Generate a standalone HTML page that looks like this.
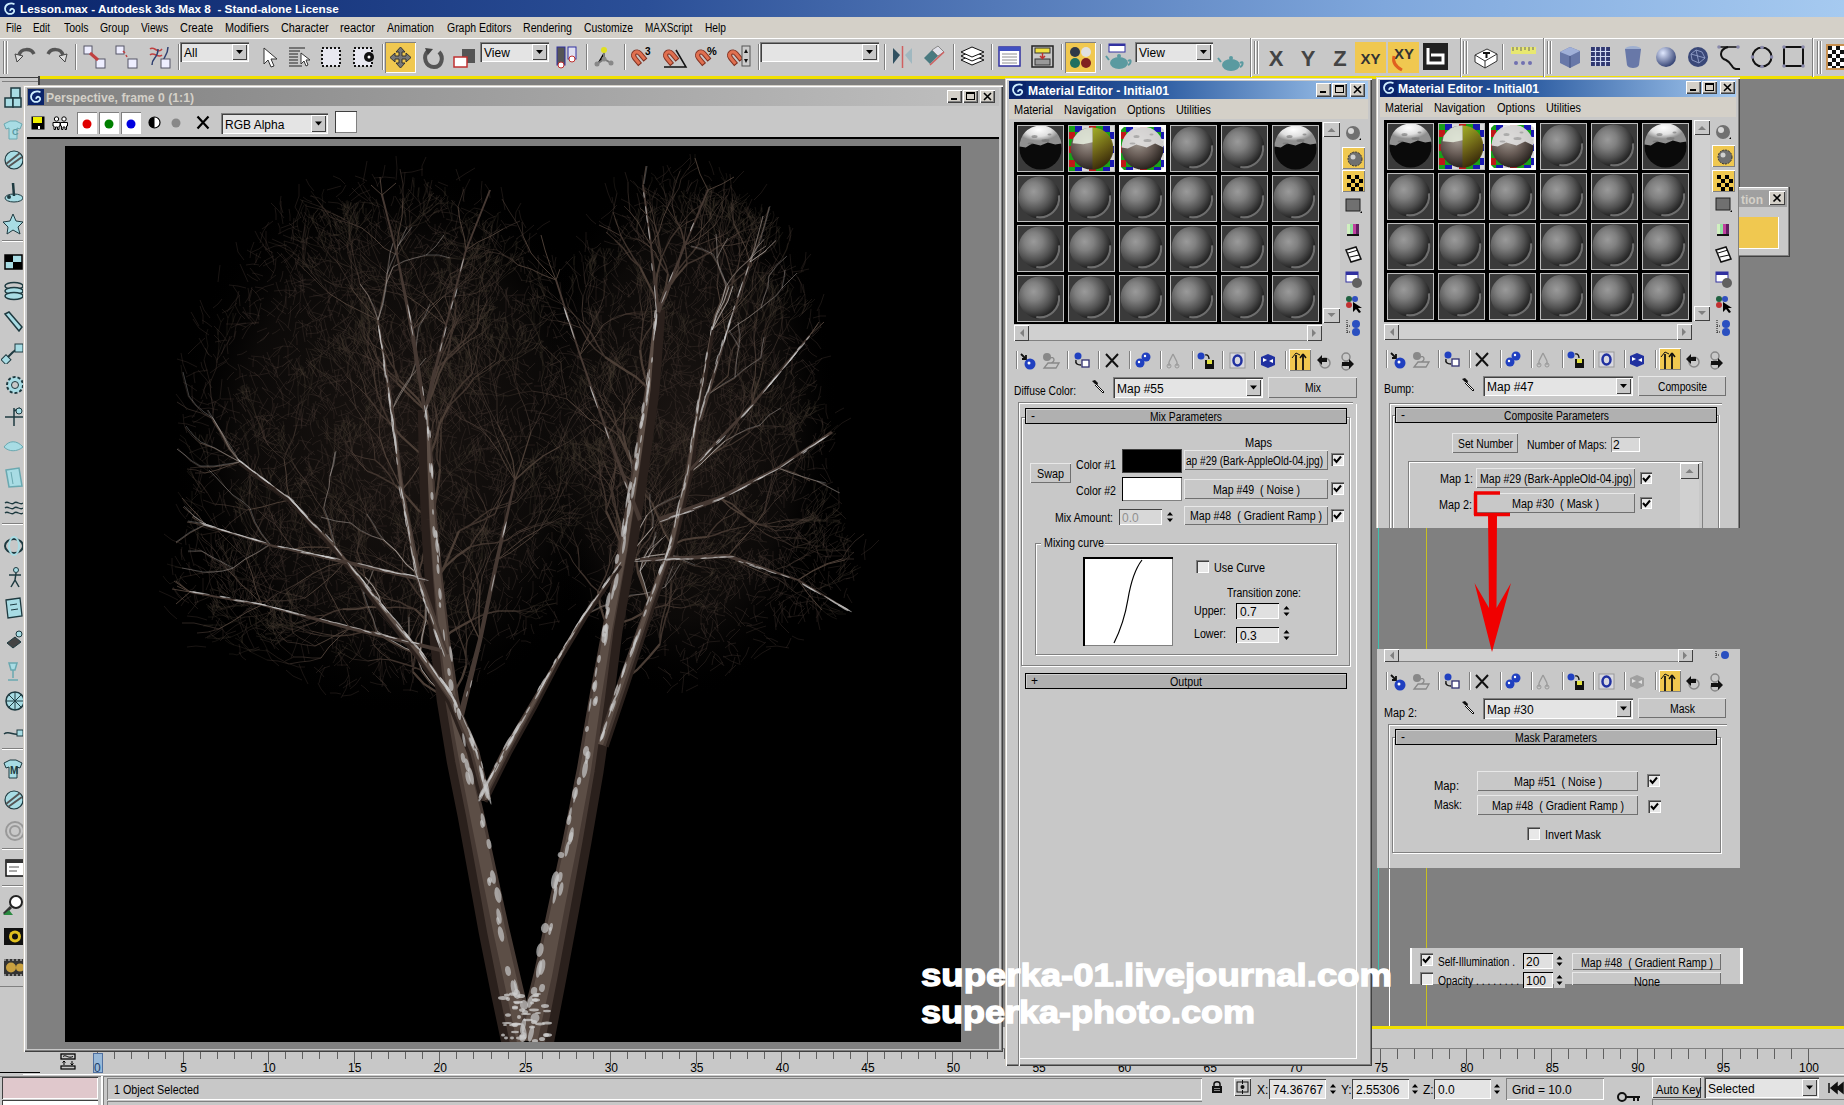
<!DOCTYPE html><html><head><meta charset="utf-8"><style>
html,body{margin:0;padding:0;width:1844px;height:1105px;overflow:hidden;background:#C8C8C8;}
body{position:relative;font-family:"Liberation Sans",sans-serif;}
div{position:absolute;box-sizing:border-box;}
svg{position:absolute;overflow:visible;}
</style></head><body>
<div style="left:0px;top:0px;width:1844px;height:1105px;background:#C8C8C8;"></div>
<div style="left:0px;top:0px;width:1844px;height:17px;background:linear-gradient(90deg,#0A246A 0%,#2B4F97 35%,#7FA7DC 75%,#A6CAF0 100%);"></div>
<svg style="position:absolute;left:2px;top:1px;" width="16" height="16" viewBox="0 0 16 16"><rect width="16" height="16" fill="#0A246A"/><path d="M12.5 3.2 C9 1.5 3.5 2.5 3 7.5 C2.8 11.5 6.5 13.5 9.5 12.8 C12.5 12 13 9 11 8 C9.5 7.3 7.5 8.5 8.5 10" stroke="#CFEFFF" stroke-width="1.8" fill="none"/></svg>
<div style="left:20px;top:2.86px;font-size:11px;line-height:12.65px;color:#fff;font-weight:bold;transform:scaleX(1.0680);transform-origin:0 0;white-space:pre;">Lesson.max - Autodesk 3ds Max 8  - Stand-alone License</div>
<div style="left:0px;top:17px;width:1844px;height:21px;background:#D4D0C8;"></div>
<div style="left:5.5px;top:21.94px;font-size:12px;line-height:13.8px;color:#000;transform:scaleX(0.8013);transform-origin:0 0;white-space:pre;">File</div>
<div style="left:33px;top:21.94px;font-size:12px;line-height:13.8px;color:#000;transform:scaleX(0.8224);transform-origin:0 0;white-space:pre;">Edit</div>
<div style="left:63.5px;top:21.94px;font-size:12px;line-height:13.8px;color:#000;transform:scaleX(0.8745);transform-origin:0 0;white-space:pre;">Tools</div>
<div style="left:100px;top:21.94px;font-size:12px;line-height:13.8px;color:#000;transform:scaleX(0.8697);transform-origin:0 0;white-space:pre;">Group</div>
<div style="left:141px;top:21.94px;font-size:12px;line-height:13.8px;color:#000;transform:scaleX(0.8491);transform-origin:0 0;white-space:pre;">Views</div>
<div style="left:180px;top:21.94px;font-size:12px;line-height:13.8px;color:#000;transform:scaleX(0.9163);transform-origin:0 0;white-space:pre;">Create</div>
<div style="left:225px;top:21.94px;font-size:12px;line-height:13.8px;color:#000;transform:scaleX(0.9037);transform-origin:0 0;white-space:pre;">Modifiers</div>
<div style="left:280.5px;top:21.94px;font-size:12px;line-height:13.8px;color:#000;transform:scaleX(0.9015);transform-origin:0 0;white-space:pre;">Character</div>
<div style="left:340px;top:21.94px;font-size:12px;line-height:13.8px;color:#000;transform:scaleX(0.9372);transform-origin:0 0;white-space:pre;">reactor</div>
<div style="left:387px;top:21.94px;font-size:12px;line-height:13.8px;color:#000;transform:scaleX(0.8808);transform-origin:0 0;white-space:pre;">Animation</div>
<div style="left:446.5px;top:21.94px;font-size:12px;line-height:13.8px;color:#000;transform:scaleX(0.8714);transform-origin:0 0;white-space:pre;">Graph Editors</div>
<div style="left:523px;top:21.94px;font-size:12px;line-height:13.8px;color:#000;transform:scaleX(0.8849);transform-origin:0 0;white-space:pre;">Rendering</div>
<div style="left:584px;top:21.94px;font-size:12px;line-height:13.8px;color:#000;transform:scaleX(0.8644);transform-origin:0 0;white-space:pre;">Customize</div>
<div style="left:645.4px;top:21.94px;font-size:12px;line-height:13.8px;color:#000;transform:scaleX(0.8329);transform-origin:0 0;white-space:pre;">MAXScript</div>
<div style="left:705px;top:21.94px;font-size:12px;line-height:13.8px;color:#000;transform:scaleX(0.8506);transform-origin:0 0;white-space:pre;">Help</div>
<div style="left:0px;top:38px;width:1844px;height:39px;background:#C8C8C8;box-shadow:inset 0 1px 0 #fff;"></div>
<div style="left:40px;top:76px;width:1805px;height:3px;background:#F0E000;"></div>
<div style="left:40px;top:76px;width:2px;height:8px;background:#F0E000;"></div>
<div style="left:38px;top:76px;width:2px;height:10px;background:#404040;"></div>
<div style="left:0px;top:77px;width:38px;height:1px;background:#404040;"></div>
<div style="left:2px;top:81px;width:36px;height:1px;background:#808080;"></div>
<div style="left:40px;top:79px;width:1804px;height:948px;background:#808080;"></div>
<div style="left:1372px;top:1026px;width:472px;height:3px;background:#F0E000;"></div>
<div style="left:1372px;top:1029px;width:472px;height:19px;background:#C8C8C8;"></div>
<div style="left:1378px;top:528px;width:1px;height:457px;background:#3CC0B0;"></div>
<div style="left:1389px;top:869px;width:1px;height:157px;background:#fff;"></div>
<div style="left:1426px;top:528px;width:1px;height:498px;background:#C8C020;"></div>
<div style="left:3px;top:41px;width:1px;height:33px;background:#808080;box-shadow:1px 0 0 #fff;"></div>
<div style="left:6px;top:41px;width:1px;height:33px;background:#808080;box-shadow:1px 0 0 #fff;"></div>
<svg style="position:absolute;left:13px;top:46px;" width="24" height="20" viewBox="0 0 24 20"><path d="M4 16 L2 8 L10 10Z" fill="#ddd" stroke="#444"/><path d="M6 9 C8 2 18 2 21 8" stroke="#555" stroke-width="3.5" fill="none"/></svg>
<svg style="position:absolute;left:45px;top:46px;" width="24" height="20" viewBox="0 0 24 20"><path d="M20 16 L22 8 L14 10Z" fill="#ddd" stroke="#444"/><path d="M18 9 C16 2 6 2 3 8" stroke="#555" stroke-width="3.5" fill="none"/></svg>
<div style="left:75px;top:44px;width:1px;height:26px;background:#808080;box-shadow:1px 0 0 #fff;"></div>
<svg style="position:absolute;left:83px;top:45px;" width="24" height="24" viewBox="0 0 24 24"><rect x="1" y="1" width="8" height="8" fill="#EEF" stroke="#556"/><rect x="13" y="14" width="9" height="9" fill="#EEF" stroke="#556"/><path d="M7 8 L15 15" stroke="#C04040" stroke-width="3"/></svg>
<svg style="position:absolute;left:115px;top:45px;" width="24" height="24" viewBox="0 0 24 24"><rect x="1" y="1" width="8" height="8" fill="#EEF" stroke="#556"/><rect x="13" y="14" width="9" height="9" fill="#EEF" stroke="#556"/><path d="M8 6 L10 8 M11 10 L12 12" stroke="#C04040" stroke-width="1.5"/></svg>
<svg style="position:absolute;left:148px;top:45px;" width="24" height="24" viewBox="0 0 24 24"><path d="M2 4 C6 0 10 10 14 4 M2 10 C6 6 10 14 14 10" stroke="#C04040" stroke-width="1.5" fill="none"/><path d="M4 20 C4 12 10 14 10 4 M14 20 C14 12 20 12 20 2" stroke="#304070" stroke-width="1.5" fill="none"/><rect x="13" y="14" width="9" height="9" fill="#EEF" stroke="#556"/></svg>
<div style="left:178px;top:44px;width:1px;height:26px;background:#808080;box-shadow:1px 0 0 #fff;"></div>
<div style="left:180px;top:42px;width:69px;height:20px;background:#E4E4E4;box-shadow:inset 1px 1px 0 #808080, inset 2px 2px 0 #404040, inset -1px -1px 0 #fff;"></div>
<div style="left:232px;top:44px;width:15px;height:16px;background:#C8C8C8;box-shadow:inset 1px 1px 0 #fff, inset -1px -1px 0 #404040, inset -2px -2px 0 #808080;box-shadow:inset 1px 1px 0 #fff, inset -1px -1px 0 #404040;"></div>
<svg style="position:absolute;left:232px;top:44px;" width="15" height="16" viewBox="0 0 15 16"><path d="M4 6.0 L11 6.0 L7.5 10.0Z" fill="#000"/></svg>
<div style="left:184px;top:47.44px;font-size:12px;line-height:13.8px;color:#000;white-space:pre;">All</div>
<svg style="position:absolute;left:262px;top:47px;" width="18" height="22" viewBox="0 0 18 22"><path d="M2 1 L2 17 L6 13 L9 20 L12 19 L9 12 L15 12Z" fill="#fff" stroke="#333"/></svg>
<svg style="position:absolute;left:288px;top:46px;" width="24" height="22" viewBox="0 0 24 22"><g stroke="#222" stroke-width="1.2"><path d="M1 2 H17 M1 5 H12 M1 8 H10 M1 11 H10 M1 14 H10 M1 17 H10 M1 20 H14"/></g><path d="M13 7 L13 18 L16 15 L18 20 L20 19 L18 14 L22 14Z" fill="#fff" stroke="#333"/></svg>
<svg style="position:absolute;left:320px;top:46px;" width="23" height="23" viewBox="0 0 23 23"><rect x="2" y="2" width="18" height="18" fill="#E8E8F0" stroke="#111" stroke-dasharray="2 2" stroke-width="2"/></svg>
<svg style="position:absolute;left:352px;top:46px;" width="23" height="23" viewBox="0 0 23 23"><rect x="2" y="2" width="18" height="18" fill="#E8E8F0" stroke="#111" stroke-dasharray="2 2" stroke-width="2"/><circle cx="17" cy="11" r="5" fill="#111"/><circle cx="17" cy="11" r="1.5" fill="#fff"/></svg>
<div style="left:382px;top:44px;width:1px;height:26px;background:#808080;box-shadow:1px 0 0 #fff;"></div>
<div style="left:385px;top:42px;width:31px;height:31px;background:#F0C850;box-shadow:inset 1px 1px 0 #808080, inset -1px -1px 0 #fff;"></div>
<svg style="position:absolute;left:388px;top:45px;" width="25" height="25" viewBox="0 0 25 25"><path d="M12.5 2 L17 7 H14 V11 H18 V8 L23 12.5 L18 17 V14 H14 V18 H17 L12.5 23 L8 18 H11 V14 H7 V17 L2 12.5 L7 8 V11 H11 V7 H8Z" fill="#777" stroke="#333"/></svg>
<svg style="position:absolute;left:422px;top:45px;" width="23" height="25" viewBox="0 0 23 25"><path d="M6 6 C0 12 4 22 12 22 C20 22 22 12 17 7" stroke="#555" stroke-width="4" fill="none"/><path d="M3 3 L11 4 L6 10Z" fill="#444"/></svg>
<svg style="position:absolute;left:453px;top:48px;" width="23" height="22" viewBox="0 0 23 22"><rect x="9" y="1" width="13" height="14" fill="#555"/><rect x="1" y="9" width="13" height="10" fill="#fff" stroke="#C03030" stroke-width="1.5"/></svg>
<div style="left:480px;top:42px;width:69px;height:20px;background:#E4E4E4;box-shadow:inset 1px 1px 0 #808080, inset 2px 2px 0 #404040, inset -1px -1px 0 #fff;"></div>
<div style="left:532px;top:44px;width:15px;height:16px;background:#C8C8C8;box-shadow:inset 1px 1px 0 #fff, inset -1px -1px 0 #404040, inset -2px -2px 0 #808080;box-shadow:inset 1px 1px 0 #fff, inset -1px -1px 0 #404040;"></div>
<svg style="position:absolute;left:532px;top:44px;" width="15" height="16" viewBox="0 0 15 16"><path d="M4 6.0 L11 6.0 L7.5 10.0Z" fill="#000"/></svg>
<div style="left:484px;top:47.44px;font-size:12px;line-height:13.8px;color:#000;white-space:pre;">View</div>
<svg style="position:absolute;left:556px;top:45px;" width="23" height="25" viewBox="0 0 23 25"><rect x="1" y="2" width="8" height="18" fill="#555" stroke="#3030A0"/><rect x="12" y="2" width="8" height="12" fill="#E0E0F0" stroke="#3030A0"/><circle cx="5" cy="20" r="3" fill="#fff" stroke="#C03030"/><circle cx="16" cy="14" r="3" fill="#fff" stroke="#C03030"/></svg>
<div style="left:586px;top:44px;width:1px;height:26px;background:#808080;box-shadow:1px 0 0 #fff;"></div>
<svg style="position:absolute;left:594px;top:46px;" width="20" height="22" viewBox="0 0 20 22"><path d="M10 6 L10 13 L3 18 M10 13 L17 17" stroke="#777" stroke-width="2"/><circle cx="10" cy="4" r="3" fill="#E0E020"/><circle cx="3" cy="18" r="2.5" fill="#888"/><circle cx="17" cy="17" r="2.5" fill="#888"/><circle cx="10" cy="13" r="2.5" fill="#888"/></svg>
<div style="left:624px;top:44px;width:1px;height:26px;background:#808080;box-shadow:1px 0 0 #fff;"></div>
<svg style="position:absolute;left:630px;top:45px;" width="24" height="24" viewBox="0 0 24 24"><path d="M3 10 C3 2 14 2 14 10 L14 18 L10 18 L10 11 C10 7 7 7 7 11 L7 18 L3 18Z" fill="#E07050" stroke="#803020" transform="rotate(-40 9 12)"/><text x="15" y="10" font-size="10" font-weight="bold" font-family="Liberation Sans">3</text></svg>
<svg style="position:absolute;left:662px;top:45px;" width="25" height="24" viewBox="0 0 25 24"><path d="M3 10 C3 2 14 2 14 10 L14 18 L10 18 L10 11 C10 7 7 7 7 11 L7 18 L3 18Z" fill="#E07050" stroke="#803020" transform="rotate(-40 9 12)"/><path d="M2 22 H24 L14 5" stroke="#111" fill="none" stroke-width="1.5"/></svg>
<svg style="position:absolute;left:694px;top:45px;" width="25" height="24" viewBox="0 0 25 24"><path d="M3 10 C3 2 14 2 14 10 L14 18 L10 18 L10 11 C10 7 7 7 7 11 L7 18 L3 18Z" fill="#E07050" stroke="#803020" transform="rotate(-40 9 12)"/><text x="13" y="10" font-size="11" font-weight="bold" font-family="Liberation Sans">%</text></svg>
<svg style="position:absolute;left:726px;top:45px;" width="25" height="24" viewBox="0 0 25 24"><path d="M3 10 C3 2 14 2 14 10 L14 18 L10 18 L10 11 C10 7 7 7 7 11 L7 18 L3 18Z" fill="#E07050" stroke="#803020" transform="rotate(-40 9 12)"/><rect x="16" y="1" width="8" height="20" fill="#ccc" stroke="#555"/><path d="M18 8 L20 4 L22 8Z M18 14 L20 18 L22 14Z" fill="#111"/></svg>
<div style="left:758px;top:44px;width:1px;height:26px;background:#808080;box-shadow:1px 0 0 #fff;"></div>
<div style="left:760px;top:42px;width:119px;height:20px;background:#E4E4E4;box-shadow:inset 1px 1px 0 #808080, inset 2px 2px 0 #404040, inset -1px -1px 0 #fff;"></div>
<div style="left:862px;top:44px;width:15px;height:16px;background:#C8C8C8;box-shadow:inset 1px 1px 0 #fff, inset -1px -1px 0 #404040, inset -2px -2px 0 #808080;box-shadow:inset 1px 1px 0 #fff, inset -1px -1px 0 #404040;"></div>
<svg style="position:absolute;left:862px;top:44px;" width="15" height="16" viewBox="0 0 15 16"><path d="M4 6.0 L11 6.0 L7.5 10.0Z" fill="#000"/></svg>
<div style="left:764px;top:47.44px;font-size:12px;line-height:13.8px;color:#000;white-space:pre;"></div>
<div style="left:884px;top:44px;width:1px;height:26px;background:#808080;box-shadow:1px 0 0 #fff;"></div>
<svg style="position:absolute;left:891px;top:46px;" width="23" height="22" viewBox="0 0 23 22"><path d="M2 2 L9 9 L2 18Z" fill="#305060"/><path d="M21 2 L14 9 L21 18Z" fill="#A0B8C0"/><path d="M11.5 0 V22" stroke="#D06060" stroke-width="1.5"/></svg>
<svg style="position:absolute;left:922px;top:46px;" width="25" height="24" viewBox="0 0 25 24"><path d="M2 12 L10 4 L16 10 L8 18Z" fill="#4A7A80"/><path d="M10 4 L16 0 L22 6 L16 10Z" fill="#E0E0E8" stroke="#888"/><path d="M8 19 L22 6" stroke="#D06060" stroke-width="1.5"/></svg>
<div style="left:953px;top:44px;width:1px;height:26px;background:#808080;box-shadow:1px 0 0 #fff;"></div>
<svg style="position:absolute;left:960px;top:46px;" width="25" height="24" viewBox="0 0 25 24"><g fill="#fff" stroke="#111"><path d="M1 14 L12 9 L24 14 L12 19Z"/><path d="M1 10 L12 5 L24 10 L12 15Z"/><path d="M1 6 L12 1 L24 6 L12 11Z"/></g></svg>
<div style="left:991px;top:44px;width:1px;height:26px;background:#808080;box-shadow:1px 0 0 #fff;"></div>
<svg style="position:absolute;left:998px;top:45px;" width="23" height="23" viewBox="0 0 23 23"><rect x="1" y="2" width="21" height="19" fill="#fff" stroke="#3030A0" stroke-width="1.5"/><rect x="1" y="2" width="21" height="4" fill="#4050C0"/><path d="M4 9 H19 M4 12 H19 M4 15 H19 M4 18 H19" stroke="#909090"/></svg>
<svg style="position:absolute;left:1031px;top:45px;" width="23" height="23" viewBox="0 0 23 23"><rect x="1" y="1" width="21" height="21" fill="#C8C8C8" stroke="#222" stroke-width="1.5"/><rect x="4" y="3" width="15" height="5" fill="#F0E040" stroke="#333"/><rect x="4" y="14" width="15" height="6" fill="#999" stroke="#333"/><path d="M11.5 8 V13 M9 11 L11.5 13.5 L14 11" stroke="#C03030" stroke-width="1.5" fill="none"/></svg>
<div style="left:1061px;top:44px;width:1px;height:26px;background:#808080;box-shadow:1px 0 0 #fff;"></div>
<div style="left:1065px;top:42px;width:31px;height:31px;background:#F0C850;box-shadow:inset 1px 1px 0 #808080, inset -1px -1px 0 #fff;"></div>
<svg style="position:absolute;left:1068px;top:45px;" width="25" height="25" viewBox="0 0 25 25"><circle cx="7" cy="7" r="5" fill="#303848"/><circle cx="18" cy="7" r="5" fill="#E0E0E0"/><circle cx="7" cy="18" r="5" fill="#207060"/><circle cx="18" cy="18" r="5" fill="#802020"/></svg>
<div style="left:1100px;top:44px;width:1px;height:26px;background:#808080;box-shadow:1px 0 0 #fff;"></div>
<svg style="position:absolute;left:1106px;top:44px;" width="26" height="26" viewBox="0 0 26 26"><rect x="3" y="0" width="16" height="8" fill="#fff" stroke="#3030A0"/><rect x="3" y="0" width="16" height="2" fill="#3030A0"/><ellipse cx="13" cy="19" rx="9" ry="6" fill="#5A9AA0"/><path d="M3 16 L0 12 M22 17 C26 14 25 20 22 21" stroke="#5A9AA0" stroke-width="2" fill="none"/><circle cx="13" cy="12" r="2" fill="#5A9AA0"/></svg>
<div style="left:1135px;top:42px;width:78px;height:20px;background:#E4E4E4;box-shadow:inset 1px 1px 0 #808080, inset 2px 2px 0 #404040, inset -1px -1px 0 #fff;"></div>
<div style="left:1196px;top:44px;width:15px;height:16px;background:#C8C8C8;box-shadow:inset 1px 1px 0 #fff, inset -1px -1px 0 #404040, inset -2px -2px 0 #808080;box-shadow:inset 1px 1px 0 #fff, inset -1px -1px 0 #404040;"></div>
<svg style="position:absolute;left:1196px;top:44px;" width="15" height="16" viewBox="0 0 15 16"><path d="M4 6.0 L11 6.0 L7.5 10.0Z" fill="#000"/></svg>
<div style="left:1139px;top:47.44px;font-size:12px;line-height:13.8px;color:#000;white-space:pre;">View</div>
<svg style="position:absolute;left:1218px;top:46px;" width="26" height="26" viewBox="0 0 26 26"><ellipse cx="13" cy="19" rx="9" ry="6" fill="#5A9AA0"/><path d="M3 16 L0 12 M22 17 C26 14 25 20 22 21" stroke="#5A9AA0" stroke-width="2" fill="none"/><circle cx="13" cy="12" r="2" fill="#5A9AA0"/></svg>
<div style="left:1250px;top:38px;width:1px;height:39px;background:#808080;box-shadow:1px 0 0 #fff;"></div>
<div style="left:1254px;top:41px;width:1px;height:33px;background:#808080;box-shadow:1px 0 0 #fff;"></div>
<div style="left:1257px;top:41px;width:1px;height:33px;background:#808080;box-shadow:1px 0 0 #fff;"></div>
<svg style="position:absolute;left:1265px;top:47px;" width="22" height="22" viewBox="0 0 22 22"><text x="11" y="19" text-anchor="middle" font-size="22" font-weight="bold" font-family="Liberation Sans" fill="#444">X</text></svg>
<svg style="position:absolute;left:1297px;top:47px;" width="22" height="22" viewBox="0 0 22 22"><text x="11" y="19" text-anchor="middle" font-size="22" font-weight="bold" font-family="Liberation Sans" fill="#444">Y</text></svg>
<svg style="position:absolute;left:1329px;top:47px;" width="22" height="22" viewBox="0 0 22 22"><text x="11" y="19" text-anchor="middle" font-size="22" font-weight="bold" font-family="Liberation Sans" fill="#444">Z</text></svg>
<div style="left:1355px;top:42px;width:31px;height:31px;background:#F0C850;"></div>
<svg style="position:absolute;left:1355px;top:42px;" width="31" height="31" viewBox="0 0 31 31"><text x="15.5" y="22" text-anchor="middle" font-size="15" font-weight="bold" font-family="Liberation Sans" fill="#333">XY</text></svg>
<div style="left:1388px;top:42px;width:31px;height:31px;background:#F0C850;"></div>
<svg style="position:absolute;left:1388px;top:42px;" width="31" height="31" viewBox="0 0 31 31"><text x="16" y="17" text-anchor="middle" font-size="15" font-weight="bold" font-family="Liberation Sans" fill="#333">XY</text><path d="M6 14 C4 22 10 26 14 28" stroke="#E06020" stroke-width="3" fill="none"/></svg>
<div style="left:1423px;top:43px;width:25px;height:27px;background:#222;"></div>
<svg style="position:absolute;left:1423px;top:43px;" width="25" height="27" viewBox="0 0 25 27"><path d="M5 5 V20 H20 V12 H8" stroke="#fff" stroke-width="3" fill="none"/></svg>
<div style="left:1460px;top:38px;width:1px;height:39px;background:#808080;box-shadow:1px 0 0 #fff;"></div>
<div style="left:1463px;top:41px;width:1px;height:33px;background:#808080;box-shadow:1px 0 0 #fff;"></div>
<div style="left:1466px;top:41px;width:1px;height:33px;background:#808080;box-shadow:1px 0 0 #fff;"></div>
<svg style="position:absolute;left:1473px;top:46px;" width="26" height="24" viewBox="0 0 26 24"><path d="M2 9 L14 3 L24 8 L24 15 L12 22 L2 16Z" fill="#fff" stroke="#333"/><path d="M2 9 L12 15 L24 8 M12 15 V22" stroke="#333" fill="none"/><path d="M10 7 H17 M13.5 7 V12" stroke="#111" stroke-width="2"/></svg>
<div style="left:1502px;top:44px;width:1px;height:26px;background:#808080;box-shadow:1px 0 0 #fff;"></div>
<svg style="position:absolute;left:1510px;top:45px;" width="27" height="26" viewBox="0 0 27 26"><rect x="1" y="2" width="25" height="7" fill="#E8E870"/><path d="M3 2 V6 M7 2 V5 M11 2 V6 M15 2 V5 M19 2 V6 M23 2 V5" stroke="#666"/><circle cx="6" cy="18" r="2" fill="#7070B0"/><circle cx="13" cy="18" r="2" fill="#7070B0"/><circle cx="20" cy="18" r="2" fill="#7070B0"/></svg>
<div style="left:1543px;top:38px;width:1px;height:39px;background:#808080;box-shadow:1px 0 0 #fff;"></div>
<div style="left:1547px;top:41px;width:1px;height:33px;background:#808080;box-shadow:1px 0 0 #fff;"></div>
<div style="left:1550px;top:41px;width:1px;height:33px;background:#808080;box-shadow:1px 0 0 #fff;"></div>
<svg style="position:absolute;left:1558px;top:45px;" width="23" height="24" viewBox="0 0 23 24"><path d="M2 7 L12 2 L22 6 L22 18 L12 23 L2 18Z" fill="#6878A8"/><path d="M2 7 L12 11 L22 6 L12 2Z" fill="#A0B0D8"/><path d="M12 11 V23" stroke="#405080"/></svg>
<svg style="position:absolute;left:1590px;top:46px;" width="21" height="21" viewBox="0 0 21 21"><rect x="1" y="1" width="19" height="19" fill="#303870"/><path d="M5.5 1 V20 M10.5 1 V20 M15.5 1 V20 M1 5.5 H20 M1 10.5 H20 M1 15.5 H20" stroke="#D0D8F0" stroke-width="1.2"/></svg>
<svg style="position:absolute;left:1623px;top:45px;" width="20" height="25" viewBox="0 0 20 25"><ellipse cx="10" cy="4" rx="8" ry="3" fill="#A0B0D0"/><path d="M2 4 L4 20 C5 24 15 24 16 20 L18 4" fill="#6878A8"/></svg>
<svg style="position:absolute;left:1655px;top:46px;" width="22" height="22" viewBox="0 0 22 22"><defs><radialGradient id="sg1" cx="0.35" cy="0.3" r="0.7"><stop offset="0" stop-color="#E0E8FF"/><stop offset="1" stop-color="#3A4878"/></radialGradient></defs><circle cx="11" cy="11" r="10" fill="url(#sg1)"/></svg>
<svg style="position:absolute;left:1687px;top:46px;" width="22" height="22" viewBox="0 0 22 22"><circle cx="11" cy="11" r="10" fill="#3A4878"/><path d="M4 8 L9 4 L15 6 L18 12 L12 17 L5 14Z M9 4 L12 17 M4 8 L18 12" stroke="#9AA8D0" stroke-width="0.8" fill="none"/></svg>
<svg style="position:absolute;left:1716px;top:44px;" width="27" height="28" viewBox="0 0 27 28"><path d="M3 3 H22" stroke="#111" stroke-width="1.5"/><path d="M12 3 C2 6 4 14 10 16 C18 20 14 26 24 25" stroke="#111" stroke-width="2" fill="none"/><circle cx="3" cy="3" r="1.8" fill="#88A"/><circle cx="22" cy="3" r="1.8" fill="#88A"/></svg>
<svg style="position:absolute;left:1750px;top:45px;" width="24" height="24" viewBox="0 0 24 24"><circle cx="12" cy="12" r="9.5" stroke="#111" stroke-width="2" fill="none"/><circle cx="12" cy="2.5" r="1.8" fill="#88A"/><circle cx="2.5" cy="12" r="1.8" fill="#88A"/><circle cx="21.5" cy="12" r="1.8" fill="#88A"/><circle cx="12" cy="21.5" r="1.8" fill="#88A"/></svg>
<svg style="position:absolute;left:1782px;top:45px;" width="23" height="24" viewBox="0 0 23 24"><rect x="2" y="2" width="19" height="19" stroke="#111" stroke-width="2" fill="none"/><circle cx="2" cy="2" r="1.8" fill="#88A"/><circle cx="21" cy="2" r="1.8" fill="#88A"/><circle cx="2" cy="21" r="1.8" fill="#88A"/><circle cx="21" cy="21" r="1.8" fill="#88A"/></svg>
<div style="left:1812px;top:38px;width:1px;height:39px;background:#808080;box-shadow:1px 0 0 #fff;"></div>
<div style="left:1817px;top:41px;width:1px;height:33px;background:#808080;box-shadow:1px 0 0 #fff;"></div>
<div style="left:1820px;top:41px;width:1px;height:33px;background:#808080;box-shadow:1px 0 0 #fff;"></div>
<div style="left:1826px;top:44px;width:18px;height:26px;background:#C89050;"></div>
<svg style="position:absolute;left:1828px;top:46px;" width="16" height="22" viewBox="0 0 16 22"><rect width="16" height="22" fill="#fff"/><path d="M0 0h4v4h-4z M8 0h4v4h-4z M4 4h4v4h-4z M12 4h4v4h-4z M0 8h4v4h-4z M8 8h4v4h-4z M4 12h4v4h-4z M12 12h4v4h-4z M0 16h4v4h-4z M8 16h4v4h-4z M4 20h4v2h-4z M12 20h4v2h-4z" fill="#111"/></svg>
<svg style="position:absolute;left:1px;top:87px;overflow:hidden;" width="22" height="22" viewBox="0 0 22 22"><rect x="10" y="1" width="9" height="10" fill="#A8DCE4" stroke="#1E3A40" stroke-width="1.5"/><rect x="4" y="11" width="8" height="9" fill="#A8DCE4" stroke="#1E3A40" stroke-width="1.5"/><rect x="12" y="11" width="8" height="9" fill="#A8DCE4" stroke="#1E3A40" stroke-width="1.5"/></svg>
<svg style="position:absolute;left:1px;top:119px;overflow:hidden;" width="22" height="22" viewBox="0 0 22 22"><path d="M3 5 L9 2 L15 2 L21 5 L19 10 L16 9 L16 20 L8 20 L8 9 L5 10Z" fill="#A8DCE4" stroke="#6AA8B0"/><text x="11" y="16" font-size="9" font-weight="bold" fill="#5A98A0" font-family="Liberation Sans">C</text></svg>
<svg style="position:absolute;left:1px;top:149px;overflow:hidden;" width="22" height="22" viewBox="0 0 22 22"><circle cx="13" cy="11" r="9" fill="#A8DCE4" stroke="#1E3A40" stroke-width="1.2"/><path d="M5 15 L19 4 M7 18 L21 8" stroke="#555" stroke-width="2"/></svg>
<svg style="position:absolute;left:1px;top:181px;overflow:hidden;" width="22" height="22" viewBox="0 0 22 22"><ellipse cx="13" cy="17" rx="9" ry="4" fill="#A8DCE4" stroke="#1E3A40"/><path d="M12 2 L13 15" stroke="#1E3A40" stroke-width="2.5"/><circle cx="8" cy="16" r="2" fill="#1E3A40"/></svg>
<svg style="position:absolute;left:1px;top:213px;overflow:hidden;" width="22" height="22" viewBox="0 0 22 22"><path d="M12 1 L15 8 L22 9 L17 14 L19 21 L12 17 L6 21 L7 14 L2 9 L9 8Z" fill="#A8DCE4" stroke="#1E3A40"/></svg>
<svg style="position:absolute;left:1px;top:251px;overflow:hidden;" width="22" height="22" viewBox="0 0 22 22"><rect x="4" y="4" width="17" height="14" fill="#A8DCE4" stroke="#000" stroke-width="1.5"/><rect x="4" y="4" width="8" height="7" fill="#000"/><rect x="12" y="11" width="9" height="7" fill="#000"/></svg>
<svg style="position:absolute;left:1px;top:280px;overflow:hidden;" width="22" height="22" viewBox="0 0 22 22"><ellipse cx="13" cy="6" rx="9" ry="3.5" fill="none" stroke="#1E3A40" stroke-width="1.5"/><ellipse cx="13" cy="11" rx="9" ry="3.5" fill="#A8DCE4" stroke="#1E3A40" stroke-width="1.5"/><ellipse cx="13" cy="16" rx="9" ry="3.5" fill="#A8DCE4" stroke="#1E3A40" stroke-width="1.5"/></svg>
<svg style="position:absolute;left:1px;top:310px;overflow:hidden;" width="22" height="22" viewBox="0 0 22 22"><path d="M4 4 L8 2 L21 17 L18 21Z" fill="#A8DCE4" stroke="#1E3A40" stroke-width="1.5"/></svg>
<svg style="position:absolute;left:1px;top:342px;overflow:hidden;" width="22" height="22" viewBox="0 0 22 22"><path d="M4 18 L12 10 M12 10 L20 4" stroke="#1E3A40" stroke-width="2"/><rect x="2" y="14" width="7" height="7" fill="#A8DCE4" stroke="#1E3A40" transform="rotate(45 5 17)"/><rect x="14" y="2" width="8" height="8" fill="#A8DCE4" stroke="#1E3A40"/></svg>
<svg style="position:absolute;left:1px;top:374px;overflow:hidden;" width="22" height="22" viewBox="0 0 22 22"><circle cx="14" cy="11" r="8" fill="#A8DCE4" stroke="#1E3A40" stroke-width="2" stroke-dasharray="3 2"/><circle cx="14" cy="11" r="3.5" fill="#C8C8C8" stroke="#1E3A40"/></svg>
<svg style="position:absolute;left:1px;top:405px;overflow:hidden;" width="22" height="22" viewBox="0 0 22 22"><path d="M4 12 H22 M13 3 V21 M13 6 L19 3" stroke="#1E3A40" stroke-width="1.5"/><circle cx="18" cy="6" r="3" fill="#A8DCE4" stroke="#1E3A40"/></svg>
<svg style="position:absolute;left:1px;top:436px;overflow:hidden;" width="22" height="22" viewBox="0 0 22 22"><path d="M3 11 C8 4 16 4 22 11 C16 16 8 16 3 11Z" fill="#A8DCE4" stroke="#6AA8B0"/></svg>
<svg style="position:absolute;left:1px;top:466px;overflow:hidden;" width="22" height="22" viewBox="0 0 22 22"><path d="M5 4 L18 2 L21 20 L8 21Z" fill="#A8DCE4" stroke="#6AA8B0" stroke-width="1.5"/><path d="M10 6 L12 18" stroke="#6AA8B0"/></svg>
<svg style="position:absolute;left:1px;top:496px;overflow:hidden;" width="22" height="22" viewBox="0 0 22 22"><path d="M4 7 C7 4 10 10 13 7 C16 4 19 10 22 7 M4 12 C7 9 10 15 13 12 C16 9 19 15 22 12 M4 17 C7 14 10 20 13 17 C16 14 19 20 22 17" stroke="#1E3A40" stroke-width="1.3" fill="none"/></svg>
<svg style="position:absolute;left:1px;top:535px;overflow:hidden;" width="22" height="22" viewBox="0 0 22 22"><ellipse cx="13" cy="11" rx="9" ry="7" fill="none" stroke="#1E3A40" stroke-width="2"/><ellipse cx="13" cy="11" rx="5" ry="9" fill="none" stroke="#A8DCE4" stroke-width="2"/></svg>
<svg style="position:absolute;left:1px;top:566px;overflow:hidden;" width="22" height="22" viewBox="0 0 22 22"><circle cx="15" cy="4" r="2.5" fill="#A8DCE4" stroke="#1E3A40"/><path d="M15 7 L14 14 L10 21 M14 14 L18 21 M8 9 L20 9" stroke="#1E3A40" stroke-width="1.5" fill="none"/></svg>
<svg style="position:absolute;left:1px;top:597px;overflow:hidden;" width="22" height="22" viewBox="0 0 22 22"><path d="M5 3 L19 1 L21 19 L7 21Z" fill="#A8DCE4" stroke="#1E3A40" stroke-width="1.3"/><path d="M9 8 L16 7 M10 13 L17 12" stroke="#1E3A40"/></svg>
<svg style="position:absolute;left:1px;top:629px;overflow:hidden;" width="22" height="22" viewBox="0 0 22 22"><path d="M6 14 L14 8 L20 13 L12 19Z" fill="#444" stroke="#1E3A40"/><circle cx="18" cy="5" r="3" fill="#A8DCE4" stroke="#1E3A40"/></svg>
<svg style="position:absolute;left:1px;top:660px;overflow:hidden;" width="22" height="22" viewBox="0 0 22 22"><path d="M8 3 L16 3 L14 10 L10 10Z M12 10 V18 M7 20 H17" stroke="#6AA8B0" stroke-width="1.5" fill="#A8DCE4"/></svg>
<svg style="position:absolute;left:1px;top:690px;overflow:hidden;" width="22" height="22" viewBox="0 0 22 22"><circle cx="14" cy="11" r="9" fill="#A8DCE4" stroke="#1E3A40" stroke-width="1.5"/><path d="M14 2 V20 M5 11 H23 M8 5 L20 17 M20 5 L8 17" stroke="#1E3A40"/></svg>
<svg style="position:absolute;left:1px;top:721px;overflow:hidden;" width="22" height="22" viewBox="0 0 22 22"><path d="M3 13 C8 9 14 16 20 12" stroke="#1E3A40" stroke-width="1.5" fill="none"/><rect x="16" y="9" width="6" height="6" fill="#A8DCE4" stroke="#1E3A40"/></svg>
<svg style="position:absolute;left:1px;top:758px;overflow:hidden;" width="22" height="22" viewBox="0 0 22 22"><path d="M3 5 L9 2 L15 2 L21 5 L19 10 L16 9 L16 20 L8 20 L8 9 L5 10Z" fill="#A8DCE4" stroke="#1E3A40"/><text x="9" y="16" font-size="10" font-weight="bold" fill="#1E3A40" font-family="Liberation Sans">M</text></svg>
<svg style="position:absolute;left:1px;top:789px;overflow:hidden;" width="22" height="22" viewBox="0 0 22 22"><circle cx="13" cy="11" r="9" fill="#A8DCE4" stroke="#1E3A40" stroke-width="1.2"/><path d="M5 15 L19 4 M7 18 L21 8" stroke="#555" stroke-width="2"/></svg>
<svg style="position:absolute;left:1px;top:820px;overflow:hidden;" width="22" height="22" viewBox="0 0 22 22"><circle cx="14" cy="11" r="9" fill="none" stroke="#999" stroke-width="2"/><circle cx="14" cy="11" r="5" fill="none" stroke="#999" stroke-width="2"/></svg>
<svg style="position:absolute;left:1px;top:857px;overflow:hidden;" width="22" height="22" viewBox="0 0 22 22"><rect x="5" y="3" width="18" height="16" fill="#fff" stroke="#111" stroke-width="1.5"/><rect x="5" y="3" width="18" height="3" fill="#333"/><path d="M8 10 H18 M8 14 H16" stroke="#555"/></svg>
<svg style="position:absolute;left:1px;top:894px;overflow:hidden;" width="22" height="22" viewBox="0 0 22 22"><path d="M3 20 L10 13" stroke="#333" stroke-width="3"/><circle cx="15" cy="8" r="6" fill="#fff" stroke="#222" stroke-width="2"/><path d="M2 21 L8 16 L12 21Z" fill="#2A8A40"/></svg>
<svg style="position:absolute;left:1px;top:925px;overflow:hidden;" width="22" height="22" viewBox="0 0 22 22"><rect x="3" y="3" width="20" height="17" fill="#111"/><circle cx="14" cy="11.5" r="6" fill="#E0C020"/><circle cx="14" cy="11.5" r="3" fill="#111"/></svg>
<svg style="position:absolute;left:1px;top:956px;overflow:hidden;" width="22" height="22" viewBox="0 0 22 22"><rect x="3" y="3" width="20" height="17" fill="#333"/><circle cx="10" cy="11.5" r="5" fill="#C8A040"/><circle cx="19" cy="11.5" r="4" fill="#C8A040"/><path d="M3 4 H23 M3 19 H23" stroke="#ddd" stroke-dasharray="2 2"/></svg>
<div style="left:2px;top:240px;width:22px;height:1px;background:#808080;box-shadow:0 1px 0 #fff;"></div>
<div style="left:2px;top:523px;width:22px;height:1px;background:#808080;box-shadow:0 1px 0 #fff;"></div>
<div style="left:2px;top:748px;width:22px;height:1px;background:#808080;box-shadow:0 1px 0 #fff;"></div>
<div style="left:2px;top:848px;width:22px;height:1px;background:#808080;box-shadow:0 1px 0 #fff;"></div>
<div style="left:2px;top:885px;width:22px;height:1px;background:#808080;box-shadow:0 1px 0 #fff;"></div>
<div style="left:0px;top:986px;width:23px;height:1px;background:#808080;"></div>
<div style="left:23px;top:1048px;width:1821px;height:1px;background:#808080;"></div>
<div style="left:97px;top:1049px;width:1px;height:15px;background:#606060;"></div>
<div style="left:94.6640625px;top:1061.94px;font-size:12px;line-height:13.8px;color:#000;white-space:pre;">0</div>
<div style="left:114px;top:1049px;width:1px;height:10px;background:#606060;"></div>
<div style="left:131px;top:1049px;width:1px;height:10px;background:#606060;"></div>
<div style="left:148px;top:1049px;width:1px;height:10px;background:#606060;"></div>
<div style="left:165px;top:1049px;width:1px;height:10px;background:#606060;"></div>
<div style="left:183px;top:1049px;width:1px;height:15px;background:#606060;"></div>
<div style="left:180.2140625px;top:1061.94px;font-size:12px;line-height:13.8px;color:#000;white-space:pre;">5</div>
<div style="left:200px;top:1049px;width:1px;height:10px;background:#606060;"></div>
<div style="left:217px;top:1049px;width:1px;height:10px;background:#606060;"></div>
<div style="left:234px;top:1049px;width:1px;height:10px;background:#606060;"></div>
<div style="left:251px;top:1049px;width:1px;height:10px;background:#606060;"></div>
<div style="left:268px;top:1049px;width:1px;height:15px;background:#606060;"></div>
<div style="left:262.428125px;top:1061.94px;font-size:12px;line-height:13.8px;color:#000;white-space:pre;">10</div>
<div style="left:285px;top:1049px;width:1px;height:10px;background:#606060;"></div>
<div style="left:302px;top:1049px;width:1px;height:10px;background:#606060;"></div>
<div style="left:319px;top:1049px;width:1px;height:10px;background:#606060;"></div>
<div style="left:337px;top:1049px;width:1px;height:10px;background:#606060;"></div>
<div style="left:354px;top:1049px;width:1px;height:15px;background:#606060;"></div>
<div style="left:347.978125px;top:1061.94px;font-size:12px;line-height:13.8px;color:#000;white-space:pre;">15</div>
<div style="left:371px;top:1049px;width:1px;height:10px;background:#606060;"></div>
<div style="left:388px;top:1049px;width:1px;height:10px;background:#606060;"></div>
<div style="left:405px;top:1049px;width:1px;height:10px;background:#606060;"></div>
<div style="left:422px;top:1049px;width:1px;height:10px;background:#606060;"></div>
<div style="left:439px;top:1049px;width:1px;height:15px;background:#606060;"></div>
<div style="left:433.528125px;top:1061.94px;font-size:12px;line-height:13.8px;color:#000;white-space:pre;">20</div>
<div style="left:456px;top:1049px;width:1px;height:10px;background:#606060;"></div>
<div style="left:473px;top:1049px;width:1px;height:10px;background:#606060;"></div>
<div style="left:491px;top:1049px;width:1px;height:10px;background:#606060;"></div>
<div style="left:508px;top:1049px;width:1px;height:10px;background:#606060;"></div>
<div style="left:525px;top:1049px;width:1px;height:15px;background:#606060;"></div>
<div style="left:519.078125px;top:1061.94px;font-size:12px;line-height:13.8px;color:#000;white-space:pre;">25</div>
<div style="left:542px;top:1049px;width:1px;height:10px;background:#606060;"></div>
<div style="left:559px;top:1049px;width:1px;height:10px;background:#606060;"></div>
<div style="left:576px;top:1049px;width:1px;height:10px;background:#606060;"></div>
<div style="left:593px;top:1049px;width:1px;height:10px;background:#606060;"></div>
<div style="left:610px;top:1049px;width:1px;height:15px;background:#606060;"></div>
<div style="left:604.628125px;top:1061.94px;font-size:12px;line-height:13.8px;color:#000;white-space:pre;">30</div>
<div style="left:627px;top:1049px;width:1px;height:10px;background:#606060;"></div>
<div style="left:645px;top:1049px;width:1px;height:10px;background:#606060;"></div>
<div style="left:662px;top:1049px;width:1px;height:10px;background:#606060;"></div>
<div style="left:679px;top:1049px;width:1px;height:10px;background:#606060;"></div>
<div style="left:696px;top:1049px;width:1px;height:15px;background:#606060;"></div>
<div style="left:690.178125px;top:1061.94px;font-size:12px;line-height:13.8px;color:#000;white-space:pre;">35</div>
<div style="left:713px;top:1049px;width:1px;height:10px;background:#606060;"></div>
<div style="left:730px;top:1049px;width:1px;height:10px;background:#606060;"></div>
<div style="left:747px;top:1049px;width:1px;height:10px;background:#606060;"></div>
<div style="left:764px;top:1049px;width:1px;height:10px;background:#606060;"></div>
<div style="left:781px;top:1049px;width:1px;height:15px;background:#606060;"></div>
<div style="left:775.728125px;top:1061.94px;font-size:12px;line-height:13.8px;color:#000;white-space:pre;">40</div>
<div style="left:799px;top:1049px;width:1px;height:10px;background:#606060;"></div>
<div style="left:816px;top:1049px;width:1px;height:10px;background:#606060;"></div>
<div style="left:833px;top:1049px;width:1px;height:10px;background:#606060;"></div>
<div style="left:850px;top:1049px;width:1px;height:10px;background:#606060;"></div>
<div style="left:867px;top:1049px;width:1px;height:15px;background:#606060;"></div>
<div style="left:861.2781249999999px;top:1061.94px;font-size:12px;line-height:13.8px;color:#000;white-space:pre;">45</div>
<div style="left:884px;top:1049px;width:1px;height:10px;background:#606060;"></div>
<div style="left:901px;top:1049px;width:1px;height:10px;background:#606060;"></div>
<div style="left:918px;top:1049px;width:1px;height:10px;background:#606060;"></div>
<div style="left:935px;top:1049px;width:1px;height:10px;background:#606060;"></div>
<div style="left:952px;top:1049px;width:1px;height:15px;background:#606060;"></div>
<div style="left:946.828125px;top:1061.94px;font-size:12px;line-height:13.8px;color:#000;white-space:pre;">50</div>
<div style="left:970px;top:1049px;width:1px;height:10px;background:#606060;"></div>
<div style="left:987px;top:1049px;width:1px;height:10px;background:#606060;"></div>
<div style="left:1004px;top:1049px;width:1px;height:10px;background:#606060;"></div>
<div style="left:1021px;top:1049px;width:1px;height:10px;background:#606060;"></div>
<div style="left:1038px;top:1049px;width:1px;height:15px;background:#606060;"></div>
<div style="left:1032.378125px;top:1061.94px;font-size:12px;line-height:13.8px;color:#000;white-space:pre;">55</div>
<div style="left:1055px;top:1049px;width:1px;height:10px;background:#606060;"></div>
<div style="left:1072px;top:1049px;width:1px;height:10px;background:#606060;"></div>
<div style="left:1089px;top:1049px;width:1px;height:10px;background:#606060;"></div>
<div style="left:1106px;top:1049px;width:1px;height:10px;background:#606060;"></div>
<div style="left:1124px;top:1049px;width:1px;height:15px;background:#606060;"></div>
<div style="left:1117.928125px;top:1061.94px;font-size:12px;line-height:13.8px;color:#000;white-space:pre;">60</div>
<div style="left:1141px;top:1049px;width:1px;height:10px;background:#606060;"></div>
<div style="left:1158px;top:1049px;width:1px;height:10px;background:#606060;"></div>
<div style="left:1175px;top:1049px;width:1px;height:10px;background:#606060;"></div>
<div style="left:1192px;top:1049px;width:1px;height:10px;background:#606060;"></div>
<div style="left:1209px;top:1049px;width:1px;height:15px;background:#606060;"></div>
<div style="left:1203.4781249999999px;top:1061.94px;font-size:12px;line-height:13.8px;color:#000;white-space:pre;">65</div>
<div style="left:1226px;top:1049px;width:1px;height:10px;background:#606060;"></div>
<div style="left:1243px;top:1049px;width:1px;height:10px;background:#606060;"></div>
<div style="left:1260px;top:1049px;width:1px;height:10px;background:#606060;"></div>
<div style="left:1278px;top:1049px;width:1px;height:10px;background:#606060;"></div>
<div style="left:1295px;top:1049px;width:1px;height:15px;background:#606060;"></div>
<div style="left:1289.028125px;top:1061.94px;font-size:12px;line-height:13.8px;color:#000;white-space:pre;">70</div>
<div style="left:1312px;top:1049px;width:1px;height:10px;background:#606060;"></div>
<div style="left:1329px;top:1049px;width:1px;height:10px;background:#606060;"></div>
<div style="left:1346px;top:1049px;width:1px;height:10px;background:#606060;"></div>
<div style="left:1363px;top:1049px;width:1px;height:10px;background:#606060;"></div>
<div style="left:1380px;top:1049px;width:1px;height:15px;background:#606060;"></div>
<div style="left:1374.578125px;top:1061.94px;font-size:12px;line-height:13.8px;color:#000;white-space:pre;">75</div>
<div style="left:1397px;top:1049px;width:1px;height:10px;background:#606060;"></div>
<div style="left:1414px;top:1049px;width:1px;height:10px;background:#606060;"></div>
<div style="left:1432px;top:1049px;width:1px;height:10px;background:#606060;"></div>
<div style="left:1449px;top:1049px;width:1px;height:10px;background:#606060;"></div>
<div style="left:1466px;top:1049px;width:1px;height:15px;background:#606060;"></div>
<div style="left:1460.128125px;top:1061.94px;font-size:12px;line-height:13.8px;color:#000;white-space:pre;">80</div>
<div style="left:1483px;top:1049px;width:1px;height:10px;background:#606060;"></div>
<div style="left:1500px;top:1049px;width:1px;height:10px;background:#606060;"></div>
<div style="left:1517px;top:1049px;width:1px;height:10px;background:#606060;"></div>
<div style="left:1534px;top:1049px;width:1px;height:10px;background:#606060;"></div>
<div style="left:1551px;top:1049px;width:1px;height:15px;background:#606060;"></div>
<div style="left:1545.678125px;top:1061.94px;font-size:12px;line-height:13.8px;color:#000;white-space:pre;">85</div>
<div style="left:1568px;top:1049px;width:1px;height:10px;background:#606060;"></div>
<div style="left:1586px;top:1049px;width:1px;height:10px;background:#606060;"></div>
<div style="left:1603px;top:1049px;width:1px;height:10px;background:#606060;"></div>
<div style="left:1620px;top:1049px;width:1px;height:10px;background:#606060;"></div>
<div style="left:1637px;top:1049px;width:1px;height:15px;background:#606060;"></div>
<div style="left:1631.2281249999999px;top:1061.94px;font-size:12px;line-height:13.8px;color:#000;white-space:pre;">90</div>
<div style="left:1654px;top:1049px;width:1px;height:10px;background:#606060;"></div>
<div style="left:1671px;top:1049px;width:1px;height:10px;background:#606060;"></div>
<div style="left:1688px;top:1049px;width:1px;height:10px;background:#606060;"></div>
<div style="left:1705px;top:1049px;width:1px;height:10px;background:#606060;"></div>
<div style="left:1722px;top:1049px;width:1px;height:15px;background:#606060;"></div>
<div style="left:1716.778125px;top:1061.94px;font-size:12px;line-height:13.8px;color:#000;white-space:pre;">95</div>
<div style="left:1740px;top:1049px;width:1px;height:10px;background:#606060;"></div>
<div style="left:1757px;top:1049px;width:1px;height:10px;background:#606060;"></div>
<div style="left:1774px;top:1049px;width:1px;height:10px;background:#606060;"></div>
<div style="left:1791px;top:1049px;width:1px;height:10px;background:#606060;"></div>
<div style="left:1808px;top:1049px;width:1px;height:15px;background:#606060;"></div>
<div style="left:1798.9921875px;top:1061.94px;font-size:12px;line-height:13.8px;color:#000;white-space:pre;">100</div>
<div style="left:93px;top:1053px;width:10px;height:20px;background:#98B8D8;box-shadow:inset 1px 1px 0 #5070A0, inset -1px -1px 0 #5070A0;"></div>
<div style="left:94px;top:1061.94px;font-size:12px;line-height:13.8px;color:#20406A;white-space:pre;">0</div>
<div style="left:23px;top:1074px;width:1821px;height:1px;background:#fff;"></div>
<div style="left:0px;top:1076px;width:1844px;height:1px;background:#808080;"></div>
<svg style="position:absolute;left:60px;top:1053px;" width="16" height="16" viewBox="0 0 16 16"><rect x="1" y="1" width="14" height="5" fill="none" stroke="#000" stroke-width="1.3"/><path d="M3 3.5 C6 1 8 6 13 3.5" stroke="#000" fill="none"/><path d="M4 8 V12 M2.5 9.5 L4 8 L5.5 9.5 M12 8 V12 M10.5 10.5 L12 12 L13.5 10.5" stroke="#000" fill="none"/><rect x="1" y="13" width="14" height="3" fill="none" stroke="#000" stroke-width="1.2"/></svg>
<div style="left:0px;top:1072px;width:40px;height:1px;background:#000;"></div>
<div style="left:2px;top:1077px;width:96px;height:22px;background:#E0C8CC;box-shadow:inset 1px 1px 0 #404040, inset -1px -1px 0 #fff;"></div>
<div style="left:2px;top:1100px;width:96px;height:6px;background:#fff;box-shadow:inset 1px 1px 0 #404040;"></div>
<div style="left:101px;top:1076px;width:2px;height:29px;background:#fff;box-shadow:1px 0 0 #808080;"></div>
<div style="left:107px;top:1078px;width:1095px;height:22px;background:#C8C8C8;box-shadow:inset 1px 1px 0 #808080, inset -1px -1px 0 #fff;"></div>
<div style="left:114px;top:1083.94px;font-size:12px;line-height:13.8px;color:#000;transform:scaleX(0.8977);transform-origin:0 0;white-space:pre;">1 Object Selected</div>
<div style="left:107px;top:1101px;width:1095px;height:4px;background:#C8C8C8;box-shadow:inset 1px 1px 0 #808080;"></div>
<svg style="position:absolute;left:1211px;top:1080px;" width="12" height="14" viewBox="0 0 12 14"><rect x="1" y="6" width="10" height="7" fill="#111"/><path d="M3 6 V4 C3 1 9 1 9 4 V6" stroke="#111" stroke-width="1.5" fill="none"/><rect x="3" y="8" width="6" height="1" fill="#888"/><rect x="3" y="10" width="6" height="1" fill="#888"/></svg>
<div style="left:1234px;top:1078px;width:17px;height:18px;background:#C8C8C8;box-shadow:inset 1px 1px 0 #fff, inset -1px -1px 0 #404040;"></div>
<svg style="position:absolute;left:1234px;top:1078px;" width="17" height="18" viewBox="0 0 17 18"><rect x="3" y="4" width="11" height="10" fill="none" stroke="#111"/><circle cx="8.5" cy="9" r="2" fill="#111"/><path d="M8.5 2 V6 M8.5 12 V16" stroke="#111"/></svg>
<div style="left:1257px;top:1083.94px;font-size:12px;line-height:13.8px;color:#000;white-space:pre;">X:</div>
<div style="left:1269px;top:1079px;width:57px;height:20px;background:#E4E4E4;box-shadow:inset 1px 1px 0 #404040, inset -1px -1px 0 #fff;"></div>
<div style="left:1273px;top:1083.94px;font-size:12px;line-height:13.8px;color:#000;white-space:pre;">74.36767</div>
<div style="left:1328px;top:1080px;width:10px;height:18px;background:#C8C8C8;"></div>
<svg style="position:absolute;left:1328px;top:1080px;" width="10" height="18" viewBox="0 0 10 18"><path d="M2.0 7.5 L5.0 4.0 L8.0 7.5Z M2.0 10.5 L5.0 14.0 L8.0 10.5Z" fill="#000"/></svg>
<div style="left:1341px;top:1083.94px;font-size:12px;line-height:13.8px;color:#000;white-space:pre;">Y:</div>
<div style="left:1352px;top:1079px;width:57px;height:20px;background:#E4E4E4;box-shadow:inset 1px 1px 0 #404040, inset -1px -1px 0 #fff;"></div>
<div style="left:1356px;top:1083.94px;font-size:12px;line-height:13.8px;color:#000;white-space:pre;">2.55306</div>
<div style="left:1410px;top:1080px;width:10px;height:18px;background:#C8C8C8;"></div>
<svg style="position:absolute;left:1410px;top:1080px;" width="10" height="18" viewBox="0 0 10 18"><path d="M2.0 7.5 L5.0 4.0 L8.0 7.5Z M2.0 10.5 L5.0 14.0 L8.0 10.5Z" fill="#000"/></svg>
<div style="left:1423px;top:1083.94px;font-size:12px;line-height:13.8px;color:#000;white-space:pre;">Z:</div>
<div style="left:1434px;top:1079px;width:57px;height:20px;background:#E4E4E4;box-shadow:inset 1px 1px 0 #404040, inset -1px -1px 0 #fff;"></div>
<div style="left:1438px;top:1083.94px;font-size:12px;line-height:13.8px;color:#000;white-space:pre;">0.0</div>
<div style="left:1492px;top:1080px;width:10px;height:18px;background:#C8C8C8;"></div>
<svg style="position:absolute;left:1492px;top:1080px;" width="10" height="18" viewBox="0 0 10 18"><path d="M2.0 7.5 L5.0 4.0 L8.0 7.5Z M2.0 10.5 L5.0 14.0 L8.0 10.5Z" fill="#000"/></svg>
<div style="left:1506px;top:1078px;width:98px;height:22px;background:#C8C8C8;box-shadow:inset 1px 1px 0 #808080, inset -1px -1px 0 #fff;"></div>
<div style="left:1512px;top:1083.94px;font-size:12px;line-height:13.8px;color:#000;white-space:pre;">Grid = 10.0</div>
<svg style="position:absolute;left:1617px;top:1091px;" width="24" height="12" viewBox="0 0 24 12"><circle cx="5" cy="6" r="4" fill="none" stroke="#111" stroke-width="2"/><path d="M9 6 H23 M17 6 V10 M21 6 V10" stroke="#111" stroke-width="2"/></svg>
<div style="left:1652px;top:1077px;width:49px;height:21px;background:#C8C8C8;box-shadow:inset 1px 1px 0 #fff, inset -1px -1px 0 #404040;"></div>
<div style="left:1656px;top:1083.94px;font-size:12px;line-height:13.8px;color:#000;transform:scaleX(0.9246);transform-origin:0 0;white-space:pre;">Auto Key</div>
<div style="left:1704px;top:1077px;width:115px;height:21px;background:#E4E4E4;box-shadow:inset 1px 1px 0 #808080, inset 2px 2px 0 #404040, inset -1px -1px 0 #fff;"></div>
<div style="left:1802px;top:1079px;width:15px;height:17px;background:#C8C8C8;box-shadow:inset 1px 1px 0 #fff, inset -1px -1px 0 #404040, inset -2px -2px 0 #808080;box-shadow:inset 1px 1px 0 #fff, inset -1px -1px 0 #404040;"></div>
<svg style="position:absolute;left:1802px;top:1079px;" width="15" height="17" viewBox="0 0 15 17"><path d="M4 6.5 L11 6.5 L7.5 10.5Z" fill="#000"/></svg>
<div style="left:1708px;top:1082.94px;font-size:12px;line-height:13.8px;color:#000;white-space:pre;">Selected</div>
<svg style="position:absolute;left:1828px;top:1082px;" width="16" height="12" viewBox="0 0 16 12"><path d="M1 1 V11 M3 6 L9 1 V11Z M9 6 L15 1 V11Z" stroke="#111" fill="#111" stroke-width="1.5"/></svg>
<div style="left:1652px;top:1099px;width:192px;height:6px;background:#C8C8C8;box-shadow:inset 1px 1px 0 #808080;"></div>
<div style="left:23px;top:85px;width:980px;height:967px;background:#C8C8C8;box-shadow:inset 1px 1px 0 #D4D0C8, inset 2px 2px 0 #fff, inset -1px -1px 0 #404040, inset -2px -2px 0 #808080;"></div>
<div style="left:27px;top:88px;width:972px;height:18px;background:linear-gradient(90deg,#808080,#C0C0C0);"></div>
<svg style="position:absolute;left:28px;top:89px;" width="16" height="16" viewBox="0 0 16 16"><rect width="16" height="16" fill="#0A246A"/><path d="M12.5 3.2 C9 1.5 3.5 2.5 3 7.5 C2.8 11.5 6.5 13.5 9.5 12.8 C12.5 12 13 9 11 8 C9.5 7.3 7.5 8.5 8.5 10" stroke="#CFEFFF" stroke-width="1.8" fill="none"/></svg>
<div style="left:46px;top:91.94px;font-size:12px;line-height:13.8px;color:#D4D0C8;font-weight:bold;transform:scaleX(1.0181);transform-origin:0 0;white-space:pre;">Perspective, frame 0 (1:1)</div>
<div style="left:947px;top:90px;width:15px;height:13px;background:#D4D0C8;box-shadow:inset 1px 1px 0 #fff, inset -1px -1px 0 #404040, inset -2px -2px 0 #808080;box-shadow:inset 1px 1px 0 #fff, inset -1px -1px 0 #404040, inset -2px -2px 0 #808080;"></div>
<div style="left:963px;top:90px;width:15px;height:13px;background:#D4D0C8;box-shadow:inset 1px 1px 0 #fff, inset -1px -1px 0 #404040, inset -2px -2px 0 #808080;box-shadow:inset 1px 1px 0 #fff, inset -1px -1px 0 #404040, inset -2px -2px 0 #808080;"></div>
<div style="left:980px;top:90px;width:15px;height:13px;background:#D4D0C8;box-shadow:inset 1px 1px 0 #fff, inset -1px -1px 0 #404040, inset -2px -2px 0 #808080;box-shadow:inset 1px 1px 0 #fff, inset -1px -1px 0 #404040, inset -2px -2px 0 #808080;"></div>
<svg style="position:absolute;left:947px;top:90px;" width="15" height="13" viewBox="0 0 15 13"><rect x="4" y="8" width="6" height="2" fill="#000"/></svg>
<svg style="position:absolute;left:963px;top:90px;" width="15" height="13" viewBox="0 0 15 13"><rect x="3.5" y="2.5" width="8" height="7" fill="none" stroke="#000"/><rect x="3" y="2" width="9" height="2" fill="#000"/></svg>
<svg style="position:absolute;left:980px;top:90px;" width="15" height="13" viewBox="0 0 15 13"><path d="M4 3 L11 10 M11 3 L4 10" stroke="#000" stroke-width="1.6"/></svg>
<svg style="position:absolute;left:31px;top:116px;" width="14" height="14" viewBox="0 0 14 14"><rect x="0.5" y="0.5" width="13" height="13" fill="#000"/><rect x="2" y="1" width="9" height="6" fill="#F0F000"/><rect x="3" y="9" width="7" height="4" fill="#000"/><rect x="7" y="10" width="2" height="3" fill="#fff"/><rect x="2" y="8" width="10" height="1" fill="#000"/></svg>
<svg style="position:absolute;left:52px;top:116px;" width="17" height="14" viewBox="0 0 17 14"><g fill="#fff" stroke="#000" stroke-width="1"><circle cx="4.5" cy="3" r="2.2"/><circle cx="12" cy="3" r="2.2"/><path d="M1 6.5 H8 V10 H7 V13.5 H5.5 V11 H3.5 V13.5 H2 V10 H1Z"/><path d="M8.5 6.5 H15.5 V10 H14.5 V13.5 H13 V11 H11 V13.5 H9.5 V10 H8.5Z"/></g></svg>
<div style="left:77px;top:112px;width:20px;height:22px;background:#fff;box-shadow:inset 1px 1px 0 #808080, inset -1px -1px 0 #fff;"></div>
<svg style="position:absolute;left:77px;top:112px;" width="20" height="22" viewBox="0 0 20 22"><circle cx="10" cy="12" r="4.5" fill="#E00000"/></svg>
<div style="left:99px;top:112px;width:20px;height:22px;background:#fff;box-shadow:inset 1px 1px 0 #808080, inset -1px -1px 0 #fff;"></div>
<svg style="position:absolute;left:99px;top:112px;" width="20" height="22" viewBox="0 0 20 22"><circle cx="10" cy="12" r="4.5" fill="#008000"/></svg>
<div style="left:121px;top:112px;width:20px;height:22px;background:#fff;box-shadow:inset 1px 1px 0 #808080, inset -1px -1px 0 #fff;"></div>
<svg style="position:absolute;left:121px;top:112px;" width="20" height="22" viewBox="0 0 20 22"><circle cx="10" cy="12" r="4.5" fill="#0000E0"/></svg>
<svg style="position:absolute;left:148px;top:116px;" width="13" height="13" viewBox="0 0 13 13"><circle cx="6.5" cy="6.5" r="5.5" fill="#fff" stroke="#000" stroke-width="1.2"/><path d="M6.5 1 A5.5 5.5 0 0 0 6.5 12Z" fill="#000"/></svg>
<svg style="position:absolute;left:170px;top:117px;" width="12" height="12" viewBox="0 0 12 12"><circle cx="6" cy="6" r="4.5" fill="#888"/></svg>
<svg style="position:absolute;left:196px;top:115px;" width="14" height="15" viewBox="0 0 14 15"><path d="M1.5 1.5 L12.5 13.5 M12.5 1.5 L1.5 13.5" stroke="#000" stroke-width="2.2"/></svg>
<div style="left:221px;top:113px;width:107px;height:21px;background:#E4E4E4;box-shadow:inset 1px 1px 0 #808080, inset 2px 2px 0 #404040, inset -1px -1px 0 #fff;"></div>
<div style="left:311px;top:115px;width:15px;height:17px;background:#C8C8C8;box-shadow:inset 1px 1px 0 #fff, inset -1px -1px 0 #404040, inset -2px -2px 0 #808080;box-shadow:inset 1px 1px 0 #fff, inset -1px -1px 0 #404040;"></div>
<svg style="position:absolute;left:311px;top:115px;" width="15" height="17" viewBox="0 0 15 17"><path d="M4 6.5 L11 6.5 L7.5 10.5Z" fill="#000"/></svg>
<div style="left:225px;top:118.94px;font-size:12px;line-height:13.8px;color:#000;white-space:pre;">RGB Alpha</div>
<div style="left:335px;top:111px;width:22px;height:22px;background:#fff;box-shadow:inset 1px 1px 0 #404040, inset -1px -1px 0 #808080;"></div>
<div style="left:27px;top:137px;width:972px;height:2px;background:#000;"></div>
<div style="left:27px;top:139px;width:972px;height:910px;background:#808080;"></div>
<div style="left:65px;top:146px;width:896px;height:896px;background:#000;"></div>
<svg style="position:absolute;left:65px;top:146px;overflow:hidden;" width="896" height="896" viewBox="65 146 896 896"><defs><radialGradient id="hz"><stop offset="0" stop-color="#3A2E28" stop-opacity="0.45"/><stop offset="0.7" stop-color="#2A221E" stop-opacity="0.28"/><stop offset="1" stop-color="#000" stop-opacity="0"/></radialGradient></defs><ellipse cx="398" cy="440" rx="226" ry="275" fill="url(#hz)"/><ellipse cx="684" cy="430" rx="155" ry="270" fill="url(#hz)"/><path d="M443 327l-3-11-2-10 M336 529l-2-8-4-7 M419 367l-3-6-2-5 M478 595l1-6 2-6 M506 656l7-9 7-8 M330 273l-5-10-6-9 M670 441l-5-10-7-7 M559 478l5-3 6-4 M322 382l9-5 11-2 M326 356l3-9 0-10 M490 641l9-8 11-5 M237 518l-1-6-3-6 M431 206l5-6 4-5 M289 609l8-1 7-3 M248 282l-4-9-4-9 M776 568l-8-8-10-4 M262 229l6-4 5-4 M755 281l3-9 0-10 M752 403l1-6 0-5 M700 423l-8-8-5-10 M274 260l-6-8-6-8 M337 390l-1-11-2-10 M629 298l-1-7-3-6 M613 297l-5-9-5-10 M243 632l-3-8-3-8 M760 367l-2-8 1-9 M421 351l1-6 2-6 M400 469l7-5 6-6 M413 343l-6-4-4-5 M467 279l-8-9-8-7 M488 562l11-4 12 0 M644 525l8-1 9 2 M265 581l7-5 7-4 M620 351l7-8 9-6 M786 276l-5-11-8-9 M413 294l3-5 2-5 M297 345l0-5-1-6 M337 591l0-6-1-5 M622 245l-9-1-9-3 M623 596l6-8 5-9 M279 376l7-8 6-8 M522 522l-4-2-5-1 M817 529l-2-5-1-4 M778 273l9-3 9-4 M377 490l-7-1-7 0 M374 178l11-1 10 1 M384 590l-9-5-9-5 M531 412l3-10 0-11 M741 656l-9-1-9 2 M406 660l-4-7-2-7 M389 512l4-9 7-8 M817 424l-6-8-8-6 M606 307l0-6 0-5 M759 562l3-7 4-6 M257 586l5-2 5-4 M812 502l-4-3-5-1 M383 417l-6-5-6-4 M745 410l6-4 7-1 M342 287l-3-6-6-4 M504 461l-6-2-6-1 M697 661l3-9 4-8 M305 249l-2-11 2-11 M198 609l-7-7-6-8 M532 492l5-10 5-10 M382 677l0-11-1-10 M325 340l-5-8-6-7 M238 443l-10-5-9-5 M439 537l1-6 1-6 M685 490l-1-5-3-6 M732 614l-6-6-6-6 M280 430l-10-6-9-9 M331 552l1-7 1-7 M360 305l0-11 1-11 M443 566l3-6 2-6 M416 459l4-7 6-5 M243 635l3-6 1-6 M477 582l-5-2-5-4 M273 445l-8-6-9-4 M706 565l-3-9-3-9 M521 545l-3-8-3-9 M693 387l-9-6-9-8 M712 288l-7 0-6 2 M466 279l5-6 6-5 M438 418l-2-9-6-7 M630 387l3-7 2-7 M594 530l5-3 3-4 M544 448l-4-3-4-3 M350 549l7-9 10-6 M295 318l3-6 4-4 M785 559l-3-4-2-6 M487 674l9-5 9-6 M513 322l8-5 8-6 M246 601l6-4 5-5 M741 246l1-6 0-7 M809 614l-2-8 0-8 M694 549l-5-9-6-8 M523 339l-2-9-2-9 M317 377l-5-8-7-7 M503 493l-10-4-11-3 M287 549l3-7 1-7 M340 396l10-5 10-6 M517 409l10-5 11-1 M254 438l5-10 4-10 M534 386l7 0 6-3 M409 212l9-6 9-6 M750 533l8-9 7-8 M619 510l7-1 7 0 M310 468l-4-5-1-7 M762 494l-3-6-2-7 M660 421l-3-12-7-9 M731 421l0-9 0-9 M392 581l2-5 3-4 M775 432l1-8-2-8 M281 614l6-8 6-9 M682 522l-5-11-9-7 M734 400l8-2 7-2 M750 619l7-3 7-5 M355 371l-3-9-5-7 M758 333l10-5 10-6 M705 301l1-9 0-8 M384 685l-7-1-7-2 M472 635l-3-7-2-7 M593 249l4-2 4-4 M540 619l-3-5-2-6 M466 405l-4-4-3-6 M621 418l-1-5 0-6 M293 368l3-7 5-6 M401 277l7-5 6-6 M523 436l-3-11-6-9 M696 250l0-7-2-7 M632 558l6-4 5-4 M667 693l5-6 6-4 M275 649l-3-6-2-6 M642 350l-6-9-4-10 M727 220l-11-4-10-5 M457 395l-5-4-4-4 M447 526l-5-4-5-4 M610 306l7-4 5-6 M370 201l-7-9-5-10 M636 495l0-5-1-5 M820 521l-7-5-6-6 M821 444l3-7 1-8 M512 590l3-7 2-8 M684 535l7-4 6-6 M386 469l-5-1-5-2 M301 429l1-11 2-10 M382 240l-4-5-4-5 M786 454l6-9 9-7 M392 438l7-1 7-1 M747 420l3-8 2-8 M422 321l1-7 0-7 M689 249l-10-4-11-2 M274 400l-6-6-6-7 M288 533l-4-7-5-6 M212 611l1-5 1-5 M666 362l0-9-1-9 M444 246l7-3 6-6 M422 176l0-10 4-9 M408 446l-9-2-8 1 M369 612l7-6 10-3 M323 560l5-8 5-7 M340 251l-1-6-4-5 M555 267l0-5 1-5 M812 514l2-8 4-7 M807 548l-10-1-9 3 M686 472l7-3 6-4 M739 664l-8-3-8-5 M347 301l1-9 4-8 M500 546l3-10-1-11 M371 390l-6-8-9-7 M391 410l-5-1-5-3 M306 334l11-1 10-4 M358 237l6-7 6-6 M208 404l7-2 6-4 M580 414l-1-9-2-9 M586 345l2-6 0-6 M708 625l-1-6-4-5 M451 318l-4-5-2-6 M279 498l4-6 4-7 M316 605l-9-5-8-5 M302 524l-10-3-10 1 M325 304l5-6 5-6 M236 471l-9-6-8-6 M681 213l1-6 2-6 M229 579l-1-8-2-7 M764 355l5-2 5-1 M743 510l4-9 5-7 M452 509l4-5 5-4 M738 363l7-3 8-3 M656 418l-9-9-8-8 M726 462l6-9 8-7 M440 668l6-3 4-4 M406 349l-4-7-4-7 M635 410l-7-8-8-7 M200 494l-3-5-4-5 M555 459l-9-2-9-4 M434 440l-5-10-4-11 M655 487l5-6 6-5 M726 405l5-4 5-5 M219 607l-2-7-1-6 M733 333l10-5 8-7 M503 481l3-4 3-4 M691 609l-2-7-5-6 M563 538l-1-8-1-9 M774 573l-1-11 0-11 M740 219l-5-6-5-6 M375 560l9-2 10 0 M776 630l-1-11-1-12 M731 424l-1-8-1-7 M307 613l-8-5-7-4 M359 344l-8-6-8-5 M773 395l7-9 7-9 M720 496l-1-6-1-6 M201 399l3-8 2-9 M657 258l4-4 2-6 M473 549l1-10-1-9 M605 512l-5-7-3-9 M291 658l4-10 3-10 M317 387l10-4 11-2 M634 384l6-1 5 0 M430 458l3-11 8-9 M715 465l-4-7-4-7 M639 521l1-12 5-10 M434 553l4-6 4-7 M479 368l0-9 3-8 M692 646l-4-9-4-8 M387 594l-6-8-7-8 M339 244l-5-9-4-10 M312 322l11-4 10-4 M688 347l12-1 12-3 M411 562l-6-6-8-4 M652 581l7-3 7-6 M291 400l-8-6-6-7 M722 238l0-8 1-8 M530 368l-5-4-2-5 M408 579l-3-5-4-3 M485 442l1-10 2-9 M351 201l9-7 10-4 M332 523l-3-10-5-9 M229 460l10-6 10-6 M295 490l7-6 5-7 M701 359l-2-10 0-11 M468 278l2-8 2-7 M762 583l2-6 1-5 M544 470l-7-6-7-6 M411 346l-3-8-5-8 M341 393l-5-11-8-8 M692 243l-5-6-2-8 M585 489l4-5 2-5 M829 425l-10-5-12-3 M325 417l5-7 4-8 M255 293l9-6 10-3 M328 410l-6-10-2-11 M314 437l-3-8-1-9 M430 474l4-11 2-11 M274 519l-7-5-7-2 M322 514l-5-4-3-7 M792 596l-8-2-8-3 M675 511l-5-6-1-8 M675 246l6-3 6-2 M384 317l1-8 1-8 M246 497l5-10 3-9 M695 561l-3-6-4-5 M254 607l-2-9-1-10 M323 632l0-6 0-6 M777 370l-3-11 0-11 M465 384l2-7-1-7 M653 293l5-7 2-8 M246 572l-5-6-6-7 M245 386l-2-7-1-6 M273 253l-5-3-4-4 M655 451l2-6 4-5 M675 465l8-7 9-6 M720 295l11-2 9-7 M433 696l-3-6-1-7 M787 429l-4-3-5-2 M655 512l2-10-1-9 M386 345l-3-4-4-4 M631 218l-9-2-9-4 M487 532l5-4 3-5 M488 236l6-4 6-3 M344 249l-7-9-8-7 M765 643l-5-2-7-2 M752 601l5-8 7-6 M452 231l6-3 7-1 M666 507l-2-8-3-8 M485 346l5-7 4-7 M286 486l5-6 5-7 M584 515l-7-1-7-2 M776 529l3-5 1-6 M343 688l7-5 7-4 M432 566l8-8 6-10 M499 541l2-8 2-7 M576 324l-3-4-4-5 M493 561l6-7 6-7 M639 483l6-10 10-6 M710 457l-5-4-6-5 M516 261l4-5 3-6 M336 197l6-5 4-7 M296 514l-6-7-6-7 M661 235l6-3 7-3 M438 213l5-7 6-5 M701 392l6-7 8-4 M381 314l-5-5-5-4 M279 639l2-5 2-6 M352 276l11-4 11-1 M212 620l2-7 4-6 M659 372l-2-6-1-7 M441 504l9-8 10-5 M391 206l2-5 1-5 M488 542l6-7 8-4 M786 568l8-7 11-3 M618 252l2-11 3-11 M788 492l-2-7 1-7 M828 557l-10-4-11-4 M273 537l1-8 2-9 M489 404l-2-8-4-9 M195 552l2-9 1-10 M217 547l-2-8 1-7 M431 666l-7-3-6-3 M384 408l1-5 2-6 M429 509l-2-11-2-11 M572 484l5-9 9-7 M444 293l5-7 3-8 M559 550l-3-5-3-5 M370 646l8-2 8 1 M688 343l-1-7-2-6 M688 429l9-6 10-3 M649 338l-3-7-6-4 M707 643l4-10 7-8 M353 458l-4-4-3-5 M322 284l-4-8-4-7 M702 488l-1-9 0-10 M379 635l-2-6-5-4 M402 292l4-10 2-11 M338 263l-8-7-5-10 M726 495l-3-11-6-11 M809 569l-7-8-9-4 M349 426l0-6-1-6 M451 444l2-9 6-7 M260 592l-5-4-4-4 M375 323l9-4 9-5 M791 375l1-7 0-7 M666 450l-7-4-7-4 M491 382l9-7 11-4 M369 381l-2-9 0-9 M318 397l3-5 4-5 M660 235l-4-3-5-3 M604 442l2-10 4-9 M415 410l-7-4-8-3 M365 252l7-6 9-4 M616 487l9-3 9-5 M692 386l12-2 11-2 M351 556l-9-3-8-6 M307 337l-1-6 2-7 M207 637l8-5 7-5 M335 278l-4-8-1-9 M322 302l8-7 10-5 M724 283l0-5-3-5 M624 354l4-4 5-3 M240 654l0-5-1-5 M799 317l6-6 4-7 M745 359l-6-8-2-11 M443 524l5-6 4-7 M236 536l-8-5-6-6 M562 432l5-8 2-8 M370 446l-1-8-3-7 M450 692l1-7 0-7 M834 430l8-7 9-5 M375 485l-9-4-9-1 M302 241l2-11 2-12 M376 587l3-8 5-5 M264 465l6-6 3-7 M263 406l-3-6-3-6 M370 502l6-9 4-10 M814 384l0-7-3-7 M302 545l0-11 1-11 M666 564l-7-6-6-8 M475 465l1-8 1-8 M668 496l5-7 4-6 M659 435l-3-11 1-12 M484 287l-3-10-6-10 M701 576l-10-3-9-5 M391 448l8-6 6-9 M283 520l5-5 3-6 M712 575l-8-6-9-4 M712 665l1-6 2-5 M623 590l0-9-1-9 M424 601l-7-9-7-7 M460 432l-1-8 1-8 M694 357l-6-7-6-6 M335 505l5-7 6-6 M708 254l0-8-2-8 M244 604l-1-7 0-7 M276 556l3-8 5-7 M260 374l3-4 3-5 M369 454l3-5 2-6 M666 387l-7-2-7 0 M706 414l3-6 2-6 M775 581l-8-8-10-5 M615 460l-3-7 0-7 M389 463l-2-5-4-3 M283 400l-2-10-5-8 M299 286l10-2 8-6 M680 453l-2-8-2-7 M715 607l-7-6-5-6 M351 427l-2-7-3-5 M660 438l1-11-2-10 M290 221l0-6-1-6 M581 436l3-4 4-5 M518 496l3-5 2-5 M776 260l-4-9-3-9 M593 494l-8-6-7-8 M628 512l5-3 4-5 M544 299l-6-2-6-3 M582 262l0-6-3-5 M693 451l-5-10-3-10 M865 560l-1-11 2-10 M555 494l-3-7-4-6 M679 681l7-7 8-5 M318 219l7-4 6-4 M184 418l6-2 5 0 M431 430l-12-3-12-2 M701 625l0-10 3-10 M688 396l2-11 4-11 M715 455l-8-4-7-5 M363 577l2-5 1-6 M716 367l9-5 11-3 M738 581l-8-8-7-9 M329 466l-2-11-5-11 M293 630l-11-4-11-3 M296 287l-4-11-6-10 M653 371l1-12-2-12 M560 391l4-3 5-2 M493 496l3-5 2-6 M245 601l3-10 0-11 M326 695l-5-6-3-6 M325 351l7-5 5-8 M365 414l-7-7-8-6 M344 275l5-4 3-6 M464 464l9-4 9 0 M348 208l-10-5-10-1 M302 406l0-6-2-5 M668 448l4-2 5-2 M465 519l1-7 2-7 M234 605l-7-9-9-8 M270 252l-4-11-6-9 M733 267l-2-11-5-9 M499 636l-3-11-3-11 M315 263l-5-5-3-6 M535 561l-4-8-5-9 M283 466l6-4 6-4 M468 418l9-4 11-1 M744 239l-6-2-6-3 M280 535l1-10 4-9 M672 450l-9-2-9-2 M479 315l-1-7-2-8 M392 565l12 0 11-1 M337 287l-7-4-7-4 M279 493l3-9 5-8 M437 310l0-8-3-8 M589 548l4-5 6-3 M431 622l5-3 4-2 M337 346l-10-5-10-3 M235 523l0-6 1-7 M770 572l-2-6 1-6 M597 534l-3-5-2-5 M383 369l-8-3-7-4 M668 234l-3-4-4-3 M332 623l-6-4-5-6 M411 191l1-7 1-7 M703 291l6-10 9-7 M345 540l4-3 5-3 M331 439l-5-7-5-6 M596 418l3-6 5-4 M781 539l-5-5-5-5 M368 666l10-5 8-9 M326 249l4-3 5-1 M403 475l-2-6-3-5 M560 422l0-6 1-6 M700 422l-1-12 2-11 M680 515l-1-6 1-6 M249 376l10-1 10-2 M755 590l1-6 3-6 M338 416l11-3 10-7 M393 551l4-5 2-6 M458 502l2-7 4-6 M716 518l-4-11-4-11 M397 504l-2-5-2-5 M838 575l5-9 7-9 M268 454l7-7 7-8 M766 528l0-8 0-8 M271 478l3-8 3-9 M288 383l5-8 7-6 M559 331l-7-10-8-9 M243 461l2-5 1-6 M698 679l-8-5-10-2 M690 421l5-10 6-10 M604 325l-8-6-7-6 M766 580l-9-5-7-6 M446 560l-4-7-3-8 M440 637l-5-4-5-3 M328 526l9-4 9 0 M275 645l9-6 10-6 M625 629l1-10-1-9 M683 331l-4-2-4-3 M296 611l-5-8-3-9 M377 662l1-11 5-9 M758 344l6-2 7-1 M643 594l-10-5-11-3 M479 259l-2-7-4-5 M271 527l-3-7-3-7 M380 227l-9-4-7-6 M758 557l8-2 7 1 M468 329l6-6 4-8 M713 573l-6-6-3-7 M695 584l-4-3-6-2 M785 581l-2-7 1-6 M650 400l3-9 4-9 M494 284l-3-7-5-6 M322 551l9-4 9-1 M454 416l5-3 6-1 M559 407l-3-7-5-7 M726 476l-9-6-10-5 M554 268l-9-5-8-6 M613 490l7-7 10-4 M646 653l-3-4-4-4 M681 600l1-12 2-11 M689 492l-4-10 1-10 M220 420l4-10 4-9 M342 353l5-5 5-5 M698 485l4-5 2-5 M391 316l-9-3-9-1 M291 457l4-8 4-8 M676 213l-4-6-5-5 M496 611l-3-6-3-5 M308 314l6-7 7-6 M484 426l8-5 5-7 M635 472l-3-4-5-3 M399 678l-5-5-5-7 M460 181l-2-6-2-6 M743 331l-5-3-4-5 M609 584l-2-9-4-10 M441 592l2-5 2-5 M819 371l-6-4-4-6 M487 506l-1-6-2-7 M795 373l10-6 11-4 M730 335l7-4 6-5 M377 447l6-9 10-7 M770 462l6-5 7-2 M329 278l1-6 3-6 M437 252l-6-3-4-5 M266 531l3-12 1-12 M526 603l6-5 6-5 M328 236l10-1 9-4 M211 451l1-7 2-7 M372 276l-5-10-5-10 M474 246l-2-5-1-5 M641 569l-7-3-7-3 M410 341l7-5 8-4 M356 580l6-6 7-4 M351 354l-8-5-10-1 M218 282l1-9 1-8 M717 563l-5-2-5-1 M627 546l-1-6-3-6 M560 400l-3-9-5-7 M721 448l-7-5-9-3 M553 422l4-4 3-6 M588 613l0-6 2-6 M410 544l-8-3-8-4 M435 429l2-9 5-9 M722 587l-5-3-5-3 M663 643l9-9 9-7 M735 450l7-10 7-9 M317 602l0-6 2-6 M351 254l-5-8-7-7 M507 322l-7-1-7-2 M691 347l-8-4-6-6 M281 505l3-6 4-5 M436 396l-7-6-6-7 M468 512l-3-4-3-4 M789 332l-2-6-1-7 M460 533l-2-7-1-7 M227 380l3-4 4-4 M436 649l4-10 5-9 M274 555l6-5 6-6 M200 409l9-1 9 2 M297 560l3-10 0-11 M212 388l-6-9-8-9 M580 449l-5-9-4-10 M755 463l-4-8-2-9 M700 347l5-4 6-3 M393 481l-7-6-4-9 M425 452l1-5 1-6 M400 349l1-11 3-10 M479 452l-1-6 0-6 M644 458l7-7 6-8 M660 466l-10-2-9-4 M278 377l-2-7-4-7 M693 283l4-9 2-9 M825 566l-3-8-5-6 M681 428l6-9 9-6 M253 604l-6-9-3-10 M440 424l7-9 6-10 M325 605l-2-6-1-7 M349 663l7-7 7-8 M754 219l-3-7-4-5 M630 356l1-6 3-6 M674 447l11-6 8-8 M472 457l2-10 5-9 M341 617l-4-6-3-7 M669 267l5-3 6-2 M254 265l4-7 3-7 M257 436l4-3 4-3 M710 299l0-12 2-11 M460 360l-3-8-4-8 M717 435l-5-7-4-8 M693 253l5-9 3-10 M645 637l7-3 5-5 M558 492l-4-9-6-8 M246 288l-8-2-9-1 M532 290l-2-9 0-10 M686 552l-3-4-3-4 M563 467l6-7 8-5 M398 220l7-9 8-8 M223 512l-1-10-3-10 M621 377l-2-10-3-10 M332 411l-4-6-1-7 M418 259l5-7 6-6 M224 449l1-8 4-7 M453 510l4-10 7-9 M309 297l12-2 11-3 M673 289l-4-3-4-3 M701 199l7-2 8-2 M332 409l7-2 7-3 M440 279l-8-7-7-9 M238 582l-5-9-8-7 M319 561l-7-6-8-4 M397 435l6-8 7-8 M407 241l-6-7-8-4 M482 317l-10-4-9-4 M293 305l2-9 0-9 M230 516l-4-8-2-9 M294 407l7-4 6-4 M625 425l4-5 5-3 M485 297l-3-7-2-8 M684 451l11-3 11-3 M708 620l7-9 3-11 M542 583l3-10-1-9 M187 584l-4-4-3-4 M626 537l1-6-2-6 M383 320l0-8 0-8 M292 625l5-5 2-7 M519 314l3-8 1-8 M656 617l1-6 0-6 M396 457l-5-5-3-6 M653 498l-7-8-5-9 M319 683l2-8 4-8 M624 522l0-5-3-5 M214 594l-4-11-1-11 M212 327l-5-4-5-3 M254 591l4-9 3-10 M509 302l-5-8-4-8 M311 274l2-12 7-9 M684 332l1-7 3-5 M765 566l9-6 10-3 M244 260l-6-8-2-10 M509 298l5-4 4-4 M380 312l-7-8-10-8 M631 297l-9-6-9-6 M332 459l10-3 10-1 M723 447l5-6 2-6 M391 693l-7-8-5-9 M730 305l2-6-2-7 M800 528l3-10 0-9 M221 354l5-9 6-9 M535 355l3-8 4-7 M430 198l0-9 2-9 M632 666l5-6 6-5 M739 300l-2-7-5-7 M526 228l-5-9-2-9 M266 429l6-1 6 1 M455 529l-5-8-4-9 M420 455l2-5 1-6 M691 558l-4-9-2-11 M327 403l-8-6-8-5 M375 339l-1-5-1-5 M264 515l5 0 6 1 M300 506l-5-5-5-4 M279 650l-9-8-10-3 M485 428l0-5-1-5 M606 429l0-7-2-6 M482 511l-6-4-6-3 M490 380l0-9 2-8 M433 412l8-2 8 1 M307 426l-7-1-7 1 M274 413l2-5 2-5 M401 405l-9-5-7-5 M432 470l2-6 3-5 M343 250l9-7 6-9 M712 525l-8-2-8 0 M612 386l-3-7-2-7 M360 307l2-8 4-6 M322 537l9-6 8-8 M218 365l6-3 5-4 M529 366l-7-2-5-4 M618 468l-7-6-8-5 M448 407l-4-10 0-10 M618 277l-3-7-1-8 M404 609l-2-11 3-11 M268 580l5-3 4-4 M216 554l3-5 5-4 M623 493l-3-10 0-11 M785 470l3-4 4-3 M628 396l-1-10-2-10 M444 218l-3-11 0-10 M343 220l5-8 3-9 M628 356l1-7-1-7 M477 682l1-6 2-6 M741 627l-7-9-10-7 M461 595l9-5 6-7 M421 437l-2-8-3-7 M309 268l-5-9-5-9 M520 444l1-10 4-9 M382 687l1-9 3-9 M316 510l4-7 5-6 M378 340l7-9 3-12 M449 250l-2-7-3-7 M305 611l3-6 0-7 M361 445l-8-3-8-1 M224 456l-11-2-10-3 M687 586l5-6 4-6 M460 313l-7-4-6-5 M686 408l6-5 8-3 M324 651l-3-5-5-5 M612 330l-2-6 1-6 M274 377l4-11 1-11 M331 406l-5-11-8-8 M368 529l9-3 10 0 M280 528l1-7-1-8 M415 304l-5-8-4-8 M692 415l-5-2-6-1 M651 491l6-5 5-5 M667 457l-9-3-10 0 M397 382l-3-4-3-4 M804 607l-7-5-5-8 M270 593l-10-4-11-4 M741 662l5-7 3-8 M735 568l4-2 5-2 M686 308l7-5 5-7 M592 361l-5-2-6 0 M557 473l6-4 5-4 M708 612l-3-5-5-5 M409 230l-7-5-8-5 M709 326l3-4 3-5 M644 560l4-5 4-4 M649 630l-7-6-9-3 M769 455l6-5 6-5 M822 563l-3-8-4-9 M222 413l3-6 0-6 M499 294l-1-11 0-12 M364 438l11 0 10-1 M351 641l-6-8-6-7 M678 345l-5-7-6-4 M425 383l8-5 8-6 M626 466l-6-6-5-7 M477 413l4-2 5-2 M398 673l-5-9-7-7 M714 550l4-6 5-5 M403 561l-6-1-6-3 M534 380l-5-3-3-5 M631 443l-4-5-4-4 M734 302l7-6 6-6 M440 319l7-6 7-5 M730 301l5-2 4-4 M668 396l-3-10-2-11 M671 393l-5-2-6-2 M293 270l-6-9-6-8 M325 260l3-9 2-9 M289 376l0-6-1-6 M712 480l1-8-2-7 M334 419l0-6-2-6 M312 368l4-4 3-5 M432 372l3-11 7-10 M263 276l-6-2-5-1 M550 437l7-6 5-7 M394 412l-5-6-5-7 M354 335l4-7 3-8 M381 599l6-6 5-7 M259 320l-1-9-4-9 M399 348l5-5 6-4 M743 403l-6-8-8-7 M478 531l-9-2-8-4 M257 514l-2-12 1-11 M395 229l-2-5-2-5 M365 510l5-4 3-4 M697 663l-1-6 0-6 M782 312l0-8-3-7 M490 513l3-11 6-10 M791 405l5-2 5-4 M416 592l1-8-1-7 M672 519l3-6 5-6 M472 367l-3-9-3-9 M456 354l8-5 7-6 M761 421l-2-8-1-9 M295 369l-5-7-5-6 M602 472l0-6-1-5 M251 603l-9-5-8-7 M411 323l6-7 7-6 M352 643l2-10-1-11 M740 665l-1-6-2-6 M561 270l6-7 6-6 M659 364l-6-9-4-9 M709 641l-4-6-4-7 M338 561l-1-11 2-10 M522 281l-4-8-5-6 M547 496l-12 0-11 3 M637 276l6-8 7-7 M287 558l-8-3-8 0 M434 331l8-8 8-5 M572 524l-6-3-5-4 M686 441l5-11 7-10 M266 443l6-6 7-5 M486 368l-4-8 0-9 M253 477l-1-7 0-7 M367 539l2-5 0-5 M425 423l9-6 8-6 M355 516l-10-2-9-4 M395 279l-6-7-7-6 M564 373l-8-7-11-4 M722 578l3-4 4-4 M547 337l1-5 0-6 M709 448l2-6 3-6 M595 260l-6-9-2-11 M365 510l-6-6-7-4 M756 424l-9-4-10-2 M790 485l-5-1-6-2 M439 235l-8-6-6-9 M653 213l-1-12 3-11 M467 559l-3-5-3-4 M635 307l7-8 6-9 M763 369l-5-2-5-3 M415 604l5-7 7-5 M648 362l5-9 6-8 M456 325l-7-6-6-6 M347 349l-8-6-6-8 M228 413l-6-7-8-5 M627 501l-7-8-8-8 M405 680l-2-7 0-8 M517 226l-6-1-6-1 M497 622l3-4 2-5 M842 556l-11 0-11 1 M694 493l0-7 1-7 M378 278l2-8 1-8 M787 501l-2-6-3-5 M281 263l7-5 6-5 M446 453l-2-9-4-9 M517 330l9-5 10-1 M315 468l4-6 4-6 M660 617l2-9 5-8 M190 447l-5-4-6-4 M658 503l3-7 4-5 M488 536l-1-10 3-10 M459 662l2-12 7-10 M255 610l0-5 2-5 M492 447l7-6 4-8 M319 538l7-5 8-5 M384 342l-2-9-1-8 M642 358l-1-5 1-5 M263 493l-9-8-6-10 M385 547l-6-9-6-10 M538 568l-7-8-4-10 M473 374l-5-10-9-6 M377 290l-7-4-7-2 M559 333l4-6 2-7 M397 505l6-6 3-8 M425 559l5-6 3-7 M778 273l3-4 2-4 M229 572l-7-6-9-4 M594 317l6-6 4-6 M318 389l5-4 4-5 M535 462l-6-3-7-1 M758 309l-3-4-2-5 M390 658l-9-7-9-6 M486 450l10-3 8-6 M420 488l-2-9-4-8 M814 525l-4-3-5-2 M449 320l7-1 6 0 M339 531l5-8 2-10 M711 487l6-2 5-4 M728 579l9-3 10-2 M664 609l-8-5-7-8 M475 450l4-8 4-8 M443 354l0-6-1-6 M599 476l1-6-2-5 M613 480l-6 0-6-1 M686 192l2-6 1-6 M390 258l4-5 3-6 M446 605l4-9 2-9 M721 287l-6-7-5-9 M585 527l-8-6-9-6 M308 406l0-6 1-6 M817 541l-3-11 1-11 M725 559l-1-5-2-5 M318 579l8-3 8-2 M514 382l2-10 0-10 M762 489l-4-5-4-4 M709 263l-10-5-10-7 M663 319l8-4 8-4 M779 536l-6-7-6-7 M603 618l4-4 4-3 M610 316l4-5 5-5 M320 265l-6-3-6-2 M836 617l-6-8-7-6 M828 419l-2-7 0-8 M433 505l0-7-1-7 M442 506l-5-9-7-9 M288 309l-8-5-7-6 M552 512l8-5 10-2 M286 576l9-1 9-5 M612 491l-6-5-7-3 M279 666l-8-7-5-10 M641 517l4-1 5-2 M705 532l-1-9 1-9 M429 693l-6-8-6-8 M228 579l4-7 4-7 M614 403l-10-3-11 0 M319 322l5-11 5-10 M803 432l-5-9-6-8 M268 390l-6-10-8-8 M510 477l-10-5-9-7 M222 609l-8-9-4-11 M222 578l-1-7-1-7 M460 431l-5-7-6-5 M760 540l-4-6-4-7 M440 258l5-10 7-9 M680 327l-1-7-3-7 M668 385l4-7 2-7 M439 353l4-3 4-3 M762 569l-2-6-1-6 M619 470l1-7 4-6 M347 318l5-10 8-9 M730 379l-8-8-10-6 M576 505l-3-5-5-4 M758 417l1-9 2-10 M332 477l5-1 5-3 M339 538l-7-3-7-1 M607 544l-8-7-9-4 M431 659l9-5 10-3 M639 459l8-6 10-5 M322 381l-2-6-3-6 M353 659l6-9 3-10 M516 425l-3-9-2-8 M315 609l0-10 0-9 M659 307l-3-6-2-7 M539 440l2-11 2-10 M451 476l-4-4-1-6 M666 628l-1-8 2-8 M676 450l3-8 3-8 M634 568l4-8 1-9 M677 520l0-8 0-9 M388 324l-7-7-5-9 M643 307l7-6 6-6 M765 344l-6-8-4-9 M350 689l6-5 5-7 M230 492l2-7-1-6 M695 438l0-7 0-8 M329 485l0-11 1-10 M773 616l7-8 4-8 M708 560l3-6 3-7 M279 496l-9-7-11-5 M443 663l5-5 6-3 M466 449l6-8 8-8 M319 573l11-3 10 2 M220 469l-1-7-1-7 M765 634l-9-5-9-4 M631 411l-2-9 0-9 M238 572l-2-9-5-8 M220 398l1-9 1-10 M514 312l2-8 0-8 M781 560l3-6 3-6 M380 358l12-3 10-6 M342 696l9-1 8-4 M368 297l6-4 6-3 M196 427l-9-3-9-1 M269 421l-6-2-5-3 M643 286l-6-2-5-3 M215 541l5-2 4-4 M597 368l-9-6-11-6 M710 522l5-9 4-11 M696 409l-7-9-9-5 M755 570l6-9 7-8 M729 640l5-5 6-6 M750 601l-3-10-5-11 M599 317l-3-6-4-7 M450 534l9-2 9 0 M607 234l3-11 3-11 M681 287l5-11 1-11 M257 332l5-2 5-2 M380 249l5-3 5-5 M596 300l0-10 1-10 M274 399l6-9 7-9 M323 463l-1-11-1-11 M488 480l-9-7-11-3 M394 545l4-3 5-3 M626 326l7-7 9-4 M263 563l7-8 7-6 M625 437l-7-5-9-3 M682 693l1-9 1-10 M393 409l9-2 8-3 M738 427l-3-9-6-7 M454 648l4-7 3-7 M257 437l5-5 5-4 M489 448l-10 1-10 3 M518 570l-9-3-9 0 M246 327l-9-3-11 0 M417 379l-2-9-4-7 M241 587l-2-6-3-5 M620 235l4-6 4-6 M775 601l4-4 4-3 M746 626l9-1 8-3 M478 456l-3-8-2-10 M461 648l-8-4-8-2 M270 629l7-2 7-4 M648 636l3-6 2-6 M472 403l5-10 6-9 M738 571l-1-8-2-9 M821 349l-4-6-6-5 M264 437l-1-6-2-5 M343 445l-5-4-6-3 M744 472l8-4 6-6 M538 569l-6-10-5-11 M637 426l-6-5-5-8 M300 510l1-11 4-10 M477 295l-8-6-9-3 M382 508l-2-8-1-9 M503 290l-8-8-6-11 M511 383l-3-10-6-8 M448 186l-5-2-5-2 M629 450l1-8 0-9 M777 480l4-3 5-2 M213 561l-2-5 0-7 M771 447l4-4 4-5 M453 476l-8-7-8-6 M528 395l-6-5-5-7 M334 438l2-7 0-7 M421 427l4-3 4-3 M203 324l0-9-3-9 M337 415l-3-9-6-8 M641 316l6-5 5-6 M710 368l-2-5-3-5 M394 514l-6-3-7-3 M635 431l11-3 10-6 M786 435l6-8 7-6 M681 434l-7-5-7-5 M627 467l0-6 0-7 M652 554l1-6 2-5 M411 265l-6-8-9-5 M308 608l10-7 9-8 M345 423l-3-6-1-7 M396 502l3-7 1-8 M283 213l-3-9 1-8 M440 411l-8-5-10-2 M792 523l-6-4-6-4 M527 330l-4-7-7-4 M265 250l10-4 12-1 M333 601l10-6 12-2 M588 487l5-10 8-9 M299 415l-3-4-3-4 M471 552l-5-6-3-6 M327 408l-4-3-5-2 M659 509l-8-9-6-10 M722 477l-3-4-5-3 M652 610l-2-6-1-7 M388 278l-10-2-10 2 M489 533l9-4 10-3 M514 325l4-6 6-5 M569 576l-1-8-2-8 M477 540l7-2 8-2 M314 267l8-5 9-2 M727 498l7-8 6-8 M324 677l-4-5-6-5 M649 472l-4-8-6-6 M711 561l-4-7-5-6 M379 458l3-7 4-7 M385 232l7-9 5-10 M334 519l-7-3-9-1 M478 557l2-11 2-12 M389 444l-4-8-1-10 M356 374l-1-6 1-7 M758 586l4-2 5-3 M292 572l10-5 10-2 M422 478l-4-9-6-6 M438 453l-3-5-4-5 M350 352l8-8 5-9 M388 404l7-8 8-6 M713 445l0-8 3-7 M509 308l-1-9-3-10 M654 244l-10-6-8-8 M278 516l1-7 0-6 M336 392l1-11 2-11 M486 369l-1-6-1-5 M414 603l7-9 9-6 M448 478l2-5 2-5 M257 343l7-4 5-7 M749 357l-4-9-6-8 M502 437l5-3 5-4 M732 656l-3-7 0-8 M397 376l7-8 10-5 M418 363l-8-2-7-4 M226 553l-6-6-4-7 M455 560l-5-3-6-1 M283 586l3-5 5-4 M620 393l-2-9-4-8 M431 275l9-2 9-3 M480 520l3-5 0-5 M811 549l3-5 4-4 M241 497l9-4 8-7 M341 382l-7-5-8-4 M483 314l4-2 5-3 M295 297l-6-3-5-3 M213 413l1-6 2-6 M250 564l4-4 4-4 M693 286l7-8 10-6 M740 397l-6-1-6-1 M237 370l-9-6-5-8 M534 464l-6-2-6-2 M487 303l0-7-1-8 M594 437l0-12 0-12 M746 350l0-5 1-6 M600 308l-4-6-5-6 M380 254l-5-7-6-7 M735 435l-2-6-4-5 M711 244l9-8 11-4 M223 638l0-8-2-8 M228 593l-3-9-7-7 M729 673l3-4 4-4 M327 190l7-2 7-2 M736 420l-4-6-6-5 M321 576l-7-10-3-12 M811 594l-7-8-3-9 M402 624l1-11 3-11 M645 417l-3-4-3-6 M378 320l-2-11-3-11 M279 368l-7-2-6-5 M419 287l5-8 3-8 M512 356l-5-8-5-7 M564 564l-4-10-4-9 M195 383l-1-6 0-5 M484 464l0-10-4-9 M367 564l-3-9-5-9 M280 446l-7-2-7-3 M437 649l3-5 3-6 M584 415l-1-6 1-6 M747 509l-7-3-5-5 M680 655l-3-5-1-5 M423 597l9-4 9-5 M508 471l-9-7-11-3 M309 421l4-6 4-6 M691 283l-4-7-6-6 M750 585l-1-12-3-12 M314 191l-5-6-3-6 M469 608l-1-11 0-10 M365 471l-3-10-1-11 M646 366l-1-12 3-10 M416 270l6-6 6-5 M450 331l-5-7-4-8 M606 498l-4-4-2-5 M669 354l6-6 8-5 M644 468l6 0 5 2 M772 246l4-9 1-11 M804 551l3-5 3-5 M210 318l-6-8-4-10 M704 279l-3-6-3-6 M799 344l-4-11-7-9 M711 204l-4-5-4-5 M451 291l-7-9-10-6 M675 379l-1-8-3-7 M451 356l-2-6-3-6 M795 540l4-8 5-8 M726 447l1-10-1-10 M703 610l3-9 3-8 M706 282l-3-5-4-4 M821 328l-2-9 0-10 M240 377l0-7-2-6 M584 469l-4-5-5-4 M490 467l-6-3-5-2 M372 419l-5-9-6-9 M439 629l11-3 12 1 M688 430l-7-4-9-3 M710 527l0-10 3-9 M782 435l4-7 3-7 M376 608l-2-8-2-8 M475 345l6-10 8-8 M738 652l-4-6-7-5 M446 418l3-9 4-8 M611 228l-7-3-5-4 M726 234l6-6 3-7 M300 243l6-4 7-2 M745 372l1-11-3-11 M817 311l4-8 3-9 M267 566l4-5 5-5 M257 391l-4-10-3-9 M737 560l7-5 7-4 M751 567l0-8 2-9 M522 248l7-9 8-6 M663 533l6-9 3-11 M644 534l-6-6-6-6 M796 358l-5-3-6-2 M345 184l-5-5-7-3 M406 217l-5-11-6-10 M537 344l-4-5-3-7 M415 354l-3-5-4-5 M365 540l4-3 3-4 M724 198l-9-5-10-3 M250 473l2-9 4-8 M421 248l-2-7-4-7 M659 455l-3-6 0-7 M492 234l-5-3-5-2 M455 327l3-11 2-11 M323 349l-2-5-4-4 M406 390l-8-5-8-6 M718 496l-3-10-3-11 M468 337l3-5 3-4 M650 654l-5-9-8-6 M441 542l-4-6-5-5 M626 490l11-6 11-3 M497 322l8-4 8-5 M635 524l-10 0-11-1 M484 670l2-4 3-5 M383 497l-4-5-6-5 M209 405l-10-3-8-6 M520 336l6-4 7-2 M727 289l-7-6-6-7 M804 483l1-5-1-5 M250 543l-2-7-3-7 M317 394l-6-6-8-4 M535 412l-1-8 2-9 M430 250l3-6 4-5 M558 379l-7-6-5-7 M783 497l-11-5-12-1 M296 329l8-3 7-3 M303 633l1-5-1-5 M675 385l-4-3-5-2 M464 256l-6-7-4-8 M777 418l6-8 5-8 M840 611l-9-3-8-6 M393 613l-2-8 1-8 M349 512l-6-2-5 0 M495 443l8-3 8-1 M675 297l1-5-2-6 M469 601l-5-7-1-8 M643 344l-6-4-6-5 M498 422l3-9 5-8 M312 455l-7-9-4-10 M304 450l3-7 5-5 M355 303l3-11 0-12 M724 536l-8-2-8-1 M704 555l7-2 6-4 M281 228l11-4 9-7 M585 481l-7-8-6-9 M698 217l2-8 1-9 M456 180l9-6 10-6 M667 585l-7-2-7-5 M658 387l-8-6-8-8 M768 444l-9-6-9-6 M653 621l-8-7-9-6 M760 364l-6-2-6-2 M703 449l0-8 1-7 M408 540l2-5 4-5 M198 516l-5-5-7-4 M440 346l-6-5-7-5 M758 497l4-5 3-6 M228 618l-10-6-8-9 M340 497l3-5 1-6 M365 552l-6-9-7-10 M672 460l3-8 0-9 M470 498l-7-1-7-1 M709 431l-5-5-7-3 M268 604l4-4 4-4 M521 430l-2-10-2-11 M440 601l-6-4-6-4 M706 587l-11-3-11 0 M554 495l-5-6-4-7 M632 527l-10-5-10-5 M789 585l-7-6-9-3 M666 431l7-2 6-2 M827 595l-10-7-9-7 M428 321l-3-6-4-6 M481 279l4-11 2-11 M777 497l-3-5-2-5 M605 424l4-11 6-9 M280 530l2-10 1-11 M542 504l1-6 2-6 M451 286l1-6 4-5 M718 612l-2-5-2-5 M505 482l-10-3-10-4 M330 304l-2-10-3-10 M246 578l2-8 2-7 M326 558l8-6 4-9 M374 375l2-10 3-9 M763 253l1-7 1-6 M397 280l-5-3-6-2 M497 281l2-6-1-7 M789 633l-8-8-6-10 M522 349l7-2 6-4 M625 650l9-4 8-8 M198 485l1-8 2-8 M388 456l10-3 10 0 M284 565l-2-6 0-5 M790 410l1-8 4-7 M498 435l2-10 3-10 M411 369l-2-5 0-6 M435 386l5-7 4-7 M431 445l-7-3-9 1 M740 599l-1-7-2-6 M314 264l-2-5-3-4 M535 518l-1-7 0-7 M340 314l-6-3-7-1 M671 686l-4-5-4-4 M754 307l8-8 6-9 M355 338l-10-6-12-3 M297 314l3-5 0-6 M478 539l4-6 2-7 M373 473l-9-8-10-5 M636 630l8-3 8-1 M823 549l1-9 1-10 M637 413l-3-8-7-7 M846 519l-6-6-7-5 M814 470l-1-9-4-8 M188 591l5-2 3-4 M431 352l-4-12 0-12 M448 676l10-7 11-5 M817 562l1-8-2-9 M351 314l-7-7-8-7 M241 607l6-7 6-8 M407 683l-5-8-2-9 M445 444l2-5 2-5 M529 282l10-4 8-6 M794 544l3-7 4-5 M348 354l-4-9-4-10 M429 521l-4-3-2-5 M628 401l1-7 1-7 M314 320l-4-6-2-7 M497 538l5-6 6-5 M209 355l-5-8-5-9 M274 579l-6-6-4-8 M277 569l3-6 6-4 M770 305l6-4 6-3 M627 297l5-4 3-4 M404 651l-9-5-7-7 M532 563l4-3 4-4 M234 337l2-11 5-10 M530 533l-5-2-6 0 M764 581l2-9-1-9 M263 266l10-5 9-7 M585 344l10-3 10-2 M257 523l5-6 7-6 M510 546l-3-7-4-7 M414 248l7-1 6-3 M402 356l1-5 2-4 M320 397l1-6 0-5 M304 526l4-8 1-9 M732 420l-5-5-5-4 M781 407l8-5 8-5 M384 626l0-9 0-10 M330 554l0-6 2-6 M798 393l9-6 9-6 M538 382l2-5 0-6 M404 515l1-5 2-6 M782 440l9-6 11-4 M517 555l-5-1-6-2 M212 569l0-8 1-7 M584 421l2-5 3-4 M322 275l-3-4-5-2 M666 617l-9-2-8-4 M399 627l7-1 8-1 M222 463l9-7 9-8 M342 572l-1-11-1-11 M656 474l3-11 6-9 M284 408l-1-5 0-5 M815 375l-6-9-7-7 M482 300l7-7 4-10 M268 292l-6-4-7-1 M413 396l2-12 5-11 M556 418l-10-4-11-1 M586 496l6-1 5 1 M303 250l1-7 4-6 M278 468l4-2 5-2 M821 432l2-7-1-7 M533 556l1-9 2-9 M361 401l8-8 9-8 M491 472l9-3 7-5 M811 544l-6-5-6-4 M796 552l2-10 0-10 M418 692l-7-2-8 0 M538 579l-6-9-7-8 M397 478l1-7 2-7 M448 377l5-4 6-3 M685 452l2-10 4-10 M705 638l1-5 1-5 M734 257l-3-5 0-6 M691 504l-5-10-4-10 M734 323l6-1 7-2 M733 183l5-6 6-6 M557 618l-6-9-6-9 M444 670l-8-7-6-8 M280 452l-4-4-3-5 M440 380l-4-4-2-4 M249 307l7-6 8-3 M227 447l-4-9-7-6 M323 525l-2-5-4-4 M728 405l-4-9-1-11 M184 600l-6-6-5-7 M396 557l-6-10-7-8 M496 300l2-7 3-5 M284 398l-2-4-3-5 M424 384l5-3 4-6 M266 570l1-8-2-7 M783 351l7-3 7 0 M737 424l-5 0-5 0 M397 293l-3-10-3-10 M725 648l5-4 6-1 M308 684l-5-10-4-10 M778 642l-6-3-6-1 M754 659l8-6 9-5 M302 488l-1-7-1-6 M370 317l-4-6-4-6 M434 356l10-1 9-1 M400 611l-1-8-2-7 M687 194l2-6 3-6 M260 441l10-7 9-8 M383 295l2-10 1-11 M678 361l5-4 7-2 M223 589l-7-10-7-9 M346 271l-4-4-4-3 M536 468l6-10 3-11 M835 413l5-3 4-2 M631 628l7-7 4-9 M618 349l-2-10-3-9 M536 500l2-8 2-8 M391 518l-7-3-5-6 M442 490l-1-8 0-7 M740 406l4-6 5-5 M626 639l6-2 7-1 M297 293l-5-9-2-9 M361 283l5-2 5-1 M501 354l3-5 1-6 M246 265l7-1 6 1 M612 648l-8-7-9-5 M480 410l-3-5-1-5 M454 525l0-9-3-8 M677 438l-10-7-10-6 M252 583l5-7 4-9 M744 568l4-10 4-10 M667 262l-3-8-5-6 M489 476l-3-10-4-10 M371 331l8-6 9-4 M469 663l6-7 6-6 M597 524l-1-6-2-6 M621 241l-7-7-6-8 M785 515l-5-6-5-6 M227 468l5-2 5-1 M431 654l-9 0-9 1 M601 480l0-10-3-10 M636 436l5-1 6-2 M396 180l1-12-1-12 M221 343l-3-4-4-4 M428 519l1-5 2-5 M637 222l7-6 8-6 M315 565l5-1 6-2 M748 462l-6-6-6-7 M774 501l3-6 3-5 M446 403l-2-8-4-6 M352 573l8-2 8-3 M221 399l7 0 6 0 M732 548l0-6 2-5 M401 373l0-9-2-10 M621 432l3-5 2-6 M525 481l4-6 3-7 M334 385l-8-8-9-6 M242 339l5-9 6-8 M610 522l-1-5-4-4 M454 585l-3-4-3-5 M404 643l3-7 6-7 M774 386l-4-3-4-3 M394 498l9 0 8-3 M308 306l-4-10-3-11 M791 415l-3-11-4-10 M740 342l1-9 2-9 M730 600l8-8 6-9 M731 484l6-6 3-7 M693 316l8-9 8-8 M432 189l-5-4-3-6 M522 573l-2-7 0-6 M735 570l10-6 10-6 M654 551l-7-3-6-3 M486 435l-7-4-8-3 M827 526l0-7-1-6 M657 469l8-5 8-5 M801 470l1-6 1-7 M431 606l0-9-3-9 M291 500l1-10 4-8 M243 439l-6 0-5-3 M616 491l4-9 1-9 M202 461l9-7 11-3 M662 477l-8-5-9-3 M486 337l-1-7-2-7 M764 486l1-8-2-8 M439 672l4-10 3-10 M698 607l-4-5-5-3 M698 335l3-7 0-8 M827 530l-8-7-5-10 M682 621l1-8 3-7 M236 560l8-4 8-4 M403 626l4-4 5-3 M349 564l2-10 1-10 M758 439l-7-6-7-6 M303 370l-6-1-6 0 M634 606l-9-4-9-4 M389 472l-1-7 0-7 M291 241l2-11 1-12 M264 477l-3-5-3-5 M514 441l-9-6-9-7 M316 319l-5-8-4-8 M362 278l-2-8-1-8 M459 384l0-7 3-7 M256 323l-6-7-8-4 M291 550l7-2 8-1 M309 654l-1-5-1-5 M410 248l3-5 3-5 M333 566l-1-7-5-6 M636 232l-5-10-9-7 M543 414l8-6 6-9 M433 447l-7-7-7-6 M812 493l10-7 11-4 M602 435l-2-7-2-8 M311 414l3-7 2-6 M333 346l4-5 2-6 M763 306l7-6 5-8 M318 328l3-7 5-6 M384 397l1-6 3-5 M654 491l-2-8 0-9 M504 533l4-5 4-4 M224 541l5-5 6-4 M357 378l2-12 5-11 M628 330l8-2 9-1 M186 519l-6-7-4-8 M600 490l4-5 4-5 M694 334l-1-7-3-6 M225 440l-4-6-3-6 M286 485l-8-6-6-9 M751 658l7-9 8-7 M719 410l-4-8-1-9 M380 371l10-7 10-6 M644 372l5-5 5-2 M777 253l-3-6-3-7 M242 424l-5-4-6-3 M794 437l-5-6-3-7 M410 674l-4-5-3-5 M687 306l-2-10 1-10 M591 488l4-9 4-9 M231 328l7-4 8-1 M743 463l-7-9-7-10 M316 415l-6-5-6-4 M756 290l-1-9 1-9 M349 401l8-8 9-7 M685 357l1-9 3-8 M269 589l2-6 3-7 M294 446l-3-6-3-6 M701 285l2-9 4-9 M374 342l3-9 6-9 M385 593l-2-8-3-8 M449 400l-7-6-8-4 M181 606l4-6 6-4 M449 275l10-6 12-5 M626 478l6-3 5-4 M274 527l-2-11-4-11 M674 609l-3-11-5-10 M577 312l-4-11-7-9 M735 527l-2-5-1-5 M639 428l-2-6-2-6 M759 347l7-8 5-9 M618 557l4-5 5-4 M368 521l-5-4-4-3 M308 331l-5-6-5-5 M401 615l-1-6 0-5 M591 410l-2-7-2-8 M804 640l-6-1-6-3 M511 348l-1-8-3-8 M385 400l2-6 3-7 M656 397l1-11 4-11 M727 479l3-11 0-12 M273 579l8 0 9 3 M774 496l7-9 8-8 M367 452l8-8 9-7 M471 463l-4-5-2-5 M649 469l-5-5-5-3 M490 198l-1-8-4-6 M529 252l0-10 1-9 M802 483l-4-3-5-2 M391 367l-11-4-12 0 M762 362l-6-3-6-4 M432 531l-5-4-5-5 M335 657l7-5 5-7 M720 573l-4-6-2-7 M426 464l2-10 0-10 M278 234l10-5 10-3 M360 460l2-5 0-5 M686 608l-4-7-5-7 M294 460l-8-6-11-3 M752 236l4-4 3-4 M604 312l-10 0-10-4 M663 495l-8-8-6-11 M477 428l8-3 8 0 M311 515l4-4 4-4 M465 632l-8-4-9-1 M793 353l-7-9-7-9 M338 317l2-6 1-6 M750 469l-1-9-1-8 M313 327l-9-3-8-2 M481 661l2-9 2-8 M431 298l-5-3-4-4 M459 340l-7-1-8-1 M237 617l-7-9-5-10 M794 501l8-3 7-4 M644 264l-4-8-5-6 M644 279l-3-10-3-10 M777 400l6-11 3-12 M783 368l4-4 4-4 M476 416l1-9 3-9 M345 580l-7-5-7-5 M396 539l3-8 1-9 M461 547l0-6 2-5 M657 651l6-2 6 1 M424 297l-9-3-11 0 M457 438l-9-2-9 0 M501 388l-10-4-10-3 M544 381l3-5 1-7 M278 635l5-3 4-5 M246 609l9-1 7-3 M568 526l2-10 5-8 M311 578l9-4 10-4 M295 529l-2-6 0-7 M430 622l3-5 5-4 M521 272l0-7-3-6 M763 433l-8-9-4-10 M521 522l-3-4-2-5 M738 469l8-8 8-8 M497 486l1-7 2-6 M673 477l1-5 0-5 M671 543l0-10 2-10 M228 354l-1-9 3-9 M706 273l6-4 5-5 M258 551l6-10 10-8 M611 608l-3-8-4-8 M273 357l5-4 3-6 M829 452l3-4 3-6 M237 402l10-5 9-6 M728 595l5-10 3-10 M676 409l-1-9 1-9 M494 357l-5-7-7-5 M672 473l7-5 7-4 M232 441l-2-5-3-4 M846 557l-1-7-2-8 M701 521l-3-4-4-3 M700 419l9-4 8-3 M593 264l3-8 3-6 M770 591l-5-9-6-8 M480 535l11-2 11 2 M359 419l11-2 12 1 M752 452l1-6 2-6 M802 607l-8-4-5-6 M664 360l9-2 9-2 M542 589l4-3 5-2 M304 483l4-5 4-5 M328 520l-11-4-11-2 M667 465l5-10 1-10 M443 530l-5-8-7-7 M592 327l5-10 5-10 M513 598l-5-2-4-4 M550 359l-4-7-6-6 M537 274l2-9-1-10 M647 214l8-5 9-4 M751 575l-7-6-5-8 M597 473l3-6 5-6 M753 378l-6-5-6-5 M672 289l-7-7-7-6 M320 402l4-5 7-3 M764 242l-3-5-4-3 M375 422l1-7 4-6 M390 526l3-10 3-11 M668 583l8-4 9-3 M736 547l9-6 9-4 M676 266l1-9-3-8 M764 394l8-3 7-4 M648 424l-10-5-11-2 M276 220l0-6-1-6 M281 532l-4-8-3-9 M698 389l-4-7-4-6 M740 214l-5-4-6-3 M288 375l6-1 6 0 M375 518l-7-8-4-10 M603 383l7-6 4-8 M509 413l5-7 7-6 M759 387l-6-8-3-9 M615 508l-8-8-8-9 M639 289l1-7 2-7 M252 578l8-3 7-4 M531 643l-5-2-5 0 M760 507l5-5 4-5 M673 443l11-3 12-1 M543 317l5-2 4-3 M382 450l-5-8-6-8 M336 390l-6-9-5-10 M828 552l11-2 12 0 M725 334l-11-3-8-7 M708 345l7-8 5-10 M362 523l6-10 6-11 M186 377l10-5 12-2 M307 242l-2-8 0-9 M607 474l-1-7-3-6 M648 565l1-6 1-7 M791 592l6-8 6-8 M454 485l-3-9-5-8 M648 401l4-6 5-6 M581 494l-9-6-8-7 M745 489l8-7 6-9 M461 377l-3-6-3-6 M716 451l3-8 2-8 M699 457l1-6 0-5 M425 424l-3-4-2-5 M580 357l-10-3-11-1 M417 611l10-1 9 3 M268 360l7-8 8-6 M660 356l0-6 1-5 M344 216l8-9 9-7 M630 227l3-6 3-5 M298 282l8-2 9 0 M471 422l-2-5 0-6 M480 531l4-10 5-9 M286 384l10-6 10-6 M379 392l4-4 5-3 M462 419l-8-5-7-7 M526 283l2-7 3-7 M230 582l-10-6-9-5 M785 563l4-7 3-8 M695 451l7-2 6-3 M790 312l-5-4-7-2 M204 389l3-5 4-5 M699 434l3-8 4-8 M448 277l10 0 10-3 M710 671l6-4 7-5 M205 372l-3-5-1-5 M712 253l-10-5-11-2 M761 281l5-8 4-8 M791 618l-3-6-5-4 M708 490l6-8 6-8 M689 554l5-5 6-5 M311 518l-7-6-5-9 M715 442l-10-2-9 0 M405 225l1-6-1-7 M616 339l-4-7-3-6 M313 572l-5-7-7-5 M370 566l-7-5-8-4 M552 388l2-8 3-8 M349 519l7-7 8-4 M533 331l7-8 6-9 M287 590l-1-11-2-12 M217 360l5-7 3-9 M610 365l2-6 0-6 M601 404l6-9 4-10 M747 315l1-7 0-7 M609 485l-4-6-4-5 M551 281l-5-1-6-1 M568 570l-2-5-3-4 M339 344l-5-4-5-3 M411 235l-1-10 2-9 M689 297l-5-4-5-4 M496 400l-5-10-1-11 M319 549l0-9 1-9 M764 379l2-7 0-7 M461 415l-3-12-4-11 M806 426l-7-9-6-10 M725 318l6-4 7-3 M449 424l-11-1-10-4 M501 460l1-8 2-8 M336 445l-1-8 0-8 M628 458l7-3 6-3 M447 293l3-4 2-5 M524 302l1-8 4-8 M438 403l-5-6-2-7 M455 471l8-2 9 1 M733 474l6-9 5-9 M802 583l-6-8-4-9 M398 243l7-4 5-7 M616 258l9-5 10-2 M624 475l-7-7-5-9 M318 252l-8-5-7-6 M446 578l4-10 5-10 M585 284l-1-11-1-11 M730 286l0-5-2-5 M410 691l2-8 2-7 M530 331l8-7 9-4 M623 355l-8-4-6-6 M560 301l1-9-1-10 M335 422l6-1 6-1 M345 531l4-6 2-7 M385 517l-9-2-7-5 M794 435l-10-1-9 1 M482 369l-5-11-6-9 M660 283l-1-7 1-8 M650 512l-5-8-5-7 M282 458l6-9 6-9 M354 280l6-2 5-3 M712 576l-1-8-2-8 M287 589l10-5 11-5 M669 527l4-5 3-5 M355 455l-6-6-4-7 M764 560l-4-5-2-6 M364 568l-4-6-5-5 M481 595l2-6 1-5 M625 295l-6-6-7-6 M506 660l3-5 2-6 M744 348l-5-8-7-7 M497 488l-4-6-1-6 M723 665l-5-4-5-5 M535 310l3-11-1-11 M229 620l-2-5 0-6 M688 411l2-5 2-5 M348 621l5-5 6-4 M753 241l-3-9-3-10 M310 577l5-6 3-6 M229 594l-5-5-4-5 M686 544l10-3 8-5 M502 247l-8-9-9-8 M442 562l8-5 8-4 M499 475l-11-1-10-4 M333 663l4-7 6-7 M673 173l9-7 8-8 M318 436l6-3 7 0 M795 340l-5-2-7 0 M638 540l2-12 0-12 M658 567l0-11 2-10 M606 353l-9-8-6-10 M702 378l-1-8 1-8 M373 526l5-7 4-8 M414 461l-5-2-5-5 M457 391l-2-11 1-11 M808 346l-9-6-10-5 M808 597l9-6 9-7 M627 487l-1-6-3-4 M607 365l3-10 4-8 M404 275l6-5 6-6 M278 618l-4-3-6-2 M577 373l1-10 0-11 M612 203l-4-10-3-10 M656 408l2-8 6-7 M786 540l5-9 2-11 M360 471l-6-3-6-5 M454 323l-3-5-3-5 M662 252l-5-6-4-5 M346 611l10-2 10 1 M313 422l2-9 4-8 M748 372l-3-7-1-7 M773 566l-7-6-7-5 M655 508l7-3 4-6 M382 426l7-5 8-3 M498 495l0-7 2-8 M380 493l1-6 1-6 M685 499l5-8 3-9 M662 568l-2-6-3-4 M799 355l3-4 5-3 M569 432l6-9 6-9 M624 552l8-4 9-4 M207 444l5-11 4-10 M233 457l3-5 3-5 M732 468l10-6 7-7 M328 401l-9-5-10-2 M750 462l8-2 8 1 M367 366l2-6-1-5 M623 481l6 0 6 2 M287 577l-8-7-6-8 M722 362l6-4 5-6 M468 459l9-7 7-8 M183 587l-5-6-3-7 M289 268l-5-9-7-7 M508 426l-8-3-9-2 M248 430l5-4 6-3 M287 579l-7-1-6-3 M341 698l5-9 2-9 M726 294l-3-4-4-4 M448 657l-5-5-3-7 M505 613l2-7 0-8 M187 374l-4-10-2-11 M482 361l-3-9 0-8 M464 581l4-5 5-4 M365 255l-2-7-2-7 M271 540l-3-4-3-4 M612 349l-7-8-10-5 M721 269l7 0 6 1 M272 334l4-2 4-3 M296 377l3-9 0-10 M757 247l-4-8-6-7 M216 568l-4-11-6-10 M695 214l-3-8-2-8 M464 673l8-2 9-3 M720 583l-2-5-1-5 M186 545l-1-8 2-8 M390 573l-8-9-3-12 M455 543l-4-4-3-5 M436 416l-6-8-3-8 M761 496l5-8 5-9 M727 457l-3-7-1-8 M718 606l-4-7-5-6 M270 519l6-6 7-4 M360 441l7-9 8-9 M435 420l-7-2-7-4 M623 478l-4-5-3-6 M795 582l-3-7-6-5 M756 251l-1-7-1-8 M718 614l-5-2-6 0 M610 560l-1-8 1-7 M313 553l9-7 6-9 M766 497l10-5 10-3 M299 587l9-2 9-3 M822 455l-3-11-6-9 M654 492l-9-5-9-4 M380 501l7-6 5-8 M393 395l-3-11 1-11 M725 468l-6-9-5-10 M193 423l7-4 7-5 M355 627l-8-8-5-10 M412 460l5-4 4-5 M713 509l5-6 7-6 M254 554l3-7 0-7 M613 618l-7-10-6-10 M382 468l5-6 5-6 M678 356l1-5 3-5 M329 337l-3-9-2-9 M751 372l0-8 1-8 M336 287l0-5 2-5 M343 280l10-6 12-3 M829 560l-3-10-4-8 M428 324l5-4 5-3 M332 456l2-5 1-5 M705 391l-4-10-3-10 M265 565l2-4 1-5 M460 460l-5-9-5-9 M272 481l-3-9-1-8 M520 448l7-3 8 0 M697 670l8-8 6-10 M375 589l2-9 1-9 M350 604l-2-9 1-8 M246 602l4-9 7-7 M290 298l-1-10-3-9 M325 226l-3-7-3-6 M328 233l-7-4-6-2 M411 488l-1-7 0-6 M651 273l-2-7-3-6 M429 472l-2-5-1-5 M331 600l6-3 6-2 M751 396l0-7 3-7 M422 323l4-5 5-4 M675 574l-4-5-6-2 M530 523l5-9 7-8 M386 378l5-4 5-3 M676 584l-8-6-8-5 M480 349l5-3 6-1 M712 314l1-9 1-8 M492 433l-8-4-7-5 M192 418l6-9 5-9 M284 218l-6-8-7-7 M673 443l0-9-2-9 M737 522l4-9 6-8 M418 623l2-9 1-10 M473 317l-1-9 2-10 M417 637l1-9 3-8 M697 673l-7-6-8-5 M440 243l-12-3-10-6 M394 334l-2-5-2-5 M644 586l5-11 2-12 M387 569l0-7-2-7 M689 430l-6-4-6-4 M331 251l0-7 1-6 M443 664l2-9 0-9 M625 517l-2-8 0-8 M815 520l6-10 4-10 M349 196l7-7 9-7 M422 664l3-6 3-6 M261 577l4-3 3-5 M773 378l-6-4-4-5 M428 443l6-7 5-8 M666 511l4-4 3-4 M539 625l10-2 11-2 M327 473l6-6 8-5 M277 382l-7-7-4-9 M429 650l6-3 8-2 M659 453l9-3 8-4 M494 481l3-5 1-6 M677 507l-5-2-6-3 M324 561l-2-5-3-4 M511 432l-3-11-2-12 M410 499l-1-8 0-7 M745 558l-5-10-3-11 M588 387l1-5 1-5 M463 278l-6-8-7-6 M423 579l-5-6-7-5 M249 450l-2-8-3-7 M260 475l-5-9-5-10 M676 630l-6-6-6-7 M411 301l11-4 9-5 M704 618l-5-4-5-3 M594 333l6-1 6 0 M255 325l-7-8-5-10 M414 325l2-7 2-7 M812 528l4-9 7-6 M798 459l-1-10-1-10 M514 636l6-4 7-4 M358 224l-4-9-1-9 M750 582l0-5-1-6 M415 249l5-8 5-6 M715 295l-8-3-9-2 M585 287l6-6 6-5 M701 604l6-8 3-9 M821 547l-10-2-9-3 M465 285l9-7 7-8 M342 622l-4-7-5-6 M748 495l-7-9-9-5 M457 547l-3-9-6-8 M695 464l4-8 7-6 M644 244l-1-11 3-11 M822 606l4-4 3-5 M603 266l5-2 4-4 M546 570l4-4 2-5 M218 573l-6-8-9-6 M355 428l-5-4-6-3 M327 303l3-5 3-5 M815 575l0-6-2-6 M528 582l3-4 3-4 M501 515l4-5 4-5 M396 582l-1-5-2-5 M359 471l-8-4-9-3 M825 580l-6-10-5-11 M619 360l2-9 4-9 M489 490l4-6 2-7 M705 508l1-5 0-6 M646 435l-6-1-7-2 M687 254l-10-2-9-5 M212 443l-2-7-1-8 M346 498l-2-10-3-9 M749 404l-4-9-4-11 M812 455l7-5 6-5 M650 528l4-6 5-5 M705 318l5-5 6-6 M698 433l5-4 4-4 M653 208l-2-4-3-4 M452 429l7-8 7-9 M271 421l3-9 0-9 M664 395l-6-1-6-2 M655 234l1-8 2-9 M363 360l4-6 5-5 M665 413l5-6 2-6 M780 471l-5-10-7-9 M344 232l-5-3-4-5 M206 647l-10-1-9 1 M832 553l-9-8-7-9 M647 192l-9-5-8-7 M672 285l4-7 5-8 M275 408l11-4 9-8 M662 182l2-8-1-8 M355 290l8-6 6-6 M688 448l10-5 11-3 M594 342l-3-8-3-7 M487 245l4-10 1-10 M293 296l6-4 6-3 M569 379l4-11 3-10 M695 647l-7-3-6-3 M275 426l-4-8-4-7 M604 438l5-5 3-7 M476 402l2-5 1-6 M418 593l1-12 4-11 M753 261l3-10 6-8 M590 411l-5-3-4-4 M426 538l5-2 6-1 M523 534l4-8 6-7 M476 621l-3-10 1-12 M678 376l2-5 0-6 M563 395l5-3 4-5 M458 238l-3-6-3-5 M709 284l-5-3-3-4 M424 407l6-8 2-9 M463 672l4-8 1-9 M375 510l0-10 2-11 M302 284l1-5-1-5 M429 545l-3-10-5-8 M274 265l-1-7-2-7 M434 461l-3-6-4-5 M552 437l-6-10-3-10 M748 234l4-9 5-9 M562 396l-1-5-1-6 M613 392l-9-7-8-10 M680 286l5-2 6-1 M512 612l5-7 4-9 M338 305l-2-10-6-10 M498 620l0-8 2-8 M640 360l5-6 3-6 M286 307l0-11 0-11 M557 339l-2-5-2-5 M267 282l5-4 4-3 M403 326l-8-3-8-2 M429 197l-2-7-3-6 M428 629l6-7 7-7 M337 443l7-1 7-1 M765 327l1-7 5-6 M705 463l6-3 6-2 M805 510l8-9 7-8 M713 552l-8-7-5-9 M342 267l-5-5-4-6 M461 384l7-7 9-4 M268 445l-8-6-8-5 M255 520l0-8-2-9 M212 357l-4-3-3-6 M275 615l-6-8-4-9 M756 472l-2-6-2-7 M552 445l-10-6-11-4 M669 554l4-4 5-4 M536 578l-5-10-3-10 M617 489l6-8 4-9 M493 617l4-6 4-6 M854 581l-1-6-1-5 M615 490l7-6 8-4 M327 466l-10-6-11-2 M491 644l-8-7-11-3 M699 507l-10-3-9-3 M637 370l-2-6-2-6 M369 343l-1-8-3-7 M388 277l9-7 7-9 M327 580l-7-2-7-1 M610 432l7-6 8-3 M434 257l7-8 8-8 M347 539l0-5 0-5 M527 463l6-2 6-2 M741 510l-8-7-5-10 M597 446l-2-12-2-11 M782 541l12-3 12 1 M823 548l1-9-2-9 M493 216l-9-6-10-2 M624 289l-6-8-7-8 M339 223l5-4 5-1 M421 366l8-8 5-9 M642 567l3-11 3-12 M326 203l-7-5-9-2 M463 374l3-8 2-9 M266 514l-3-10-6-9 M429 539l0-5-1-6 M733 335l9-6 9-4 M762 446l8-5 6-8 M342 350l6-4 5-5 M698 550l6-11 4-11 M671 327l-8-6-8-6 M276 623l4-2 5-4 M585 481l1-11-1-11 M216 418l6-3 5-4 M472 326l-9-4-9-4 M761 509l2-5 4-4 M678 297l-9-2-9-3 M742 482l-2-12-3-12 M371 441l-2-6-3-4 M695 341l-7-9-6-11 M326 540l-9-8-8-8 M517 354l8-4 5-7 M254 429l1-6 3-5 M568 610l4-3 4-3 M258 599l5-4 3-4 M825 566l0-5 1-5 M413 648l-7-6-7-5 M394 292l-6-8-7-7 M308 324l8-5 7-5 M235 380l5-3 7-2 M416 352l8 0 8-2 M515 552l-5-8-3-9 M705 634l-3-5-1-6 M442 366l-6-10-6-11 M333 373l-2-10-2-10 M326 298l-6-2-7-1 M384 575l5-8 4-10 M575 339l-5-4-4-4 M644 310l1-7 1-7 M684 379l-5-6-6-4 M241 540l-7-9-5-10 M749 344l5-1 4-4 M642 510l-3-7-5-5 M456 504l3-8 4-7 M525 295l-9 0-10 1 M505 210l-2-12-2-11 M686 297l2-5 1-6 M438 306l-5-3-6-4 M806 340l7-4 6-6 M649 650l-7-4-7-2 M313 320l-4-4-2-5 M302 232l-7-3-6-6 M763 305l-11-2-10-5 M276 459l-8-4-7-7 M648 659l6-1 5-2 M700 656l6-6 2-8 M356 352l2-11 1-10 M540 401l6-6 7-6 M635 225l-5-5-3-5 M615 341l-7-9-9-8 M514 620l-4-6-4-6 M430 699l5-4 4-4 M275 523l5-5 6-5 M475 473l-10-2-9-4 M756 237l0-10-2-10 M492 537l3-10 2-10 M454 540l-6-7-8-5 M623 337l1-7 1-7 M305 553l-7 0-6 1 M391 550l-4-4-4-3 M226 437l1-8 0-8 M599 497l5-5 6-3 M601 606l10-2 9-5 M640 474l-8-8-11-6 M462 496l-4-6-4-6 M599 479l3-10 6-9 M788 530l-7-7-7-6 M355 365l-5-8-1-8 M466 516l-6-2-6 0 M240 413l-11-3-11-5 M424 416l-7-5-5-6 M624 597l-1-9 0-9 M514 329l-2-11 0-12 M502 275l-10-3-10-4 M720 318l6-6 6-6 M229 637l-7-8-6-9 M729 460l-4-3-4-3 M353 543l4-7 2-9 M376 560l5-3 5-3 M644 249l-5-7-4-6 M785 425l4-8 6-7 M716 206l6-8 5-8 M797 599l4-5 2-5 M764 284l11-4 11-4 M704 270l-3-6-3-5 M533 551l9-8 7-10 M376 311l-9-5-7-7 M349 527l4-5 1-6 M828 482l-4-4-4-4 M539 569l-6-6-3-8 M709 331l9-6 10-4 M508 590l1-6 0-7 M737 200l-2-7-4-6 M322 480l2-6 0-5 M344 576l4-4 2-6 M504 455l5-9 3-11 M406 276l-1-6 2-7 M493 464l1-5 2-5 M734 415l-4-6-2-7 M748 302l5-7 4-7 M457 498l-4-4-6-4 M235 305l2-7 2-7 M343 579l-3-9-2-10 M768 415l-8 0-7 2 M367 584l7-1 7-1 M548 595l3-9 0-9 M393 395l-6-8-8-5 M773 532l-6-2-5-1 M576 420l6-6 6-5 M698 657l4-7 2-7 M368 410l3-4 4-4 M707 482l-1-11-1-12 M452 544l-8-8-9-7 M739 397l-10-6-11-4 M675 569l2-11 1-11 M616 450l-3-10-5-9 M699 244l3-4 4-4 M799 544l-2-5-2-5 M389 508l4-6 4-6 M659 549l5-10 6-9 M351 583l-7-2-7-2 M668 595l-8-7-6-7 M524 635l2-9 0-9 M282 312l3-8 1-8 M315 455l-7-6-6-8 M755 251l-8-8-11-5 M402 548l-7-4-8-4 M785 389l6-3 4-4 M602 350l-1-10 0-10 M755 345l-4-4-3-4 M629 556l-4-10-5-10 M291 284l7-2 8-3 M758 592l10-2 10-4 M608 576l4-8 2-8 M303 568l-4-4-6-3 M738 626l5-9 4-9 M406 336l-4-5-2-6 M617 299l2-7 0-7 M550 419l7-8 7-7 M462 511l2-7 1-8 M735 317l2-11 1-12 M342 285l-9-1-9-4 M369 489l-6-4-5-5 M612 415l-10-6-9-4 M679 634l-2-4-2-5 M500 406l3-6 1-7 M371 518l2-6 1-7 M278 546l0-5 1-6 M620 611l6-8 6-8 M806 605l4-10 2-11 M450 499l-8-3-7-3 M292 641l-7-1-7-2 M669 428l-3-5-5-3 M317 377l-5-8-4-7 M231 459l4-6 4-6 M390 237l-9-7-7-9 M375 297l5-4 6-2 M484 503l-4-8-3-8 M580 369l-5-5-3-5 M724 666l-5-9-7-6 M555 424l-8-2-7-4 M591 483l-2-5-3-5 M600 491l-2-8-4-6 M699 420l5-3 3-4 M429 573l-5-11-6-10 M344 396l-8-8-7-7 M529 531l4-5 6-3 M594 379l9-4 10-3 M648 601l4-10 4-11 M743 256l-3-7-4-6 M619 534l-3-7-1-7 M298 550l1-8 3-8 M658 551l-12-3-11-2 M721 399l7-6 8-5 M274 599l-2-7-2-8 M657 179l8-5 6-7 M702 470l1-12-3-11 M590 457l5-5 5-4 M500 242l7-2 7-4 M608 528l-5-3-4-3 M733 363l0-6-1-6 M320 377l5-2 4-5 M634 659l5 0 5-1 M539 579l3-8 5-8 M339 227l-5-6-3-6 M621 405l7-3 7-3 M282 367l5-5 6-3 M244 628l-3-6-1-7 M744 580l-2-5-3-4 M355 254l3-8 2-8 M328 542l-11-6-11-4 M313 582l-8-7-7-7 M408 344l-2-7-4-6 M797 480l-7-4-7-5 M438 602l3-8 2-8 M698 277l-3-5-3-5 M302 481l7-1 8 2 M664 594l5-5 3-6 M415 362l-7-1-6-1 M558 565l4-4 5-2 M377 556l-4-4-4-4 M649 556l-1-6-3-6 M498 346l3-9 5-7 M487 584l0-6-1-5 M587 353l9-6 9-3 M618 549l-1-10 1-10 M377 186l6-10 2-11 M546 461l0-10 3-10 M356 592l7-6 6-7 M335 291l5-8 1-10 M498 588l-5-6-4-6 M460 295l-10-7-10-6 M591 276l4-6 4-5 M605 272l-1-10 1-9 M361 256l-5-2-6 1 M784 508l0-9 0-9 M447 196l-5-6-7-5 M814 582l-4-4-6-4 M347 538l-9-7-8-9 M601 368l9-5 6-7 M429 469l-2-7-3-7 M354 387l4-5 4-6 M480 259l5-4 4-5 M400 647l1-9 0-10 M703 238l1-11 1-12 M690 441l4-8 2-8 M651 406l3-7 0-9 M525 305l-6-4-7-1 M492 361l-7-7-8-8 M471 320l-9-8-6-9 M539 405l-4-7-6-4 M705 278l-3-9-6-8 M366 387l-1-7-4-6 M352 490l-9-7-6-9 M298 475l-5-6-4-7 M701 225l2-11 3-9 M282 450l1-5 2-5 M797 546l10-2 9-4 M363 517l-8-7-10-5 M457 392l5-10 3-11 M502 437l1-6 3-6 M677 465l-2-8 2-9 M593 398l1-9 1-10 M365 411l9-7 9-8 M284 553l4-10 3-10 M633 474l3-5 3-5 M346 464l2-7 3-7 M747 480l-1-9-3-8 M199 326l-4-7-4-7 M209 478l9-7 7-9 M312 392l5-8 3-10 M247 398l-1-5 1-5 M601 219l8-6 8-8 M649 679l-3-7-6-6 M348 227l-6-9-10-5 M705 458l2-6 1-7 M500 301l5-6 3-8 M606 459l7-9 7-9 M576 413l7-5 7-5 M472 516l-7-9-3-10 M611 336l-2-6 1-6 M766 434l-3-10 0-11 M559 623l-3-6-2-6 M783 568l-3-5-4-3 M431 627l-8-6-8-7 M671 376l10-3 11-1 M333 649l-1-10-1-9 M788 344l-5-5-3-6 M708 556l4-3 5-3 M766 574l1-8-2-9 M735 355l3-5 3-5 M616 391l2-11 1-10 M726 637l4-5 5-3 M301 499l-1-10 2-9 M256 263l0-6 1-4 M614 360l4-7 6-6 M752 417l5-4 4-4 M416 343l4-2 5-3 M320 321l-10-7-7-9 M635 316l-1-5 1-4 M685 465l9-1 8-5 M278 398l-7-6-9-4 M813 445l1-6 2-6 M280 282l2-5 1-6 M703 550l2-6 0-7 M682 383l-1-6 0-7 M789 618l1-9 5-8 M268 559l1-8 2-8 M751 604l3-4 4-4 M253 578l10-1 11-2 M611 402l-8-7-8-8 M412 274l-1-8 1-9 M275 419l-7-8-9-5 M524 631l-1-5 1-6 M403 331l11-4 10-6 M656 510l9-6 8-9 M596 507l-7-5-5-7 M323 355l-8-8-8-7 M351 329l-4-7-5-8 M604 283l-9-5-7-7 M666 348l-2-8-5-8 M630 465l2-9-1-9 M703 506l7-2 6-2 M525 274l-1-9-2-8 M341 249l-6-1-6 0 M377 586l-3-8-4-8 M695 605l1-5 3-5 M440 591l9-3 8-6 M442 535l-3-6-2-6 M267 445l6-4 7-2 M389 642l1-6 2-5 M281 465l-4-4-4-6 M569 523l6-7 6-8 M452 413l-6-2-6-2 M591 275l8-7 9-5 M778 275l-12-2-11-1 M783 335l-1-11 1-10 M342 599l5-7 6-7 M213 615l0-6-3-6 M339 482l4-9 4-10 M651 654l7-6 9-3 M775 595l3-7 2-7 M716 317l5-2 5-2 M553 354l8-6 9-3 M775 369l2-6 2-6 M671 675l-7-4-6-4 M387 557l6-6 6-5 M488 234l-7-5-7-6 M485 512l-10-2-8-5 M549 303l-5-1-5-2 M712 349l6-7 4-8 M810 572l-9-3-9-2 M259 620l-5-5-5-6 M312 469l-4-7-7-6 M616 237l-5-4-3-6 M534 634l-2-5-1-5 M698 552l5-9 7-7 M457 467l-2-8-2-7 M451 496l2-11-2-11 M249 426l-3-6-4-6 M734 256l8-1 7-2 M699 276l1-11 4-11 M506 343l-8-4-8-3 M317 528l-8-8-6-10 M745 626l-6-6-4-8 M565 483l6-9 8-9 M250 318l0-9 0-9 M754 540l8-7 5-9 M779 596l5-8 2-9 M722 325l-5-2-6 0 M746 633l10-4 10-3 M426 476l-3-11 1-12 M598 452l4-5 3-5 M435 329l0-7 1-8 M296 603l-8-2-9 0 M379 420l-5-8-6-6 M725 616l-5-1-5-1 M721 241l0-10-1-9 M427 488l0-10 0-11 M653 332l5-5 4-4 M654 429l5-6 6-4 M210 571l1-5 0-5 M456 285l-11-1-10-3 M514 635l4-9 3-11 M745 271l-8-5-9-3 M702 261l3-7 1-8 M623 551l-8-7-8-8 M724 600l5-4 5-2 M641 219l5-9 2-11 M715 340l7-8 8-5 M477 312l9-6 7-9 M624 449l-8-5-9-1 M741 435l-4-11-1-11 M714 175l-2-7-3-7 M422 682l-5-4-4-6 M776 627l3-12 7-9 M458 385l-8-8-6-11 M459 257l6-5 8-3 M537 304l-3-6-6-6 M739 365l-7-5-7-5 M447 209l-8-9-10-6 M518 370l-4-7-5-5 M385 427l4-7 3-6 M674 529l2-8 2-8 M266 483l-10-5-9-5 M549 366l8-4 7-5 M480 400l0-6 0-7 M492 426l8-5 9-2 M529 524l8-8 9-6 M361 480l-3-5-2-5 M672 255l-1-5-2-5 M366 507l-1-11-3-10 M361 557l-5-6-2-7 M368 233l6-7 8-5 M343 540l-1-11 1-12 M641 612l-4-6-1-7 M629 530l-7-3-7 0 M617 311l4-6 4-5 M579 410l9-2 8-2 M357 504l1-11 4-10 M359 348l-4-4-4-3 M719 533l11-2 11 3 M353 520l0-10-4-10 M254 648l-5-10-4-11 M301 484l5-6 3-7 M586 587l-6-5-8-5 M759 562l-8-2-6-3 M527 567l-8-6-10-3 M516 239l10-7 8-7 M293 574l3-11 2-12 M470 335l-8 0-8 1 M634 206l8-3 9 0 M468 386l6-10 4-10 M297 481l5-2 4-3 M656 258l-2-5-3-4 M352 503l10-4 11-3 M700 444l9-6 9-5 M236 592l5-5 2-7 M708 441l-8-7-7-10 M680 386l9-3 11 1 M541 479l-1-8-3-8 M701 350l8-5 6-7 M475 420l10-7 11-3 M773 297l-4-6-1-8 M738 455l6-4 7-2 M679 456l2-10-3-10 M741 451l6-10 7-9 M707 417l-5-5-7-3 M676 631l6-8 7-6 M808 575l-7-2-5-4 M803 586l1-6-1-7 M395 300l-2-7 0-7 M293 243l1-7-2-7 M285 460l6-9 8-8 M722 384l1-8 0-8 M577 547l-6-5-4-6 M553 500l-3-10-1-10 M661 326l-5-4-6-2 M671 518l-9-3-9-4 M401 413l6-1 7-1 M404 685l-1-6-1-6 M506 266l4-6 2-6 M194 566l-3-11-2-11 M284 283l4-2 5 0 M421 220l-9-7-10-7 M706 506l-6-3-4-4 M781 340l-6-6-4-7 M466 497l-3-10-3-11 M770 573l-6-10-5-10 M557 387l-3-4-5-3 M361 657l-4-9-4-9 M215 342l5-1 6-1 M666 197l-2-6-3-5 M336 518l4-5 4-4 M690 463l5-6 5-6 M672 422l4-7 4-8 M756 605l5-4 5-4 M719 290l-5-3-6 0 M676 372l8-1 6-4 M643 622l10-5 10-5 M708 236l-4-5-4-4 M754 309l8-5 6-7 M207 542l-4-4-2-5 M646 627l6-8 5-10 M340 574l-9-5-7-5 M252 546l3-7 3-8 M389 692l-5-9-8-7 M579 461l1-8-1-7 M642 240l-5-8-6-7 M611 631l-2-10-4-9 M441 603l-7-8-10-5 M816 618l4-6 2-8 M317 517l-5-5-3-6 M658 418l6-2 6-4 M419 494l-3-8-4-8 M434 518l-6-6-8-5 M339 440l2-9 1-9 M275 317l-7-5-7-4 M448 585l9-8 8-8 M777 443l-5-7-5-6 M297 559l5-3 4-5 M570 508l-1-8 0-7 M685 599l-4-10 1-12 M418 530l0-11-3-10 M302 428l-1-11-3-11 M705 522l4-8 4-7 M448 415l8-4 6-6 M553 298l-4-6-2-6 M312 366l-3-9-3-9 M506 311l0-12 1-11 M421 204l-7-8-6-7 M647 491l-5-4-5-4 M610 608l-10-4-10-2 M839 508l0-10-1-11 M431 662l9-6 7-10 M450 256l2-5 3-5 M678 432l-9-8-9-7 M743 258l8-8 9-8 M797 572l-8-7-10-7 M602 330l-4-10-2-10 M769 371l4-6 4-7 M801 269l4-8 6-7 M765 606l9-7 9-6 M663 251l-4-6-3-6 M486 573l1-10 1-10 M648 619l-10-7-6-10 M416 318l1-7-1-7 M236 423l-3-12-1-11 M674 574l-5-6-3-8 M477 327l-8-7-9-6 M614 479l8-9 5-10 M297 557l2-7 5-7 M633 241l7-4 7-4 M464 481l5-5 2-6 M638 293l4-7 5-7 M739 425l-4-7-3-8 M291 331l-6-7-7-5 M601 370l3-6 6-5 M703 316l-4-5-4-3 M643 302l6-3 6-1 M484 578l8-5 9-2 M597 373l2-11 4-9 M284 263l7-6 6-7 M457 568l-5-8-8-5 M377 343l0-9-1-9 M704 472l-8-6-10-4 M226 508l-3-8 1-10 M251 498l3-6 3-6 M726 441l3-10 1-11 M407 655l2-7 4-6 M495 261l3-5 3-5 M655 309l-3-10 0-11 M525 354l2-7 5-7 M749 617l-6-6-8-4 M726 603l3-11 3-11 M685 427l-8-5-6-8 M443 354l6-2 7-1 M599 619l-8-3-8-2 M376 379l-5-8-4-9 M462 394l4-7 3-8 M432 293l5-6 4-7 M318 605l-1-7-4-6 M254 626l5-4 7-2 M365 399l5-4 5-2 M260 377l-10-6-10-6 M803 522l6-3 5-4 M618 533l8-9 8-9 M599 333l-1-8 1-8 M723 265l-2-6-2-6 M337 665l6 0 5 0 M216 475l4-5 2-5 M559 509l8-4 8-5 M679 351l-2-8 0-8 M696 361l-8-3-6-6 M407 397l7-10 6-10 M662 519l-5-8-7-6 M714 227l-6-8-2-9 M424 260l1-8 3-7 M652 487l-4-7-6-5 M600 540l-7-2-7-3 M798 462l3-5 2-6 M393 599l-10-4-10-6 M710 348l6-9 2-12 M231 402l-1-7-2-8 M627 532l6-7 7-6 M444 635l-1-10-3-8 M522 522l-7-5-4-8 M581 415l-5-7-6-6 M358 229l-2-8-2-9 M305 342l-2-11-1-11 M398 558l6-7 8-5 M750 572l-5-9-8-8 M454 630l7-9 8-8 M707 426l3-11 7-8 M321 538l3-6 1-7 M317 500l-2-10-4-8 M497 396l-1-11-3-12 M426 371l-4-8-5-7 M207 620l-10-3-10-1 M596 553l-4-10-1-10 M283 224l-2-12 0-11 M401 544l-3-5-4-3 M302 680l-9-4-7-6 M665 347l3-6 3-5 M693 293l4-6 2-6 M852 603l-3-5-2-4 M381 219l-2-10-3-10 M794 552l0-7 1-7 M503 492l-7-4-8-2 M254 444l5-4 4-3 M372 641l9-5 9-3 M665 337l5-1 4-3 M622 644l4-4 5-3 M696 370l10-6 10-5 M517 598l3-5 2-6 M321 414l-4-3-5-2 M374 490l-5-6-5-5 M581 276l-8-7-7-8 M463 631l9-5 8-7 M394 432l-5-7-4-7 M425 355l-1-9-2-10 M804 293l-3-10-5-8 M315 469l7-2 6-4 M328 516l5-6 4-6 M292 406l-7-5-7-5 M274 566l7-6 6-7 M427 408l3-6 1-7 M385 634l0-5 0-5 M416 626l4-3 6-1 M402 573l-9-9-11-4 M680 661l9-3 8-7 M781 564l0-5-2-5 M645 543l-9-7-6-9 M439 443l-8-8-9-8 M203 575l-2-5-3-4 M416 289l9-4 9-2 M533 611l-4-7-7-4 M606 455l-4-8-1-8 M513 559l2-6 2-5 M733 517l2-10 7-8 M433 510l2-10 5-10 M457 483l-8-2-9 0 M482 225l6-6 8-3 M430 223l-3-5-3-5 M651 271l-11-5-8-8 M617 482l-5-9-7-8 M348 579l-6-6-6-7 M562 465l6-7 7-4 M341 457l-2-5 0-5 M368 283l-4-5-3-5 M715 261l-1-9-1-9 M622 421l-10-5-9-6 M567 519l-4-7-1-7 M318 494l-8-3-8-2 M232 441l-6-5-4-5 M801 512l2-8 3-6 M625 421l6-8 9-7 M371 511l-1-9 0-9 M402 596l9-6 7-9 M235 575l-2-5-1-5 M320 473l-8-3-8 0 M830 558l-3-7-1-8 M278 579l-4-5-3-5 M665 411l-11-3-11-1 M491 452l4-4 5-2 M333 328l8-5 8-6 M620 455l-9-4-9-6 M733 449l-3-5-4-5 M451 536l-1-10 3-10 M231 464l6-2 6 0 M771 537l-10-5-11-2 M338 495l-2-6 1-5 M295 207l4-11 0-12 M526 254l-4-4-5-3 M648 508l-9-6-10-3 M729 555l-4-6-5-6 M397 458l6-2 5-4 M431 240l6-8 4-9 M336 326l-4-10-4-11 M606 450l7-6 6-8 M624 240l5-7 7-5 M512 309l-5-9-6-9 M583 422l-1-7-1-7 M687 569l-2-7-4-6 M325 252l-7-9-9-7 M181 566l-3-5-3-5 M209 335l-10-7-6-9 M748 432l0-11-1-12 M427 217l10-5 11-4 M427 276l6-3 6 0 M273 630l1-12-2-11 M298 586l-1-8 0-8 M662 524l8-9 8-8 M749 493l-5-2-5-2 M494 376l4-11 3-11 M658 616l-3-8-4-8 M698 347l2-6 1-6 M801 539l-7-10-9-7 M307 378l2-7 0-7 M374 244l-4-9-3-9 M240 306l-1-11-6-9 M794 439l-1-7 1-7 M448 664l1-10 0-9 M499 296l-5-9-6-7 M278 378l-7-6-8-4 M636 396l-7-8-3-10 M401 173l11-1 11-3 M776 645l-6-5-6-5 M455 644l-5-4-6-1 M811 392l4-3 2-5 M771 309l1-10 1-11 M659 497l5-9 6-9 M715 353l-3-10-7-9 M376 622l-2-10-2-10 M391 628l-6-8-7-7 M763 394l9-3 6-6 M625 255l-3-4-2-5 M670 452l8-6 7-7 M641 451l10-4 10-4 M666 342l9-8 7-9 M607 259l-10-5-9-7 M349 213l-5-8-6-7 M467 514l7-3 5-4 M782 504l-4-10-3-9 M364 642l-1-8 3-9 M729 502l3-6 3-6 M715 578l5-1 5-4 M688 170l3-8-1-8 M656 627l-7-3-6-5 M703 355l-5-2-5-3 M361 507l2-5 2-5 M361 373l8-3 9-1 M787 399l4-6 6-4 M466 252l5-2 4-4 M311 269l-2-8-1-8 M627 262l-6-3-7 0 M313 268l6-5 3-6 M409 567l4-10 6-9 M699 228l2-12-2-11 M384 240l4-3 5-3 M763 430l-3-5-2-4 M490 532l4-2 5-4 M200 578l-7-7-7-8 M268 421l-7-2-7-2 M295 222l4-11 4-11 M378 187l-2-6-4-7 M423 319l10-2 10-1 M715 511l-1-12 2-11 M502 250l-6-7-7-7 M770 532l-4-5-3-5 M216 571l6-7 7-6 M763 525l8-6 7-8 M403 486l7-3 8-2 M789 648l-12-2-11 1 M347 611l1-8 3-8 M622 292l5-5 4-5 M636 592l-11 0-12 0 M778 564l2-8 0-7 M431 380l-8-7-9-4 M545 448l7-7 5-9 M645 326l4-5 5-4 M704 609l5-4 4-5 M765 375l6-4 5-7 M643 486l-4-10-4-9 M281 611l1-6 1-5 M291 545l-5-6-5-5 M615 422l0-10-3-9 M718 398l7-4 5-5 M683 365l-6-10-10-7 M785 431l6-5 7-3 M537 269l-4-5-5-4 M288 328l2-11 1-11 M470 472l-5-5-4-4 M326 411l-4-4-6-3 M454 424l-3-8 0-9 M608 586l-9-4-9-4 M721 411l-3-8-1-9 M537 534l-6-3-7-3 M659 638l-2-11-6-11 M659 439l0-10 2-10 M261 403l-10-3-10-3 M732 245l4-11 3-11 M754 344l9-5 9-5 M404 476l1-9 4-9 M323 559l7-6 4-8 M618 304l3-5 1-5 M602 329l-1-7 0-7 M818 400l2-7 1-7 M353 513l1-8 4-7 M609 594l-7-5-6-5 M363 396l-1-5-1-5 M454 293l-7-9-8-8 M555 553l-3-11 0-10 M406 646l-4-4-3-6 M428 495l2-9 0-9 M734 313l6-6 8-5 M314 421l1-9-2-9 M295 515l-4-6-3-6 M486 351l-7-4-7-2 M377 454l8-7 10-5 M500 525l-9-8-6-10 M414 485l7-4 8-4 M749 400l1-8 3-6 M395 547l8-7 5-10 M313 475l-3-7-1-7 M676 538l4-5 5-3 M266 631l-5-2-6-1 M347 338l7-2 6-4 M650 520l-6-1-7 1 M416 431l-4-3-3-5 M640 268l1-6-1-6 M481 216l-10-4-10-4 M639 318l2-8 2-8 M697 500l-5-3-5 0 M234 575l1-10 2-9 M466 482l-9-7-10-4 M474 499l-3-10-4-9 M581 474l-5-6-3-6 M422 531l-3-9 0-9 M257 418l5-10 6-10 M405 529l-5-2-4-4 M240 602l1-7-2-6 M418 646l3-6 1-6 M338 531l-6-3-6-4 M702 264l-7-4-7-1 M267 593l-2-7-4-7 M179 582l2-6 3-4 M505 525l0-7 0-8 M779 489l-2-6-1-5 M646 196l-3-10-1-11 M217 363l-1-5-3-4 M662 442l-4-11-4-11 M692 462l-1-6 0-6 M584 433l3-4 3-4 M768 553l-5-6-5-6 M367 613l5-8 8-8 M256 520l7-1 6-3 M791 374l1-8 0-9 M410 534l-9-2-9 1 M849 558l-1-7 0-7 M366 394l5-2 5-2 M322 487l-6-8-9-6 M311 475l5-7 3-8 M416 675l-5-4-7-2 M604 424l1-7 1-7 M494 519l3-11 6-10 M197 367l-10-5-10-3 M736 277l10-4 8-5 M389 412l-6-3-4-5 M388 533l-7-4-8-3 M527 442l-4-10-2-10 M625 403l6-7 6-8 M670 444l8-5 9-5 M492 292l-1-4-2-5 M577 502l4-3 5-3 M794 545l-6-6-5-7 M446 562l1-8 4-6 M717 484l-2-6-5-5 M767 542l-8-1-8-2 M463 223l-9-2-8-2 M273 607l-7-5-8-2 M801 272l4-9 1-11 M249 301l2-7 1-7 M310 362l9-5 8-7 M741 205l-4-3-5-2 M489 554l-2-5-3-5 M739 376l2-5 3-5 M707 456l5-8 3-10 M364 404l8-9 10-5 M320 222l3-6 3-6 M304 593l-1-6 2-6 M446 397l-4-5-3-6 M403 659l3-9 7-9 M231 610l8-9 5-11 M684 473l-2-11-1-12 M791 545l-10-6-6-9 M679 399l-7-9-2-12 M600 522l10-7 7-9 M636 376l6-7 6-7 M389 232l-3-12-3-11 M736 403l-8-6-9-3 M295 551l5-5 5-4 M486 518l-6-4-4-7 M646 310l6-5 4-7 M408 424l0-10 2-9 M476 273l7-9 8-9 M285 484l3-9 7-8 M350 669l-6-8-6-9 M727 528l-5-8-6-6 M428 220l-4-5-5-4 M322 377l-3-12 2-11 M397 438l5-10 1-10 M785 376l7-6 5-9 M302 281l-4-5-4-3 M426 530l6-1 6-1 M783 578l1-11 1-11 M283 358l8-4 7-6 M412 461l-4-3-3-4 M736 574l-4-8-4-7 M249 651l5 0 6-2 M378 292l6-8 5-9 M732 560l3-7 5-6 M731 570l3-5 3-6 M393 406l-8-6-9-4 M364 371l1-12 5-11 M231 593l7-4 9-1 M392 583l1-8 0-8 M444 557l4-3 4-4 M640 462l-4-7-2-8 M485 311l-7-5-6-3 M506 638l6-3 5-2 M460 217l-9-4-10-1 M315 626l4-4 4-3 M723 365l-2-9 2-8 M813 318l7-2 6 0 M540 424l-6-2-6-3 M389 221l-4-3-5-2 M635 390l1-10 1-9 M671 344l-9-1-9 2 M428 398l5-2 5-3 M230 592l0-5-2-5 M654 505l-5-6-7-6 M376 329l-10-1-9-3 M631 337l-1-5 1-5 M296 398l-5-6-6-4 M607 547l9-6 10-6 M301 597l4-5 5-5 M612 564l4-7 6-5 M280 479l-5-5-5-5 M621 496l9-6 11-5 M282 572l-5-4-5-3 M352 549l8-9 5-10 M504 568l3-5 2-6 M394 387l-7-6-6-9 M506 323l-1-6 1-6 M641 503l-7-7-5-9 M325 351l-5-4-3-5 M311 385l5-3 5-2 M610 514l11-1 12-1 M658 271l9-2 8-4 M501 548l2-7 0-8 M710 539l-6-8-7-8 M249 650l5-1 5-2 M237 355l5-1 5-3 M720 596l7-6 9-5 M289 598l-3-7-3-6 M710 361l6-5 7-2 M641 286l-5-2-5-4 M482 340l1-9-1-9 M414 286l-8-3-8-4 M249 319l-3-4-3-4 M643 417l3-4 4-4 M378 372l-1-8-1-8 M766 395l-8-7-9-6 M698 287l0-6-2-5 M404 507l-4-8-4-9 M377 448l-6-4-6-5 M445 430l0-10 3-9 M241 554l-5-9-3-9 M514 453l4-3 5-3 M439 593l-7-6-5-8 M598 550l4-6 5-6 M789 540l4-8 6-6 M714 254l-1-7-1-6 M725 243l5-5 6-3 M665 249l4-11 5-10 M312 285l-10-2-9-5 M506 378l6-3 8-1 M312 445l4-3 5-2 M643 567l-2-6-2-6 M539 513l1-10-1-9 M376 448l3-11 5-9 M743 430l-5-2-6-1 M839 582l5-3 6-1 M757 427l-8-7-5-9 M303 545l-2-5-2-5 M460 541l-3-6-3-7 M737 292l-1-6 0-7 M709 255l-6-6-6-7 M442 391l-10-5-9-8 M448 564l1-5 1-5 M400 657l-3-5-3-5 M373 408l-5-9-3-11 M347 444l2-6 2-6 M483 572l10-4 10-2 M406 382l1-5 3-4 M667 324l-1-7 1-6 M382 422l2-8 0-8 M748 570l-6-4-5-5 M702 207l-2-7-2-6 M737 309l-5-3-4-3 M252 252l7-3 5-4 M481 331l6-3 6-4 M678 589l-4-7-3-8 M639 532l-5-8-5-8 M286 464l5-3 5-3 M788 590l-2-7-3-6 M288 486l11-3 10-1 M691 366l-10 0-10-2 M608 636l9-6 10-6 M449 315l0-7 3-6 M560 508l-3-10-5-9 M820 630l-2-9 0-10 M707 608l7-6 5-8 M785 364l2-9 3-9 M226 633l9-7 11-6 M761 476l10-1 10-2 M265 604l6-6 6-4 M396 413l0-10-3-10 M269 621l6-8 6-7 M749 262l-10-1-9-1 M499 605l3-9 2-9 M575 328l-7-3-8-1 M395 357l-1-6-2-7 M344 442l-4-8-2-9 M774 501l7-5 5-6 M700 399l2-8 3-7 M406 573l0-9 3-9 M512 469l4-4 3-5 M243 613l8-7 8-7 M643 611l4-4 3-4 M519 372l-1-7-1-7 M586 431l-5-9-6-10 M702 265l1-7-1-6 M383 427l-3-9-2-9 M377 296l-7-4-7-1 M506 545l5-4 5-3 M358 557l-11-5-11-3 M702 338l-7-3-7-3 M642 592l4-2 4-4 M609 294l-10-6-11-3 M330 497l-4-8-5-9 M249 594l5-10 0-12 M347 573l7-6 6-5 M331 321l-1-7-2-7 M626 314l-2-5-3-4 M412 266l4-5 3-6 M464 214l-6-7-7-7 M404 335l0-8-2-8 M293 470l4-7 5-6 M752 579l0-5 2-6 M598 526l-1-8 1-9 M452 541l1-8 3-8 M452 369l-6-1-6-1 M364 590l-3-5-3-4 M604 611l-7-6-9-4 M638 323l6-5 5-5 M577 474l-4-6-2-6 M861 555l10-7 8-8 M811 556l-6-1-5-4 M284 542l4-10-1-10 M446 331l5-5 4-6 M463 295l2-10 1-11 M803 584l7-5 7-6 M246 568l7-2 7-2 M381 428l0-6 0-6 M699 446l6-2 6-4 M789 560l2-5 2-5 M396 671l8-6 10-6 M522 494l-4-7-4-8 M402 420l-3-9-1-10 M456 286l1-11 1-11 M601 530l-3-6-2-5 M569 365l-6-10-6-10 M244 456l-8-7-8-8 M284 631l-3-9-3-8 M351 282l0-5-2-5 M612 354l5-3 4-5 M395 359l9-8 6-10 M691 278l4-6 5-5 M629 662l-7 0-7-2 M549 499l12-3 12-2 M489 371l1-8-1-7 M268 425l-2-5-3-4 M493 523l4-6 4-6 M549 328l3-8 3-10 M659 424l7-2 7 1 M482 581l-1-9-3-9 M343 530l2-10 2-11 M731 412l4-9 3-11 M706 251l11-3 10-6 M776 414l-10-6-10-6 M531 337l5-8 8-6 M622 442l-6-9-7-9 M654 496l8-7 7-8 M773 271l-3-7-5-5 M419 620l-5-4-4-4 M310 379l-9-6-9-8 M617 487l9-7 7-9 M258 281l-6-3-5-4 M817 622l0-10-2-10 M473 681l-6-5-7-4 M448 358l1-7 2-6 M499 413l3-3 4-4 M710 323l-4-9-3-10 M771 269l-5-4-6-3 M452 400l0-7-1-8 M432 501l-4-5-4-6 M429 637l-6-7-5-7 M237 325l11-2 11 0 M365 314l1-7 1-7 M835 536l2-5 2-5 M726 300l2-6 1-6 M266 422l6-4 7-4 M413 269l0-9 0-10 M434 361l-3-7 0-8 M429 310l-2-5 0-6 M682 383l-8-7-10-5 M240 442l6-9 9-7 M393 488l0-5 1-5 M734 413l-10-5-8-6 M327 444l0-10-2-10 M334 517l-3-9 0-9 M687 191l4-7 7-5 M429 360l-2-6-4-5 M589 320l1-7 2-7 M590 344l-2-6-1-7 M792 568l-4-7-2-8 M715 574l-7-2-7 0 M465 427l-4-5-1-7 M722 424l3-10 6-9 M292 510l5-10 3-9 M658 479l-9-7-8-8 M632 539l4-10 6-9 M722 436l-3-10-5-9 M778 578l-10-1-11-2 M400 443l4-5 4-4 M763 428l-1-8-4-8 M299 611l-6-5-6-7 M417 552l5-8 6-8 M767 600l10-5 10-4 M807 329l3-10 1-10 M739 487l3-10 6-8 M755 356l7-5 5-7 M307 595l2-6 0-8 M435 653l0-8 0-7 M593 539l-4-9-2-9 M441 409l3-8 1-9 M833 588l-6-3-8-3 M463 351l-6-8-7-6 M828 568l6-1 6-1 M457 643l5-5 3-7 M510 568l-5-10 0-10 M236 545l6-7 7-4 M444 558l-7-10-2-11 M562 326l7-5 6-5 M589 250l-6-8-7-6 M476 286l-11-4-11-3 M678 543l5-6 5-7 M371 563l-8-2-9-1 M420 281l0-12 2-11 M240 638l9-8 11-4 M194 603l8-3 7-3 M653 418l0-8 3-7 M742 386l-7-2-7 0 M705 393l4-5 4-5 M410 536l6-8 6-8 M700 317l-4-6-5-4 M514 640l-3-8-3-8 M642 622l-2-11 0-10 M750 527l2-7 1-6 M482 203l-1-11 1-11 M390 475l0-11 2-10 M743 329l-8-5-5-8 M706 344l7-9 9-8 M350 442l-3-9-3-7 M667 317l6-6 8-5 M746 334l-2-10 3-11 M295 270l3-8 1-9 M830 558l2-5 1-5 M476 397l-3-9-5-9 M665 526l-9-5-10-3 M409 273l-8-3-8 0 M246 660l-4-3-3-5 M755 513l-4-6-5-7 M413 586l-6-3-6-3 M788 623l-5-9-1-10 M351 624l7-4 7-3 M824 571l1-7 2-8 M392 497l-1-5-2-5 M470 445l6-5 6-4 M621 424l4-8 4-7 M246 412l-3-7-1-8 M411 314l5-10 8-7 M213 577l-9-8-10-5 M432 234l9-2 9 2 M275 608l4-11 4-11 M339 686l6-4 4-7 M739 411l-2-5-3-4 M639 501l6-1 6-3 M593 304l9-4 8-7 M404 393l8-7 6-9 M353 445l5-10 3-11 M393 653l-5-3-5-2 M367 572l8-8 8-8 M275 644l5-3 3-4 M620 384l-4-9-2-11 M271 416l2-10-1-9 M647 362l-10-5-10-3 M411 344l5-4 6-2 M249 579l2-6 2-6 M479 520l-5-2-4-3 M649 339l-6-4-6-3 M691 539l1-8 2-8 M342 511l-7-3-6-6 M374 656l0-8 3-8 M719 597l6-9 5-10 M282 577l-7-7-6-8 M550 365l6-2 6-2 M662 456l-3-4-4-5 M677 183l-6-9-4-9 M576 385l-3-5-4-4 M518 580l-3-8-4-7 M358 469l0-6 0-6 M290 449l-5-10-3-9 M670 330l-2-10-2-11 M334 441l4-2 5-1 M684 384l8-4 7-3 M477 299l-8-5-10-3 M576 514l-10-1-9-2 M622 521l5-4 4-5 M765 597l-10 0-9-3 M310 555l2-10-2-10 M334 594l6 0 6-3 M587 575l11-4 10-6 M329 384l9-3 9-1 M736 318l-4-4-3-4 M408 362l-10-5-9-6 M498 279l3-4 2-5 M259 267l7-7 8-4 M279 568l-2-4-3-5 M384 418l-10-4-8-8 M361 499l-2-11-3-10 M802 314l4-9 6-6 M473 674l-3-8-3-8 M750 486l3-11 5-10 M729 417l4-3 4-3 M622 514l-3-7-1-7 M678 309l2-9 3-9 M553 338l8-2 7-5 M641 602l-7-4-7-6 M597 286l5-4 6-3 M618 435l5-7 2-7 M464 503l2-10 2-9 M307 388l-5-3-5-4 M433 471l-8-8-10-7 M735 579l-4-4-6-3 M464 527l0-10-2-9 M375 364l8-7 10-4 M721 451l9-2 9 0 M380 446l8-5 7-6 M563 388l-8-6-6-8 M427 376l-1-11-5-11 M270 568l8-2 8 0 M476 522l3-4 3-4 M794 311l5-9 6-8 M702 382l-9-6-11-2 M389 349l-5-3-5-5 M691 542l0-6 1-7 M305 250l-10-6-11-3 M789 388l3-8 6-6 M224 495l8-8 7-8 M331 227l-1-5-2-6 M843 541l7-3 5-5 M689 585l7-5 7-3 M738 234l2-7 1-7 M474 205l4-3 4-4 M443 451l-2-8-1-9 M362 363l9-2 8-4 M645 529l-2-6-4-4 M699 613l4-8 4-8 M440 391l5-10 5-9 M295 623l-8-3-9-2 M678 424l6-8 8-8 M621 316l6-2 5-1 M470 553l6-2 6-3 M510 639l4-5 4-4 M309 425l-8-5-10-4 M200 460l2-4 2-5 M642 433l5-8 8-6 M789 415l-2-6-1-5 M317 419l-5-4-6-2 M305 667l-7 0-8-3 M560 491l-9-3-10-1 M591 608l1-10-2-10 M355 310l-6-3-5-4 M532 515l3-6 4-6 M329 318l4-8 4-9 M315 635l-8-4-8-3 M393 476l-2-7-4-6 M646 390l-2-5-1-6 M380 368l4-9 7-7 M491 440l-4-5-4-5 M327 218l-3-5-3-4 M620 510l7-10 9-7 M724 464l-4-5-4-5 M268 437l2-9 0-9 M487 448l2-4 2-5 M224 452l8-5 9-3 M697 393l2-6 1-6 M456 381l-5-4-5-4 M595 376l-9-3-8-7 M317 519l-2-5 0-6 M395 388l-10-3-8-5 M721 491l3-7-1-7 M569 420l6-6 8-4 M245 554l-5-8-5-7 M307 222l-4-5-2-5 M510 590l-4-3-3-4 M244 502l-4-7-5-6 M544 391l9-6 6-9 M374 500l-4-6-6-4 M793 524l6-2 6 1 M493 340l-6-3-6-3 M452 433l-7-3-6-6 M736 349l11-4 11 0 M773 531l-7-5-5-7 M506 506l5-9 4-10 M741 572l5-9 4-8 M551 555l5-10 5-10 M479 590l-9-2-8-4 M334 458l-9-4-8-4 M710 477l3-10 5-9 M430 487l-5-8-6-7 M714 372l-4-4-3-4 M382 296l-4-12-6-9 M331 464l-3-8-3-8 M778 605l9-6 9-5 M523 373l-5-4-6-3 M495 569l-4-8-3-9 M515 222l1-10 5-9 M436 235l-1-6 0-5 M388 402l-2-11-5-10 M402 543l-4-3-5-3 M416 467l4-10 1-10 M698 526l-1-11-2-10 M340 323l5-4 6-3 M382 584l0-10-3-10 M191 462l-7-7-6-7 M678 447l-5-2-4-5 M800 494l5-10 5-10 M410 469l-7-7-5-8 M250 554l-2-9-1-10 M290 497l-3-6-3-6 M269 446l-4-7-1-8 M435 417l8-7 9-5 M476 387l-8-7-4-9 M852 542l-8-4-8-2 M675 510l0-11 1-12 M597 408l5-3 3-4 M266 443l-2-10-2-10 M324 556l-3-10-7-8 M332 253l9-5 9-5 M378 456l10-5 8-8 M317 362l-4-5-3-6 M273 469l7-4 7-3 M666 204l-4-6-5-5 M791 414l-9-4-8-3 M680 582l-4-5-3-6 M586 287l-2-12 4-12 M368 365l-8-7-6-10 M323 276l3-6 3-5 M254 473l1-10 0-9 M281 552l1-11-1-11 M189 603l-10-6-6-9 M527 371l4-4 4-4 M447 242l-3-6-5-4 M743 469l-3-8 1-8 M589 338l-3-6-4-7 M338 382l8-7 7-8 M752 625l-5-2-6 0 M515 536l4-3 5-3 M484 355l2-11 7-9 M253 367l0-5 1-5 M261 444l5-7 3-8 M359 638l-11-5-11-3 M712 543l-9 0-10 1 M301 484l5-7 6-5 M466 556l-8-7-10-6 M615 511l-3-10-2-10 M186 517l3-5 5-4 M233 598l4-11-1-12 M695 451l-5-11-6-10 M719 406l7-3 7-4 M363 182l2-10 2-11 M409 295l-6-8-5-8 M197 391l-7-5-7-4 M701 345l1-6 2-6 M249 471l-1-7-3-6 M496 307l-9-2-8 1 M583 350l-6-6-7-7 M703 593l-6-5-6-3 M762 278l7-8 8-7 M293 347l-10-1-10 3 M304 243l-11-4-10-4 M443 605l6-3 7-2 M369 487l11-2 10-5 M387 686l-8-7-7-7 M694 213l-3-6-3-6 M594 370l-8-6-9-7 M712 587l3-5 2-6 M420 560l2-5 4-4 M362 286l3-10 4-9 M505 272l-6-5-5-5 M419 426l-4-4-3-5 M741 341l-4-3-3-5 M787 499l5-6 4-7 M400 496l-7-4-6-5 M734 387l-5-1-6 0 M356 393l-4-9-2-10 M777 295l4-4 5-5 M376 399l7-3 7-3 M723 549l3-8 7-6 M367 181l-6-3-6-2 M182 544l-10-4-8-6 M440 537l-2-8-5-7 M707 458l-6-9-6-9 M551 374l-3-6 0-7 M311 443l-7-2-6-1 M504 569l-2-7-4-7 M726 327l6-5 6-4 M794 288l-4-5-3-5 M712 535l5-1 5-2 M714 439l-6-5-8-2 M678 289l2-5 1-7 M370 244l-8-3-9-2 M620 397l-8-4-8-5 M808 498l4-5 5-3 M669 569l5-7 3-8 M683 446l2-10 3-10 M269 525l3-7 1-7 M627 533l-5-4-4-4 M763 541l-5-4-6-3 M747 506l-2-7-4-7 M553 284l-4-5-3-5 M209 426l-8-3-9-2 M819 452l3-5 2-6 M350 267l-8-3-7-5 M288 314l6-6 6-6 M469 308l-4-5-3-6 M518 542l10-7 11-2 M289 395l4-10 2-11 M631 338l4-6 4-6 M261 258l-7-4-7-4 M705 420l2-7 1-6 M341 694l-5-1-6 0 M742 216l6-8 4-9 M377 401l-1-11 0-10 M409 661l0-10-3-9 M406 536l-7-7-8-6 M400 381l5-9 5-10 M430 346l4-10 8-8 M470 435l-2-10-5-10 M260 316l-6-2-7-1 M454 500l4-6 3-6 M309 266l-7-4-7-4 M177 619l-7-6-6-7 M768 498l-2-10-2-10 M404 349l-5-8-4-7 M761 541l-1-7 1-7 M442 532l2-5 1-6 M419 468l1-5 3-5 M385 396l5-5 5-6 M460 450l2-11 4-11 M470 377l-9-2-9 0 M301 218l-3-6-3-5 M730 275l4-5 4-5 M409 404l-6-2-5 0 M222 557l4-5 4-4 M246 571l1-8 2-8 M338 530l1-6 1-5 M608 384l-4-11-3-12 M394 421l8-7 6-10 M670 566l-3-5-2-5 M344 333l5-9 6-8 M214 630l3-6 3-6 M383 421l-6-10-3-12 M754 436l9-7 11-2 M505 522l0-10 2-10 M657 225l8-1 8-1 M499 364l-10-6-6-9 M320 499l9-2 8 0 M387 451l1-9 3-8 M560 528l-7-3-8 0 M406 432l-10-5-10-4 M240 503l2-8 4-6 M548 415l-12-4-12-1 M844 549l-1-5-3-5 M622 504l-7-7-10-2 M291 273l4-8 5-8 M267 599l2-7 5-7 M343 462l3-4 1-6 M636 254l5-3 5-2 M435 475l-1-7-2-6 M564 416l4-3 5-1 M427 533l9-6 7-9 M369 594l-5-4-7-2 M522 392l4-6 6-3 M733 265l-5-8-7-6 M715 639l-8-7-5-9 M645 559l3-10 8-8 M675 592l6-9 7-8 M305 271l-4-5-6-4 M475 542l-9-6-7-10 M393 505l1-9 0-9 M731 241l4-5 4-5 M635 210l-6-7-8-4 M467 660l-10-1-10-1 M400 373l2-6 0-7 M380 229l-2-8 1-9 M721 375l2-6-1-6 M359 377l4-3 5-2 M473 427l5-5 6-3 M348 321l4-5 3-5 M455 230l2-10 3-10 M353 414l-5-6-3-6 M742 404l3-11 4-11 M780 571l-8-9-10-6 M653 557l-3-7-1-8 M422 443l1-11 5-9 M774 612l-3-5-1-5 M762 312l-7-6-5-7 M742 382l-5-10-2-11 M654 586l-4-6-2-6 M420 515l8-7 7-8 M369 533l-7-7-7-6 M647 420l1-9-1-9 M293 253l3-4 2-5 M653 404l4-6 2-8 M659 185l5-4 5-2 M514 498l0-5 0-6 M595 551l-3-9-7-8 M687 640l6-4 7-4 M261 301l-4-7-6-6 M205 638l9-3 8-6 M230 573l7-6 7-6 M340 229l-4-8-6-7 M442 494l7-6 8-5 M431 445l2-9 4-8 M273 606l-5-9-8-7 M778 434l8-3 8-5 M438 479l2-5 4-6 M468 393l-5-9-4-9 M412 555l-3-6-5-5 M242 551l-6-6-4-8 M681 432l-1-5-2-5 M625 423l-10-3-9-4 M207 399l-2-5-2-5 M554 463l-2-5-2-5 M428 459l4-10 4-9 M470 269l3-11 6-11 M409 562l-1-10-2-10 M629 428l5-12 5-10 M698 510l2-7 4-6 M822 620l-5-10-8-7 M465 391l2-10 4-9 M529 430l5-10 3-10 M659 393l7-4 8-2 M393 600l-3-9 0-9 M442 384l-7-9-8-7 M719 353l-6-4-5-4 M433 508l-3-7-4-6 M654 454l-10-7-10-5 M334 404l0-5 2-5 M430 342l6-4 7-3 M526 439l3-6 4-5 M444 386l-3-6-2-7 M291 498l11-1 11-2 M641 344l-5-6-4-7 M303 259l1-7-1-8 M276 421l10-6 11-3 M407 464l-7-8-5-10 M487 355l3-6 3-5 M396 654l-7-4-5-7 M263 633l7-7 7-8 M770 598l4-5 5-4 M383 525l-4-10-5-10 M262 545l5-4 6-3 M421 530l-4-7-4-7 M671 631l-2-8-2-9 M656 350l4-7 3-8 M382 238l-6-8-7-7 M531 302l3-6 2-6 M690 415l6-10 7-8 M375 611l8-6 9-4 M589 467l11-4 12-3 M232 564l4-11 2-11 M633 658l3-12 5-10 M795 581l-5-6-3-6 M360 262l1-6-1-5 M802 442l-6-1-5-1 M846 579l7-2 5-4 M500 473l2-7 3-6 M605 351l-2-5-1-6 M553 315l8-1 9-2 M246 411l-5-7-5-6 M544 378l8-3 8-4 M269 443l-8-8-10-6 M787 477l1-9 3-9 M306 368l6-7 8-4 M519 347l4-4 6-3 M368 443l-4-4-5-4 M280 480l5-4 5-3 M452 342l-5-8-8-6 M615 496l5-3 4-4 M398 587l5-9 2-9 M755 394l-1-11 0-12 M741 401l1-10 2-10 M344 642l-6-2-7-2 M721 269l-1-10-4-10 M341 385l7-8 5-9 M669 310l-7-9-11-6 M557 605l0-10 2-9 M502 452l11-4 9-8 M672 319l2-10 1-9 M300 302l1-10-1-11 M659 604l11 0 11 1 M680 564l2-5 4-4 M683 660l1-5 1-5 M273 369l9-3 8-5 M417 446l11-3 11-5 M253 599l-2-6-1-6 M351 615l5-2 4-5 M275 501l-7-3-7-2 M427 468l0-11-1-12 M428 657l6-7 5-8 M667 526l9-3 7-5 M249 301l0-7-1-6 M673 364l1-6 1-7 M745 392l-4-10-4-10 M229 345l5-6 2-8 M367 390l2-5 2-5 M400 404l6-10 8-7 M407 289l-1-7 0-6 M754 361l5-3 6-3 M412 433l3-5 2-6 M631 576l3-5 2-6 M724 518l-7-5-7-4 M368 201l-9-6-7-7 M697 246l-4-5-2-6 M437 316l4-8 4-7 M771 371l3-9 2-8 M449 371l11-4 10-2 M582 346l3-5 4-4 M397 553l-3-8-3-9 M826 547l6-3 6-3 M281 565l4-5 6-4 M697 268l7-9 4-11 M349 353l-3-10-3-10 M571 486l5 0 6-2 M622 329l6-3 6-2 M496 389l2-11 3-11 M274 273l-6-6-4-7 M656 499l1-5 4-4 M565 440l-1-10-4-9 M395 462l-4-9-7-8 M691 523l1-12 0-11 M689 318l-2-8-2-8 M688 535l-2-5 0-5 M667 351l-7-5-5-6 M585 385l-5-8-8-5 M651 200l4-6 2-6 M739 357l0-10 1-10 M404 494l0-8-3-7 M648 498l-1-6-2-7 M808 468l1-9-1-10 M660 613l-2-9-5-8 M425 441l0-7 2-6 M551 399l8-4 8-2 M549 600l-4-8-6-6 M621 364l-6-5-4-7 M463 500l2-4 3-5 M732 529l-4-4-5-4 M439 595l10-4 8-6 M316 291l-9-4-9-2 M326 345l-2-11-4-10 M336 289l-3-6-1-8 M232 582l-5-5-4-5 M395 453l-3-8 0-8 M749 449l6-6 7-5 M419 365l1-7 1-8 M319 238l3-5 2-6 M416 534l-6-8-7-8 M254 583l-7-3-9-1 M362 421l10-4 7-7 M501 612l5-6 6-6 M246 571l-5-3-4-2 M726 360l-1-11-5-11 M764 341l1-5 0-6 M305 292l-4-3-5-4 M456 564l9-2 7-3 M430 304l1-6 1-6 M482 414l-4-9-7-7 M622 405l1-12-4-12 M595 381l5-5 4-6 M585 252l1-10 0-10 M662 278l-6-5-4-6 M628 389l4-7 2-7 M305 662l-2-9-2-9 M571 461l4-9 2-9 M697 404l-7-7-8-6 M302 643l6-6 6-6 M689 555l9-6 5-9 M254 417l9-1 10-1 M551 262l-4-4-4-3 M337 464l7-5 6-5 M342 295l12 0 11-2 M657 304l3-9 1-10 M387 347l-6-5-6-3 M651 378l-5-5-3-6 M733 386l8-8 4-12 M314 554l9-4 8-6 M696 529l-6-8-4-9 M702 420l0-6-2-6 M707 640l-9-4-9-2 M692 457l8-7 8-7 M715 479l0-11 0-11 M419 434l5-1 5-2 M604 555l-3-11-7-9 M728 558l3-6 2-6 M796 574l-8-3-6-5 M435 691l5-6 6-4 M742 501l-2-7-4-6 M572 399l2-5 2-4 M799 418l-4-3-5-3 M328 357l-6-6-8-3 M341 364l-3-6-3-4 M496 490l8-6 6-8 M643 553l4-7 4-8 M399 548l0-10-2-9 M350 242l6-3 5-3 M775 375l3-5 0-6 M191 576l-2-7 0-7 M687 464l1-6-2-6 M459 460l0-7 1-6 M425 365l4-7 5-7 M453 466l-5-5-2-7 M480 490l-5-4-7-3 M222 313l8-4 7-6 M452 410l-4-4-5-3 M267 554l7-8 8-8 M498 543l-9-2-9-1 M728 548l-6-4-4-5 M665 390l8-4 7-4 M718 193l5-3 6-1 M737 291l3-6 2-7 M704 533l9-1 8-2 M476 559l1-6 3-6 M418 358l-7-7-5-6 M681 602l10-4 11-4 M318 245l0-7 2-8 M619 559l-5-7-7-5 M226 566l-2-4-1-5 M701 240l4-8 5-8 M549 472l4-8 7-6 M375 206l-4-4-2-5 M437 422l6-4 6-4 M347 383l-4-4-2-5 M730 482l0-5-2-5 M651 310l-1-11-1-10 M686 691l6-3 6-3 M815 583l-1-5 1-5 M457 535l-2-7 1-7 M691 373l8-5 8-4 M771 365l-9-3-10-3 M656 526l-3-6-1-6 M319 672l5-4 6-2 M823 536l4-4 4-4 M393 579l3-5 3-5 M463 201l2-12 5-10 M460 367l-6-3-7-1 M491 379l-6-1-5-2 M764 581l4-9 2-10 M541 431l-2-8 0-8 M342 484l-4-4-5-1 M577 444l-8-1-8-3 M357 329l4-4 4-2 M717 591l4-6 1-7 M427 347l-4-4-6-4 M723 566l-9-6-9-8 M368 379l7-5 7-2 M492 535l-5-5-5-5 M667 335l4-8 1-8 M434 301l2-9 4-9 M400 600l11-5 10-4 M562 438l-8-3-6-5 M795 313l-3-9-1-8 M413 567l8-5 8-5 M225 434l2-8 3-9 M241 484l6-6 8-6 M527 503l-9-8-6-10 M673 191l-3-6 0-6 M688 457l-6-3-7-2 M796 281l-9-6-6-9 M439 331l-3-7-4-7 M293 590l6-6 7-5 M283 486l4-5 5-3 M364 381l6-5 5-6 M366 324l5-3 4-3 M637 319l-2-7-4-6 M310 425l3-9-1-10 M516 440l-3-7-3-6 M731 525l5-4 4-5 M791 503l4-9 6-8 M371 376l4-7 5-6 M626 372l-2-5-2-5 M793 276l-2-11-1-11 M406 466l-3-7-3-6 M430 456l-6-5-6-3 M383 635l-4-5-5-4 M178 600l-10-5-9-4 M444 324l8-5 8-4 M686 334l7-7 9-4 M423 570l-10-3-11-1 M373 342l1-6 0-6 M479 404l-5-5-5-3 M400 516l-6-8-4-8 M501 535l-8-4-9 0 M496 611l0-6-2-5 M730 274l-4-5-4-6 M734 542l11-3 10-5 M420 404l6-7 5-8 M530 547l-6-5-6-4 M437 552l-3-4-5-3 M659 196l-7-4-7-4 M629 540l5-4 5-6 M680 312l1-7 1-6 M588 324l5-4 4-5 M718 431l1-9 4-9 M338 362l-8-8-10-5 M688 519l0-6 2-5 M672 343l0-9 0-8 M757 481l7-4 9-3 M466 489l-6-4-5-4 M633 611l3-8 3-8 M763 455l-10-6-8-8 M354 530l-1-7 1-8 M718 628l-3-7-5-5 M646 435l-7-10-4-11 M726 438l-5-4-4-4 M662 353l-4-12 0-12 M714 327l-1-6 1-5 M380 465l-2-10-3-9 M748 469l10-7 11-4 M787 617l9-1 8-1 M413 683l0-5-1-6 M753 383l2-5 1-5 M295 636l-6 0-4-2 M437 355l0-8 1-7 M615 209l-2-6-1-6 M233 464l7-5 7-6 M708 342l-7-4-6-4 M334 543l-6-6-5-7 M492 526l2-7 0-7 M794 615l2-9 2-9 M388 486l-6-1-5-2 M347 364l3-7 5-5 M586 303l1-10 4-10 M722 402l-1-7 1-7 M482 620l3-5 3-4 M195 495l4-10 3-11 M271 360l-9-3-11-1 M659 498l-7-7-10-5 M355 334l-7-8-8-7 M418 404l1-6 1-5 M361 397l6-3 5-5 M423 278l2-5 0-5 M823 425l-2-6-3-5 M599 400l-7-2-7 1 M295 552l-11-4-12-1 M422 485l-1-8-5-7 M340 335l7-7 4-8 M750 400l11-3 11 0 M566 458l-4-6-3-7 M496 322l3-5 1-6 M405 250l3-6 3-5 M379 671l0-11 1-10 M367 452l3-5 5-4 M361 530l-2-5-1-6 M311 474l7-3 7-4 M327 347l7-7 5-8 M685 503l3-8 5-7 M315 614l-8-4-8-6 M501 591l-9-7-8-10 M712 469l-2-10 0-11 M421 587l6-8 5-8 M814 589l-6-10-7-9 M552 584l-3-6-4-5 M467 393l5-1 5-2 M663 631l-3-6-3-5 M436 436l9-5 7-6 M732 478l-7-7-8-7 M522 307l-4-6-6-4 M842 504l-7-6-6-5 M352 313l-1-6 0-6 M334 618l4-5 2-6 M300 584l8-5 6-8 M202 511l-8-7-8-7 M187 410l-5-8-6-8 M679 365l-1-7-1-8 M302 422l0-7-1-6 M484 279l-10-5-9-7 M280 234l0-6-2-5 M287 419l-6-2-5-4 M405 300l-3-3-3-4 M556 571l-7-2-8 2 M413 402l5-4 7-3 M289 346l5-8 5-7 M615 643l-6-9-4-10 M260 590l-5-10-6-8 M647 617l-4-5-5-5 M814 549l-7-9-9-9 M412 570l-2-9-3-8 M654 620l9-4 8-5 M287 390l-7-10-7-10 M680 657l2-5 3-4 M577 554l1-8 4-7 M457 238l-10-5-9-7 M355 443l-5-8-2-8 M377 650l5-5 6-3 M436 506l0-7 3-7 M768 618l-7-1-6-1 M391 678l-4-8-2-9 M686 569l-5-7-4-9 M521 344l-4-4-5-4 M332 586l-3-5-3-5 M758 517l6-5 6-4 M488 668l7-7 8-5 M440 656l7-3 7-5 M671 574l3-7 4-6 M656 448l8-7 7-8 M382 586l-3-10 0-11 M319 341l3-9-1-10 M399 539l-3-6-4-5 M548 523l-2-7-4-7 M689 676l-1-10-1-9 M643 489l6-6 4-7 M290 534l6-9 6-9 M373 675l4-7 3-6 M725 233l1-10 4-10 M754 332l7-9 4-11 M305 426l3-5 2-6 M410 673l5-10 2-10 M707 212l-6-9-6-9 M654 422l1-5 3-6 M578 445l4-6 4-8 M775 370l-3-6-2-7 M462 553l5-1 4-3 M758 224l7-7 4-8 M517 543l-5-4-5-5 M610 493l-8-7-8-7 M775 320l7-2 8-1 M530 306l-7-2-6-3 M303 221l3-9 0-8 M316 673l4-4 3-4 M230 561l1-5 1-5 M591 445l8-7 9-4 M790 241l0-8-1-8 M686 390l-7-6-5-7 M376 523l-5-4-5-4 M756 348l-4-7-3-7 M680 463l2-5 3-4 M735 563l-6-5-7-3 M641 428l8-7 10-6 M307 485l4-6 5-4 M831 482l-4-9-5-9 M346 459l-5-7-7-7 M255 324l4-11 2-10 M425 513l5-5 4-7 M352 629l-5 1-6 0 M286 314l-5-3-4-3 M391 502l4-11 3-10 M777 364l4-4 4-3 M363 633l4-8 5-8 M345 479l-2-10 0-11 M680 403l-5-3-5-6 M448 258l5-5 5-6 M485 368l-8-3-7-2 M531 413l3-5 3-4 M735 595l-5-9-5-10 M274 635l4-7 4-8 M363 448l-3-11 1-12 M562 447l-2-11-4-10 M520 567l4-8 3-9 M656 237l4-6 3-6 M734 292l-6-3-5-5 M775 428l-4-8-3-9 M813 334l4-4 4-3 M267 483l-6-8-3-9 M396 626l10-4 11-1 M409 387l-5-5-4-6 M807 470l9-2 9 1 M386 544l-3-7-2-7 M805 536l4-6 4-6 M792 272l8-1 9-2 M725 676l7-8 3-11 M417 658l-4-3-4-4 M349 453l-2-5-2-6 M291 548l-4-7-2-7 M371 482l7-4 9-1 M470 664l-6-2-6 0 M792 498l2-9-1-9 M700 452l-4-5-4-5 M543 299l2-6 0-7 M664 390l1-9 2-9 M295 516l-5-4-4-5 M494 476l-4-5-5-5 M311 338l0-6-2-6 M650 566l4-7 4-6 M403 291l-9-4-7-5 M466 244l-8-1-6-3 M215 405l-3-6-4-6 M328 528l6-3 5-4 M669 358l-2-6-4-4 M330 428l-4-4-4-4 M310 472l-2-10 1-9 M626 535l-3-7-5-6 M634 539l-1-6-1-6 M406 342l9-4 9-4 M737 549l-3-11 0-10 M318 334l-2-7 1-7 M263 605l7-7 7-6 M748 464l-6-6-9-4 M288 298l5-5 3-5 M751 448l3-7 6-7 M397 532l1-11 2-10 M813 336l-1-9-3-9 M403 350l-3-5-6-4 M288 358l0-10-4-10 M693 534l-2-7-3-8 M210 373l8-6 8-5 M446 425l6-6 5-6 M373 641l3-7 3-7 M752 264l6-6 4-8 M207 493l-6-9-9-7 M677 368l-4-8-4-9 M678 223l5-1 6 0 M737 225l-7-10-9-6 M336 302l6-4 5-6 M735 516l1-11 3-10 M758 329l-4-2-5-2 M718 276l-9-5-8-6 M650 322l-9-3-10-2 M529 253l-3-9-5-9 M342 507l5-5 5-3 M706 434l3-11 1-11 M277 373l-6-10-4-11 M599 328l5-2 5-3 M827 469l-1-5 0-6 M245 303l4-6 2-7 M691 307l9-7 6-10 M342 260l-3-10 0-11 M396 465l-3-9-3-8 M448 516l-6-5-5-5 M565 548l5-8 3-8 M300 313l6-6 5-7 M678 314l-5-8-4-10 M557 572l6-3 6-3 M269 597l0-6 1-5 M616 497l9-7 7-9 M212 549l-1-7 0-8 M605 376l3-4 2-5 M363 364l1-6 2-7 M652 494l-6-3-5-4 M441 232l-7-3-6-4 M340 351l0-6-2-7 M805 622l-3-10-2-11 M425 255l-8-2-8-1 M578 359l-4-5-4-6 M267 583l-3-6-4-5 M400 194l4-10 1-12 M314 219l-6-2-4-5 M348 247l-6-5-7-3 M651 345l-3-4-3-4 M327 432l1-7-1-7 M393 271l9-2 10 0 M185 561l-3-6-1-6 M173 575l-1-8 0-9 M667 206l3-7 0-8 M328 303l2-8 0-8 M491 552l8-6 8-7 M497 396l10-4 11-4 M501 426l3-5 4-5 M351 564l5-1 5 0 M700 538l-4-4-4-3 M718 626l4-4 4-3 M635 546l6-1 5-3 M805 307l0-11-2-12 M462 358l-4-8-7-6 M491 453l0-9-1-9 M604 585l2-11-2-11 M277 632l6 1 7-1 M360 571l2-7 0-6 M414 567l3-8 2-8 M291 417l5-8 6-8 M717 460l4-8 3-8 M340 355l7-5 6-5 M338 625l4-6 3-5 M684 489l8-4 9-3 M220 609l11-3 11-4 M252 457l-4-3-4-4 M606 537l6-3 5-5 M710 472l-10-6-11-4 M453 577l-3-4-1-5 M734 243l-10-6-8-8 M724 642l-4-8-6-7 M284 529l-7-7-8-6 M447 371l-10-3-10 1 M699 355l11-2 11-6 M662 480l-4-8-3-8 M375 453l4-6 6-5 M786 597l6 0 5 0 M656 538l-6-2-5-3 M608 399l-9-5-7-9 M705 549l2-7 3-8 M553 577l-5-9-6-10 M209 566l-3-7-1-7 M219 595l1-5 3-6 M725 332l6-9 8-7 M483 450l8-3 7-6 M385 648l-8-8-11-5 M436 503l-2-5-2-5 M264 245l-5-6-4-8 M189 453l10-4 10-3 M802 542l-2-6-2-6 M697 301l4-8 6-6 M373 393l6-6 5-6 M738 255l2-6 2-6 M394 448l-6-1-7 2 M655 243l0-8-2-8 M233 447l3-8 0-9 M633 613l-7-4-8-2 M384 374l1-9 2-9 M492 445l7-8 7-8 M597 318l-7-5-7-2 M288 417l1-8 0-8 M530 603l3-11 0-11 M663 306l4-11 4-11 M549 404l-2-12-4-11 M220 641l7-7 9-3 M291 520l1-6 0-5 M301 280l-4-11-2-11 M636 256l6-8 7-6 M383 426l0-5-1-6 M695 459l0-10 0-10 M331 330l5-4 3-4 M666 459l5-11 7-10 M700 608l8-3 7-2 M709 248l6-8 5-8 M639 379l0-7-3-6 M492 242l3-10 6-8 M558 527l-7-3-7-4 M271 278l4-9 1-10 M360 565l-4-7-2-8 M619 323l-6-4-5-4 M301 397l4-5 5-5 M792 429l4-5 6-2 M271 603l3-5 4-5 M667 539l3-5 3-5 M553 458l4-10 4-10 M464 303l0-5 0-6 M550 600l6-9 3-9 M371 198l-4-7-4-6 M393 418l0-8-1-9 M800 559l-8-8-10-5 M609 382l2-9 3-9 M236 602l-1-7-2-7 M210 521l7-5 8-5 M806 383l4-8 5-7 M563 389l-2-11-5-10 M628 474l0-9 2-8 M595 477l-5-1-6-2 M634 547l-7-7-9-5 M753 343l-2-6 0-5 M760 578l4-4 5-3 M435 611l3-6 5-4 M422 602l1-7 2-7 M753 417l7-5 6-4 M732 538l5-4 2-6 M811 373l-5-7-5-6 M230 585l-3-10-4-8 M680 546l-5-6-6-6 M448 314l2-10-1-10 M370 256l-2-11-1-11 M671 508l-4-8-2-9 M528 399l-9-8-9-8 M672 679l-3-5-5-5 M304 376l-4-9-4-9 M794 604l11-2 10-1 M580 358l-6-5-7-2 M612 615l3-6 4-7 M769 289l-5-8-1-9 M589 480l7-5 7-6 M287 624l-3-8-4-8 M188 354l8-8 9-8 M422 377l4-7 5-5 M736 262l-3-10-2-11 M333 282l6-1 6-2 M296 602l1-9 3-8 M369 369l10-4 11 1 M380 388l10-2 10 0 M314 642l5-5 4-6 M402 310l-3-8-5-8 M262 482l-3-5-4-5 M739 333l10-6 8-8 M531 533l-6-7-8-4 M457 286l-5-3-4-4 M691 657l8-5 8-4 M439 452l-2-10-2-9 M319 522l5-9 6-8 M417 420l-5-8-6-5 M531 427l6-5 6-6 M820 523l-2-5-3-4 M637 424l5-9 3-10 M198 603l-2-7-1-6 M746 227l2-10 0-11 M809 350l-6-8-7-8 M327 317l-8-3-7-2 M457 403l-5-9-6-7 M727 593l-4-10-7-8 M228 449l4-9 6-8 M492 614l-8-6-8-3 M565 498l-2-5-1-6 M224 595l-4-4-3-4 M227 558l-4-6-5-6 M727 302l-2-5-4-3 M525 563l3-7 0-8 M541 475l4-4 4-4 M385 383l8-3 7-5 M614 390l-3-5-1-5 M567 342l-4-4-3-5 M260 341l5-4 4-4 M410 642l5 0 5 1 M365 421l-11-5-9-6 M804 471l1-9-2-9 M372 288l10-2 9-5 M356 469l4-7 3-8 M290 248l-9-5-9-4 M362 267l-4-5-3-6 M801 293l0-9-3-7 M779 547l-1-6-4-5 M558 401l-6-6-5-7 M409 308l-5-8-7-8 M634 295l-3-7-5-6 M763 583l3-4 2-5 M254 428l-1-9-5-9 M398 289l5-3 5-3 M297 291l-12-1-11 1 M627 439l8-8 6-10 M350 687l-1-10-2-10 M792 588l-9-6-9-4 M424 551l-1-6-3-5 M662 569l-1-8 2-7 M404 538l11-5 11-4 M275 554l-4-4-2-5 M520 540l2-5 4-5 M238 430l7-6 8-5 M341 584l8-5 9-5 M712 181l-3-4-5-2 M404 227l7-1 6-1 M510 588l-7-7-5-9 M511 317l5-7 5-6 M368 389l-2-6-2-5 M456 360l-7-5-8-3 M478 377l-5-4-5-5 M761 356l5-6 6-6 M768 402l6-4 5-5 M691 556l10-5 11-4 M369 657l2-5 2-5 M767 527l-3-7-3-6 M813 610l0-8-1-7 M416 566l5-2 6-2 M403 412l5-10 1-10 M300 352l-6-6-6-5 M459 288l-9-6-10-7 M606 364l4-6 6-5 M253 581l3-5 3-4 M372 508l5-4 4-6 M464 440l5-2 6-3 M680 500l-4-5-4-4 M347 253l11-4 11-4 M675 377l2-9 0-9 M464 202l-1-7 0-8 M281 498l1-9-3-10 M365 366l3-8 4-7 M389 400l2-12 1-12 M521 384l6 0 6-1 M255 585l-6-8-7-5 M762 570l-7-10-7-9 M437 534l-10-6-10-4 M642 293l-1-10 0-11 M371 483l5-5 4-5 M335 534l-9-5-10-5 M727 366l0-11 0-12 M351 498l-7-6-7-6 M390 424l-3-9-4-8 M625 416l-9-5-10-1 M394 340l-2-9-1-10 M187 433l-3-9-1-10 M734 501l0-12-1-11 M589 471l-4-4-3-3 M280 562l2-6 2-5 M783 291l-1-6-1-5 M809 549l1-8 0-7 M482 531l-8-2-8-2 M723 464l-8-5-7-7 M355 305l-5-8-3-8 M253 426l-2-9-4-8 M676 432l1-10-2-11 M631 564l-7-4-6-4 M335 243l-5-6-3-7 M538 549l-6-8-6-8 M665 656l0-8 0-8 M792 589l0-7 3-7 M350 293l4-7 1-8 M346 328l-2-7-2-7 M688 361l8-6 8-6 M816 387l-10-3-7-6 M371 498l-4-6-4-6 M519 432l8-6 9-4 M299 256l-5-3-4-5 M420 366l-6-2-5-3 M435 435l-6-5-6-5 M743 490l4-4 5-3 M522 334l2-4-1-5 M725 382l8-7 9-6 M312 202l-5-2-4-3 M558 278l-4-11-2-12 M736 261l5-8 6-8 M744 523l6-2 7-1 M394 502l8 0 8-1 M398 476l-8-3-8-2 M617 344l-1-7-3-5 M339 448l-1-8 0-8 M619 265l-4-6-6-6 M388 275l5-7 7-5 M836 573l4-5 5-4 M665 526l3-5 2-6 M798 624l6-9 7-8 M791 400l1-7 4-7 M662 387l-6-8-8-8 M363 510l11 0 12 0 M383 597l8-6 9-6 M602 410l5-3 5-1 M457 606l-5-2-6-3 M661 376l2-10 2-11 M756 581l2-10 5-10 M742 319l-5-6-3-7 M576 467l5-4 3-5 M718 631l-1-10-3-11 M215 506l3-5 2-6 M342 666l-1-7-3-7 M278 606l6 0 6 1 M412 301l7-6 7-8 M272 552l-3-6-3-6 M710 376l4-7 4-7 M749 217l-5-4-4-2 M381 682l-1-12 2-11 M602 455l-3-8 1-10 M222 550l-2-8-2-8 M323 228l-4-3-5-3 M359 577l-11-2-11-4 M350 314l1-7 3-7 M336 652l1-10 2-11 M387 436l9-4 11-3 M684 413l-2-7-3-6 M507 438l11-2 12 1 M205 493l-6-2-6-3 M525 492l2-5 2-4 M503 554l4-9 5-8 M684 531l1-11 5-9 M385 496l-5-3-6-3 M782 623l0-11-3-11 M566 492l1-11-2-10 M656 382l7-5 5-8 M290 508l5-2 6-2 M430 452l-6-4-5-4 M692 281l5-8 3-10 M682 509l5-4 5-4 M366 612l-7-7-7-5 M398 435l-2-10-3-10 M771 452l7-5 7-4 M724 613l1-11 3-11 M405 396l8-3 8-3 M705 634l-1-6 0-5 M486 258l-2-11-2-11 M348 483l4-9 1-10 M694 203l1-12 3-11 M554 447l8-7 6-9 M787 239l3-5 3-6 M250 258l1-8 3-8 M786 368l9-4 9-4 M511 447l3-6 4-5 M710 472l-4-3-3-4 M213 308l5-4 4-5 M708 341l-4-4-5-3 M334 666l6-5 5-8 M228 447l-6-8-2-10 M756 384l-6-6-3-8 M594 444l-1-7-4-6 M520 464l-2-12-6-10 M693 406l-4-6-3-7 M831 590l-3-9 1-10 M466 288l-5-4-3-5 M369 345l-9-3-8-4 M341 369l-4-4-4-5 M276 323l3-7 5-6 M370 614l-3-6-5-5 M242 330l8-6 9-2 M765 433l5-4 7-2 M643 350l2-10 5-9 M802 456l3-4 4-4 M445 363l-1-8-1-7 M644 238l-9-7-6-9 M454 306l3-3 5-3 M300 464l7-7 7-6 M447 248l7-7 4-10 M759 365l6-2 6-3 M653 320l4-4 2-5 M305 557l5-6 5-5 M604 562l-4-4-3-5 M844 598l1-5 2-5 M741 412l0-6 2-6 M438 576l-8-6-8-8 M572 324l-4-5-2-5 M396 436l1-5 0-5 M597 616l3-7-1-8 M629 484l3-11 1-12 M623 612l0-6 0-5 M496 429l-6-7-6-6 M385 455l-5-11-3-11 M616 375l-8-6-5-7 M650 460l-4-4-3-5 M365 297l1-5 0-5 M309 421l-5-2-6 0 M384 411l-7-5-8-2 M786 648l3-5 2-5 M196 605l-1-6-1-6 M341 287l3-9 4-9 M677 391l-3-5-4-5 M697 514l-4-4-3-4 M477 270l-5-5-6-3 M698 648l10-6 12-1 M722 308l0-5 1-5 M795 343l-10-6-11-3 M695 324l9-3 10 0 M798 616l3-4 4-4 M722 427l9-6 10-5 M628 297l7-8 5-10 M311 616l-9-4-9-2 M832 583l7-7 7-6 M383 382l1-7 0-7 M709 505l2-7 3-6 M470 333l3-6 1-7 M380 207l-10-4-10-1 M326 584l-4-9-6-7 M570 526l-1-11 2-10 M423 249l-2-7-4-6 M692 489l8-4 9-4 M757 622l-3-9 0-8 M450 397l-1-7 2-7 M279 310l-3-5-5-4 M575 578l4-4 3-4 M608 546l5-1 5 0 M346 462l1-9-2-9 M745 373l8-8 9-7 M360 603l-4-8-5-7 M792 398l7-2 7-2 M819 601l-3-10-4-9 M617 377l-7-7-4-8 M369 346l-5-9-5-10 M373 470l-2-5-2-5 M331 602l-4-10-6-7 M336 398l3-10 0-10 M596 224l-5-4-5-6 M841 591l-6-8-6-8 M762 233l9-8 8-8 M537 230l6-5 7-4 M712 256l-1-5-2-5 M481 421l1-10 3-10 M418 336l-3-11-8-8 M401 425l-7-8-8-7 M260 243l3-11 6-10 M524 457l-6-8-6-8 M267 316l8-7 7-8 M373 530l5-9 9-7 M400 451l-6-6-6-4 M741 365l4-11 7-9 M217 570l7-6 6-7 M659 259l-7-6-8-5 M636 475l3-9 6-7 M617 516l-1-5 0-5 M561 309l-10-2-10-1 M201 492l6-7 7-6 M701 567l-6-3-4-4 M493 540l-6-7-8-5 M519 583l8-8 7-10 M386 391l5-6 5-6 M206 590l4-10 7-8 M686 425l6-6 7-5 M806 592l-2-5-3-4 M334 371l6-2 5-2 M441 348l3-10 6-10 M236 547l4-4 4-5 M613 569l-1-9-1-10 M747 579l8-8 8-9 M568 293l5-9 4-9 M829 599l-10-1-10-2 M682 424l-3-7-3-9 M260 280l-5-6-5-6 M358 438l-3-7-1-9 M552 630l2-5 1-6 M479 414l-5-10-4-11 M430 416l9-2 8-3 M722 223l0-6 1-6 M368 535l-3-10 1-9 M373 360l-6-4-5-5 M393 390l0-7 1-8 M639 409l6-5 7-6 M424 437l6-4 5-3 M614 561l2-11 4-10 M734 541l-8-5-8-3 M482 297l5-8 4-8 M700 532l6-5 6-7 M400 222l-7-1-6-1 M269 366l-4-5-2-6 M817 357l-5-3-4-4 M459 353l-1-9-3-9 M495 290l2-10-1-10 M305 606l12-1 11-4 M328 608l4-6 1-7 M453 608l5-3 5-3 M602 475l0-7 1-8 M405 339l0-12-2-11 M693 479l9-7 11-4 M794 527l-5-6-4-8 M756 555l6-4 7-2 M266 249l0-9 0-9 M449 375l-1-12-3-11 M604 475l11-1 10-2 M388 427l-9 0-8 3 M304 293l-1-12-4-10 M789 494l-3-7-3-7 M358 364l-4-9-7-8 M385 509l0-7-1-7 M678 340l-8-8-10-4 M361 547l4-11 1-12 M671 308l-5-11-8-9 M264 367l-7-6-9-3 M499 451l-10-7-6-10 M424 382l-1-6-1-6 M793 501l2-10 0-10 M549 390l3-8 6-6 M262 469l7-1 8 1 M284 331l-3-5-3-5 M724 466l-4-4-2-5 M675 445l8-4 7-2 M218 528l-3-8-2-7 M475 460l-1-11-3-11 M753 563l5-2 6-1 M365 358l-5-3-5-5 M775 478l6-5 6-4 M533 304l0-10 0-10 M587 447l0-9 4-9 M656 210l1-6 0-5 M507 229l-3-5-3-4 M593 518l-2-8-1-8 M188 614l5-6 5-7 M218 568l3-5 2-5 M416 415l-9-6-11-5 M296 530l5-2 6-2 M640 368l-7-2-6 1 M496 330l-1-8-1-9 M687 440l-2-6-2-5 M708 300l-8-9-7-8 M727 303l-2-8 1-8 M375 243l1-10 1-10 M231 592l-6-6-4-7 M713 426l0-6-1-5 M678 250l-5-4-5-3 M520 619l0-7-1-7 M749 266l-6-5-5-8 M695 468l4-4 5-3 M804 470l-7-5-5-6 M369 256l-5-9-7-8 M627 432l3-5 3-5 M532 554l0-9 2-8 M433 461l0-11-3-10 M293 337l2-7 1-8 M730 467l2-6 2-5 M373 269l-6-8-7-7 M284 571l-2-10-3-9 M625 251l5-2 4-4 M761 352l-7-5-4-7 M475 374l4-3 4-3 M781 309l-6-2-4-3 M440 402l3-4 3-4 M364 222l4-7 4-6 M756 463l8-9 4-11 M691 387l-10-3-10-6 M590 431l-4-6-2-6 M802 538l-7-6-8-5 M332 614l-8-2-7-4 M616 451l-10-5-12-2 M735 594l0-7-1-6 M369 692l-4-4-4-3 M282 296l-4-7-2-7 M468 331l3-5 3-6 M235 395l8-3 8-1 M815 362l8-4 8-2 M656 561l5-7 6-6 M300 533l-10-5-11-1 M203 597l0-10 0-9 M193 403l-1-9 0-9 M325 571l9-5 10-2 M713 503l0-6-1-7 M754 200l7-7 6-9 M433 283l6-7 3-8 M227 312l6-9 7-8 M266 547l-3-4-5-4 M407 378l-7-1-7-3 M672 284l-2-7-3-7 M329 494l3-11-1-11 M245 319l-6-6-4-8 M411 466l4-4 3-4 M516 442l0-6 0-5 M227 341l-6-8-7-7 M216 564l-3-8-2-9 M655 478l-7-8-6-8 M414 596l1-7 4-5 M460 492l-3-5-1-5 M596 464l-1-6-3-6 M348 246l2-10 2-10 M736 534l9-1 9 1 M481 456l-2-10-2-10 M364 428l1-6 1-7 M526 300l10-2 9-3 M323 296l-6-3-6-4 M671 221l-4-3-4-4 M706 621l2-5 4-5 M801 560l5-5 4-6 M569 440l-5-8-5-8 M821 590l0-5 2-5 M499 366l1-6 0-5 M483 430l-7-2-6-4 M745 385l6-5 8-3 M395 544l5-6 6-6 M813 367l5-4 4-5 M682 239l-6-11-9-7 M793 392l0-5 0-5 M182 560l-1-7 1-6 M458 289l8-1 8-3 M237 618l8-6 8-6 M386 399l3-6 0-6 M399 511l-5-5-2-6 M726 526l-3-11-7-9 M643 517l-8-2-8-2 M710 637l2-9 1-8 M713 589l-4-6-6-4 M846 558l-9-7-8-8" stroke="#3E332D" stroke-opacity="0.7" stroke-width="0.6" fill="none"/><path d="M459 622l4-5 4-5 M459 622l-2-6-2-6 M454 622l-5-5-5-6 M454 622l-2-6-1-6 M476 625l4-5 5-5 M476 625l0-6 0-6 M466 625l5-5 4-4 M466 625l-2-6-3-6 M471 581l0-6-1-7 M471 581l-5-3-5-2 M477 579l2-6 2-6 M477 579l-1-7-2-7 M515 611l6 3 6 3 M515 611l5 1 5 2 M519 611l8-2 7-3 M519 611l6 0 7 1 M377 592l-1-6-1-7 M377 592l-5-3-6-3 M367 607l-5-4-5-3 M367 607l-8 0-8 1 M375 594l-3-4-4-5 M375 594l-5-3-5-4 M376 588l-5-6-6-5 M376 588l-7-1-7-1 M517 502l8-8 7-9 M517 502l6-7 7-7 M515 501l7-7 8-6 M515 501l5-9 3-9 M511 485l8-8 9-7 M511 485l5-9 6-8 M504 487l2-10 1-11 M504 487l9-7 8-6 M533 527l11-3 11-2 M533 527l9-2 9-3 M528 527l4-9 4-9 M528 527l8-2 8-3 M477 492l-1-9-1-10 M477 492l-7-6-6-7 M500 497l7-4 6-5 M500 497l1-9 1-9 M352 454l-4-7-3-8 M352 454l-1-8-2-8 M352 452l-1-8-1-9 M352 452l1-8 2-7 M371 436l-2-9-1-8 M371 436l-4-7-2-8 M354 455l-7-3-7-4 M354 455l-4-7-5-6 M436 415l-1-9 0-9 M436 415l-2-8-3-7 M441 417l3-7 2-7 M441 417l0-7 0-6 M448 404l6-9 5-9 M448 404l7-8 6-10 M434 402l-7-8-6-9 M434 402l-1-11-3-11 M367 355l1-10-1-11 M367 355l-5-8-6-7 M368 349l1-12 1-12 M368 349l-3-13-3-13 M347 377l-5-8-7-7 M347 377l1-10 2-10 M360 373l-6-5-6-5 M360 373l-3-8-5-7 M499 361l4-8 4-9 M499 361l11-1 10-3 M495 361l2-10 3-10 M495 361l2-9 3-9 M468 345l-5-8-5-8 M468 345l1-10 3-10 M478 347l-1-8-3-9 M478 347l7-8 4-9 M375 348l-3-5-4-5 M375 348l2-5 3-5 M362 355l-4-6-3-6 M362 355l-5-2-6-1 M383 340l-4-7-5-5 M383 340l-4-6-5-5 M388 340l-2-7-3-6 M388 340l1-7 2-6 M455 310l6-7 6-6 M455 310l2-9 4-8 M463 310l0-9 1-8 M463 310l4-8 3-9 M482 333l2-9 3-8 M482 333l5-5 5-6 M471 327l6-4 5-6 M471 327l6-5 6-4 M372 344l-7-2-6-3 M372 344l-3-6-4-4 M380 340l-2-4-2-5 M380 340l-6-3-5-5 M364 337l-3-8-2-9 M364 337l0-8 1-7 M368 336l0-9 0-9 M368 336l-3-7-2-8 M454 295l-2-8-1-9 M454 295l-7-7-7-7 M445 296l3-9 3-9 M445 296l3-10 5-9 M479 297l5-9 7-9 M479 297l1-11 3-10 M487 301l-2-10-3-10 M487 301l6-8 5-10 M471 339l6-1 5-3 M471 339l2-7 3-7 M463 331l-1-8-2-7 M463 331l-4-7-3-6 M454 324l7-4 6-4 M454 324l6-5 6-4 M456 324l5-6 5-6 M456 324l7-2 7-2 M611 546l3-6 3-7 M611 546l-3-7-5-7 M619 547l1-6 1-7 M619 547l0-7 1-6 M569 554l-5-4-5-4 M569 554l-5-6-4-6 M578 548l-4-7-6-5 M578 548l-3-7-2-7 M681 595l5-3 4-4 M681 595l2-6 3-5 M681 608l5-1 4-2 M681 608l5-1 5-1 M653 566l0-8 0-8 M653 566l5-8 5-6 M667 574l5-4 5-2 M667 574l1-7 1-7 M598 458l-6-7-5-7 M598 458l4-8 4-8 M582 466l-7-3-7-4 M582 466l-7-5-6-7 M616 461l5-7 5-7 M616 461l1-7-2-7 M605 465l-2-6-2-6 M605 465l0-7-1-7 M615 467l0-8-2-7 M615 467l1-7 1-7 M616 465l-1-6 0-7 M616 465l-2-7 0-8 M618 465l3-8 2-8 M618 465l4-6 5-5 M595 470l-5-4-5-5 M595 470l-5-5-6-4 M600 395l1-8 2-7 M600 395l-2-7-2-7 M595 401l-6-3-5-3 M595 401l-4-3-4-4 M612 388l-2-7-2-7 M612 388l-5-4-5-5 M636 387l0-7 1-8 M636 387l5-6 6-6 M600 396l-2-5-3-5 M600 396l-5-4-5-5 M603 392l2-6 3-5 M603 392l4-7 3-7 M586 407l-3-6-2-6 M586 407l-1-7-1-7 M581 414l-3-5-3-6 M581 414l-5-2-6-3 M659 312l0-5 1-6 M659 312l0-6 2-7 M651 307l-1-8 0-8 M651 307l-2-8-3-7 M640 301l1-9 0-8 M640 301l-1-8-2-8 M648 305l-1-7 1-8 M648 305l0-6 2-6 M558 321l-5-7-4-9 M558 321l-9-1-8-3 M568 307l-2-9 M568 307l2-8 3-7 M562 304l-8-8-9-7 M562 304l-9-4-9-5 M583 297l3-9 3-9 M583 297l-4-9-2-10 M639 240l-1-7-1-7 M639 240l-7-2-7-3 M643 241l-6-2-6 0 M643 241l-4-5-3-5 M658 235l1-6 0-7 M658 235l-2-6-2-6 M655 235l-2-7-3-6 M655 235l-2-6-1-7 M613 212l2-10 2-9 M667 208l-1-9-2-9 M667 208l-5-5-6-5 M672 204l3-10 M672 204l1-11 1-10 M745 242l11-3 9-4 M745 242l7-9 7-8 M740 232l7-2 8-1 M740 232l7-5 8-4 M640 208l-1-7-2-8 M650 205l-5-5-3-5 M650 205l0-8-2-7 M697 218l6-3 7-1 M697 218l4-7 4-7 M692 211l6-4 6-5 M692 211l7-4 6-5 M687 221l0-7 1-7 M687 221l-4-7-5-6 M679 226l2-7 2-6 M679 226l-5-5-3-5 M722 236l8-5 7-5 M722 236l4-7 4-8 M702 219l-3-8-2-8 M702 219l2-9 2-10 M671 584l-6-7-6-6 M671 584l0-7-1-8 M672 584l4-9 5-8 M672 584l-3-9-3-8 M666 587l-4-6-4-5 M666 587l-1-8 0-8 M676 589l3-7 3-8 M676 589l0-9-1-8 M658 496l7-6 7-7 M658 496l2-8 0-8 M646 492l0-10 0-10 M646 492l6-8 6-8 M668 508l4-9 1-9 M668 508l5-7 3-8 M664 510l-3-8-3-8 M664 510l6-3 6-3 M656 536l3-5 3-5 M656 536l1-6 2-6 M661 539l3-5 5-5 M661 539l2-6 2-6 M666 535l1-6 1-6 M666 535l-1-6 0-7 M655 532l5-4 5-3 M655 532l-2-6-3-6 M614 469l-8-2-8-2 M614 469l-4-7-3-6 M614 472l-6-5-7-3 M614 472l-7 0-7 0 M614 460l-7-5-7-5 M614 460l-7-4-8-5 M636 449l2-9 2-9 M636 449l2-10 1-9 M747 526l5-4 5-4 M747 526l4-4 4-5 M738 517l0-6 2-6 M738 517l-1-6-1-5 M736 512l5-1 5 0 M736 512l6-2 5-2 M735 505l2-7 2-6 M735 505l-1-7 0-7 M368 661l-6-3-6-4 M368 661l-8-1-8-1 M373 644l1-8-1-7 M373 644l-3-8-5-7 M408 617l0-8 0-8 M408 617l4-7 3-7 M393 624l-2-7-1-7 M393 624l-5-7-4-8 M420 613l8-4 7-6 M420 613l1-9-1-10 M409 615l1-8 0-9 M409 615l6-5 6-4 M432 619l8-2 8-1 M432 619l2-8 3-8 M425 617l6-6 6-7 M425 617l2-8 2-8 M311 631l-9-3-8-2 M311 631l-6-9-5-8 M309 633l-10-2-11-3 M309 633l-9-5-9-7 M354 570l-7-6-6-8 M354 570l3-10 0-10 M374 569l-4-8-5-7 M374 569l-5-8-6-7 M415 548l-6-7-6-8 M415 548l-4-8-3-8 M419 546l-2-9-2-8 M419 546l-6-7-7-7 M405 545l3-9 3-10 M405 545l6-8 3-8 M376 557l-7-6-7-6 M376 557l-11-3-11-2" stroke="#42362F" stroke-opacity="0.65" stroke-width="0.75" fill="none"/><path d="M467 612l3-3 2-4 M472 605l3-1 2-2 M472 605l1-3 1-3 M467 612l1-4 2-5 M470 603l-1-3-2-2 M470 603l1-2 2-3 M455 610l2-4 1-5 M458 601l1-3 2-3 M458 601l0-3 2-4 M455 610l2-3 1-4 M458 603l-1-2-1-3 M458 603l2-2 1-2 M444 611l-1-5 1-5 M444 601l3-3 3-3 M444 601l2-4 1-4 M444 611l-1-5-1-4 M442 602l-1-4-1-4 M442 602l1-3 2-4 M451 610l-2-5-1-4 M448 601l1-4 0-4 M448 601l0-4 1-3 M451 610l0-4 1-5 M452 601l2-2 2-3 M452 601l2-2 3-3 M485 615l4-2 4-1 M493 612l3 0 3-1 M493 612l2-3 1-4 M485 615l3-4 3-3 M491 608l3-1 3 0 M491 608l2-3 1-3 M476 613l0-5 1-5 M477 603l2-3 1-3 M477 603l2-3 1-3 M476 613l3-4 2-3 M481 606l2-3 1-2 M481 606l2-2 3-3 M475 616l4-2 4 0 M483 614l3-1 3 0 M483 614l3-1 3-1 M475 616l2-4 2-5 M479 607l1-3 2-4 M479 607l-1-3-1-3 M461 613l1-5 0-5 M462 603l2-2 1-3 M462 603l2-2 2-2 M461 613l-4-2-4-1 M453 610l-2-2-2-3 M453 610l-3-1-2-1 M470 568l4-3 3-2 M477 563l2-3 1-2 M477 563l3-2 3-1 M470 568l0-4-1-4 M469 560l0-3-1-2 M469 560l-1-2-1-3 M461 576l-2-3-2-4 M457 569l-1-2 0-3 M457 569l-2-2-1-2 M461 576l-2-3-2-4 M457 569l-3-1-2 0 M457 569l-1-3 0-3 M481 567l0-4-1-4 M480 559l-1-3-1-3 M480 559l1-3 0-3 M481 567l2-3 2-4 M485 560l0-3 0-3 M485 560l2-2 2-2 M474 565l-2-4-2-4 M470 557l-2-3-1-3 M470 557l-2-3-1-2 M474 565l-1-4-1-5 M472 556l0-3 2-4 M472 556l0-3 0-4 M527 617l4 0 5 2 M536 619l3-1 4-2 M527 617l4-2 5-3 M536 612l2-3 3-2 M536 612l2-4 3-3 M525 614l4-2 4-1 M533 611l1-2 1-3 M533 611l2-1 3-1 M525 614l3-2 3-2 M531 610l1-3 0-2 M531 610l2-3 1-2 M534 606l6-3 6-2 M546 601l1-4 1-5 M546 601l4-1 4-1 M534 606l7-1 6 0 M547 605l5-1 4-1 M547 605l5-1 5-1 M532 612l4 0 5-1 M541 611l2-1 3-1 M541 611l3 2 3 1 M532 612l5-2 5-3 M542 607l3-1 3-3 M542 607l1-3 1-3 M375 579l-2-4-2-4 M371 571l-2-3-2-3 M371 571l-2-4 0-3 M375 579l-2-5-2-4 M371 570l-2-4-3-3 M371 570l-4-3-3-1 M366 586l-4-2-3-1 M359 583l-3 0-2-1 M359 583l-1-3-1-3 M366 586l-3-2-4-3 M359 581l-1-2-1-3 M359 581l-1-2 0-3 M357 600l-1-4-1-4 M355 592l1-3 0-3 M355 592l-1-3-2-3 M357 600l-5-1-4-1 M348 598l-4-1-2-1 M348 598l-3-1-3-1 M351 608l-4-3-5-4 M342 601l-4-2-4-3 M342 601l-2-5-1-4 M351 608l-6 1-6 0 M339 609l-3-2-4-1 M339 609l-4-2-4-1 M368 585l-4-1-3-2 M361 582l-3-2-2-2 M361 582l0-4-1-3 M368 585l-2-4-2-4 M364 577l0-3-1-4 M364 577l-2-2-1-3 M365 587l-2-4-2-5 M361 578l-2-3-1-4 M361 578l-2-2-2-3 M365 587l-3-4-2-5 M360 578l-2-3-2-3 M360 578l-2-3-2-4 M365 577l-2-5-3-5 M360 567l-1-4-2-4 M360 567l-1-3-2-3 M365 577l-1-5-2-6 M362 566l-2-3-2-3 M362 566l-1-3-2-4 M362 586l-4 0-5 1 M353 587l-3 1-2 2 M353 587l-3 0-3 0 M362 586l-4 1-5-1 M353 586l-2-2-1-3 M353 586l-3-1-3-2 M532 485l2-7 0-8 M534 470l-1-6-3-5 M534 470l-1-6-3-5 M532 485l0-8 2-9 M534 468l0-6-2-5 M534 468l0-7-1-6 M530 488l1-7 2-6 M533 475l1-6 0-5 M533 475l-2-4-1-5 M530 488l5-4 4-5 M539 479l1-3 1-4 M539 479l4-2 4-1 M530 488l4-6 4-6 M538 476l5-2 4-1 M538 476l2-5 3-5 M530 488l5-3 6-2 M541 483l3-4 2-4 M541 483l3-3 3-3 M523 483l0-8-1-8 M522 467l2-5 3-4 M522 467l-2-6-1-6 M523 483l2-7 3-6 M528 470l2-4 1-5 M528 470l4-4 3-4 M528 470l9-3 8-4 M545 463l6-3 6-3 M545 463l3-5 4-5 M528 470l6-8 4-8 M538 454l4-4 5-4 M538 454l0-6-1-6 M522 468l7-5 7-5 M536 458l4-4 3-5 M536 458l3-5 2-5 M522 468l7-5 6-5 M535 458l2-4 2-5 M535 458l3-4 4-4 M507 466l-4-6-4-5 M499 455l0-5-1-6 M499 455l-3-4-4-3 M507 466l0-9 0-8 M507 449l2-5 2-6 M507 449l-2-6-3-5 M521 474l7-5 6-5 M534 464l5-4 5-3 M534 464l5-1 5-1 M521 474l7-6 5-7 M533 461l0-6-1-7 M533 461l1-5 2-6 M555 522l8-2 8-2 M571 518l4-5 3-4 M571 518l4-6 3-5 M555 522l8 2 8 2 M571 526l6-1 5-3 M571 526l5-5 3-5 M551 522l4-5 5-5 M560 512l2-3 3-4 M560 512l2-4 2-4 M551 522l5-4 5-4 M561 514l5-1 4-1 M561 514l2-3 3-4 M536 509l-1-7 0-6 M535 496l1-5 0-4 M535 496l-1-6-1-5 M536 509l4-5 4-4 M544 500l3-2 3-3 M544 500l1-4 0-5 M544 522l6 0 5 2 M555 524l4-2 3-2 M555 524l4 0 3 0 M544 522l5-3 5-3 M554 516l3-3 2-3 M554 516l3-3 3-4 M475 473l2-7 3-7 M480 459l0-5 0-5 M480 459l0-5 0-5 M475 473l0-7 2-7 M477 459l-3-4-3-4 M477 459l3-5 2-5 M464 479l-7-3-7-2 M450 474l-2-5-3-5 M450 474l-4-1-5 0 M464 479l-2-6-2-6 M460 467l-3-5-2-5 M460 467l-4-3-2-4 M513 488l6-3 5-4 M524 481l1-4 3-5 M524 481l3-3 4-2 M513 488l2-6 1-6 M516 476l-1-5-2-5 M516 476l1-5 1-4 M502 479l-1-6-1-6 M500 467l-2-4-1-4 M500 467l-3-4-3-2 M502 479l2-5 4-5 M508 469l2-3 3-3 M508 469l2-4 3-4 M345 439l-4-3-4-4 M337 432l-2-4-1-4 M337 432l-4-2-3-2 M345 439l1-6 2-5 M348 428l1-4 1-3 M348 428l3-3 3-2 M349 438l-3-4-4-4 M342 430l-3-2-2-3 M342 430l-4-1-3-1 M349 438l2-5 3-4 M354 429l2-3 2-2 M354 429l0-4-1-3 M350 435l-4-4-4-5 M342 426l-4-1-4-1 M342 426l1-4 1-4 M350 435l-1-5-1-6 M348 424l-1-4-1-5 M348 424l-1-4-2-3 M355 437l2-4 2-5 M359 428l2-3 1-2 M359 428l2-3 2-3 M355 437l2-5 3-4 M360 428l2-2 3-2 M360 428l0-4 0-3 M368 419l1-6 0-6 M369 407l1-5 0-4 M369 407l0-5 0-4 M368 419l2-6 3-7 M373 406l3-3 2-3 M373 406l-2-4-1-5 M365 421l1-4 2-5 M368 412l-1-4 0-3 M368 412l-1-3 0-4 M365 421l1-5 0-5 M366 411l0-4 0-3 M366 411l2-2 1-3 M340 448l-5-4-5-3 M330 441l-3-3-3-3 M330 441l-3-4-2-4 M340 448l-4-5-4-4 M332 439l-4 0-4-1 M332 439l-3-3-3-4 M345 442l-3-4-5-4 M337 434l-3-1-4-1 M337 434l-1-3-2-3 M345 442l-1-5 0-6 M344 431l1-4 0-3 M344 431l2-4 2-3 M435 397l-1-5-2-6 M432 386l1-4 1-4 M432 386l1-4 1-3 M435 397l-2-6 0-7 M433 384l0-6 1-5 M433 384l-2-5-2-4 M431 400l0-5-1-5 M430 390l1-4 0-3 M430 390l0-4-1-3 M431 400l0-6 0-5 M431 389l-2-4-1-4 M431 389l2-3 3-3 M446 403l0-5 0-4 M446 394l-1-3-1-4 M446 394l2-3 2-2 M446 403l2-5 1-5 M449 393l0-4-1-3 M449 393l2-3 0-4 M441 404l0-4 0-5 M441 395l-1-2-1-3 M441 395l-1-3-1-2 M441 404l1-5 1-5 M443 394l2-3 1-4 M443 394l1-3 2-3 M459 386l2-8 0-9 M461 369l-1-5-1-6 M461 369l1-6 1-6 M459 386l3-7 4-6 M466 373l1-6 1-5 M466 373l3-5 4-4 M461 386l3-7 2-8 M466 371l-1-6-2-6 M466 371l4-5 5-4 M461 386l7-2 7-5 M475 379l5-1 5-3 M475 379l4-4 4-4 M421 385l-4-6-3-6 M414 373l-2-6-1-5 M414 373l0-6 2-5 M421 385l-5-5-6-5 M410 375l-5-3-6-1 M410 375l-4-5-5-4 M430 380l1-7 0-8 M431 365l0-5 0-5 M431 365l-3-4-3-5 M430 380l-4-7-4-8 M422 365l-5-4-5-3 M422 365l-3-7-4-6 M367 334l6-6 4-6 M377 322l5-2 4-2 M377 322l3-4 4-4 M367 334l5-5 4-5 M376 324l2-4 2-5 M376 324l2-6 2-5 M356 340l-5-4-4-5 M347 331l-5-2-4-3 M347 331l-4-2-4-3 M356 340l0-6 0-6 M356 328l0-4-1-4 M356 328l0-4 0-5 M370 325l-2-8 0-7 M368 310l0-6-2-5 M368 310l-2-5-1-4 M370 325l-2-8-1-9 M367 308l2-5 2-5 M367 308l-2-5-3-5 M362 323l0-10 0-9 M362 304l-1-7-2-6 M362 304l-3-6-3-6 M362 323l-1-10 1-10 M362 303l1-7 0-8 M362 303l3-7 4-6 M335 362l0-7-1-7 M334 348l-3-4-3-4 M334 348l-1-5 1-6 M335 362l-3-7-3-6 M329 349l-5-2-4-3 M329 349l-1-6 0-6 M350 357l4-6 5-5 M359 346l3-5 2-5 M359 346l0-5 1-5 M350 357l-3-7-4-6 M343 344l0-6 0-6 M343 344l-1-5-3-5 M348 363l-4-4-4-5 M340 354l-1-4 1-5 M340 354l-4-2-4-2 M348 363l-4-2-4-4 M340 357l-3-3-2-3 M340 357l-1-3-1-3 M352 358l-2-5-3-5 M347 348l-2-5-2-4 M347 348l-1-4 0-5 M352 358l-5-2-4-2 M343 354l-3-3-3-4 M343 354l-3-3-2-4 M507 344l-2-7-3-6 M502 331l-1-5-2-4 M502 331l-4-3-5-1 M507 344l0-6-1-6 M506 332l-3-4-3-3 M506 332l0-5 2-5 M520 357l6-4 6-3 M532 350l3-3 3-4 M532 350l3-3 2-3 M520 357l7-5 7-4 M534 348l4-4 5-3 M534 348l3-4 3-5 M500 341l4-6 4-7 M508 328l-2-5-1-6 M508 328l-1-5-1-5 M500 341l2-6 0-7 M502 328l1-5 1-4 M502 328l1-5 0-5 M500 343l0-6-1-6 M499 331l-2-3-2-4 M499 331l-1-4-1-5 M500 343l2-5 2-6 M504 332l1-4 1-4 M504 332l-2-4-1-3 M458 329l-6-3-5-2 M447 324l-4-4-3-3 M447 324l-5-2-4-2 M458 329l-2-7 0-6 M456 316l-1-5-1-5 M456 316l-2-5-2-4 M472 325l-3-8-3-8 M466 309l2-5 2-6 M466 309l-2-6-3-6 M472 325l1-7 2-7 M475 311l-2-4-3-3 M475 311l-1-4-1-5 M474 330l4-6 4-5 M482 319l0-6 1-5 M482 319l3-4 4-3 M474 330l-4-5-4-5 M466 320l0-4 0-5 M466 320l-4-3-4-2 M489 330l1-8 0-7 M490 315l2-4 1-5 M490 315l3-4 1-5 M489 330l-2-7-2-6 M485 317l2-5 3-5 M485 317l-1-6 0-5 M368 338l0-3 1-4 M369 331l0-3 0-2 M369 331l1-3 0-2 M368 338l0-4 2-5 M370 329l2-2 3-3 M370 329l-1-4-1-3 M380 338l3-2 4-2 M387 334l2-1 2-2 M387 334l2-2 2-2 M380 338l0-4-1-4 M379 330l1-3 0-2 M379 330l-1-3-1-3 M355 343l-4-3-2-5 M349 335l0-3-1-3 M349 335l0-3 0-4 M355 343l-1-5-1-5 M353 333l-2-3-2-3 M353 333l-2-3-2-3 M351 352l-5-2-4-1 M342 349l-3 1-3 1 M342 349l-2-2-3-2 M351 352l-3-2-4-2 M344 348l-3 0-3-1 M344 348l-1-2-1-3 M374 328l-3-5-4-4 M367 319l-3-3-2-3 M367 319l0-4 0-5 M374 328l-1-6-2-5 M371 317l-2-2-2-3 M371 317l0-4 1-4 M374 329l-3-4-3-5 M368 320l-2-3-1-4 M368 320l-2-3-3-3 M374 329l-4-3-4-4 M366 322l-1-4 0-3 M366 322l-2-2-2-3 M383 327l-4-3-4-3 M375 321l-2-3-2-2 M375 321l-3-2-4-1 M383 327l-4-4-4-3 M375 320l-1-3-1-4 M375 320l-3-1-3 0 M391 327l0-4 2-4 M393 319l-2-2-1-2 M393 319l-2-2-1-3 M391 327l1-3 1-4 M393 320l1-3 1-3 M393 320l1-3 1-3 M467 297l5-4 5-5 M477 288l2-4 2-4 M477 288l-1-5 0-5 M467 297l6-3 6-3 M479 291l5 0 5 0 M479 291l6 0 5 0 M461 293l-2-6-1-6 M458 281l-4-4-2-4 M458 281l-3-5-1-4 M461 293l1-7 3-6 M465 280l4-3 4-4 M465 280l2-4 1-4 M464 293l3-6 2-6 M469 281l-2-5-2-5 M469 281l3-4 3-4 M464 293l-3-5-3-5 M458 283l1-5 1-4 M458 283l1-4 0-3 M470 293l5-4 4-5 M479 284l1-5 1-5 M479 284l4-4 4-2 M470 293l6-3 7-3 M483 287l4-2 4-2 M483 287l5-1 5-1 M487 316l2-6 1-6 M490 304l0-4 1-4 M490 304l3-3 2-4 M487 316l2-6 3-6 M492 304l-1-3-1-4 M492 304l2-2 4-3 M492 322l4-2 4-2 M500 318l2-3 2-3 M500 318l2-3 3-3 M492 322l4-2 4-1 M500 319l3-1 3 0 M500 319l3-1 3-1 M482 317l2-5 2-5 M486 307l1-4 0-3 M486 307l-1-3-2-3 M482 317l4-3 4-4 M490 310l3 0 3-2 M490 310l0-3-1-4 M483 318l3-4 4-4 M490 310l4-1 4-2 M490 310l3-3 1-3 M483 318l2-4 4-4 M489 310l3-1 3-2 M489 310l2-3 2-3 M359 339l-5 0-5-1 M349 338l-4-1-3-2 M349 338l-4 1-4 0 M359 339l-2-4-2-4 M355 331l-2-2-3-2 M355 331l0-4 0-3 M365 334l-2-4 0-5 M363 325l-1-2 0-3 M363 325l-2-2-2-2 M365 334l-3-4-3-3 M359 327l-1-3-1-3 M359 327l-1-3-1-3 M376 331l0-4 2-3 M378 324l-1-2-1-2 M378 324l0-3 0-2 M376 331l0-4 1-3 M377 324l-1-2-1-3 M377 324l0-3 0-2 M369 332l0-5 1-5 M370 322l-2-3-1-3 M370 322l-1-3-1-4 M369 332l-3-3-4-3 M362 326l-2-3-1-3 M362 326l0-4 0-3 M359 320l-5-4-5-5 M349 311l-2-3-2-5 M349 311l0-4-1-5 M359 320l-3-5-3-6 M353 309l0-4-1-5 M353 309l-1-4-2-5 M365 322l2-4 3-4 M370 314l2-3 2-3 M370 314l3-2 4-1 M365 322l-2-5 0-5 M363 312l1-3 1-4 M363 312l0-4 1-3 M368 318l1-6 0-6 M369 306l0-4 1-5 M369 306l-2-5-2-4 M368 318l-1-7-1-6 M366 305l2-5 2-4 M366 305l-2-4-2-5 M363 321l1-4 2-5 M366 312l2-2 2-2 M366 312l0-3-1-4 M363 321l3-4 2-4 M368 313l1-4 1-4 M368 313l-1-4 0-3 M451 278l0-6 0-7 M451 265l-1-4 0-4 M451 265l-1-4-2-4 M451 278l-2-6-1-6 M448 266l-1-3 0-4 M448 266l-3-3-4-3 M440 281l-2-7 0-8 M438 266l-2-5-2-5 M438 266l-3-4-2-5 M440 281l-1-6-1-6 M438 269l-2-4-2-4 M438 269l-2-4-2-3 M451 278l-1-6-1-6 M449 266l1-4 1-4 M449 266l0-4-1-4 M451 278l-1-7-1-8 M449 263l0-5-1-5 M449 263l-2-4-1-5 M453 277l5-5 5-4 M463 268l5-3 5-1 M463 268l3-4 2-5 M453 277l6-4 5-4 M464 269l3-4 2-5 M464 269l5-2 4-1 M491 279l5-6 5-7 M501 266l6-2 5-3 M501 266l1-6 2-6 M491 279l3-6 2-7 M496 266l2-5 2-5 M496 266l0-5 2-5 M483 276l1-8 2-8 M486 260l3-4 4-3 M486 260l1-5 2-6 M483 276l-3-8-3-8 M477 260l-1-6 0-6 M477 260l-4-5-3-4 M482 281l1-8 4-7 M487 266l3-6 4-5 M487 266l0-6-1-7 M482 281l0-8-1-7 M481 266l-3-6-3-5 M481 266l-1-5 0-5 M498 283l5-5 5-4 M508 274l4-3 4-3 M508 274l5-3 4-5 M498 283l-2-6-4-6 M492 271l-2-4-3-3 M492 271l2-4 2-5 M482 335l2-4 2-4 M486 327l2-3 3-3 M486 327l3-2 3-1 M482 335l3-4 1-5 M486 326l-1-3-1-3 M486 326l0-3 0-3 M476 325l3-3 2-5 M481 317l1-2 1-3 M481 317l3-2 2-3 M476 325l5-2 5-2 M486 321l2-3 2-2 M486 321l3-1 4-1 M460 316l-2-5-2-4 M456 307l0-4-1-4 M456 307l-1-4-1-3 M460 316l-2-4-2-5 M456 307l-2-3-1-3 M456 307l1-3 1-4 M456 318l-3-5-3-4 M450 309l-3-4-2-3 M450 309l0-4-1-4 M456 318l-5-2-4-2 M447 314l-3-2-3-2 M447 314l-1-4 0-3 M467 316l6-2 5-3 M478 311l4-2 5-1 M478 311l2-3 3-3 M467 316l2-4 2-5 M471 307l2-4 1-3 M471 307l2-3 2-3 M466 315l3-4 2-5 M471 306l2-3 1-4 M471 306l1-4 2-4 M466 315l5-2 6-3 M477 310l2-3 2-2 M477 310l4 0 4-1 M466 312l5-4 5-3 M476 305l2-4 2-3 M476 305l1-5 1-4 M466 312l0-6 0-6 M466 300l-1-4-1-4 M466 300l-1-4-2-4 M470 320l6-1 6-1 M482 318l4 0 4 0 M482 318l5 1 4 2 M470 320l5-1 6 0 M481 319l3-3 4-1 M481 319l3-2 4-1 M490 258l4-10 4-10 M498 238l-1-7 0-7 M497 224l1-5 0-6 M498 238l1-7 M490 258l-1-9 1-9 M490 240l1-6 1-6 M492 228l-3-3-2-3 M492 228l0-4 1-4 M490 240l-4-5-2-7 M484 228l1-4 1-4 M484 228l-1-4 0-4 M475 255l5-7 4-8 M484 240l0-5 0-6 M484 229l-1-3-1-3 M484 229l1-4 2-4 M484 240l2-5 1-7 M487 228l3-3 2-4 M487 228l2-3 2-4 M475 255l-4-7-4-7 M467 241l2-6 0-5 M469 230l1-5 0-4 M469 230l2-4 3-3 M467 241l1-5 1-5 M469 231l3-2 2-3 M469 231l2-3 3-3 M497 281l6-5 6-6 M509 270l2-5 2-5 M513 260l0-4-1-3 M513 260l-2-3-1-4 M509 270l5-2 5-3 M519 265l2-2 3-2 M519 265l2-3 2-3 M497 281l5-7 4-7 M506 267l5-4 5-3 M516 260l4-2 4-1 M516 260l4-1 4 0 M506 267l4-5 3-4 M513 258l4-2 4-3 M513 258l2-3 3-3 M494 274l5-9 3-9 M502 256l5-5 5-4 M512 247l3-5 3-4 M512 247l5-4 5-3 M502 256l2-6 1-6 M505 244l3-4 2-4 M505 244l-2-5-2-4 M494 274l8-6 8-6 M510 262l6-4 5-3 M521 255l4-2 4-2 M521 255l2-5 3-4 M510 262l4-6 2-6 M516 250l0-5 0-4 M516 250l1-5 0-4 M479 278l4-5 5-5 M488 268l0-5 1-5 M489 258l2-4 2-3 M489 258l1-4 1-4 M488 268l3-3 4-2 M495 263l1-3 1-3 M495 263l2-2 3-2 M479 278l5-4 5-3 M489 271l3-4 4-4 M496 263l3-2 3-2 M496 263l2-3 2-3 M489 271l3-4 2-4 M494 263l2-2 2-3 M494 263l3-1 3-1 M473 270l0-7-1-6 M472 257l0-5 1-4 M473 248l-1-3 0-3 M473 248l-1-3 0-3 M472 257l-3-4-4-3 M465 250l0-4-1-3 M465 250l-1-3-1-3 M473 270l5-5 6-3 M484 262l4-1 5 0 M493 261l3-2 2-2 M493 261l3 1 3 0 M484 262l5-2 4-1 M493 259l3-2 2-2 M493 259l3-2 3-2 M465 267l3-6 3-5 M471 256l3-3 3-4 M477 249l3-1 3-1 M477 249l1-3 1-3 M471 256l2-4 2-4 M475 248l2-2 2-3 M475 248l3-2 2-2 M465 267l3-6 3-5 M471 256l3-3 3-2 M477 251l1-3 0-3 M477 251l1-3 0-2 M471 256l-1-4-1-4 M469 248l-1-2-1-2 M469 248l-1-2 0-3 M466 264l6-2 6-3 M478 259l4-2 3-2 M485 255l1-2 2-3 M485 255l3-2 3-1 M478 259l3-3 3-3 M484 253l2-2 2-1 M484 253l2-2 3-2 M466 264l5-5 5-6 M476 253l3-4 3-3 M482 246l2-3 1-3 M482 246l3-1 3-1 M476 253l4-3 4-3 M484 247l4 0 3 0 M484 247l4-2 3-2 M317 200l-6-5 M316 198l-5-7 M306 206l-6-7 M310 203l-9-3 M384 280l-7-1-7 0 M370 279l-4-4-4-3 M362 272l-4-2-3-1 M362 272l-2-3-3-3 M370 279l-4-4-4-4 M362 271l-1-3-1-4 M362 271l-2-3-2-4 M384 280l-4-6-4-6 M376 268l-6-1-5-2 M365 265l-2-3-2-3 M365 265l-4-2-4-1 M376 268l-5-3-4-2 M367 263l-2-3-2-3 M367 263l-2-3-3-3 M387 286l-5-2-5-2 M377 282l-2-4-2-4 M373 274l1-2 1-3 M373 274l0-2-1-3 M377 282l-4-2-4-2 M369 278l-2-2-3-3 M369 278l-1-3-2-2 M387 286l-5-3-4-3 M378 280l-1-4-1-4 M376 272l-1-3-3-2 M376 272l-2-3-2-2 M378 280l-3-2-3-2 M372 276l-2-1-1-2 M372 276l-3-1-2-1 M404 254l-2-5-2-6 M400 243l2-3 0-4 M402 236l0-2-1-2 M402 236l1-2 1-2 M400 243l0-3-1-4 M399 236l-1-2-2-2 M399 236l1-2 1-2 M404 254l-2-6-2-7 M400 241l-1-5-1-5 M398 231l-1-3-1-4 M398 231l1-4 0-4 M400 241l-3-5-3-4 M394 232l-2-3-1-3 M394 232l-4-2-3-2 M405 253l-5-4-5-4 M395 245l-2-4-2-4 M391 237l1-3 1-3 M391 237l-1-3-2-3 M395 245l0-4-1-5 M394 236l1-3 0-3 M394 236l2-2 2-3 M405 253l-4-6-2-5 M399 242l-4-3-4-2 M391 237l-2-3-1-3 M391 237l-2-3-2-2 M399 242l0-5-1-5 M398 232l2-4 2-3 M398 232l-1-4-1-4 M340 287l-10-4-9-6 M321 277l-7-4-7-6 M307 267l-4-3-5-2 M307 267l-4-4-4-4 M321 277l-4-5-4-6 M313 266l-3-3-3-5 M313 266l-3-4-3-3 M340 287l-8-5-7-7 M325 275l-6-4-6-4 M313 267l-6 0-5-1 M313 267l-5-2-5-1 M325 275l-5-5-4-5 M316 265l-1-5-1-4 M316 265l-3-3-3-4 M352 268l-7-7-7-8 M338 253l-7-4-7-4 M324 245l-3-6-2-6 M324 245l-4-4-5-4 M338 253l-6-6-6-5 M326 242l-1-6-1-6 M326 242l-5-2-5-3 M352 268l-10-4-10-2 M332 262l-5-7-3-8 M324 247l-2-5-3-6 M324 247l1-5 1-5 M332 262l-7-2-7-1 M318 259l-5-1-4-1 M318 259l-3-4-4-5 M360 250l-1-9-3-8 M356 233l0-6 1-6 M357 221l0-5 0-4 M357 221l0-5 1-5 M356 233l2-7 0-7 M358 219l-2-4-1-5 M358 219l1-5 1-6 M360 250l-6-6-7-6 M347 238l-1-7-3-6 M343 225l-3-3-4-1 M343 225l-3-5-3-4 M347 238l-5-4-5-4 M337 230l-1-4-2-4 M337 230l-2-3-3-3 M371 244l1-10-1-10 M371 224l-3-5-5-6 M363 213l0-5 0-6 M363 213l0-4-1-5 M371 224l1-6 2-6 M374 212l-1-5-1-4 M374 212l2-4 2-4 M371 244l-7-7-7-8 M357 229l-3-7-4-6 M350 216l-3-4-3-3 M350 216l-4-2-4-1 M357 229l-7-3-8-3 M342 223l-5-4-4-4 M342 223l-5-4-4-5 M617 533l3-4 4-4 M624 525l1-3 2-3 M624 525l1-3 2-4 M617 533l1-5 0-5 M618 523l-1-3-1-3 M618 523l-1-3-2-3 M603 532l-3-5-5-4 M595 523l-1-3-2-4 M595 523l-4 0-3-1 M603 532l-5-2-6-1 M592 529l-3 0-4-1 M592 529l-4 0-4-1 M621 534l-2-5-1-5 M618 524l0-3 0-3 M618 524l0-3 1-3 M621 534l2-5 1-5 M624 524l2-3 2-4 M624 524l-1-3-1-4 M620 534l3-4 2-3 M625 527l0-4 0-3 M625 527l2-3 2-2 M620 534l0-5 1-4 M621 525l0-3 1-4 M621 525l2-2 2-3 M559 546l-4-2-3-3 M552 541l-2-2-2-2 M552 541l-3-2-3-1 M559 546l-3-1-4-2 M552 543l-3-1-3-1 M552 543l-2-2-1-2 M560 542l1-5 1-4 M562 533l1-4 1-3 M562 533l-1-3 0-3 M560 542l2-5 2-6 M564 531l1-4 2-4 M564 531l2-3 3-4 M568 536l-3-4-4-5 M561 527l-3-3-2-3 M561 527l-1-3-2-3 M568 536l-5-3-6-2 M557 531l-3-3-2-3 M557 531l-3-3-4-2 M573 534l1-5 2-4 M576 525l2-3 3-2 M576 525l1-4 0-3 M573 534l-3-5-3-5 M567 524l-2-3-2-3 M567 524l-3-2-4-2 M690 588l0-4-1-5 M689 579l2-3 2-3 M689 579l1-3 1-3 M690 588l2-3 3-2 M695 583l1-3 2-2 M695 583l2-2 2-2 M686 584l2-3 1-4 M689 577l2-2 2-3 M689 577l1-2 1-3 M686 584l2-3 3-2 M691 579l3-2 2-2 M691 579l3-2 3-1 M690 605l4 0 3 0 M697 605l3 1 3 1 M697 605l3-1 3 0 M690 605l4-1 3-2 M697 602l2-2 2-2 M697 602l3-1 2-2 M691 606l4-1 3-1 M698 604l3-2 2-2 M698 604l3 0 3 1 M691 606l3-2 3-2 M697 602l2-2 1-1 M697 602l3-1 2-1 M653 550l2-4 2-4 M657 542l0-4-1-3 M657 542l2-3 2-2 M653 550l2-5 2-6 M657 539l1-3 1-4 M657 539l2-3 2-4 M663 552l3-6 2-7 M668 539l0-5 1-5 M668 539l0-5-1-4 M663 552l5-3 5-3 M673 546l3-1 4-1 M673 546l3 0 4 0 M677 568l3-3 3-2 M683 563l1-2 1-2 M683 563l1-2 2-3 M677 568l3-4 1-4 M681 560l2-3 2-3 M681 560l0-3 1-4 M669 560l-1-5-2-5 M666 550l-1-3-1-3 M666 550l0-3 0-4 M669 560l-1-5 1-6 M669 549l2-3 3-2 M669 549l0-3-2-4 M587 444l-1-6-2-6 M584 432l-3-3-4-3 M584 432l0-4 0-4 M587 444l-2-6-4-4 M581 434l-3-2-3-3 M581 434l0-4-1-5 M606 442l4-4 4-5 M614 433l3-2 4-2 M614 433l3-1 4-1 M606 442l3-6 3-6 M612 430l2-4 2-5 M612 430l3-4 3-3 M568 459l-4-1-5-1 M559 457l-4 0-4 0 M559 457l-4 0-4 1 M568 459l-1-5-2-4 M565 450l-1-4-1-3 M565 450l0-4 1-3 M569 454l-3-6-2-6 M564 442l-2-4-1-5 M564 442l1-4 0-4 M569 454l-5-3-6-3 M558 448l-3-3-3-5 M558 448l-3-3-4-4 M626 447l0-5 0-6 M626 436l1-4 2-4 M626 436l1-3 2-3 M626 447l2-6 3-6 M631 435l1-4 1-4 M631 435l0-4 0-5 M615 447l-1-5 1-5 M615 437l-2-4-2-4 M615 437l-2-4-1-3 M615 447l3-4 2-5 M620 438l2-3 2-2 M620 438l0-3 2-3 M601 453l-3-4-2-4 M596 445l0-3 0-4 M596 445l-2-3-2-2 M601 453l-3-3-4-3 M594 447l-3-2-3-2 M594 447l-3-2-3-1 M604 451l1-4 1-4 M606 443l2-2 1-3 M606 443l1-3 0-3 M604 451l1-4 2-5 M607 442l3-3 1-3 M607 442l2-2 2-3 M613 452l-1-5-1-5 M611 442l1-4 1-3 M611 442l1-3 0-4 M613 452l-3-5-2-5 M608 442l1-3 1-4 M608 442l1-3 1-4 M617 453l1-5 1-4 M619 444l0-3 0-4 M619 444l-1-3-1-2 M617 453l2-4 3-4 M622 445l2-1 2-1 M622 445l2-2 2-2 M615 452l-2-4-1-5 M612 443l-2-3-1-4 M612 443l-1-3-1-3 M615 452l-1-5-1-5 M613 442l-1-3-3-3 M613 442l-1-3-1-4 M614 450l2-5 1-5 M617 440l2-4 2-3 M617 440l1-4 2-3 M614 450l3-5 3-5 M620 440l2-3 1-4 M620 440l0-4 0-5 M623 449l4-6 2-6 M629 437l0-5 0-5 M629 437l3-4 1-4 M623 449l-1-6-1-6 M621 437l-3-2-3-3 M621 437l-1-4-2-4 M627 454l2-5 1-5 M630 444l0-3-1-4 M630 444l2-2 2-2 M627 454l1-6 1-5 M629 443l-1-3 0-4 M629 443l-2-3-2-4 M585 461l-3-3-4-3 M578 455l-2-1-4-1 M578 455l-2-2-2-2 M585 461l-4-1-4-1 M577 459l-3-1-3-1 M577 459l-3 0-3-1 M584 461l-3-4-1-5 M580 452l-1-4 0-4 M580 452l-2-3-3-2 M584 461l-4-4-4-4 M576 453l-2-4-1-4 M576 453l-2-3-2-3 M603 380l1-5 2-5 M606 370l1-3 2-3 M606 370l2-3 2-2 M603 380l0-5 0-6 M603 369l2-4 0-4 M603 369l1-4 1-4 M596 381l-1-4-1-5 M594 372l1-3 1-4 M594 372l0-3 0-4 M596 381l-3-4-4-4 M589 373l-3-2-4-1 M589 373l-1-4 0-5 M584 395l-2-4-2-4 M580 387l0-4-1-3 M580 387l0-4 1-3 M584 395l-4-2-4-2 M576 391l-1-2-2-3 M576 391l-3 0-3-1 M587 394l-1-4-1-5 M585 385l-1-2-1-3 M585 385l0-3-1-3 M587 394l-2-4-2-3 M583 387l1-3 1-3 M583 387l-2-2-2-3 M608 374l2-5 2-5 M612 364l2-3 2-3 M612 364l-1-4-1-4 M608 374l-3-4-3-5 M602 365l-4-2-3-2 M602 365l-1-3-1-3 M602 379l-3-4-3-4 M596 371l-2-2-2-2 M596 371l-2-2-2-3 M602 379l-4-3-3-4 M595 372l-2-4-3-3 M595 372l-4-2-4-1 M637 372l-1-4-1-5 M635 363l1-3 0-4 M635 363l-1-3-2-3 M637 372l0-4-1-5 M636 363l-1-4-1-3 M636 363l1-3 1-4 M647 375l4-4 4-3 M655 368l2-3 2-3 M655 368l5-1 4-2 M647 375l1-5 2-5 M650 365l1-3 1-4 M650 365l0-3-1-4 M595 386l-4-3-4-3 M587 380l-2-2-2-3 M587 380l-1-3-1-4 M595 386l-2-4-1-4 M592 378l0-3 0-3 M592 378l-2-2-2-3 M590 387l-4-3-3-3 M583 381l-1-3-1-3 M583 381l-1-3-2-3 M590 387l-4-3-3-4 M583 380l-4-2-3-2 M583 380l-1-3 0-3 M608 381l2-5 2-4 M612 372l2-2 3-3 M612 372l-2-4-2-3 M608 381l3-3 3-4 M614 374l0-4 1-3 M614 374l2-3 1-2 M610 378l2-5 2-4 M614 369l-1-4-1-3 M614 369l1-4 0-4 M610 378l0-5 1-5 M611 368l1-4 1-4 M611 368l2-4 2-3 M581 395l-2-5-2-5 M577 385l-2-3-4-3 M577 385l-1-3-2-3 M581 395l-1-5 1-5 M581 385l2-4 2-2 M581 385l0-4-1-4 M584 393l2-5 2-4 M588 384l0-3 0-3 M588 384l2-2 2-1 M584 393l1-5 1-4 M586 384l0-3 0-4 M586 384l1-4 0-3 M575 403l-3-3-3-5 M569 395l-3-1-4-2 M569 395l2-3 1-4 M575 403l0-4 0-5 M575 394l1-3 1-3 M575 394l1-3 2-3 M570 409l-4 0-4-1 M562 408l-3 0-3-1 M562 408l-2-2-2-2 M570 409l-2-3-3-2 M565 404l-1-2-1-3 M565 404l-2-1-3 0 M660 301l2-3 1-4 M663 294l-1-2 0-3 M663 294l-1-2 0-3 M660 301l-1-4-2-4 M657 293l0-2 0-3 M657 293l0-3 0-3 M661 299l-2-3-2-4 M657 292l-1-4-1-3 M657 292l-2-3-3-2 M661 299l0-4 1-5 M662 290l2-3 2-3 M662 290l-1-3-1-3 M650 291l-2-6-3-6 M645 279l-1-4-2-4 M645 279l-3-2-3-3 M650 291l2-6 1-6 M653 279l2-3 0-3 M653 279l1-3 2-3 M646 292l-3-5-2-4 M641 283l-1-4-2-3 M641 283l-3-2-3-2 M646 292l-2-6-1-5 M643 281l0-5 1-4 M643 281l-2-3-2-3 M641 284l-3-6-5-5 M633 273l-2-4-3-4 M633 273l-3-3-4-2 M641 284l-1-6-3-7 M637 271l0-4 1-5 M637 271l-2-3-2-4 M637 285l1-6 2-6 M640 273l1-3 1-3 M640 273l-2-3 0-4 M637 285l1-7 0-6 M638 272l1-4 1-4 M638 272l-2-5-2-5 M648 290l-2-4-1-5 M645 281l-2-3-1-4 M645 281l-3-2-2-2 M648 290l-3-4-2-5 M643 281l-4-2-3-1 M643 281l-3-2-4-2 M650 293l1-4 2-5 M653 284l1-2 2-3 M653 284l2-2 1-3 M650 293l0-4 0-4 M650 285l2-2 1-2 M650 285l1-3 0-3 M549 305l-5-4-5-4 M539 297l-3-5-2-4 M539 297l-4-3-3-4 M549 305l-3-6-3-6 M543 293l-2-5-2-5 M543 293l-2-5-4-5 M541 317l-2-7-1-6 M538 304l-1-5 0-4 M538 304l2-4 2-4 M541 317l-4-5-4-5 M533 307l-1-4-1-4 M533 307l-2-3-2-4 M573 292l-1-5 0-6 M572 281l0-3 1-4 M572 281l2-3 M573 292l0-4 0-5 M573 283l0-4 0-3 M573 283l-2-4-2-3 M545 289l-5-6-7-6 M533 277l-2-6-4-6 M533 277l-3-4-4-5 M545 289l-6-3-7-4 M532 282l-2-4-4-3 M532 282l-5-1-6-1 M544 295l-2-7-3-7 M539 281l0-5 0-5 M539 281l-1-5-1-5 M544 295l-1-8-3-8 M540 279l2-5 1-5 M540 279l-2-5-4-3 M589 279l1-6 0-5 M590 268l0-4 0-5 M590 268l0-5 1-5 M589 279l-2-6 0-7 M587 266l3-4 2-4 M587 266l-2-4 M577 278l-2-6-1-7 M574 265l0-5 1-4 M574 265l0-5 0-6 M577 278l-3-6-3-5 M571 267l-3-3-3-2 M637 226l1-6 1-5 M639 215l1-4 1-4 M639 215l0-4-1-3 M637 226l0-5 0-5 M637 216l1-3 1-4 M637 216l-1-3-1-3 M625 235l-3-5-4-4 M618 226l-1-3 0-4 M618 226l-2-3-1-4 M625 235l-4-5-4-5 M617 225l-1-4-2-3 M631 239l-2-5-2-4 M627 230l-2-2-2-3 M627 230l-3-2-3-2 M631 239l-4-1-4 0 M623 238l-3 2-3 1 M623 238l-2-2-1-3 M636 231l1-4 1-3 M638 224l2-2 2-2 M638 224l2-3 2-2 M636 231l1-5 1-4 M638 222l0-4 1-3 M638 222l-1-3-2-3 M659 222l2-4 2-4 M663 214l0-3 0-3 M663 214l1-3 0-3 M659 222l2-3 1-4 M662 215l3-2 2-1 M662 215l1-2 2-3 M654 223l0-4 0-5 M654 214l2-2 3-2 M654 214l2-2 2-3 M654 223l1-4 1-4 M656 215l-1-2 0-3 M656 215l2-1 3-2 M650 222l0-5 1-4 M651 213l0-4-1-3 M651 213l-3-3-2-3 M650 222l-2-4-2-5 M646 213l-2-2-2-2 M646 213l2-3 1-3 M652 222l-1-4-1-5 M650 213l2-3 1-2 M650 213l1-3 1-3 M652 222l2-4 1-5 M655 213l-2-3-1-3 M655 213l0-3-1-4 M617 193l-2-5-1-6 M614 182l0-5 M664 190l-1-7 M664 190l-3-5-4-5 M657 180l-2-3 M657 180l-2-4-4-3 M656 198l-5-3-4-3 M647 192l-3-2 M647 192l-3-2-2-2 M656 198l-5-2-4-2 M647 194l-1-3-1-4 M647 194l-3-2-3-3 M674 183l4-7 3-7 M674 183l1-7 M759 225l2-8 M755 229l5-3 5-2 M765 224l4-1 4-1 M755 229l6-1 5 0 M766 228l3-3 3-3 M766 228l3-2 2-3 M755 223l3-6 4-5 M762 212l0-4 M762 212l-1-4 1-4 M755 223l6-1 5-1 M766 221l4-1 M766 221l2-4 3-4 M642 195l-3-4-2-5 M637 186l-2-3-2-2 M648 190l2-5 2-4 M652 181l0-4 M648 190l2-5 M710 214l6 1 5 2 M721 217l4-1 4 0 M721 217l4 0 4 0 M710 214l3-4 3-4 M716 206l-1-4-1-4 M716 206l2-4 2-3 M705 204l2-5 2-6 M709 193l-1-4 0-4 M709 193l0-4 1-5 M705 204l3-5 2-5 M710 194l0-4 1-4 M710 194l1-4-1-4 M704 202l1-6 1-6 M706 190l1-4 M704 202l4-3 3-4 M711 195l2-3 1-4 M705 202l4-2 5-2 M714 198l4 0 4-1 M714 198l2-2 3-2 M705 202l2-5 3-5 M710 192l3-3 3-2 M688 207l-2-5-3-4 M683 198l0-4-2-3 M683 198l1-4 0-4 M688 207l1-4 1-5 M690 198l2-3 2-3 M690 198l0-3 1-3 M678 208l-2-5-3-5 M673 198l1-3 0-4 M673 198l-3-2-2-3 M678 208l-5-3-5-4 M668 201l-1-4-1-4 M668 201l-4-2-4-1 M683 213l-1-5-1-5 M681 203l-1-4-1-4 M681 203l-2-3-1-4 M683 213l1-4 2-5 M686 204l2-2 2-2 M686 204l-1-3-1-2 M671 216l-1-4-2-3 M668 209l-2-2-3-1 M668 209l-1-2-2-2 M671 216l-4-3-3-3 M664 210l-1-2-1-3 M664 210l-3 0-2-2 M737 226l5-4 4-4 M746 218l3-4 1-3 M746 218l5-2 4-2 M737 226l5-4 6-5 M748 217l1-4 2-5 M748 217l5-1 M730 221l-1-5 0-5 M729 211l-1-4 0-4 M729 211l1-4 2-3 M730 221l1-6 0-6 M731 209l3-4 3-3 M731 209l-2-5-2-5 M697 203l-5-2-5-3 M687 198l-3-3-3-4 M687 198l-4-2-4 0 M697 203l1-6 2-6 M700 191l3-3 4-3 M700 191l0-4 M706 200l2-6 M706 200l4-5 M695 162l0-8 M725 182l-4-5 M725 182l-2-5-3-6 M720 171l-1-4 M723 188l2-6 2-5 M727 177l-1-4 M659 571l-4-5-5-5 M650 561l-4-2-3-2 M650 561l-4-2-4-2 M659 571l-6-1-6-3 M647 567l-3-4-3-3 M647 567l-2-4-2-4 M670 569l-1-5 0-6 M669 558l-1-4 0-4 M669 558l-1-4-2-3 M670 569l2-4 3-5 M675 560l2-2 3-2 M675 560l1-3 2-2 M681 567l5-6 5-6 M691 555l1-5 1-4 M691 555l0-6 0-5 M681 567l3-7 4-6 M688 554l4-4 3-4 M688 554l-1-6-1-5 M666 567l-5-5-6-3 M655 559l-4-1-5-2 M655 559l0-5-1-5 M666 567l2-7 1-7 M669 553l4-3 4-3 M669 553l-2-5-3-4 M658 576l-2-5-2-4 M654 567l1-3 2-2 M654 567l0-3 0-3 M658 576l-3-5-4-4 M651 567l-2-3-3-3 M651 567l-3-1-3-2 M665 571l-1-6-1-6 M663 559l-2-4-2-4 M663 559l0-4-1-5 M665 571l-3-5-3-6 M659 560l-3-2-3-2 M659 560l-1-4 0-4 M682 574l3-5 3-6 M688 563l-1-5-1-4 M688 563l3-3 3-4 M682 574l2-5 1-6 M685 563l-1-3-3-4 M685 563l1-3 0-3 M675 572l-1-6-1-6 M673 560l1-5-1-4 M673 560l-1-4-1-4 M675 572l2-6 3-5 M680 561l2-3 2-4 M680 561l-1-5-2-4 M672 483l6-3 7-2 M685 478l5 0 5-1 M685 478l3-4 4-3 M672 483l6-4 4-5 M682 474l2-5 3-4 M682 474l4-3 4-2 M660 480l4-4 3-5 M667 471l2-5 1-4 M667 471l3-3 4-3 M660 480l-4-5-4-5 M652 470l1-5 1-5 M652 470l-2-4-3-5 M646 472l-1-7-1-7 M644 458l4-4 3-4 M644 458l-2-4-1-5 M646 472l3-5 4-5 M653 462l4-2 5-2 M653 462l2-5 2-4 M658 476l4-6 4-6 M666 464l2-4 4-3 M666 464l-1-4 0-5 M658 476l5-6 3-6 M666 464l0-4-2-4 M666 464l1-4 0-5 M673 490l4-6 4-5 M681 479l2-4 3-3 M681 479l4-2 4-3 M673 490l5-5 5-4 M683 481l3-4 3-3 M683 481l2-5 1-5 M676 493l0-7 0-6 M676 480l0-5 1-5 M676 480l-2-5-2-4 M676 493l1-6 3-6 M680 481l1-4 2-3 M680 481l2-4 3-3 M658 494l-5-5-3-6 M650 483l-1-4 0-4 M650 483l-4-2-4-3 M658 494l-2-7-1-6 M655 481l0-5-1-5 M655 481l-2-5-2-4 M676 504l5-1 5-1 M686 502l2-2 2-3 M686 502l3-1 3 0 M676 504l4-3 3-4 M683 497l3-2 3-3 M683 497l3-2 2-2 M662 526l0-4 0-4 M662 518l0-3-1-2 M662 518l0-2 0-3 M662 526l3-3 4-3 M669 520l0-3 1-3 M669 520l1-2 1-3 M659 524l2-3 3-3 M664 518l2-2 3-1 M664 518l2-2 2-2 M659 524l0-4 0-4 M659 516l-1-4-2-3 M659 516l-3-2-1-3 M669 529l1-4 3-3 M673 522l2-2 3-2 M673 522l2-2 1-3 M669 529l3-4 3-3 M675 522l1-3 1-3 M675 522l0-3-1-3 M665 527l2-3 1-4 M668 520l1-2 2-2 M668 520l2-2 2-2 M665 527l1-4 2-4 M668 519l1-3 1-3 M668 519l0-3 0-4 M668 523l-2-5 0-5 M666 513l0-3 0-4 M666 513l2-3 1-3 M668 523l-1-4 1-4 M668 515l0-3 1-2 M668 515l-2-3-1-3 M665 522l2-4 1-3 M668 515l2-3 1-3 M668 515l0-4 0-3 M665 522l-1-4-2-4 M662 514l1-3 1-3 M662 514l-1-3-2-2 M665 525l4-2 5-1 M674 522l2-2 1-3 M674 522l3-2 3-1 M665 525l3-3 4-2 M672 520l0-3 1-4 M672 520l1-2 2-3 M650 520l0-4 0-4 M650 512l1-3 0-2 M650 512l-1-3-1-2 M650 520l-1-4-2-4 M647 512l-1-2-1-3 M647 512l-2-2-2-2 M598 465l-4-5-4-3 M590 457l-3-3-3-4 M590 457l-2-5-1-4 M598 465l-3-6-2-6 M593 453l1-5 2-4 M593 453l-3-3-2-3 M607 456l-1-5-2-5 M604 446l-3-2-3-2 M604 446l-2-3-3-3 M607 456l-3-3-3-3 M601 450l-3-1-3-1 M601 450l-1-3-2-3 M601 464l-3-4-5-3 M593 457l-1-3-1-4 M593 457l-1-3-1-4 M601 464l-3-5-3-5 M595 454l-2-4-3-3 M595 454l-4-2-4-2 M600 472l-3-2-3-4 M594 466l0-3 0-3 M594 466l-1-2-2-3 M600 472l-3-4-3-3 M594 465l-1-4-2-3 M594 465l-3-3-3-3 M600 450l-5-2-5-3 M590 445l-2-4-1-4 M590 445l-3-2-3-2 M600 450l-6-1-6-2 M588 447l-4-3-4-2 M588 447l-4 1-4 1 M599 451l-5-3-6-2 M588 446l-4-4-3-4 M588 446l-3-3-4-3 M599 451l-5-2-5-4 M589 445l-3-4-2-4 M589 445l-5 0-5-1 M640 431l4-5 4-5 M648 421l2-4 2-4 M648 421l3-3 3-3 M640 431l5-5 4-5 M649 421l3-3 2-3 M649 421l5-1 4-2 M639 430l-2-7-4-5 M633 418l-3-4-3-4 M633 418l-3-5-3-3 M639 430l-2-7 0-6 M637 417l-3-5-3-4 M637 417l2-5 3-4 M757 518l4-2 3-3 M764 513l2-1 3-1 M764 513l0-3 1-3 M757 518l1-4 2-4 M760 510l-1-2 0-3 M760 510l1-2 0-3 M755 517l1-3 2-3 M758 511l-1-2 0-3 M758 511l2-2 2-2 M755 517l3-3 3-3 M761 511l1-3 1-2 M761 511l1-3 0-2 M740 505l2-4 2-4 M744 497l2-2 3-2 M744 497l1-3 1-3 M740 505l-1-4-2-4 M737 497l-1-2-1-2 M737 497l-1-2-2-3 M736 506l-1-4-1-4 M734 498l-1-3-1-3 M734 498l-1-3-1-3 M736 506l1-4 0-4 M737 498l1-2 0-3 M737 498l0-3 0-3 M746 511l4 1 3 1 M753 513l2-1 3-1 M753 513l3 0 2 0 M746 511l3-2 3-2 M752 507l2-1 2-1 M752 507l-1-2 1-3 M747 508l3-3 3-2 M753 503l2-2 3-1 M753 503l2-2 2-2 M747 508l5-2 4-1 M756 505l1-3 2-2 M756 505l1-3 0-3 M739 492l3-3 4-3 M746 486l1-3 1-4 M746 486l2-3 2-3 M739 492l3-5 4-4 M746 483l3-1 4-1 M746 483l3-2 2-2 M734 491l4-5 2-5 M740 481l0-4 1-4 M740 481l0-4-1-4 M734 491l2-4 2-5 M738 482l0-3-1-3 M738 482l0-3 1-4 M752 411l1-7-1-7 M752 397l-1-4-3-4 M748 389l1-3 0-3 M748 389l-2-2-3-2 M752 397l2-4 1-5 M755 388l0-3 1-4 M755 388l0-3 0-4 M752 411l1-6 1-7 M754 398l-3-4-3-3 M748 391l-3-3-3-2 M748 391l-2-3-1-3 M754 398l1-4 3-4 M758 390l2-2 2-3 M758 390l0-3 0-3 M763 417l5-5 5-5 M773 407l3-4 3-4 M779 399l2-3 3-3 M779 399l2-2 3-2 M773 407l-1-5 0-4 M772 398l1-4 0-3 M772 398l2-3 2-2 M763 417l4-7 3-7 M770 403l3-5 2-5 M775 393l4-3 2-3 M775 393l2-4 1-4 M770 403l0-5 1-6 M771 392l1-3 1-4 M771 392l2-4 1-3 M751 411l4-7 3-7 M758 397l-2-6 0-6 M756 385l-2-5-2-4 M756 385l0-5 1-4 M758 397l-1-5-1-6 M756 386l-2-3-2-4 M756 386l1-3 1-4 M751 411l1-7 1-8 M753 396l1-4 1-5 M755 387l0-3 1-3 M755 387l0-2 1-3 M753 396l3-5 3-5 M759 386l2-3 3-2 M759 386l-1-4 1-3 M735 410l3-5 3-5 M741 400l2-3 2-4 M745 393l3-1 3-2 M745 393l0-3 0-3 M741 400l-1-3 0-3 M740 394l1-3 0-2 M740 394l-1-3 0-2 M735 410l-3-5-2-5 M730 400l0-4 0-4 M730 392l-1-3-1-2 M730 392l-2-2-2-3 M730 400l1-5 1-4 M732 391l-1-3-2-2 M732 391l0-3 0-3 M757 387l3-7 2-9 M762 371l1-5 1-5 M764 361l2-3 1-3 M764 361l0-3 1-3 M762 371l2-5 2-5 M766 361l-1-3 1-4 M766 361l1-3 2-3 M757 387l9-5 7-7 M773 375l1-7 2-8 M776 360l2-4 1-5 M776 360l2-5 2-5 M773 375l6-6 5-5 M784 364l4-4 5-3 M784 364l5-3 6-2 M744 386l-3-8-3-8 M738 370l1-5 0-6 M739 359l-1-4-2-4 M739 359l-2-4-2-3 M738 370l1-6 1-6 M740 358l4-4 3-3 M740 358l0-4 0-4 M744 386l-3-7-5-8 M736 371l3-6 3-5 M742 360l4-3 3-2 M742 360l4-3 2-3 M736 371l-4-3-4-4 M728 364l0-4 0-3 M728 364l-3-2-4-2 M784 427l7-5 7-5 M798 417l3-5 4-4 M805 408l3-3 3-2 M805 408l3-4 2-4 M798 417l6-1 6-1 M810 415l2-3 2-4 M810 415l3-2 4-3 M784 427l7-4 8-4 M799 419l6-2 5-3 M810 414l3-3 2-4 M810 414l3-3 2-4 M799 419l2-5 1-6 M802 408l-2-3-2-3 M802 408l2-3 2-3 M780 408l2-9-1-9 M781 390l-3-6-2-6 M776 378l-3-3-4-2 M776 378l-2-4-2-4 M781 390l3-7 2-6 M786 377l1-4 1-4 M786 377l0-5 1-5 M780 408l7-8 6-7 M793 393l1-8 0-7 M794 378l-2-4-3-3 M794 378l-2-4-2-4 M793 393l7-3 7-4 M807 386l5-2 5-4 M807 386l3-4 2-5 M764 338l5-6 4-6 M773 326l2-5 0-6 M775 315l1-4 1-3 M775 315l0-3 1-3 M773 326l5-4 3-4 M781 318l0-4 1-4 M781 318l3-2 3-2 M764 338l1-8 2-8 M767 322l4-5 3-5 M774 312l3-2 3-2 M774 312l1-3 2-4 M767 322l-2-5-2-6 M763 311l-1-3-1-4 M763 311l-2-3-2-4 M766 335l2-9 4-9 M772 317l2-7 3-6 M777 304l4-4 3-3 M777 304l1-5 1-4 M772 317l3-5 5-4 M780 308l0-4-1-4 M780 308l4-3 4-3 M766 335l2-9 2-9 M770 317l2-5 0-6 M772 306l1-4 2-4 M772 306l2-4 1-5 M770 317l0-6 1-6 M771 305l1-4 1-4 M771 305l1-4 0-3 M738 323l1-9 2-8 M741 306l5-5 5-4 M751 297l2-5 2-5 M751 297l1-5 1-4 M741 306l2-5 0-5 M743 296l2-3 3-3 M743 296l2-4 1-3 M738 323l-2-9-1-10 M735 304l-4-5-3-4 M728 295l-1-4 0-4 M728 295l-2-4-1-4 M735 304l-2-5-1-7 M732 292l-1-3-2-4 M732 292l3-4 2-4 M728 331l-6-4-5-4 M717 323l-4-3-4-4 M709 316l-3-2-4-2 M709 316l0-4 0-4 M717 323l-5-2-4-4 M708 317l-3 0-3-1 M708 317l-1-2-2-3 M728 331l-6-5-6-4 M716 322l-3-4-3-4 M710 314l-2-3-3-2 M710 314l-2-3-1-4 M716 322l-2-5-1-4 M713 313l1-3 1-3 M713 313l-2-3-2-2 M743 330l2-7 2-8 M747 315l-1-6 0-6 M746 303l-2-4-2-4 M746 303l1-4-1-4 M747 315l-2-5 0-6 M745 304l3-3 3-4 M745 304l0-4 1-4 M743 330l-1-7-2-7 M740 316l-2-5-1-6 M737 305l0-5 1-4 M737 305l1-4 1-5 M740 316l-2-4-1-5 M737 307l0-3-1-4 M737 307l-2-2-1-3 M748 331l7-6 7-6 M762 319l2-6 3-6 M767 307l2-4 1-4 M767 307l2-4 3-3 M762 319l3-7 4-6 M769 306l-1-5-1-5 M769 306l1-5 1-5 M748 331l7-5 8-5 M763 321l5-4 5-4 M773 313l3-3 3-4 M773 313l3-4 3-4 M763 321l0-6 0-7 M763 308l-2-4-2-5 M763 308l2-4 1-5 M727 334l1-6 0-6 M728 322l-1-5 0-4 M727 313l-1-3 0-3 M727 313l-2-2-2-1 M728 322l1-5 1-4 M730 313l1-4 1-3 M730 313l1-3 1-4 M727 334l-1-6 0-6 M726 322l-2-3-3-3 M721 316l-3-1-3-2 M721 316l-1-3-2-3 M726 322l-2-3-3-3 M721 316l-1-3-2-2 M721 316l-1-3-2-2 M742 339l1-5 1-6 M744 328l-2-3-2-3 M740 322l-1-3 0-2 M740 322l-1-2-1-3 M744 328l2-2 3-3 M749 323l1-2 1-3 M749 323l1-2 2-1 M742 339l4-5 6-3 M752 331l1-4 2-4 M755 323l2-2 1-2 M755 323l2-2 2-2 M752 331l2-4 2-4 M756 323l0-3 0-3 M756 323l0-4-1-3 M747 249l-1-7-3-7 M743 235l-4-4-4-3 M735 228l0-4 0-4 M735 228l-3-1-3 0 M743 235l1-5 0-5 M744 225l0-4 0-3 M744 225l-2-4-1-4 M747 249l-4-6-6-5 M737 238l0-4 0-5 M737 229l-2-2-2-3 M737 229l-1-2-1-3 M737 238l-4-1-4-1 M729 236l-2-4 0-3 M729 236l-2-3-2-3 M753 245l5-8 4-8 M762 229l-1-6-1-7 M760 216l-2-4 M760 216l0-4 2-5 M753 245l6-7 5-8 M764 230l6-2 6-2 M776 226l1-5 1-4 M764 230l-1-7 M763 254l4-6 4-7 M763 254l6-3 5-4 M774 247l2-5 1-5 M774 247l3-5 2-4 M779 238l1-3 M779 238l2-3 2-3 M761 252l3-7 3-6 M767 239l5-3 4-3 M776 233l2-3 3-3 M776 233l2-3 M767 239l0-6-1-5 M766 228l-2-4-2-4 M761 252l-2-8-1-7 M758 237l0-5-1-5 M757 227l-2-2-1-3 M757 227l-3-2-3-2 M758 237l-3-4-3-3 M752 230l-1-3-1-3 M752 230l-1-4 0-3 M791 235l-1-8 M739 235l-5-8-4-8 M730 219l-1-6-1-5 M728 208l0-4 0-4 M728 208l3-4 2-4 M730 219l-3-5-4-5 M723 209l-1-4 0-4 M723 209l-1-3-2-4 M739 235l-3-7-4-7 M732 221l1-6 0-6 M733 209l-1-4-1-3 M733 209l-1-4-2-4 M732 221l-4-4-5-4 M723 213l-3-3-3-3 M723 213l-1-4-2-3 M750 236l4-7 5-7 M759 222l4-5 5-4 M768 213l2-4 M750 236l2-7 1-8 M753 221l-2-4-4-3 M747 214l-1-3-2-3 M753 221l-3-4-3-5 M747 212l-2-4-3-3 M747 212l-1-5 1-4 M714 235l0-7 0-7 M714 221l-3-4-2-5 M709 212l-2-2-2-3 M709 212l0-3 0-4 M714 221l4-4 2-4 M720 213l2-3 2-3 M720 213l1-4 1-4 M714 235l-7-4-8-4 M699 227l-2-6 0-6 M697 215l-3-4-3-3 M697 215l2-4 1-4 M699 227l-7 0-6 1 M686 228l-4-2-3-2 M686 228l-4 0-4 0 M719 230l-2-8-1-8 M716 214l-5-5-4-4 M707 205l-4-2-4-2 M707 205l-1-4 0-5 M716 214l-4-5-5-4 M707 205l-4-1-4-1 M707 205l-2-4-2-4 M719 230l-6-7-6-8 M707 215l-3-7-4-7 M700 201l-4-3-4-3 M700 201l-4-2-5-1 M707 215l-1-7 0-7 M706 201l1-5 0-5 M706 201l-2-4-2-4 M716 234l-3-8-4-8 M709 218l2-5 2-5 M713 208l1-4 0-4 M713 208l3-3 3-1 M709 218l3-6 2-5 M714 207l3-4 2-3 M714 207l-1-5-3-3 M716 234l-2-7-2-7 M712 220l-2-6-2-5 M708 209l0-4-1-4 M708 209l-3-3-4-2 M712 220l-1-5 0-5 M711 210l0-3 0-4 M711 210l-2-3-2-3 M727 239l0-8 2-8 M729 223l0-5 0-5 M729 213l-1-3 1-4 M729 213l-2-3-1-4 M729 223l1-5 1-6 M731 212l3-3 3-3 M731 212l2-4 3-3 M727 239l4-8 4-8 M735 223l1-5 0-6 M736 212l2-4 0-4 M736 212l-2-3-2-3 M735 223l3-4 2-5 M740 214l3-2 3-3 M740 214l3-3 3-4 M755 241l-1-9-1-9 M753 223l2-6 1-6 M756 211l-1-4 M753 223l-3-6 M755 241l-2-8-1-8 M752 225l-2-5-1-5 M749 215l1-3 3-3 M749 215l-1-3-1-4 M752 225l-1-5-2-4 M749 216l-2-3-3-2 M752 245l1-6 1-7 M754 232l3-4 2-3 M754 232l2-4 1-5 M757 223l-1-4 M757 223l2-3 2-3 M752 245l-3-6-3-6 M746 233l-2-4-1-4 M743 225l0-3 0-4 M743 225l-2-3-1-3 M746 233l-1-4-1-4 M744 225l0-3-1-3 M744 225l-1-3-2-3 M691 247l-6-6-5-7 M680 234l-5-3-4-3 M671 228l-1-4-1-4 M671 228l-3-3-3-2 M680 234l-2-5-3-6 M675 223l1-4 1-4 M675 223l1-3 0-4 M691 247l-6-6-6-5 M679 236l-5-2-4-2 M670 232l-4 0-4-1 M670 232l-4-2-4 0 M679 236l-1-6-1-6 M677 224l-1-4 0-4 M677 224l-1-4-2-4 M708 232l-4-6-3-6 M701 220l-4-3-4-4 M693 213l-4 0-4-2 M693 213l-2-3-3-3 M701 220l-4-5-4-3 M693 212l-2-3-3-2 M693 212l-1-3-1-4 M708 232l1-8 1-8 M710 216l-2-5-3-5 M705 206l-3-3-3-2 M705 206l2-4 0-4 M710 216l2-5 1-5 M713 206l1-4 0-4 M713 206l0-4 1-4 M764 240l3-7 5-6 M772 227l2-5 3-5 M764 240l6-6 M766 246l1-6 3-6 M770 234l0-6 M766 246l2-8 2-8 M770 230l1-6 2-5 M773 219l1-4-1-4 M686 586l7-3 8-1 M701 582l4-3 5-3 M710 576l2-2 3-2 M710 576l2-3 1-4 M701 582l4-4 4-2 M709 576l3-3 4-3 M709 576l4-3 3-2 M686 586l8 0 8-1 M702 585l4-4 4-4 M710 577l3-5 1-4 M710 577l2-4 1-4 M702 585l6-2 5-1 M713 582l2-4 2-3 M713 582l3-3 2-4 M687 600l7-4 7-4 M701 592l4-5 4-5 M709 582l4-3 3-3 M709 582l2-4 2-4 M701 592l6-2 6-1 M713 589l4 1 4 0 M713 589l4-2 3-1 M687 600l7 3 8 3 M702 606l6 3 6 2 M714 611l4-1 4-2 M714 611l3-4 3-4 M702 606l6 1 6 0 M714 607l3-3 4-2 M714 607l5 1 4 0 M673 566l6-5 6-4 M685 557l3-5 3-4 M691 548l2-3 1-3 M691 548l1-4 1-3 M685 557l4-4 4-5 M693 548l2-3 2-3 M693 548l1-4 1-3 M673 566l-2-9-2-8 M669 549l1-6 0-6 M670 537l1-5 0-5 M670 537l-2-3-3-3 M669 549l2-7 1-6 M672 536l3-4 3-4 M672 536l1-5 2-5 M680 565l7-6 8-6 M695 553l5-3 6-3 M706 547l5-2 4-2 M706 547l4-2 4-2 M695 553l0-6 0-6 M695 541l1-5 2-4 M695 541l-2-4-2-4 M680 565l8-5 8-6 M696 554l7-3 5-4 M708 547l4-4 3-5 M708 547l5-2 4-2 M696 554l7-2 6-2 M709 550l2-4 2-4 M709 550l2-4 2-5 M599 474l1-8 1-7 M601 459l1-6 2-6 M604 447l-2-5-2-4 M604 447l-1-4-1-4 M601 459l0-6 0-6 M601 447l-1-3-1-4 M601 447l-3-3-3-3 M599 474l-4-6-5-7 M590 461l-1-6 0-6 M589 449l-3-4-2-5 M589 449l-1-5-1-4 M590 461l0-5-1-5 M589 451l-2-4-1-3 M589 451l1-4 1-4 M583 485l-9-2-9 0 M565 483l-6 1-6 2 M553 486l-5-1-5-2 M553 486l-4 2-5 2 M565 483l-4-4-4-4 M557 475l-1-4-1-4 M557 475l0-5-1-4 M583 485l-1-8 0-7 M582 470l-2-5-1-5 M579 460l0-4 0-3 M579 460l0-4-1-5 M582 470l-1-6-1-6 M580 458l-2-3-1-3 M580 458l0-4 0-3 M627 470l3-7 3-8 M633 455l3-5 2-7 M638 443l2-4 2-4 M638 443l-1-3-1-5 M633 455l5-4 4-5 M642 446l2-4 2-4 M642 446l4-3 4-3 M627 470l-2-8-2-8 M623 454l-4-5-3-6 M616 443l-3-4-4-3 M616 443l1-4 1-4 M623 454l3-6 2-6 M628 442l2-5 2-4 M628 442l-1-4-1-5 M606 468l-3-9-4-8 M599 451l-2-6 0-7 M597 438l2-4 2-4 M597 438l-3-3-3-3 M599 451l-6-3-6-2 M587 446l-2-4-1-5 M587 446l-4-1-5-1 M606 468l-4-7-4-6 M598 455l0-6 1-5 M599 444l-1-4-1-4 M599 444l1-4 0-3 M598 455l1-6 1-6 M600 443l3-3 3-2 M600 443l1-4 1-5 M657 458l8-4 8-4 M673 450l2-5 2-5 M677 440l0-4 0-4 M677 440l-2-4-1-4 M673 450l6-1 6-1 M685 448l2-4 1-4 M685 448l3-3 2-3 M657 458l3-9 3-9 M663 440l-2-6 0-7 M661 427l-1-5-2-4 M661 427l1-4 3-4 M663 440l-1-5 0-6 M662 429l0-5 0-4 M662 429l3-3 2-3 M654 455l-1-7 0-8 M653 440l1-5 2-4 M656 431l1-3 1-4 M656 431l2-3 1-3 M653 440l-2-5-1-5 M650 430l1-4 1-4 M650 430l-1-4 0-3 M654 455l6-6 7-8 M667 441l5-3 5-5 M677 433l2-4 3-3 M677 433l4-3 3-4 M667 441l4-6 5-6 M676 429l4-3 5-3 M676 429l1-5 0-5 M649 452l-1-9-2-9 M646 434l-4-6-3-6 M639 422l-4-3-4-4 M639 422l2-4 0-5 M646 434l-1-6-2-6 M643 422l-3-4-4-3 M643 422l-3-4-3-4 M649 452l-1-9-3-10 M645 433l-1-7-1-6 M643 420l-3-4-3-5 M643 420l-3-4-3-4 M645 433l1-7 2-7 M648 419l0-5 0-5 M648 419l2-4 2-4 M628 450l-4-8-4-9 M620 433l-1-6-2-6 M617 421l-2-4-3-4 M617 421l1-5 2-4 M620 433l1-7 2-7 M623 419l3-5 2-5 M623 419l-2-5-3-4 M628 450l1-9 2-10 M631 431l1-6-1-7 M631 418l-2-4 0-5 M631 418l0-4 1-4 M631 431l-1-7-3-6 M627 418l-3-5-3-5 M627 418l0-6 0-5 M685 473l5-8 7-8 M697 457l7-3 6-3 M710 451l5-2 5 0 M710 451l3-5 2-5 M697 457l4-6 3-8 M704 443l0-6-1-6 M704 443l2-6 2-5 M685 473l1-9 0-10 M686 454l-2-7-1-7 M683 440l-1-5-1-5 M683 440l3-5 3-5 M686 454l-2-7-3-8 M681 439l-4-4-4-5 M681 439l-3-3-3-4 M679 473l7-3 8-3 M694 467l2-6 3-5 M699 456l3-4 2-4 M699 456l2-4 1-4 M694 467l3-5 2-6 M699 456l0-4 0-3 M699 456l3-3 3-3 M679 473l2-9 3-9 M684 455l5-5 5-5 M694 445l1-6 1-6 M694 445l5-3 5-2 M684 455l0-6 1-7 M685 442l-1-5-1-5 M685 442l-1-5-1-4 M659 474l-1-7-2-8 M656 459l-3-3-3-4 M650 452l-3-3-2-3 M650 452l-2-3-2-3 M656 459l1-4 1-5 M658 450l-1-3-2-3 M658 450l0-3-1-4 M659 474l5-6 4-6 M668 462l1-5 2-5 M671 452l0-3 1-4 M671 452l2-3 1-4 M668 462l2-4 2-5 M672 453l2-3 3-3 M672 453l1-4 1-3 M629 478l-6-9-4-9 M619 460l0-7 1-8 M620 445l2-5 2-5 M620 445l-3-5-4-5 M619 460l-5-5-5-6 M609 449l-5-4-5-4 M609 449l-3-6-2-6 M629 478l-8-7-8-7 M613 464l-7-2-7-1 M599 461l-3-5-2-4 M599 461l-5-2-4-2 M613 464l-9 0-8-2 M596 462l-5-1-6-1 M596 462l-5-3-6-3 M713 557l6 2 6 2 M725 561l4 1 4 1 M733 563l3-1 3-1 M733 563l3-2 2-2 M725 561l3-2 3-3 M731 556l2-1 3-1 M731 556l0-3 0-3 M713 557l4-5 5-5 M722 547l3-4 3-4 M728 539l2-2 3-2 M728 539l1-4 0-3 M722 547l5-2 4-4 M731 541l2-3 2-2 M731 541l4-2 3-1 M714 552l5-7 4-7 M723 538l1-6 1-6 M725 526l0-5 0-4 M725 526l1-4 1-5 M723 538l5-4 5-4 M733 530l0-5-1-5 M733 530l4-2 3-4 M714 552l6-5 8-3 M728 544l4-4 3-4 M735 536l3-3 2-3 M735 536l3-2 3-3 M728 544l4-3 3-4 M735 537l3-2 3-3 M735 537l3-3 3-4 M714 569l7-1 6 0 M727 568l3-4 2-5 M732 559l2-3 2-3 M732 559l2-2 1-3 M727 568l4-2 4-2 M735 564l4 0 3 0 M735 564l2-3 2-2 M714 569l6 4 6 3 M726 576l5 2 5 1 M736 579l4-2 3-1 M736 579l4 0 4-1 M726 576l5-1 5 0 M736 575l3-2 4-2 M736 575l2-3 2-3 M716 554l5-6 5-6 M726 542l3-5 3-5 M732 532l3-2 4-2 M732 532l4-2 2-3 M726 542l1-6 0-5 M727 531l0-4 0-3 M727 531l1-4 1-4 M716 554l6-6 6-5 M728 543l5-5 5-5 M738 533l3-2 3-4 M738 533l3-2 4-2 M728 543l6-2 5-1 M739 540l4-1 4 1 M739 540l2-4 2-3 M694 474l5-7 6-8 M705 459l0-7-1-6 M704 446l-1-4-1-4 M704 446l1-4 0-4 M705 459l3-5 4-5 M712 449l2-4 2-3 M712 449l2-4 2-4 M694 474l8-4 9-3 M711 467l6-2 6-3 M723 462l1-4 2-4 M723 462l3-3 4-2 M711 467l4-6 5-6 M720 455l-1-5 0-6 M720 455l4-3 4-3 M692 474l1-9 1-9 M694 456l-4-6-4-5 M686 445l0-4 0-5 M686 445l-3-3-3-2 M694 456l0-7-1-6 M693 443l-3-3-3-2 M693 443l0-4 1-4 M692 474l6-6 7-5 M705 463l2-6 3-6 M710 451l2-4 2-4 M710 451l-1-4-1-5 M705 463l2-6 1-6 M708 451l2-5 1-5 M708 451l0-5 0-4 M712 496l9-5 9-5 M730 486l8-1 8-1 M746 484l5 0 6-1 M746 484l5-2 5-3 M730 486l3-8 1-7 M734 471l0-7 0-6 M734 471l2-5 1-6 M712 496l9-1 10-1 M731 494l4-5 4-6 M739 483l3-3 3-4 M739 483l2-4 3-4 M731 494l6-3 6-5 M743 486l1-5 0-5 M743 486l4-3 4-4 M690 468l6-9 9-8 M705 451l1-8 1-9 M707 434l1-7 3-6 M707 434l2-7 2-6 M705 451l2-7 2-8 M709 436l4-4 2-5 M709 436l0-5 0-5 M690 468l5-10 6-8 M701 450l1-8 2-8 M704 434l1-7 1-6 M704 434l0-7 1-6 M701 450l0-8 1-6 M702 436l0-5 1-4 M702 436l4-5 4-3 M356 654l-4-3-4-2 M348 649l-4-2-2-3 M348 649l-3-1-3-2 M356 654l-2-4-3-4 M351 646l-2-2-3-1 M351 646l0-3-1-3 M352 659l-5-3-6-3 M341 653l-3-4-3-3 M341 653l-5 0-5-2 M352 659l-5-3-6-3 M341 653l-1-5-1-4 M341 653l-3-4-4-2 M373 629l-4-5-3-5 M366 619l-4-2-4-3 M366 619l-1-4-2-4 M373 629l-3-4-4-4 M366 621l-3-3-3-2 M366 621l-2-3-3-2 M365 629l1-5 0-6 M366 618l1-4 1-3 M366 618l-1-4-1-4 M365 629l-1-5-3-5 M361 619l-3-2-4-2 M361 619l0-4 1-4 M408 601l-2-5-2-5 M404 591l-1-3 0-4 M404 591l-1-3-2-4 M408 601l2-5 1-5 M411 591l2-4 1-4 M411 591l1-4 1-4 M415 603l5-2 6-2 M426 599l4-2 3-3 M426 599l4-1 4-1 M415 603l1-6 2-5 M418 592l3-4 3-3 M418 592l-3-4-3-4 M390 610l-3-5-2-5 M385 600l-2-3-2-4 M385 600l-1-4-1-4 M390 610l4-5 4-4 M398 601l4-2 4-2 M398 601l3-3 3-2 M384 609l-4-5-4-6 M376 598l-4-2-4-2 M376 598l0-5 1-5 M384 609l-4-4-3-3 M377 602l-2-3-1-4 M377 602l-3-4-1-3 M435 603l4-7 4-6 M443 590l1-5 0-5 M443 590l4-3 3-4 M435 603l6-4 5-3 M446 596l4 0 4 0 M446 596l3-4 3-3 M420 594l-2-7-3-7 M415 580l-2-5-3-4 M415 580l0-6 0-5 M420 594l-4-6-2-7 M414 581l0-5 1-4 M414 581l-2-5-2-4 M410 598l-2-5-1-5 M407 588l-2-3-1-3 M407 588l0-4-2-4 M410 598l2-5 2-5 M414 588l1-4 0-4 M414 588l2-5 2-4 M421 606l5 0 5-1 M431 605l2-2 2-3 M431 605l2-3 3-2 M421 606l4-3 4-3 M429 600l4-1 4 0 M429 600l2-2 2-3 M448 616l5-2 6-2 M459 612l5 0 4 1 M459 612l5 0 5-2 M448 616l5-3 6-2 M459 611l3-4 3-2 M459 611l3-4 3-4 M437 603l1-7 1-6 M439 590l2-4 2-4 M439 590l-1-5-2-4 M437 603l1-7 2-6 M440 590l2-3 2-4 M440 590l3-4 2-5 M437 604l4-4 4-5 M445 595l3-2 3-3 M445 595l2-3 3-3 M437 604l1-6 2-5 M440 593l1-5 0-4 M440 593l-1-4 0-4 M429 601l3-5 2-5 M434 591l-1-3-1-4 M434 591l-2-4-1-3 M429 601l-2-6-2-5 M425 590l-3-3-3-2 M425 590l-4-2-4-1 M294 626l-7 0-7-2 M280 624l-5 2-5 2 M280 624l-4-2-3-1 M294 626l-6 0-6-1 M282 625l-4-1-4 0 M282 625l-4-1-3-1 M300 614l-4-6-5-6 M291 602l-1-5-2-5 M291 602l-4-3-2-5 M300 614l-3-6-1-7 M296 601l-1-4-2-4 M296 601l-3-4-4-4 M288 628l-7-2-8 0 M273 626l-4-3-3-4 M273 626l-6-1-5-2 M288 628l-6-5-6-5 M276 618l-1-5-1-5 M276 618l-3-5-3-4 M291 621l-2-8 1-9 M290 604l-1-6-2-6 M290 604l1-5 1-6 M291 621l-6-7-5-7 M280 607l-2-6-2-7 M280 607l-1-6-3-6 M341 556l-3-6-3-5 M335 545l0-5 1-5 M335 545l-1-4 0-5 M341 556l-1-6-1-6 M339 544l-4-4-3-3 M339 544l1-4 2-4 M357 550l3-6 2-6 M362 538l-2-4-2-5 M362 538l1-4 1-4 M357 550l1-7 1-8 M359 535l0-6 0-6 M359 535l0-6 2-5 M365 554l1-6 0-6 M366 542l1-3 2-3 M366 542l0-4-1-4 M365 554l0-6-1-5 M364 543l0-4-1-4 M364 543l1-4 0-4 M363 554l-2-6-4-5 M357 543l-1-5-1-5 M357 543l-2-5-1-5 M363 554l0-7-1-6 M362 541l-2-5-2-5 M362 541l-1-5-1-6 M403 533l-2-6-2-7 M399 520l-2-5-2-4 M399 520l-3-4-2-3 M403 533l-3-5-4-6 M396 522l0-4 0-4 M396 522l-3-2-3-3 M408 532l-3-5-3-5 M402 522l-3-2-3-3 M402 522l-1-4-1-3 M408 532l-4-4-4-3 M400 525l-4-1-3-1 M400 525l-4-1-3-1 M415 529l-5-5-4-4 M406 520l-1-4-2-5 M406 520l-5-1-4 0 M415 529l1-7 1-7 M417 515l0-4-1-5 M417 515l-4-3-3-3 M406 532l-4-6-6-4 M396 522l-4-3-4-1 M396 522l-2-5-2-4 M406 532l-1-6-3-6 M402 520l1-5 1-4 M402 520l-2-3-3-3 M411 526l-1-7 0-7 M410 512l2-5 3-4 M410 512l1-6 0-6 M411 526l5-4 4-5 M420 517l5 0 4-1 M420 517l4-2 5-1 M414 529l3-7 1-8 M418 514l-1-5-1-5 M418 514l1-4 1-5 M414 529l3-7 2-7 M419 515l-1-5-2-4 M419 515l-1-5-1-6 M362 545l-3-7-3-7 M356 531l-4-3-2-4 M356 531l-4-2-5-2 M362 545l-6-2-5-2 M351 541l-2-5-1-4 M351 541l-3-3-1-4 M354 552l-8-4-8-3 M338 545l-5-4-5-4 M338 545l-6-4-5-4 M354 552l-9-2-8-2 M337 548l-4-4-3-5 M337 548l-6-2-6-1 M359 530l-5-5-6-5 M348 520l-2-4-4-3 M342 513l-3-2-2-2 M342 513l-2-3-2-2 M348 520l-3-4-4-3 M341 513l-3-3-3-2 M341 513l-1-4-2-3 M359 530l-3-7-2-7 M354 516l-1-4-3-4 M350 508l1-4 1-3 M350 508l-1-4-2-3 M354 516l0-5-2-5 M352 506l-1-4 0-3 M352 506l1-3 0-4 M363 530l0-8-1-8 M362 514l-1-7 0-6 M361 501l-1-5-2-4 M361 501l-3-4-1-4 M362 514l3-6 3-5 M368 503l-1-5-1-5 M368 503l1-5 1-4 M363 530l2-7 2-6 M367 517l-1-5-1-5 M365 507l1-3 2-3 M365 507l1-3 0-3 M367 517l2-5 4-4 M373 508l-1-4-1-4 M373 508l3-2 4-1 M333 552l-3-4-3-4 M327 544l-1-4-1-3 M325 537l-2-3 0-2 M325 537l-1-3-1-2 M327 544l-2-3-2-3 M323 538l-1-1-1-2 M323 538l0-2 0-2 M333 552l-4-4-3-5 M326 543l-2-4-1-3 M323 536l0-3 1-3 M323 536l0-3 0-3 M326 543l0-4 2-4 M328 535l-1-3 0-3 M328 535l2-3 1-2 M330 557l-7-3-6-2 M317 552l-5-1-6 0 M306 551l-3-2-4-2 M306 551l-4-1-4 0 M317 552l-4-4-3-4 M310 544l-4-1-3-3 M310 544l-4-1-3-2 M330 557l-7-3-7-1 M316 553l-5 0-5-1 M306 552l-3-2-3-1 M306 552l-3-2-4-3 M316 553l-5-1-6-1 M305 551l-3-1-4-1 M305 551l-1-4-2-3 M297 623l-7 1-7 1 M283 625l-3-4-5-3 M275 618l0-4-1-4 M275 618l-3-2-3-3 M283 625l-5 0-5 2 M273 627l-4-2-4-3 M273 627l-4 0-4 1 M297 623l-6 4-6 3 M285 630l-4 3-4 4 M277 637l-2 3-2 3 M277 637l-3 2-3 3 M285 630l-4-2-4-2 M277 626l-3-1-2-2 M277 626l-2-2-2-2 M300 623l-6 0-6 0 M288 623l-3-4-3-4 M282 615l0-3 0-4 M282 615l1-3 1-3 M288 623l-4-2-3-2 M281 619l0-3 1-3 M281 619l-2-3-2-2 M300 623l-6 1-6 2 M288 626l-2-3-3-2 M283 621l-2-2-2-2 M283 621l-2-2-2-2 M288 626l-4 1-5 1 M279 628l-3-1-3-1 M279 628l-3 0-3 0 M294 632l-8-4-8-3 M278 625l-2-6-1-6 M275 613l-2-4-3-4 M275 613l2-5 2-4 M278 625l-3-5-3-5 M272 615l-3-2-2-2 M272 615l-1-4-1-3 M294 632l-7 5-9 4 M278 641l-6-1-6-1 M266 639l-2-3-3-3 M266 639l-3-2-3-3 M278 641l-6-1-7-3 M265 637l-4 0-5-1 M265 637l-4-2-5-2 M296 628l-7-5-6-5 M283 618l-3-5-2-6 M278 607l-1-5-2-3 M278 607l-3-5-2-4 M283 618l-1-5-2-5 M280 608l-3-4-2-3 M280 608l1-5 1-4 M296 628l-7 2-7 2 M282 632l-5 1-5 1 M272 634l-4-1-3 1 M272 634l-3 0-4 1 M282 632l-4-3-5-2 M273 627l-4-2-3-2 M273 627l-4-1-4-1 M251 528l-1-7-3-7 M247 514l-2-4-2-4 M243 506l0-4 1-4 M243 506l-4-2-3-1 M247 514l-3-4-3-4 M241 506l-2-4-1-3 M241 506l-3-2-3-3 M251 528l-4-6-2-7 M245 515l-2-5-1-6 M242 504l-3-3-2-3 M242 504l0-4 2-4 M245 515l-2-4-3-4 M240 507l-2-3-3-2 M240 507l1-3 2-3 M249 533l-3-7-3-6 M243 520l-2-5-2-4 M239 511l-1-3-2-3 M239 511l1-3 0-4 M243 520l-2-4-3-4 M238 512l-3 0-2-1 M238 512l-2-1-3-2 M249 533l-3-6-4-5 M242 522l-1-5-1-4 M240 513l0-3-1-4 M240 513l1-3 0-3 M242 522l-1-5-1-4 M240 513l-1-4-2-3 M240 513l-3-2-3-2 M259 511l-3-6-3-7 M253 498l-2-5-1-6 M250 487l0-4 1-4 M250 487l0-4-1-3 M253 498l-3-5-3-4 M247 489l-2-4-1-3 M247 489l-1-4 0-4 M259 511l-7-3-7-4 M245 504l0-6-1-5 M244 493l0-4 0-4 M244 493l-2-3-1-4 M245 504l-2-5-3-4 M240 495l1-4 0-4 M240 495l0-4 0-4 M264 504l-6-5-7-5 M251 494l-2-5-2-6 M247 483l1-3 2-3 M247 483l1-3 1-4 M251 494l-5-2-6-3 M240 489l-3 0-4 0 M240 489l-3-3-4-3 M264 504l-3-7-4-7 M257 490l-1-5-1-6 M255 479l2-3 2-3 M255 479l-2-2-3-3 M257 490l0-6 0-6 M257 478l0-4-2-3 M257 478l-1-4-1-4 M335 453l5-6 7-5 M347 442l4-3 4-3 M355 436l1-4 1-4 M355 436l4-1 4 0 M347 442l5-2 6-3 M358 437l3-4 4-3 M358 437l4-2 5-2 M335 453l-1-8 1-8 M335 437l4-5 3-5 M342 427l1-3 1-4 M342 427l2-3 3-3 M335 437l4-4 4-4 M343 429l1-4 0-3 M343 429l1-3 0-4 M335 452l4-8 4-7 M343 437l5-3 4-4 M352 430l2-2 2-3 M352 430l2-3 2-3 M343 437l2-6 2-6 M347 425l3-3 4-3 M347 425l3-3 3-4 M335 452l-4-7-3-8 M328 437l-4-5-5-4 M319 428l-1-4 0-4 M319 428l-2-4-1-4 M328 437l0-6-2-7 M326 424l-1-3-2-4 M326 424l-1-4-1-4 M293 464l-6-6-6-5 M281 453l-7-2-6-1 M268 450l-4-3-4-3 M268 450l-4-3-5-2 M281 453l0-6 0-6 M281 441l2-5 1-4 M281 441l2-4 3-3 M293 464l-4-7-5-6 M284 451l-3-5-2-5 M279 441l0-4 1-4 M279 441l-1-4 1-5 M284 451l-3-5-5-5 M276 441l-3-4-4-3 M276 441l-3-3-4-2 M292 461l-1-8-2-8 M289 445l2-5 3-4 M294 436l3-2 2-3 M294 436l1-4 1-4 M289 445l-4-4-4-4 M281 437l-1-4-2-4 M281 437l-4-2-3-3 M292 461l-4-9-5-8 M283 444l1-7 0-7 M284 430l-2-4-3-4 M284 430l0-4-1-5 M283 444l-1-6-1-5 M281 433l1-4 2-4 M281 433l1-4 2-4 M199 526l-5-7-3-6 M191 513l0-7 1-6 M192 500l0-4 0-5 M192 500l3-3 3-3 M191 513l-3-5-3-4 M185 504l-2-4 M201 535l-7-5-7-4 M257 419l-2-7-2-7 M253 405l-2-6-1-5 M250 394l-1-4-1-3 M250 394l-1-3 0-4 M253 405l1-5 1-5 M255 395l1-4 2-4 M255 395l-1-4-2-3 M257 419l-5-6-5-6 M247 407l-4-4-4-4 M239 399l-1-3-2-3 M239 399l-3-2-3-3 M247 407l-2-6-2-6 M243 395l0-4-1-5 M243 395l-1-4-2-4 M256 416l-3-7-4-7 M249 402l-1-5-1-5 M247 392l-2-4-2-3 M247 392l-2-3-1-4 M249 402l-3-4-2-5 M244 393l0-4-2-4 M244 393l-2-3-1-4 M256 416l-2-7-3-7 M251 402l-4-4-3-4 M244 394l-4-3-3-2 M244 394l-3-3-3-2 M251 402l-3-5-2-5 M246 392l0-4 1-4 M246 392l1-3 1-3 M302 406l2-9 1-9 M305 388l0-6-1-7 M304 375l-2-3-2-4 M304 375l-1-4-1-5 M305 388l0-6-1-7 M304 375l-2-4-2-4 M304 375l-3-4-4-3 M302 406l4-8 4-9 M310 389l-1-6-2-5 M307 378l-1-3-1-4 M307 378l-2-3-1-3 M310 389l1-6 0-7 M311 376l-1-4-2-4 M311 376l2-4 2-4 M299 403l-1-8 0-9 M298 386l0-6-1-6 M297 374l-3-4-3-3 M297 374l-1-5-1-5 M298 386l2-6 1-5 M301 375l2-4 1-4 M301 375l0-5 0-5 M299 403l6-7 6-7 M311 389l1-8 1-7 M313 374l1-5 1-4 M313 374l-1-6-2-5 M311 389l5-4 6-4 M322 381l4-3 4-3 M322 381l2-4 3-4 M218 355l4-11 5-9 M227 335l0-9 1-8 M228 318l3-6 3-5 M228 318l-2-5-4-4 M227 335l3-7 3-6 M233 322l0-4 0-5 M233 322l1-4 2-5 M218 355l1-10-1-10 M218 335l-1-6 M218 335l1-6 2-7 M221 322l3-4 M221 322l-2-4-2-4 M204 360l2-7 2-7 M208 346l-1-5-1-6 M206 335l1-3 1-3 M182 373l-1-8 M359 496l-4-7-2-7 M353 482l-3-5-3-4 M347 473l1-4 1-4 M347 473l-3-2-4-1 M353 482l-2-6-2-6 M349 470l1-3 2-4 M349 470l-1-4-1-3 M359 496l-6-5-5-4 M348 487l-2-4-1-4 M345 479l1-4 0-4 M345 479l0-4 0-3 M348 487l-4-3-5-2 M339 482l-2-2-2-3 M339 482l-2-1-3-2 M349 504l-6-2-6-4 M337 498l-5-2-5-1 M327 495l-3-2-3-2 M327 495l-2-4-2-3 M337 498l-4-3-5-2 M328 493l-2-4-2-3 M328 493l-2-3-2-3 M349 504l-1-7-3-7 M345 490l-3-4-1-6 M341 480l0-4-1-4 M341 480l0-3-1-4 M345 490l-5-3-5-3 M335 484l-3-2-4-3 M335 484l-3-2-4-1 M321 517l-5-9-4-9 M312 499l-6-4-4-5 M302 490l-2-3-3-4 M302 490l-2-4-2-5 M312 499l-6-6-4-6 M302 487l-4-4-3-5 M302 487l-4-4-3-5 M321 517l-8-6-7-7 M306 504l-3-6-2-7 M301 491l-4-4-3-5 M301 491l-3-4-4-4 M306 504l-6-2-6 0 M294 502l-4-2-4-2 M294 502l-4-1-4 0 M335 500l-7-7-6-8 M322 485l-4-6-5-5 M313 474l-3-4-4-3 M313 474l-1-4-3-4 M322 485l-5-5-5-4 M312 476l-3-4-3-5 M312 476l-1-5-1-5 M335 500l-8-6-9-5 M318 489l-6-3-6-2 M306 484l-3-3-3-4 M306 484l-5 0-4 0 M318 489l-6-4-7-4 M305 481l-5-2-5-1 M305 481l-5-2-5-3 M446 478l7-7 8-6 M461 465l5-5 3-7 M469 453l3-4 2-5 M469 453l3-4 2-4 M461 465l3-6 5-5 M469 454l0-5 0-5 M469 454l4-3 3-4 M446 478l6-7 7-6 M459 465l6-5 4-5 M469 455l5-3 5-1 M469 455l2-4 2-5 M459 465l3-6 3-5 M465 454l-1-5-1-4 M465 454l2-5 2-4 M436 474l6-6 7-5 M449 463l1-7 0-7 M450 449l3-3 4-4 M450 449l3-4 2-4 M449 463l5-3 5-3 M459 457l4-2 3-3 M459 457l2-3 3-3 M436 474l-3-7-2-8 M431 459l-1-6 0-5 M430 448l-3-3-3-3 M430 448l-2-3-2-3 M431 459l1-6 2-5 M434 448l3-3 3-4 M434 448l0-4 1-3 M428 474l-1-7 0-8 M427 459l0-5-1-6 M426 448l-2-2-3-3 M426 448l-1-3-2-4 M427 459l-4-5-3-4 M420 450l-2-5 0-4 M420 450l-4-3-3-3 M428 474l-4-6-4-6 M420 462l-2-5-1-4 M417 453l-1-4-2-3 M417 453l2-4 1-3 M420 462l-4-3-4-4 M412 455l-4-1-4-2 M412 455l-3-2-3-3 M424 474l2-8 3-9 M429 457l-1-5 0-6 M428 446l-1-3-1-4 M428 446l1-3 0-4 M429 457l2-6 1-6 M432 445l0-5 0-4 M432 445l1-4 2-4 M424 474l0-9 0-8 M424 457l0-6 0-6 M424 445l-1-3 0-4 M424 445l0-4-1-4 M424 457l1-6 2-6 M427 445l2-4 2-3 M427 445l-1-4-1-4 M364 375l-5-9-7-7 M352 359l1-8 1-7 M354 344l1-6 1-6 M354 344l2-5 1-5 M352 359l-4-5-4-5 M344 349l-2-5-3-4 M344 349l-1-4-1-5 M364 375l1-10 1-10 M366 355l-1-7-1-6 M364 342l-2-4-2-4 M364 342l-2-4-2-4 M366 355l-2-7-3-7 M361 341l-1-6-1-6 M361 341l0-6 0-6 M378 364l3-12 3-13 M384 339l-1-10 0-9 M383 320l-3-7-3-6 M383 320l2-8 1-7 M384 339l8-7 7-6 M399 326l6-5 4-7 M399 326l5-5 6-4 M378 364l-7-10-6-11 M365 343l0-8-1-7 M364 328l-1-6-1-6 M364 328l-3-5-3-4 M365 343l-1-9-3-8 M361 326l0-6 0-6 M361 326l-5-4-4-5 M350 378l-2-10-2-11 M346 357l-3-7-5-6 M338 344l0-5-1-4 M338 344l-2-5-3-5 M346 357l-1-7-2-8 M343 342l-3-5-4-4 M343 342l-2-5-1-5 M350 378l-7-9-8-9 M335 360l-7-2-8-2 M320 356l-4-4-4-3 M320 356l-5-1-4-1 M335 360l-7-5-8-3 M320 352l-3-6-2-5 M320 352l-6-2-6-1 M341 386l-8-6-8-6 M325 374l-6-3-5-4 M314 367l-4-4-4-3 M314 367l0-5-2-4 M325 374l-6-3-5-4 M314 367l-4-4-4-3 M314 367l-4-5-4-4 M341 386l-8-6-8-4 M325 376l-2-7-3-7 M320 362l1-6 1-6 M320 362l-4-3-4-2 M325 376l-5-5-4-3 M316 368l-3-3-3-3 M316 368l-2-4 0-4 M438 405l6-5 5-5 M449 395l4-5 3-5 M456 385l4-2 4 0 M456 385l3-3 2-3 M449 395l1-5 0-6 M450 384l-1-3-1-4 M450 384l2-3 1-4 M438 405l5-4 6-3 M449 398l4-3 4-4 M457 391l2-2 3-1 M457 391l2-2 3-3 M449 398l3-3 3-4 M455 391l1-3 1-3 M455 391l2-2 1-3 M432 403l-1-7 0-7 M431 389l-1-5-1-6 M429 378l0-4 0-4 M429 378l-1-3 0-3 M431 389l0-5 1-5 M432 379l-1-3 0-4 M432 379l0-4 1-3 M432 403l-4-6-6-5 M422 392l-1-5-1-5 M420 382l-3-2-4-1 M420 382l0-3 1-4 M422 392l-5-2-5-3 M412 387l-4-2-3-2 M412 387l-4 0-4-1 M419 401l-1-10 0-10 M418 381l0-8-1-8 M417 365l-2-5-3-4 M417 365l3-5 3-4 M418 381l5-6 3-7 M426 368l4-4 4-4 M426 368l3-4 2-5 M419 401l-8-4-6-6 M405 391l-3-5-3-4 M399 382l-4-3-3-3 M399 382l-4-1-3-2 M405 391l-1-7-1-6 M403 378l0-5-1-5 M403 378l2-5 2-5 M444 402l2-9 1-9 M447 384l-2-6 0-7 M445 371l0-4 1-5 M445 371l1-4 0-4 M447 384l-3-6-2-6 M442 372l-3-3-2-3 M442 372l0-4 0-5 M444 402l4-7 6-6 M454 389l-1-5-1-5 M452 379l-1-4-1-4 M452 379l-3-3-4-2 M454 389l0-5 1-6 M455 378l2-3 1-3 M455 378l-2-3-1-4 M442 344l5-6 4-6 M451 332l2-5 1-5 M454 322l2-3 1-4 M454 322l3-3 2-2 M451 332l0-6 2-5 M453 321l-1-3-1-4 M453 321l0-3 0-4 M442 344l3-7 4-6 M449 331l0-5 0-6 M449 320l0-4 0-3 M449 320l1-4 1-4 M449 331l5-4 4-3 M458 324l3-3 3-3 M458 324l2-4 3-3 M432 340l-3-6-3-6 M426 328l-1-4-2-5 M423 319l-1-3-2-3 M423 319l-2-2-2-2 M426 328l0-5 0-4 M426 319l1-4 1-3 M426 319l-1-4-1-3 M432 340l-2-7-2-6 M428 327l2-4 1-5 M431 318l3-2 2-3 M431 318l1-3 1-3 M428 327l0-5 0-5 M428 317l0-4 1-4 M428 317l2-3 2-2 M440 352l4-3 4-3 M448 346l2-3 3-3 M453 340l0-2 0-3 M453 340l2-1 2-1 M448 346l4-1 4-2 M456 343l1-2 2-2 M456 343l2-1 3-1 M440 352l5 0 5-1 M450 351l3-2 3-3 M456 346l2-1 1-2 M456 346l2-1 2 0 M450 351l4 1 5 0 M459 352l2 1 3 0 M459 352l2-2 3-3 M425 342l-2-6-3-5 M420 331l-2-4-3-2 M415 325l-2-3-2-3 M415 325l-1-3 0-3 M420 331l1-5 1-4 M422 322l-1-4-1-3 M422 322l1-3 2-3 M425 342l-3-5-2-5 M420 332l0-4-1-3 M419 325l1-2 1-3 M419 325l-1-2-1-3 M420 332l0-4-1-4 M419 324l1-2 2-3 M419 324l1-2 2-2 M420 303l3-8 3-9 M426 286l2-5 3-5 M431 276l2-4 2-4 M431 276l2-3 3-3 M426 286l4-5 4-5 M434 276l3-3 2-3 M434 276l3-2 3-3 M420 303l7-6 9-4 M436 293l6-4 7-2 M449 287l3-3 2-5 M449 287l2-5 1-5 M436 293l6-3 7-3 M449 287l4 0 5 1 M449 287l5-2 5-1 M387 306l-10-4-10-4 M367 298l-5-6-5-6 M357 286l-2-5-3-5 M357 286l-4-4-4-4 M367 298l-6-2-7-3 M354 293l-2-4-2-4 M354 293l-3-4-3-5 M387 306l-10-5-11-3 M366 298l-6-4-6-5 M354 289l-4-3-5-2 M354 289l-2-4-3-4 M366 298l-7-2-7-4 M352 292l-6-1-5-1 M352 292l-3-4-4-4 M416 304l-5-7-6-5 M405 292l-2-5-3-5 M400 282l0-4 2-4 M400 282l0-4 0-3 M405 292l1-7 2-6 M408 279l1-5 1-4 M408 279l2-3 2-4 M416 304l-4-7-3-8 M409 289l-1-5-1-6 M407 278l-2-3-2-3 M407 278l-3-4-3-3 M409 289l0-5 2-5 M411 279l0-4 0-3 M411 279l3-3 3-2 M429 305l5-9 4-8 M438 288l6-5 6-5 M450 278l5-2 5-3 M450 278l5-2 5-2 M438 288l4-6 2-7 M444 275l2-4 2-5 M444 275l2-4 3-4 M429 305l5-7 6-7 M440 291l1-7 1-6 M442 278l2-5 1-5 M442 278l0-5-1-5 M440 291l0-6 1-7 M441 278l1-4 0-4 M441 278l1-4 1-5 M302 242l4-9 2-8 M308 225l1-7 0-6 M309 212l-2-4 M308 225l4-6 3-6 M315 213l3-4 4-3 M315 213l3-3 M302 242l-3-9-2-9 M297 224l1-6 3-6 M301 212l1-3 2-4 M286 251l-2-10 M278 245l-10-3 M309 229l6-10 7-9 M322 210l1-8-1-7 M322 195l2-6 M309 229l-7-8 M331 242l-1-7 1-8 M331 227l-2-5-2-5 M327 217l-2-4-3-3 M327 217l1-4 0-3 M331 227l-3-4-2-4 M326 219l-4-2-3-1 M326 219l-2-4-1-4 M331 242l-7-5-6-5 M318 232l-2-5-3-4 M313 223l-1-4-1-4 M313 223l0-4 0-4 M318 232l-2-5-3-6 M313 221l-2-3-2-4 M313 221l0-4 1-4 M324 248l-2-7 0-7 M322 234l2-5 3-4 M327 225l3-2 1-3 M327 225l2-3 0-4 M322 234l-3-4-1-4 M318 226l-2-3-2-2 M318 226l-1-3-1-4 M324 248l-7-2-7-2 M310 244l-5-3-5-3 M300 238l-4-1-4 0 M300 238l-3-3-2-2 M310 244l-6-2-5-1 M299 241l-4-2-4-2 M299 241l-3-3-3-3 M353 247l-1-6-2-5 M350 236l0-4-1-4 M349 228l1-3 0-2 M349 228l0-2-1-3 M350 236l-2-3-2-3 M346 230l-1-3-1-2 M346 230l-3-2-2-2 M353 247l-4-4-4-4 M345 239l-1-4-2-4 M342 231l0-2 0-3 M342 231l0-2-1-3 M345 239l-3-2-3-2 M339 235l-3 0-3 0 M339 235l-3 0-3-1 M347 244l2-6 0-7 M349 231l1-5 0-4 M350 222l-2-3-2-3 M350 222l1-4 0-3 M349 231l2-4 2-4 M353 223l2-3 2-3 M353 223l-1-4 0-3 M347 244l-4-5-3-6 M340 233l-2-4-2-4 M336 225l-2-3-2-1 M336 225l-1-3-1-3 M340 233l0-5 0-5 M340 223l-2-3-1-3 M340 223l1-3 1-3 M423 216l1-8-1-9 M423 199l3-6 2-6 M428 187l-3-4 M423 199l2-6 2-7 M427 186l1-4 M427 186l2-4 M423 216l7-6 7-6 M437 204l4-4 4-4 M445 196l0-5 M445 196l0-5 0-4 M437 204l7-1 7 0 M451 203l4 2 4 3 M409 208l4-10 1-11 M414 187l0-9 M414 187l-1-7 M409 208l-4-8-4-9 M401 191l-2-6 M450 258l8 1 7 0 M465 259l6 0 5-1 M476 258l3-2 3-1 M476 258l4-1 4-1 M465 259l6 0 5-2 M476 257l4-3 3-3 M476 257l4-1 4 0 M450 258l9 1 8 0 M467 259l5-5 4-6 M476 248l5-3 4-3 M476 248l2-4 3-3 M467 259l5-3 5-3 M477 253l3 0 4-1 M477 253l2-4 2-4 M444 235l3-8 5-7 M452 220l-2-7-2-6 M448 207l-4-3-3-4 M448 207l-1-6 1-5 M452 220l0-6-1-6 M451 208l1-4 1-4 M451 208l2-4 2-3 M444 235l8-5 9-4 M461 226l5-5 6-3 M472 218l4-2 5-2 M472 218l3-3 3-3 M461 226l2-6 3-6 M466 214l4-3 4-3 M353 238l3-6 4-6 M360 226l4-5 2-5 M366 216l0-4 0-4 M366 216l3-3 3-3 M360 226l4-4 3-2 M367 220l2-3 2-3 M367 220l3-2 3-1 M353 238l-3-7-1-9 M349 222l2-5 3-6 M354 211l1-4 1-4 M354 211l3-4 2-5 M349 222l-2-5-2-5 M345 212l-1-5 0-4 M345 212l0-5 0-4 M347 243l-5-4-5-4 M337 235l-1-5-1-4 M335 226l1-2 1-3 M335 226l0-2 1-3 M337 235l-5-1-4 0 M328 234l-4-1-4-1 M328 234l-3 1-4 0 M347 243l2-6 2-6 M351 231l0-4 1-3 M352 224l-1-3-1-3 M352 224l0-3 0-3 M351 231l2-3 2-3 M355 225l2-2 2-2 M355 225l3-1 2-1 M349 232l-3-6-2-7 M344 219l2-5 2-5 M348 209l2-3 1-4 M348 209l0-4 1-4 M344 219l0-4-1-5 M343 210l2-2 2-3 M343 210l1-3 2-3 M349 232l3-6 2-8 M354 218l3-4 4-5 M361 209l2-3 1-3 M361 209l2-4 2-4 M354 218l-2-5-3-4 M349 209l-2-4-1-4 M349 209l-1-4-1-5 M349 232l0-7 1-7 M350 218l3-4 2-5 M355 209l1-3 1-4 M355 209l2-3 1-3 M350 218l1-4 0-5 M351 209l0-3 0-4 M351 209l2-3 2-3 M349 232l-1-7 0-7 M348 218l-2-4-3-4 M343 210l-3-1-3-1 M343 210l-1-3-1-3 M348 218l-1-5 0-5 M347 208l-2-3-3-4 M347 208l1-4 M407 227l-2-7 0-7 M405 213l-1-5 0-4 M404 204l-1-3-2-2 M404 204l0-3 1-3 M405 213l-1-5-1-4 M403 204l-2-3-2-2 M403 204l-2-3-1-3 M407 227l6-4 5-6 M418 217l5-2 4-2 M427 213l2-3 1-3 M427 213l3-2 2-2 M418 217l4-4 4-4 M426 209l4-2 3-2 M426 209l3-2 4-3 M411 227l8-3 8-3 M427 221l3-4 3-4 M433 213l3-1 3-2 M433 213l3-1 3-2 M427 221l3-4 4-4 M434 213l2-2 2-3 M434 213l1-3 2-2 M411 227l6-7 4-9 M421 211l3-5 4-5 M428 201l3-3 M428 201l2-4 M421 211l-1-7-2-7 M418 197l1-5 0-4 M418 197l0-5 1-5 M396 223l-5-6-5-7 M386 210l-1-5-2-5 M383 200l0-3 0-4 M383 200l-1-3-1-3 M386 210l-4-4-5-3 M377 203l-4 0-4 0 M377 203l-2-3-3-3 M396 223l2-7 2-8 M400 208l3-5 3-5 M406 198l2-3 3-3 M406 198l1-4 3-4 M400 208l3-3 4-4 M407 201l1-4 1-4 M407 201l4-1 3-2 M410 226l7-5 6-7 M423 214l1-7 1-7 M425 200l4-4 5-3 M423 214l3-7 3-6 M429 201l5-2 5-2 M429 201l2-5 1-5 M410 226l7-7 7-5 M424 214l3-7 2-7 M429 200l2-4 3-3 M429 200l0-4 1-5 M424 214l6-4 6-5 M436 205l5-3 4-4 M436 205l0-5 1-5 M468 555l2-6 1-7 M471 542l2-5 2-4 M475 533l2-4 2-3 M475 533l2-3 2-2 M471 542l3-4 3-3 M477 535l1-2 2-2 M477 535l3 0 3-1 M468 555l2-6 2-7 M472 542l-1-5 0-4 M471 533l1-4 1-3 M471 533l2-3 1-3 M472 542l-2-4-2-4 M468 534l-2-3-2-2 M468 534l-1-3 0-4 M471 553l2-6 4-6 M477 541l3-4 3-3 M483 534l0-4 1-3 M483 534l-1-3 1-3 M477 541l4-3 4-3 M485 535l2-2 3-1 M485 535l1-3 1-3 M471 553l5-4 5-5 M481 544l2-5 4-4 M487 535l-1-4-1-4 M487 535l1-3 3-2 M481 544l1-5 1-5 M483 534l1-4 0-4 M483 534l1-4 1-3 M486 556l1-7 0-8 M487 541l-3-4-3-4 M481 533l-2-3-1-4 M481 533l-1-3-2-4 M487 541l-1-5 0-5 M486 531l1-3 1-3 M486 531l-1-3-2-3 M486 556l-2-7-3-6 M481 543l1-5 3-5 M485 533l1-4 1-4 M485 533l1-4 2-3 M481 543l-5-4-3-4 M473 535l-4-2-3-2 M473 535l-1-4 0-3 M482 559l0-7 1-7 M483 545l-3-4-3-5 M477 536l-3-3-2-3 M477 536l-2-3-2-3 M483 545l1-6 3-5 M487 534l2-3 1-3 M487 534l2-3 1-4 M482 559l0-8-1-7 M481 544l-2-4-3-5 M476 535l-2-2-3-2 M476 535l1-3 1-4 M481 544l1-4 0-5 M482 535l0-4 0-3 M482 535l1-3 2-3 M448 546l-6-7-6-6 M436 533l0-5 0-6 M436 522l-1-3 0-4 M436 522l2-3 1-3 M436 533l-3-4-3-4 M430 525l0-4 2-4 M430 525l-1-3-1-4 M448 546l-3-8-3-8 M442 530l2-6 1-7 M445 517l-1-4-1-4 M445 517l2-3 2-4 M442 530l-1-6 0-5 M441 519l0-4 1-4 M441 519l-1-5 0-4 M451 540l-5-7-5-7 M441 526l-1-6-3-6 M437 514l-1-4-1-4 M437 514l0-4 1-5 M441 526l-2-7-2-6 M437 513l-3-4-3-3 M437 513l-4-3-5-2 M451 540l-8-4-6-6 M437 530l-4-6-4-5 M429 519l-3-4-3-3 M429 519l-2-4-2-4 M437 530l-2-6-1-6 M434 518l-2-3-2-4 M434 518l1-4 1-4 M510 528l4-9 4-9 M518 510l4-5 3-6 M525 499l3-4 3-4 M525 499l2-4 2-4 M518 510l0-8 0-8 M518 494l-4-5-3-5 M518 494l-2-5-1-6 M510 528l10-7 10-7 M530 514l0-8 1-9 M531 497l1-7 1-7 M531 497l-3-7-5-5 M530 514l8-2 9-2 M547 510l5-3 4-3 M547 510l6 0 5 0 M481 525l-2-10-2-9 M477 506l-3-7-3-7 M471 492l0-4 0-5 M471 492l-4-3-4-4 M477 506l-5-5-5-4 M467 497l-3-4-3-4 M467 497l0-5 0-4 M481 525l-7-7-6-8 M468 510l-7-4-7-4 M454 502l-6-2-5-1 M454 502l-5-4-5-3 M468 510l-1-7-1-7 M466 496l0-4-1-5 M466 496l1-5 0-5 M538 488l-2-6-3-6 M533 476l-1-4-1-5 M531 467l1-3 0-4 M531 467l-3-2-4-1 M533 476l-2-4-2-4 M529 468l-1-3-1-4 M529 468l-3-2-3-2 M538 488l-3-6-5-5 M530 477l-3-3-3-4 M524 470l-2-3-2-3 M524 470l-1-4 1-4 M530 477l-2-4-3-5 M525 468l-3-2-2-3 M525 468l-3-1-3-2 M558 490l0-8-1-7 M557 475l0-6-1-6 M556 463l-2-4-3-3 M556 463l1-4 1-3 M557 475l1-6 1-5 M559 464l1-4 2-4 M559 464l-1-5 0-4 M558 490l3-9 2-8 M563 473l1-6 1-6 M565 461l2-4 1-5 M565 461l2-3 1-4 M563 473l0-6-2-6 M561 461l1-4 0-4 M561 461l-2-3-3-3 M575 509l4-4 6-4 M585 501l4-3 4-3 M593 495l2-3 3-2 M593 495l3-2 3-2 M585 501l0-5 0-4 M585 492l2-3 2-2 M585 492l-2-4-1-3 M575 509l7-1 6-3 M588 505l1-5 2-5 M591 495l2-3 2-3 M591 495l0-3 0-3 M588 505l4-3 4-2 M596 500l2-3 1-2 M596 500l2-3 2-2 M581 518l5-6 6-5 M592 507l2-4 1-4 M595 499l2-2 2-2 M595 499l1-3 2-3 M592 507l5 0 5-1 M602 506l1-3 2-4 M602 506l3-1 2-1 M581 518l8-4 7-3 M596 511l3-6 1-6 M600 499l1-5 1-5 M600 499l1-4 0-5 M596 511l4-4 4-2 M604 505l1-3 1-3 M604 505l4-1 3-2 M565 475l5-7 4-7 M574 461l0-5-2-6 M572 450l-2-3-3-3 M572 450l1-3 1-4 M574 461l2-6 1-6 M577 449l3-3 3-3 M577 449l-1-4-1-5 M565 475l5-8 3-8 M573 459l5-4 6-5 M584 450l1-4 1-4 M584 450l4-1 4 0 M573 459l2-5 0-6 M575 448l-2-4-1-3 M575 448l1-4 1-3 M561 472l0-8 0-8 M561 456l-3-6-3-5 M555 445l0-4 1-4 M555 445l-3-4-2-4 M561 456l2-5 2-4 M565 447l0-4-1-3 M565 447l3-2 3-3 M561 472l-1-9 2-8 M562 455l-2-6-1-6 M559 443l-3-2-3-2 M559 443l2-4 3-3 M562 455l4-6 4-4 M570 445l5-1 4-1 M570 445l1-4 0-5 M572 475l7-4 8-2 M587 469l5-3 6-2 M598 464l3-3 2-2 M598 464l3-4 3-3 M587 469l5-2 6 0 M598 467l3-2 3-1 M598 467l3-3 3-2 M572 475l2-8 0-8 M574 459l0-6 0-5 M574 448l-1-4 0-4 M574 448l0-4-1-4 M574 459l0-6-1-6 M573 447l-1-4-2-3 M573 447l-2-4-2-4 M570 470l7-6 8-5 M585 459l7-4 6-4 M598 451l2-6 2-4 M598 451l2-6 1-5 M585 459l4-7 4-6 M593 446l4-4 4-4 M593 446l3-4 3-4 M570 470l-2-10 0-11 M568 449l-1-6 0-7 M567 436l1-4 2-4 M567 436l-1-5 0-5 M568 449l-3-6-4-5 M561 438l-1-4-2-5 M561 438l1-5 1-5 M474 385l-2-8-4-7 M468 370l-1-5-1-6 M466 359l0-4 0-4 M466 359l2-3 2-4 M468 370l1-6-1-6 M468 358l-2-4-2-3 M468 358l0-5 1-4 M474 385l7-8 8-6 M489 371l5-5 7-5 M501 361l4-3 5-3 M501 361l2-5 1-5 M489 371l4-5 6-3 M499 363l3-3 3-3 M499 363l3-3 4-2 M462 385l-2-9-2-9 M458 367l1-7 1-7 M460 353l-2-4-1-5 M460 353l3-5 2-5 M458 367l-4-6-2-6 M452 355l-3-4-3-4 M452 355l-2-5-3-4 M462 385l3-8 0-8 M465 369l3-5 2-6 M470 358l3-3 3-3 M470 358l-1-4 0-5 M465 369l1-5 0-6 M466 358l0-4 0-4 M466 358l1-3 1-4 M443 404l-7-6-8-5 M428 393l-7-2-7-3 M414 388l-3-4-3-5 M414 388l-4-3-5-2 M428 393l-5-5-6-5 M417 383l-4-4-4-4 M417 383l-2-5-2-5 M443 404l-3-8-1-9 M439 387l0-6 0-6 M439 375l-1-5-2-5 M439 375l0-5 0-5 M439 387l-2-6 0-6 M437 375l1-4 0-4 M437 375l-3-4-2-5 M442 399l-9-4-8-5 M425 390l-5-4-5-5 M415 381l-4-2-5-2 M415 381l-1-4-1-5 M425 390l-3-6-4-5 M418 379l-4-3-4-2 M418 379l-2-5-2-4 M442 399l-8-4-8-5 M426 390l-3-7-5-5 M418 378l-4-3-4-4 M418 378l-2-4-2-5 M426 390l-7-2-6-3 M413 385l-5 0-5-1 M413 385l-5-4-4-4 M468 385l-7-4-7-4 M454 377l-2-5-2-4 M450 368l1-4 2-4 M450 368l-2-3-2-3 M454 377l-4-5-4-4 M446 368l-2-4-2-3 M446 368l-4-3-4-2 M468 385l-7-4-8-3 M453 378l-2-6-2-5 M449 367l-2-4-1-4 M449 367l-4-2-4-2 M453 378l-2-5-2-5 M449 368l-3-3-3-2 M449 368l1-4 1-4 M478 377l-1-9-1-10 M476 358l-1-7-2-7 M473 344l1-5 0-4 M473 344l-2-4-2-4 M476 358l-2-5-1-6 M473 347l-3-4-4-3 M473 347l1-5 1-5 M478 377l-3-8-3-9 M472 360l1-6 2-6 M475 348l2-5 1-4 M475 348l3-4 3-3 M472 360l-3-5-4-6 M465 349l-1-4-1-5 M465 349l-2-5-1-5 M445 402l-3-8-3-8 M439 386l-2-6-3-5 M434 375l-1-4-1-4 M434 375l1-5 0-5 M439 386l-1-7 0-6 M438 373l-1-5-1-4 M438 373l1-4 2-4 M445 402l-5-8-6-9 M434 385l-2-7-4-6 M428 372l1-5-1-5 M428 372l-3-4-2-4 M434 385l-3-6-3-6 M428 373l-1-4-1-5 M428 373l0-5 0-5 M454 396l-9-6-8-7 M437 383l-6-4-6-2 M425 377l-5-3-5-1 M425 377l-4-4-2-5 M437 383l-4-5-6-4 M427 374l-2-4-2-4 M427 374l-3-3-3-4 M454 396l-1-9-3-8 M450 379l0-5 0-6 M450 368l-1-4 1-3 M450 368l-2-3-2-4 M450 379l0-5-1-6 M449 368l-2-3-3-3 M449 368l1-4 1-4 M615 421l8-2 8-1 M631 418l5-2 6-2 M642 414l4 1 4 1 M642 414l5-1 5-1 M631 418l3-5 5-4 M639 409l4-3 4-3 M639 409l3-3 3-2 M615 421l7-2 8-1 M630 418l7 0 6 1 M643 419l3-3 2-4 M643 419l4 1 4-1 M630 418l7 0 6 0 M643 418l4-1 4 0 M643 418l4 2 4 0 M604 407l4-8 3-8 M611 391l1-7 1-7 M613 377l0-6 1-5 M613 377l1-6 1-5 M611 391l-1-8 0-7 M610 376l0-5-1-5 M610 376l1-5 0-4 M604 407l3-8 3-8 M610 391l0-6 0-6 M610 379l1-4 1-3 M610 379l2-3 2-4 M610 391l1-7 0-7 M611 377l-1-5-1-6 M611 377l-1-5-1-6 M595 386l5-9 6-9 M606 368l6-6 6-4 M618 358l5-2 4-2 M618 358l3-5 4-4 M606 368l6-3 7-1 M619 364l4-2 4-1 M619 364l4 0 5 0 M595 386l8-7 7-10 M610 369l6-4 6-6 M622 359l4-5 2-6 M622 359l2-6 2-5 M610 369l5-6 7-6 M622 357l0-5 0-6 M622 357l3-5 3-4 M603 395l7-8 7-7 M617 380l5-3 6-3 M628 374l4-1 4-2 M628 374l4-2 4-2 M617 380l2-7 3-6 M622 367l2-4 3-4 M622 367l4-4 3-5 M603 395l5-9 5-8 M613 378l1-7 2-7 M616 364l1-6-1-5 M616 364l2-5 2-5 M613 378l0-6 1-6 M614 366l1-5 1-4 M614 366l2-4 2-4 M550 383l5-5 4-6 M559 372l4-2 4-3 M567 367l3-1 2-2 M567 367l3 0 3-1 M559 372l2-5 0-5 M561 362l0-3-1-4 M561 362l2-2 3-3 M550 383l1-7 1-7 M552 369l1-4-1-5 M552 360l2-3 1-4 M552 360l0-4-1-3 M552 369l-1-4 0-4 M551 361l1-3 0-3 M551 361l-1-3-2-2 M541 381l2-7 0-8 M543 366l0-7-1-6 M542 353l0-3 1-4 M542 353l2-4 3-3 M543 366l-1-7-1-6 M541 353l0-4 0-4 M541 353l-4-3-3-3 M541 381l2-7 2-7 M545 367l5-4 5-4 M555 359l2-3 3-4 M555 359l3-4 2-3 M545 367l-2-5-2-4 M541 358l0-3 0-3 M541 358l-1-3 0-3 M511 370l-5-8-6-7 M500 355l-3-6-3-6 M494 343l-1-4-1-5 M494 343l-2-4-1-5 M500 355l-3-7-4-6 M493 342l-4-3-4-2 M493 342l-2-5-3-4 M511 370l-6-8-4-9 M501 353l-5-5-5-5 M491 343l0-5-1-5 M491 343l-4-3-5-2 M501 353l-6-5-4-7 M491 341l1-6 0-6 M491 341l-4-5-4-4 M513 366l2-9 3-9 M518 348l2-6 2-6 M522 336l0-3 1-4 M522 336l2-3 3-3 M518 348l-1-8 0-7 M517 333l3-5 3-5 M517 333l3-5 1-5 M513 366l-1-9 1-10 M513 347l3-5 2-6 M518 336l3-5 1-5 M518 336l0-5 2-5 M513 347l-3-6-3-7 M507 334l0-5 0-5 M507 334l-1-4-2-4 M476 364l-4-9-4-10 M468 345l-6-3-5-4 M457 338l-4-1-5-1 M457 338l-4 0-5 0 M468 345l-3-7-2-7 M463 331l1-5 2-5 M463 331l-4-4-3-5 M476 364l-5-7-4-7 M467 350l-5-2-6-3 M456 345l-3-4-2-5 M456 345l-2-4-2-3 M467 350l-4-4-5-3 M458 343l-2-4-1-3 M458 343l-3-3-3-3 M462 372l-8-5-9-5 M445 362l-7 1-8-1 M430 362l-6-1-5 0 M430 362l-5-1-4-3 M445 362l-2-6-1-7 M442 349l0-4 0-5 M442 349l1-5 0-4 M462 372l1-9-2-8 M461 355l-1-6-2-5 M458 344l-2-4-2-3 M458 344l-3-3-2-3 M461 355l-2-5-1-5 M458 345l-2-3-2-3 M458 345l-2-3-2-4 M490 359l-3-9-4-8 M483 342l-3-6-5-6 M475 330l-3-3-4-3 M475 330l-3-2-4-3 M483 342l-1-7 0-6 M482 329l2-4 3-4 M482 329l1-4 1-5 M490 359l-1-10-1-9 M488 340l-2-6-2-6 M484 328l-3-3-2-3 M484 328l-3-3-3-3 M488 340l0-7-2-7 M486 326l-2-3-1-4 M486 326l-2-4-1-4 M508 361l5-7 4-8 M517 346l3-6 2-6 M522 334l3-4 3-3 M522 334l2-5 2-5 M517 346l6-3 5-4 M528 339l2-4 1-4 M528 339l2-5 2-5 M508 361l8-6 8-3 M524 352l4-7 4-6 M532 339l3-4 4-4 M532 339l3-3 3-4 M524 352l7-3 6-1 M537 348l3-4 4-3 M537 348l5 0 6 0 M791 524l6-1 7-1 M804 522l4-1 4-1 M812 520l1-2 1-3 M812 520l1-3 1-3 M804 522l5 0 4 0 M813 522l3-1 3-2 M813 522l4-1 4-1 M791 524l6-1 5-2 M802 521l4-1 3-1 M809 519l2-2 2-2 M809 519l3-1 2-2 M802 521l3-3 2-3 M807 515l2-2 1-3 M807 515l1-2 1-3 M794 529l4-4 5-3 M803 522l4-3 3-2 M810 517l2-3 1-3 M810 517l2-3 3-2 M803 522l3-3 3-4 M809 515l3-1 2-2 M809 515l-1-3 0-3 M794 529l4-5 4-4 M802 520l3-4 2-5 M807 511l2-2 3-3 M807 511l0-3 0-4 M802 520l4-2 5 0 M811 518l2 0 3 0 M811 518l3 0 3 0 M792 538l6 0 6 1 M804 539l4 2 4 2 M812 543l2-2 3-1 M812 543l2-1 3 0 M804 539l3-2 4-3 M811 534l2-2 3-2 M811 534l3-1 3-3 M792 538l6-1 6-2 M804 535l4-2 2-4 M810 529l2-3 1-2 M810 529l0-2 0-3 M804 535l4 0 4-2 M812 533l3 1 3 1 M812 533l2-1 2-2 M794 547l8-2 8-3 M810 542l4-4 3-4 M817 534l0-4-1-3 M817 534l2-4 1-3 M810 542l5-4 4-5 M819 533l2-4 2-5 M819 533l2-3 1-4 M794 547l9 1 8 0 M811 548l6-2 6-1 M823 545l4-3 2-3 M823 545l3-5 3-3 M811 548l4-4 5-4 M820 540l3-3 4-2 M820 540l2-4 2-3 M814 518l3-8 1-8 M818 502l-2-6-2-6 M814 490l1-4 1-4 M814 490l0-5 0-5 M818 502l5-4 M814 518l6-5 7-5 M827 508l5-2 5-3 M827 508l5-1 5-2 M837 505l2-3 M811 516l6-6 5-5 M822 505l4-4 3-4 M829 497l2-4 1-5 M822 505l3-5 M811 516l5-8 6-6 M822 502l3-5 2-6 M827 491l0-4-1-4 M827 491l0-4 M822 502l6-4 M807 520l9-1 8 1 M824 520l4-4 5-4 M833 512l3-2 3-2 M833 512l1-4 M824 520l5-2 6-1 M835 517l3-2 4-1 M835 517l3-2 4-3 M807 520l8 0 8 1 M823 521l5-1 5 0 M833 520l4 0 3 1 M833 520l4 1 3 1 M823 521l5 1 5 0 M833 522l4-1 4-2 M833 522l4 0 4 1 M809 520l6-7 5-6 M820 507l3-5 2-5 M825 497l-2-3-1-4 M820 507l2-6 1-6 M823 495l-2-4-3-3 M823 495l2-4 1-3 M809 520l8 1 8 0 M825 521l3-4 4-2 M832 515l4 0 3 0 M832 515l3-3 3-2 M825 521l4-4 4-3 M833 514l1-3 2-4 M833 514l3-3 3-3 M609 341l-6-8-6-7 M597 326l-3-6-3-5 M591 315l-3-2-4-2 M591 315l-2-4-2-4 M597 326l0-7-1-6 M596 313l2-4 3-3 M596 313l-1-4 0-4 M609 341l-1-10 2-10 M610 321l1-8 2-8 M613 305l1-5 2-5 M613 305l0-6 0-6 M610 321l5-5 3-5 M618 311l1-4 1-4 M618 311l3-4 4-3 M604 347l-2-9-2-8 M600 330l-1-6-2-5 M597 319l-1-4-1-3 M597 319l0-4-1-4 M600 330l-4-6-2-7 M594 317l-2-5-1-4 M594 317l-4-4-4-3 M604 347l-3-9-3-7 M598 331l-5-4-5-3 M588 324l-2-3-3-4 M588 324l-2-3-1-4 M598 331l-3-6-2-6 M593 319l-3-3-3-3 M593 319l1-4 1-4 M669 346l0-8-1-9 M668 329l-1-6-2-6 M665 317l-3-4-3-4 M665 317l-3-2-3-3 M668 329l1-6 1-5 M670 318l2-3 2-4 M670 318l2-3 1-4 M669 346l5-7 5-7 M679 332l4-4 3-4 M686 324l2-4 1-5 M686 324l4-3 4-2 M679 332l3-5 2-5 M684 322l-2-5-1-4 M684 322l3-4 3-3 M677 351l4-8 4-8 M685 335l-1-6-1-6 M683 323l-1-4-2-3 M683 323l2-4 1-5 M685 335l0-7-1-6 M684 322l-1-4-3-3 M684 322l0-5 0-4 M677 351l2-9 3-9 M682 333l4-4 3-6 M689 323l3-2 4-3 M689 323l4-2 4-2 M682 333l0-6-1-7 M681 320l-2-4-2-4 M681 320l-1-4-1-4 M515 373l2-10 1-9 M518 354l4-5 2-6 M524 343l4-3 4-2 M524 343l1-5 1-5 M518 354l5-5 3-7 M526 342l3-3 5-2 M526 342l-1-5 0-4 M515 373l-5-8-6-7 M504 358l-1-7-1-7 M502 344l0-6 1-5 M502 344l-3-4-3-4 M504 358l-4-4-4-5 M496 349l-4-3-4-3 M496 349l-3-2-4-1 M508 396l-10-2-9-4 M489 390l-5-5-5-5 M479 380l-1-5-1-4 M479 380l-5-1-4-3 M489 390l-7 0-7 1 M475 391l-4-3-3-4 M475 391l-4-2-4-2 M508 396l-10 0-9-2 M489 394l-7 0-6-1 M476 393l-4-2-4-1 M476 393l-4-1-4 0 M489 394l-7 1-7-1 M475 394l-5 0-5-1 M475 394l-5 0-5-1 M539 344l0-9 1-9 M540 326l0-7 1-6 M541 313l1-5 0-4 M541 313l2-5 1-4 M540 326l5-4 4-5 M549 317l4-2 3-3 M549 317l3-3 2-4 M539 344l-9-2-10-3 M520 339l-3-5-3-6 M514 328l-3-3-3-2 M514 328l0-5 0-5 M520 339l-8 0-8-1 M504 338l-4-4-3-4 M504 338l-6-1-6 0 M541 344l-3-10-4-10 M534 324l0-8 0-8 M534 308l0-5 1-5 M534 308l-2-5-2-6 M534 324l-5-6-6-6 M523 312l-3-5-4-4 M523 312l-5-2-6-2 M541 344l-3-9-4-8 M534 327l-2-6-1-7 M531 314l-2-4-3-5 M531 314l2-5 2-4 M534 327l-3-6-2-7 M529 314l-1-5 0-6 M529 314l-4-4-2-5 M645 312l7-1 8 0 M660 311l5-1 5-2 M670 308l2-3 1-4 M670 308l2-3 2-3 M660 311l4 1 5 1 M669 313l3 0 3 0 M669 313l3 1 2 1 M645 312l5-3 5-4 M655 305l2-4 1-5 M658 296l3-2 3-1 M658 296l1-3 1-4 M655 305l4-1 4 0 M663 304l3 0 3 0 M663 304l3-2 2-1 M645 315l7-1 6-1 M658 313l4-3 4-3 M666 307l2-3 2-3 M666 307l1-2 2-3 M658 313l4-4 5-3 M667 306l2-3 2-2 M667 306l3-1 3-1 M645 315l6 3 5 4 M656 322l2 4 2 4 M660 330l2 3 2 3 M660 330l4 1 3 1 M656 322l3 3 3 4 M662 329l4 0 4 0 M662 329l3 0 3 0 M643 314l6-1 6-2 M655 311l3-2 3-3 M661 306l2-2 2-2 M661 306l2-3 1-2 M655 311l4-1 5-1 M664 309l3-2 3-2 M664 309l3-1 3-2 M643 314l5-2 5-1 M653 311l3 0 4-1 M660 310l2 0 2-1 M660 310l1-1 1-2 M653 311l3-1 4-1 M660 309l2-1 3 0 M660 309l2-1 2 0 M642 319l5 2 6 1 M653 322l4-3 2-4 M659 315l3-3 3-2 M659 315l2-3 1-4 M653 322l4 1 4 2 M661 325l3 0 2 1 M661 325l3 2 2 1 M642 319l6-2 6-2 M654 315l4-2 4-2 M662 311l1-2 1-3 M662 311l1-2 2-2 M654 315l4 1 5 1 M663 317l2 0 3 0 M663 317l2 1 3 0 M595 282l-2-5-2-6 M591 271l1-5 1-4 M593 262l-1-3-1-4 M593 262l1-3 1-3 M591 271l0-5 0-4 M591 262l1-3 1-3 M591 262l1-4 2-3 M595 282l-1-5-2-6 M592 271l-1-4-1-4 M590 263l-2-2-3-2 M590 263l-1-4-1-3 M592 271l2-3 2-4 M596 264l-1-2-2-3 M596 264l0-2 0-2 M591 281l0-6-1-6 M590 269l2-4 1-4 M593 261l3-3 1-3 M593 261l2-3 0-4 M590 269l-1-5-2-3 M587 261l-2-3 0-3 M591 281l2-8 2-7 M595 266l-1-5-1-5 M593 256l-1-4-1-3 M593 256l0-4-1-4 M595 266l0-5 0-5 M595 256l2-4 2-3 M595 256l-2-4-1-4 M607 275l-2-6-1-6 M604 263l1-5 2-4 M607 254l1-3 1-3 M607 254l1-2 2-3 M604 263l0-5 0-4 M604 254l2-3 1-3 M604 254l0-3-1-3 M607 275l5-6 6-6 M618 263l3-5 4-4 M625 254l3-2 4-1 M625 254l3-2 4-2 M618 263l1-6 2-5 M621 252l3-4 2-4 M621 252l1-5 2-4 M605 277l0-7 1-7 M606 263l2-4 3-4 M611 255l1-3 2-3 M611 255l-1-4 0-3 M606 263l-2-5-2-4 M602 254l-1-3-1-4 M602 254l-2-3-1-3 M605 277l5-5 6-4 M616 268l0-5 2-5 M618 258l1-3 2-4 M618 258l1-4 0-3 M616 268l3-4 3-5 M622 259l3-2 3-3 M622 259l-1-3-1-3 M470 248l-7-1-8-2 M455 245l-5-1-5 0 M445 244l-2-3-2-2 M445 244l-4 1-3 2 M455 245l-5-3-4-4 M446 238l-1-4-2-3 M446 238l-4-2-4-2 M470 248l-7-2-8-2 M455 244l-5-3-5-3 M445 238l-5 1-4 0 M445 238l-4-1-4-1 M455 244l-5-1-5 0 M445 243l-3 1-4 2 M445 243l-2-2-3-2 M471 258l-7 0-6-1 M458 257l-5-2-5-2 M448 253l-2-4-2-2 M448 253l-3-2-4-1 M458 257l-5 0-4 1 M449 258l-3 1-3 0 M449 258l-3 1-3 2 M471 258l-7-3-6-4 M458 251l-5-1-5-1 M448 249l-2-3-2-3 M448 249l-4-1-3 0 M458 251l-3-4-3-3 M452 244l-1-4 0-4 M452 244l-2-3-2-3 M479 246l-7-2-6-2 M466 242l-2-5-3-5 M461 232l0-3-1-3 M461 232l1-3-1-3 M466 242l-2-5-2-4 M462 233l-1-2-1-3 M462 233l0-2 2-3 M479 246l-4-6-5-6 M470 234l-2-4-2-5 M466 225l-3-3-3-3 M466 225l0-4 0-3 M470 234l-1-4-2-4 M467 226l1-3 0-3 M467 226l-1-3-1-3 M489 234l2-6 3-7 M494 221l0-5 M494 221l2-4 2-4 M498 213l3-1 M489 234l-4-4-5-4 M480 226l-1-5-2-5 M477 216l0-3 0-3 M477 216l-3-2 M480 226l-4-2-4-1 M472 223l-2-3-2-3 M472 223l0-3 0-3 M240 585l-6-9-5-9 M229 567l-1-6-2-7 M226 554l1-5 1-6 M226 554l3-4 3-3 M229 567l1-6 1-7 M231 554l1-4 0-5 M231 554l2-4 2-5 M240 585l-6-11-4-10 M230 564l-3-7-3-7 M224 550l-3-3-4-4 M224 550l-1-5-1-5 M230 564l-4-7-3-8 M223 549l-2-4-3-4 M223 549l0-5 1-6 M255 575l-4-9-3-10 M248 556l-3-6-2-6 M243 544l-5-4-5-2 M243 544l-3-5-4-5 M248 556l2-7 2-8 M252 541l1-5 1-5 M252 541l3-4 5-2 M255 575l1-9 0-10 M256 556l2-6 1-7 M259 543l2-4 3-5 M259 543l-3-4-3-5 M256 556l1-6-1-7 M256 543l-2-3-3-3 M256 543l-3-4-2-4 M260 570l-3-7-4-6 M253 557l-1-6 0-5 M252 546l-2-3-3-2 M252 546l-2-3-2-4 M253 557l-1-5-2-5 M250 547l0-3 1-3 M250 547l-2-3-2-3 M260 570l-4-7-4-7 M252 556l-6-2-5-2 M241 552l-5-1-4-1 M241 552l-1-4-1-4 M252 556l-4-4-3-4 M245 548l-1-4-1-4 M245 548l0-4 0-4 M248 579l-8-1-7-2 M233 576l-4-4-4-4 M225 568l-2-3-1-4 M225 568l1-3 2-4 M233 576l-3-6-4-5 M226 565l-3-2-4-2 M226 565l-3-2-4-3 M248 579l-7-6-9-4 M232 569l-7 0-7-1 M218 568l-3-5-4-4 M218 568l-5-1-5-2 M232 569l-7 1-8 0 M217 570l-5 1-5 1 M217 570l-3-5-3-5 M245 617l-9 1-9-2 M227 616l-5-6-5-4 M217 606l-2-4-1-5 M217 606l-4-5-3-4 M227 616l-5-4-5-4 M217 608l-1-5 0-4 M217 608l0-5 0-5 M245 617l-9 4-10 4 M226 625l-6-5-6-5 M214 615l-3-4-3-3 M214 615l0-5 0-6 M226 625l-6 0-7 0 M213 625l-4 0-5 0 M213 625l-5 1-5 0 M248 628l-8 5-9 4 M231 637l-5 1-6 1 M220 639l-4-1-4-2 M220 639l-4 2-4 1 M231 637l-7 0-7 2 M217 639l-5-1-5 0 M217 639l-5-4-3-4 M248 628l-8-5-8-4 M232 619l-4-6-3-6 M225 607l-3-3-3-4 M225 607l-3-3-3-4 M232 619l-6-3-7-1 M219 615l-4-2-4-2 M219 615l-5 2-6 0 M244 606l-8 0-7 1 M229 607l-4-2-5-2 M220 603l-3-3-2-2 M220 603l-4-1-2-3 M229 607l-5 0-4 0 M220 607l-4-1-3 0 M220 607l-3-1-3-1 M244 606l-6-4-5-6 M233 596l0-5 0-5 M233 586l-1-4-2-3 M233 586l1-5 2-3 M233 596l-1-5-1-4 M231 587l1-3 2-3 M231 587l0-3-1-3 M242 605l-7-6-7-4 M228 595l-5-2-4-2 M219 591l-4-1-4 0 M219 591l-4-1-4-2 M228 595l-4-3-5-4 M219 588l-1-3-1-4 M219 588l-1-3-1-4 M242 605l-9 1-8 3 M225 609l-6 1-6 0 M213 610l-3-3-4-3 M213 610l-3-2-2-3 M225 609l-5-1-5-1 M215 607l-4 0-4 0 M215 607l-2-3-1-3 M182 568l-8-2-7-2 M182 568l-7-1 M183 577l-6 3-7 4 M170 584l-4-4-3-4 M208 471l-1-8 1-8 M208 455l-1-6-1-6 M206 443l-3-4-2-4 M206 443l1-5 1-4 M208 455l-2-6-1-6 M205 443l1-5 1-4 M205 443l-2-4-2-3 M208 471l-7-5-7-5 M194 461l-2-5-2-6 M190 450l-1-4 M209 467l-8-7-8-7 M193 453l-5-6-3-8 M185 439l-5-4 M209 467l-3-8-2-8 M204 451l-3-5-2-5 M199 441l0-3 1-4 M199 441l0-3 1-3 M204 451l-3-6-5-5 M196 440l-2-5-3-4 M196 440l0-4-1-4 M259 455l-1-10 1-10 M259 435l0-7 0-7 M259 421l2-4 3-3 M259 421l1-5 1-4 M259 435l1-6 3-7 M263 422l2-4 3-3 M263 422l1-5 2-5 M259 455l-2-9-1-9 M256 437l3-5 4-5 M263 427l3-4 3-3 M263 427l-1-5-1-5 M256 437l-2-6-2-5 M252 426l-2-4-3-3 M252 426l-2-3-3-4 M247 457l-2-6-2-6 M243 445l1-5 2-4 M246 436l1-2 2-3 M246 436l0-3 0-2 M243 445l-3-5-4-4 M236 436l-3-2-3-1 M236 436l-3-1-3-2 M247 457l1-7 0-8 M248 442l4-4 3-3 M255 435l0-4 0-3 M255 435l1-3 1-3 M248 442l-2-5-2-5 M244 432l0-4 0-4 M244 432l-2-3-2-4 M774 317l7-4 7-5 M788 308l5-2 5-2 M798 304l3-3 2-3 M798 304l4 0 4 1 M788 308l4-4 4-3 M796 301l2-3 3-2 M796 301l3-3 M774 317l-1-8 1-9 M774 300l-1-6-1-6 M772 288l-1-5 0-5 M772 288l0-5 1-4 M774 300l-1-5 0-6 M773 289l-3-3-3-3 M773 289l0-3-2-4 M771 314l-1-7-1-7 M769 300l3-4 2-5 M774 291l2-3 2-3 M774 291l2-3 2-4 M769 300l0-5 0-5 M769 290l-2-3-2-4 M769 290l1-3 0-4 M771 314l3-8 4-7 M778 299l0-6 0-7 M778 286l-1-3-2-4 M778 286l3-3 3-4 M778 299l4-4 5-3 M787 292l1-4 0-3 M787 292l1-4 0-4 M790 320l6-3 6-4 M802 313l2-5 1-5 M805 303l3-3 M805 303l1-4 M802 313l4-3 4-3 M810 307l2-3 M790 320l6-6 5-7 M801 307l5-3 6-2 M812 302l3-3 M782 319l1-7 1-7 M784 305l3-4 3-5 M790 296l1-4 2-4 M790 296l0-4 0-4 M784 305l0-4 1-5 M785 296l2-3 2-3 M785 296l1-3 2-3 M782 319l-1-8-1-9 M780 302l-2-5-3-4 M775 293l-1-4-1-4 M775 293l1-4 0-4 M780 302l-3-5-5-4 M772 293l-2-5-3-4 M772 293l0-5-2-5 M757 303l4-9 4-8 M765 286l4-5 5-5 M774 276l-1-4-1-5 M774 276l0-4 1-5 M765 286l-3-6-4-6 M758 274l-3-4-2-5 M758 274l1-6 1-5 M757 303l1-8 2-8 M760 287l1-6 1-6 M762 275l1-5 3-4 M762 275l0-5 1-4 M760 287l4-4 4-5 M768 278l2-3 2-3 M768 278l1-4 1-4 M744 308l-4-7-5-7 M735 294l-1-6 0-6 M734 282l1-4 0-4 M734 282l-2-4 0-4 M735 294l-1-6 1-6 M735 282l-2-5-2-4 M735 282l-1-5 0-4 M744 308l-3-7-1-7 M740 294l-2-4-2-4 M736 286l-3-3-3-2 M736 286l-2-3-2-2 M740 294l-3-4-2-5 M735 285l1-3 0-3 M735 285l-1-3-2-3 M754 308l-2-8-3-7 M749 293l1-6 2-5 M752 282l3-3 4-3 M752 282l1-3 1-4 M749 293l-3-4-3-4 M743 285l-1-4 0-4 M743 285l-1-4-1-4 M754 308l4-7 4-8 M762 293l1-6 0-6 M763 281l-3-3-2-4 M763 281l2-4 3-3 M762 293l1-5 0-6 M763 282l0-3-1-4 M763 282l-2-3-1-4 M758 307l0-7-1-8 M757 292l3-5 3-5 M763 282l2-3 1-4 M763 282l1-5 0-4 M757 292l-2-5-2-5 M753 282l-3-2-2-4 M753 282l-1-3 0-3 M758 307l2-7 1-7 M761 293l-1-6-1-5 M759 282l2-4 1-3 M759 282l0-4 0-4 M761 293l1-5 0-6 M762 282l-1-3-2-4 M762 282l2-2 2-3 M785 270l-1-6-1-7 M783 257l2-4 2-4 M787 249l0-3 1-3 M783 257l-3-4 M785 270l5-5 M796 274l8-3 M780 253l-1-10 0-10 M779 233l0-7 M779 233l-2-6 M739 234l8-6 7-6 M754 222l6-5 M754 222l5-5 M739 234l0-11 1-10 M740 213l2-7 4-7 M746 199l4-4 M740 213l-3-7-2-7 M735 199l-2-5 M735 199l-1-6 M720 226l4-7 7-7 M731 212l3-6 4-6 M738 200l5-3 5-4 M738 200l2-6 M731 212l4-5 4-3 M739 204l4-3 4-2 M739 204l4-1 4-1 M720 226l2-8 1-8 M723 210l-1-5 0-5 M722 200l2-3 M722 200l-1-4 0-3 M723 210l-1-6 0-5 M722 199l-3-3-3-2 M722 199l-3-3-3-3 M723 232l1-8 2-8 M726 216l4-5 2-5 M732 206l0-4-1-4 M732 206l2-3 2-3 M726 216l4-5 3-6 M733 205l3-4 2-5 M733 205l4-2 4-3 M723 232l-5-6-4-7 M714 219l-4-5-2-5 M708 209l-3-4-2-4 M708 209l-3-3-3-2 M714 219l0-6 0-5 M714 208l2-4 1-4 M714 208l0-4-1-4 M734 234l5-5 5-4 M744 225l3-4 3-3 M750 218l0-3 0-3 M750 218l3-1 2-2 M744 225l4-4 4-3 M752 218l3-1 M752 218l1-3 0-4 M734 234l2-7 2-6 M738 221l2-5 M738 221l1-5 0-5 M739 211l2-4 2-4 M291 616l1-6-1-6 M291 604l-1-3-1-4 M289 597l0-3 1-2 M289 597l-1-3 0-3 M291 604l-2-4-2-4 M287 596l0-3 0-3 M287 596l0-3 0-4 M291 616l1-6 0-6 M292 604l-1-5 0-5 M291 594l-3-2-3-3 M291 594l-2-2-2-3 M292 604l1-4 1-5 M294 595l1-2 1-3 M294 595l-1-3-1-3 M290 613l2-8 2-7 M294 598l4-5 3-4 M301 589l2-3 2-3 M301 589l-1-4 1-3 M294 598l4-4 4-3 M302 591l2-4 2-3 M302 591l3-3 4-2 M290 613l5-6 5-6 M300 601l4-4 5-4 M309 593l0-4 0-4 M309 593l3-4 2-4 M300 601l1-6 1-6 M302 589l0-4 0-5 M302 589l1-3 1-4 M270 631l-2-7-1-7 M267 617l3-4 1-5 M271 608l1-4 2-3 M271 608l3-4 1-4 M267 617l3-5 2-5 M272 607l1-4 1-4 M272 607l2-3 2-3 M270 631l-5-5-6-6 M259 620l-3-5-3-5 M253 610l-2-4-3-4 M253 610l-3-2-3-3 M259 620l-4-2-4-3 M251 615l-2-2-3-3 M251 615l-1-3-2-3 M274 627l0-8 0-7 M274 612l1-5 1-4 M276 603l-2-3-2-4 M276 603l-1-4 0-3 M274 612l-3-5-3-5 M268 602l-2-3-2-3 M268 602l-3-3-3-3 M274 627l-4-5-6-3 M264 619l-3-2-3-3 M258 614l-3-2-2-1 M258 614l-1-3-1-2 M264 619l-2-4-2-3 M260 612l-3-2-2-1 M260 612l-2-3-2-2 M334 528l-1-8-3-9 M330 511l3-5 5-5 M338 501l2-4 2-5 M338 501l1-5 2-4 M330 511l1-6 2-6 M333 499l3-4 4-2 M333 499l0-5 0-5 M334 528l4-9 2-9 M340 510l4-5 4-6 M348 499l4-3 5-2 M348 499l3-4 3-3 M340 510l-2-6-2-7 M336 497l0-5 0-5 M336 497l-2-5-1-5 M334 531l0-6-2-7 M332 518l-1-4-1-5 M330 509l-2-2-2-3 M330 509l-2-2-3-2 M332 518l0-5 1-4 M333 509l3-3 2-3 M333 509l-2-4-3-2 M334 531l2-8 1-8 M337 515l1-6 1-5 M339 504l2-3 3-3 M339 504l2-4 2-4 M337 515l-3-6-2-6 M332 503l-1-5 0-5 M332 503l-2-4-3-4 M309 541l-1-7-3-7 M305 527l-4-3-5-3 M296 521l-4-1-5 1 M296 521l-2-3-2-4 M305 527l-2-5-1-6 M302 516l-2-3-1-4 M302 516l0-3-1-4 M309 541l-4-5-4-4 M301 532l-1-4 1-4 M301 524l1-3 2-3 M301 524l1-3 0-4 M301 532l-4-2-4-1 M293 529l-2-3-2-3 M293 529l-3 1-3 1 M301 542l-7-3-7-4 M287 535l-5-2-5-3 M277 530l-4-1-5 0 M277 530l-3-1-4-2 M287 535l-4-5-3-4 M280 526l0-5 1-4 M280 526l0-4 0-3 M301 542l-4-7-2-8 M295 527l0-5 1-5 M296 517l1-4 0-4 M296 517l0-4-1-3 M295 527l0-5 2-5 M297 517l-2-4-2-4 M297 517l-1-4-1-3 M280 645l-3-7-3-7 M274 631l-3-3-3-4 M268 624l-2-3-1-3 M268 624l-1-3-1-3 M274 631l-5-3-5-3 M264 625l-4 0-5 1 M264 625l-2-4-2-4 M280 645l-3-6-3-6 M274 633l-1-5-2-4 M271 624l0-3-1-3 M271 624l-2-3-2-3 M274 633l-1-5-1-5 M272 623l0-4-1-3 M272 623l1-4 0-3 M268 651l-4-8-5-8 M259 635l-4-5-4-5 M251 625l-1-4-1-4 M251 625l-1-4-1-5 M259 635l-2-6-1-6 M256 623l0-4 1-5 M256 623l0-5 0-4 M268 651l-10-1-9 0 M249 650l-8-3-7-2 M234 645l-4-3-4-4 M234 645l-5-2-4-3 M249 650l-6 2-6 3 M237 655l-4-1-4 0 M267 660l-8-4-8-4 M251 652l-5-4-4-5 M242 643l0-4 0-4 M242 643l0-4 1-5 M251 652l-4-5-4-4 M243 643l-3-4-3-5 M243 643l-4-3-4-2 M198 538l-3-7-4-6 M191 525l0-4 2-4 M193 517l1-3 1-3 M193 517l1-3 2-3 M191 525l-2-4 M198 538l0-7-1-7 M197 524l0-4 0-5 M197 515l1-3 0-2 M202 540l-5-6 M196 524l-2-8 M203 507l-10-4-10-4 M183 499l-5-7 M203 507l-2-9 0-9 M201 489l-4-6-3-5 M194 478l-2-5-2-4 M194 478l-4-3-3-4 M201 489l-4-6-3-5 M194 478l-2-4-2-3 M194 478l-3-4-3-4 M269 507l6-3 6-5 M281 499l4-4 2-4 M287 491l3-2 3-1 M287 491l0-4-1-3 M281 499l4-3 5-4 M290 492l4-1 4-1 M290 492l3 0 4 0 M269 507l1-8-1-8 M269 491l1-7 0-6 M270 478l1-5 1-5 M270 478l3-4 2-4 M269 491l-2-6-2-5 M265 480l-2-3-2-4 M265 480l-3-3-4-2 M266 506l3-8 2-8 M271 490l-2-5-2-6 M267 479l-1-4-2-4 M267 479l1-5 1-4 M271 490l4-4 4-4 M279 482l2-3 2-4 M279 482l4-2 3-2 M266 506l1-9 0-9 M267 488l-3-5-2-6 M262 477l-1-5-1-4 M262 477l-1-5-1-4 M267 488l3-6 1-6 M271 476l-2-4-2-4 M271 476l3-2 3-3 M815 604l6 5 6 5 M827 614l5 3 5 2 M827 614l6 0 M815 604l7 4 7 2 M829 610l5 2 4 2 M838 614l4 0 4 0 M829 610l5 1 5 1 M839 612l4 0 M820 588l9-3 9-3 M838 582l4-6 3-7 M845 569l-1-5 0-5 M845 569l3-3 3-3 M838 582l2-6 0-6 M840 570l1-5 0-4 M840 570l3-3 3-3 M820 588l9-4 8-4 M837 580l6-5 7-3 M850 572l5-2 6-3 M850 572l4-4 4-3 M837 580l6-4 7-2 M850 574l3-3 3-2 M850 574l2-4 3-4 M818 550l9 0 9 1 M836 551l5-3 4-3 M845 545l1-3 2-4 M845 545l2-3 1-3 M836 551l5-1 6 1 M847 551l2-3 2-2 M847 551l3 1 4 1 M818 550l9 0 8-1 M835 549l3-4 3-4 M841 541l1-4 0-4 M841 541l-1-4-1-3 M835 549l4-3 5-2 M844 544l4-2 3-2 M844 544l1-5 3-4 M817 548l6-7 6-5 M829 536l3-5 3-5 M835 526l3-2 2-3 M835 526l4-2 3-1 M829 536l6-3 7-2 M842 531l1-5 2-3 M842 531l3-4 M817 548l1-8 3-7 M821 533l3-4 4-3 M828 526l3-2 3-2 M828 526l2-2 2-2 M821 533l-1-6 0-5 M820 522l1-4 1-3 M820 522l-1-4-2-3 M768 435l-7-8-5-10 M756 417l-4-8-6-7 M746 402l-1-5-1-5 M746 402l-5-2-6-3 M756 417l0-8 0-8 M756 401l-1-5 1-5 M756 401l2-5 2-5 M768 435l0-11-4-12 M764 412l-5-7-6-7 M753 398l-5-4-4-4 M753 398l-5-1-6-2 M764 412l1-8 2-9 M767 395l4-5 3-5 M767 395l3-4 4-5 M789 439l6-9 7-9 M802 421l3-6 4-6 M809 409l0-5-1-5 M809 409l5-1 5-1 M802 421l6-5 7-4 M815 412l4-2 5-2 M815 412l0-6 0-5 M789 439l5-12 4-12 M798 415l7-5 8-3 M813 407l4-6 4-5 M813 407l6-2 6-1 M798 415l0-9 1-10 M799 396l4-4 5-4 M799 396l2-6 4-6 M772 447l2-9 2-9 M776 429l4-4 3-4 M783 421l1-5 1-4 M783 421l0-4 0-4 M776 429l-3-6-3-6 M770 417l-2-5-1-5 M770 417l-4-3-4-3 M772 447l-4-9-7-8 M761 430l-2-6-3-7 M756 417l-4-4-5-3 M756 417l0-5 0-4 M761 430l-1-7-3-7 M757 416l2-5 2-5 M757 416l-4-4-5-2 M763 451l-2-10 0-10 M761 431l-5-5-3-6 M753 420l-2-4-3-3 M753 420l-2-4-3-3 M761 431l-5-5-5-5 M751 421l-2-5-2-5 M751 421l-4-3-3-4 M763 451l-2-8-1-9 M760 434l3-6 1-7 M764 421l3-4 3-4 M764 421l2-5 3-5 M760 434l2-6 1-5 M763 423l0-4-1-4 M763 423l0-5-1-5 M804 457l9-8 8-10 M821 439l3-7 3-7 M827 425l4-4 M821 439l6-5 6-5 M833 429l5-4 M804 457l10 0 M789 448l4-9 5-9 M798 430l3-7 4-7 M805 416l2-4 3-5 M805 416l1-5 2-5 M798 430l4-6 4-7 M806 417l2-5 2-6 M806 417l1-5 1-4 M789 448l-3-9-3-9 M783 430l-4-7-5-6 M774 417l-4-4-4-4 M774 417l-2-5-1-5 M783 430l0-7 1-6 M784 417l2-5 1-4 M784 417l-1-5-1-4 M801 457l8-6 8-6 M817 445l4-6 M817 445l6-3 7-2 M830 440l3-4 3-3 M830 440l5-1 M801 457l-3-9-3-10 M795 438l-1-7 1-7 M795 424l-2-5-2-5 M795 424l-3-4-3-5 M795 438l-1-7-2-6 M792 425l-3-5-4-3 M792 425l2-5 2-4 M802 459l-4-9-4-10 M794 440l-3-7-2-8 M789 425l2-5 2-4 M789 425l1-6 2-6 M794 440l-2-7-2-8 M790 425l1-6-1-6 M790 425l3-5 2-5 M802 459l7-8 7-7 M816 444l3-7 4-6 M823 431l4-3 4-3 M823 431l0-4-1-5 M816 444l6-3 5-5 M827 436l4-3 4-2 M827 436l5-2 4 0" stroke="#42362F" stroke-opacity="0.65" stroke-width="0.5" fill="none"/><path d="M466 666l0-8-2-9-3-8 M466 666l0-8 0-9 1-8 M472 620l3-7 1-8 1-8 M472 620l8-4 9-3 9-2 M415 609l-9-1-10-1-9 1 M415 609l-8-3-7-4-9-2 M459 531l11-6 10-8 10-7 M459 531l12-6 12-5 12-6 M470 547l12-3 13-1 12-3 M470 547l6-10 7-9 5-11 M395 485l-9-5-9-5-10-4 M395 485l-5-9-7-9-8-7 M440 469l-3-10 0-11 1-11 M440 469l0-13 1-13 0-12 M389 422l-6-13-5-13-3-14 M389 422l-9-8-6-9-8-10 M449 406l9-9 9-9 7-10 M449 406l5-12 8-10 10-10 M397 383l-6-6-7-6-5-6 M397 383l-1-8-2-9-1-8 M439 366l4-11 5-11 4-10 M439 366l8-7 8-7 8-7 M399 380l-3-9-5-7-4-8 M399 380l-9-7-7-8-7-8 M447 357l3-12 1-12 4-11 M447 357l10-10 10-9 10-10 M434 370l8-6 7-6 7-6 M434 370l4-8 3-9 4-9 M598 591l4-8 4-8 3-9 M598 591l-7-6-6-8-6-7 M643 613l7-4 8-2 8-2 M643 613l3-9 5-8 4-9 M606 511l0-10-2-11-3-10 M606 511l3-9 3-10 2-9 M616 510l-1-8-2-9-2-8 M616 510l-3-8-1-9-3-8 M623 434l-6-7-5-7-5-7 M623 434l1-9 1-10-1-10 M619 436l-2-8-2-9-3-9 M619 436l-6-5-8-5-7-5 M640 350l2-8 4-8 5-7 M640 350l1-9 1-9 1-10 M605 357l-10-8-8-10-6-11 M605 357l-7-11-6-12-8-10 M668 274l-5-7-5-8-3-7 M668 274l-2-8-3-7-4-7 M640 267l-7-10-6-10-6-11 M640 267l-9-8-7-10-9-9 M687 264l-1-12-2-12-3-11 M687 264l11-5 11-6 10-7 M661 259l-1-12-2-11-3-11 M661 259l5-11 5-10 6-8 M678 270l1-9 2-9 3-9 M678 270l7-9 7-8 6-8 M660 644l2-12 3-12 4-12 M660 644l0-12 2-12 3-11 M636 557l4-13 4-12 2-13 M636 557l6-10 7-8 5-10 M640 571l2-7 2-8 4-6 M640 571l4-7 4-7 4-7 M652 503l-6-8-7-8-8-7 M652 503l-7-8-6-10-5-11 M707 537l8-2 7-3 7-2 M707 537l5-7 5-6 6-5 M421 670l-10-4-10-3-10-3 M421 670l-3-10-5-10-4-10 M413 672l-1-11-1-12-2-11 M413 672l1-11 2-11 0-11 M376 632l-13 0-13 3-13 1 M376 632l-3-13-6-12-4-13 M426 603l-3-11-5-10-3-11 M426 603l-9-10-7-11-8-11" stroke="#4A3C35" stroke-opacity="0.8" stroke-width="1.5" fill="none"/><path d="M722 448l10-4 8-5 9-6 M722 448l7-6 6-7 4-9 M724 442l8-10 6-11 5-11 M724 442l11-7 12-5 12-4 M732 287l2-10 4-10 2-10 M732 287l0-11-3-11-3-11 M728 287l-5-9-4-10-2-10 M728 287l8-7 8-7 7-7 M726 287l-4-11-4-11-6-10 M726 287l6-10 8-9 9-8 M365 577l-2-9-3-8-3-9 M365 577l-6-5-5-7-7-5 M343 609l-9 2-9 4-9 1 M343 609l-10 3-9 4-8 6 M383 540l-6-8-5-9-5-8 M383 540l-12-4-11-5-10-8 M430 532l1-11 0-11 2-11 M430 532l1-12 0-11-1-11" stroke="#4A3C35" stroke-opacity="0.8" stroke-width="1.25" fill="none"/><path d="M461 641l-2-9 0-10 M461 641l-4-9-3-10 M467 641l4-8 5-8 M467 641l-1-8 0-8 M477 597l-2-8-4-8 M477 597l1-9-1-9 M498 611l8 0 9 0 M498 611l10 0 11 0 M387 608l-5-8-5-8 M387 608l-10-1-10 0 M391 600l-8-2-8-4 M391 600l-7-6-8-6 M490 510l14-3 13-5 M490 510l12-5 13-4 M495 514l7-15 9-14 M495 514l4-14 5-13 M507 540l13-8 13-5 M507 540l10-8 11-5 M488 517l-4-13-7-12 M488 517l6-10 6-10 M367 471l-8-8-7-9 M367 471l-7-9-8-10 M375 460l-1-13-3-11 M375 460l-11-2-10-3 M438 437l-1-11-1-11 M438 437l1-10 2-10 M441 431l2-14 5-13 M441 431l-4-14-3-15 M375 382l-3-14-5-13 M375 382l-1-17-6-16 M366 395l-9-9-10-9 M366 395l-2-11-4-11 M474 378l13-8 12-9 M474 378l10-9 11-8 M472 374l-1-14-3-15 M472 374l4-13 2-14 M379 365l-2-8-2-9 M379 365l-8-6-9-4 M393 358l-5-9-5-9 M393 358l-2-10-3-8 M452 334l1-12 2-12 M452 334l5-13 6-11 M463 345l9-6 10-6 M463 345l3-10 5-8 M387 356l-7-7-8-5 M387 356l-3-8-4-8 M376 357l-5-11-7-9 M376 357l-3-11-5-10 M455 322l1-14-2-13 M455 322l-6-13-4-13 M477 328l1-15 1-16 M477 328l4-14 6-13 M456 352l7-7 8-6 M456 352l5-10 2-11 M445 344l4-10 5-10 M445 344l4-11 7-9 M609 566l1-10 1-10 M609 566l4-9 6-10 M579 570l-6-8-4-8 M579 570l0-11-1-11 M666 605l7-5 8-5 M666 605l7 2 8 1 M655 587l0-10-2-11 M655 587l6-6 6-7 M601 480l-1-11-2-11 M601 480l-10-6-9-8 M614 483l1-11 1-11 M614 483l-5-9-4-9 M611 485l3-9 1-9 M611 485l3-10 2-10 M609 485l4-10 5-10 M609 485l-6-8-8-7 M607 413l-4-9-3-9 M607 413l-7-5-5-7 M624 405l-7-8-5-9 M624 405l5-10 7-8 M612 410l-6-7-6-7 M612 410l-5-8-4-10 M598 421l-6-7-6-7 M598 421l-9-2-8-5 M651 327l4-8 4-7 M651 327l1-10-1-10 M643 322l-1-10-2-11 M643 322l2-8 3-9 M581 328l-11-4-12-3 M581 328l-5-11-8-10 M584 324l-11-10-11-10 M584 324l-2-13 1-14 M655 252l-8-7-8-5 M655 252l-6-6-6-5 M659 252l-1-9 0-8 M659 252l-3-9-1-8 M621 236l-4-12-4-12 M621 236l-11-6-11-5 M615 240l-9-8 M681 229l-7-11-7-10 M681 229l-6-12-3-13 M719 246l13-1 13-3 M719 246l10-7 11-7 M655 225l-7-9-8-8 M655 225l-2-10-3-10 M677 230l9-7 11-5 M677 230l7-10 8-9 M684 243l1-11 2-11 M684 243l-2-9-3-8 M698 245l12-5 12-4 M698 245l3-13 1-13 M669 608l1-12 1-12 M669 608l2-12 1-12 M665 609l1-11 0-11 M665 609l5-10 6-10 M646 519l5-12 7-11 M646 519l-1-14 1-13 M654 529l8-10 6-11 M654 529l4-10 6-9 M648 550l4-7 4-7 M648 550l7-5 6-6 M652 550l7-8 7-7 M652 550l1-9 2-9 M631 480l-8-6-9-5 M631 480l-8-5-9-3 M634 474l-10-7-10-7 M634 474l1-13 1-12 M729 530l9-2 9-2 M729 530l5-7 4-6 M723 519l7-3 6-4 M723 519l5-8 7-6 M735 378l8-7 8-7 9-6 M735 378l0-10 2-11 1-10 M728 376l1-9 2-10 2-9 M728 376l1-8 0-8 2-9 M740 257l-1-11 0-11 M740 257l6-10 4-11 M726 254l-5-10-7-9 M726 254l-5-11-2-13 M717 258l0-12-1-12 M717 258l5-10 5-9 M751 266l2-13 2-12 M751 266l1-11 0-10 M712 255l-10-5-11-3 M712 255l-3-11-1-12 M749 260l6-11 9-9 M749 260l7-7 10-7 M652 528l2-13 4-11 5-12 M652 528l0-11-2-11-1-12 M665 554l9 2 10 2 10-1 M665 554l10 3 9 5 10 4 M647 515l8-8 10-6 11-6 M647 515l10-8 12-6 12-5 M391 660l-11-1-12 2 M391 660l-10-7-8-9 M409 640l0-11-1-12 M409 640l-8-8-8-8 M409 638l5-12 6-13 M409 638l0-11 0-12 M416 639l7-11 9-9 M416 639l5-10 4-12 M337 636l-13-2-13-3 M337 636l-14 0-14-3 M363 594l-4-12-5-12 M363 594l6-12 5-13 M415 571l0-12 0-11 M415 571l2-12 2-13 M402 571l1-13 2-13 M402 571l-13-7-13-7 M294 549l-10 0-10-2-9-3 M294 549l-7-8-6-9-6-8 M323 509l3-11 3-10 1-11 M323 509l-7-9-5-9-5-10 M380 439l-1-14 2-14 0-15 M380 439l-9-10-8-10-7-11 M428 456l2-10 3-11 0-11 M428 456l1-11 2-11 2-11 M466 602l-2-9 0-10-1-10 M466 602l3-9 4-8 4-9 M480 590l-2-11-4-11-6-10 M480 590l2-13 4-12 5-12 M751 522l8 3 9 2 8 4 M751 522l7 6 8 6 8 4 M757 524l11 2 12 1 11-1 M757 524l10 0 9-2 10-2" stroke="#4A3C35" stroke-opacity="0.8" stroke-width="1.0" fill="none"/><path d="M443 297l9-6 10-6 9-8 M443 297l11-1 12-1 11-2 M439 299l7-5 7-5 7-5 M439 299l3-8 4-9 4-8 M362 228l-10-4-11-3-11-4 M362 228l-10-4-10-6-11-5 M403 198l0-14-3-15 M425 295l-7-4-7-5-8-2 M425 295l-3-9-4-8-3-9 M407 296l-13-3-12-3-12-1 M407 296l-9-9-8-10-9-9 M458 207l3-9 3-9 M503 229l8-4 9-4 M669 204l5-8 5-8 2-9 M669 204l4-11 3-11 4-11 M630 212l-1-10-1-10 0-10 M630 212l-6-6 M711 218l-1-9 0-9 2-10 M711 218l5-8 6-8 6-7 M715 225l2-8 3-8 3-7 M715 225l4-6 4-7 3-8 M749 433l1-11 2-11 M749 433l7-8 7-8 M739 426l6-8 6-7 M739 426l-3-8-1-8 M743 410l7-11 7-12 M743 410l1-12 0-12 M759 426l13 0 12 1 M759 426l10-10 11-8 M760 358l2-10 2-10 M760 358l4-11 2-12 M738 347l1-12-1-12 M738 347l-4-8-6-8 M733 348l5-9 5-9 M733 348l7-9 8-8 M731 351l-3-8-1-9 M731 351l5-6 6-6 M741 299l2-10 2-10 3-10 M741 299l2-10 4-10 2-9 M752 290l9-11 10-9 10-10 M752 290l1-14 4-13 4-14 M631 596l11-2 11 0 11 2 M631 596l11-2 12-2 11-5 M616 522l-3-9-5-9-6-8 M616 522l1-11 1-11-1-11 M636 512l1-12 2-12 3-11 M636 512l-1-12-2-12-1-13 M663 492l12-8 10-11 M663 492l7-10 9-9 M649 494l6-9 4-11 M649 494l-9-9-11-7 M694 557l9 0 10 0 M694 557l10-2 10-3 M694 566l10 1 10 2 M694 566l11-6 11-6 M676 495l9-10 9-11 M676 495l9-10 7-11 M681 496l15-1 16 1 M681 496l4-14 5-14 M357 551l2-11 0-10 M357 551l3-11 3-10 M347 560l-6-5-8-3 M347 560l-8-2-9-1 M316 616l-10 3-9 4 M316 616l-8 4-8 3 M316 622l-11 4-11 6 M316 622l-10 3-10 3 M265 544l-7-8-7-8 M265 544l-9-5-7-6 M275 524l-9-6-7-7 M275 524l-4-11-7-9 M330 477l3-12 2-12 M330 477l3-13 2-12 M306 481l-7-8-6-9 M306 481l-8-10-6-10 M247 510l-11-3-11-2-11-1 M247 510l-8 6-9 7-7 8 M284 459l-8-6-7-7-5-8 M284 459l4-11 5-9 3-11 M200 467l-8-5-7-7-8-6 M200 467l-10 1 M205 473l-10 0 M205 473l-9-3-9-1 M213 421l-6-11 M213 421l0-13-2-12-1-13 M213 419l-12-6-13-4-11-7 M213 419l-10-6-8-8-7-9 M200 443l-8-7-7-9 M367 515l-3-10-5-9 M367 515l-9-6-9-5 M350 523l-15-2-14-4 M350 523l-7-12-8-11 M433 499l6-11 7-10 M433 499l1-13 2-12 M430 498l-1-12-1-12 M430 498l-3-12-3-12 M381 396l-9-10-8-11 M381 396l-2-16-1-16 M356 408l-3-15-3-15 M356 408l-7-11-8-11 M433 424l3-9 2-10 M433 424l0-10-1-11 M433 423l-6-11-8-11 M433 423l6-10 5-11 M409 378l8-6 6-7 7-6 M409 378l6-6 5-7 5-6 M415 363l-1-12-3-12-4-12 M415 363l1-12 1-12 1-12 M330 294l-9-8-9-9-9-9 M330 294l-9-10-9-11-8-11 M352 289l-4-9-5-8-5-9 M352 289l0-9 0-8-1-9 M393 267l4-11 6-10 6-10 M393 267l10-5 11-4 12-2 M360 284l-2-9-3-8-5-8 M360 284l-2-10-3-11-2-10 M387 274l3-9 4-9 4-10 M387 274l1-10 2-10 3-10 M463 573l3-9 2-9 M463 573l5-10 3-10 M477 576l6-10 3-10 M477 576l2-9 3-8 M468 558l-9-7-11-5 M468 558l-8-9-9-9 M491 553l9-13 10-12 M491 553l-4-14-6-14 M533 536l2-10 4-9 3-10 M533 536l7-7 9-5 9-5 M540 529l5-11 6-11 6-10 M540 529l7-10 7-10 6-12 M489 438l-7-9-6-11-7-9 M489 438l-8-8-9-6-11-5 M497 438l-4-12-3-12-6-11 M497 438l-10-7-11-5-11-6 M559 447l11-6 10-8 10-7 M559 447l6-13 5-13 7-12 M531 432l5-9 4-10 5-9 M531 432l-2-12-4-13-5-11 M498 425l-6-11-6-12-5-12 M498 425l-1-13 0-14-3-13 M776 531l7-4 8-3 M776 531l9-1 9-1 M774 538l9-1 9 1 M774 538l11 4 9 5 M791 526l12-3 11-5 M791 526l10-6 10-4 M786 520l11-1 10 1 M786 520l11 1 12-1 M816 481l8 4 8 4 7 4 M816 481l9 3 M633 395l-2-11-4-11-7-9 M633 395l9-9 8-10 9-8 M567 399l-12-3-11-3-12-2 M567 399l-2-12-3-12-1-12 M603 325l8-5 8-3 7-3 M603 325l7-5 8-4 8-2 M593 322l-2-8-2-7-1-8 M593 322l5-8 3-9 3-9 M518 265l-8-6-9-5-10-2 M518 265l-6-6-8-4-7-5 M523 236l-1-14 M523 236l-6-13-8-12-7-12 M305 598l-13 2-13 1-13-1 M305 598l-11-3-12-2-11-4 M298 583l-10 9-9 10-8 10 M298 583l-11 6-10 5-10 7 M232 569l-10-6-10-6-11-6 M232 569l-10 2-10 1-10 1 M249 509l-8-7-9-7-7-8 M249 509l0-11 1-10 0-10 M763 363l0-9-2-9 1-10 M763 363l6-7 5-8 4-9 M756 361l-1-12-1-11 2-11 M756 361l-1-11-1-11 0-10 M760 308l8-6 7-6 6-7 M760 308l4-10 3-11 2-11 M717 285l1-12 0-11 1-12 M717 285l2-11 3-11 2-11 M734 224l-2-10-1-11 M734 224l-1-10 0-10-1-10 M315 646l-7-4-8-4-7-5 M315 646l-9-1-10-2-9-1 M326 587l3-12 0-11 2-11 M326 587l-3-9-3-10-5-9 M321 658l-9 0-9-1-9 0 M321 658l-11 3-10 1-11 2 M233 575l-7-7-9-7-9-5 M233 575l-6-6-6-8-4-8 M246 558l-9-8-9-9-9-9 M246 558l3-11 5-10 5-10 M219 629l-12-3-13-3-12 0 M219 629l-11 3-11 1 M768 575l10 4 9 7 9 7 M768 575l9-6 10-3 9-5 M764 512l3-14 4-15 2-15 M764 512l5-12 3-13 5-12 M765 513l2-14 4-13 5-14 M765 513l8-10 9-9 9-10 M845 560l9-8 M842 559l12 0 M842 559l6-10 7-8 9-7" stroke="#4A3C35" stroke-opacity="0.8" stroke-width="0.75" fill="none"/><path d="M471 277l9-9 10-10 M471 277l3-11 1-11 M477 293l10-6 10-6 M477 293l9-9 8-10 M460 284l9-4 10-2 M460 284l7-7 6-7 M450 274l8-3 7-4 M450 274l8-4 8-6 M330 217l-6-9-7-8 M330 217l-7-9-7-10 M331 213l-12-4-13-3 M331 213l-10-6-11-4 M403 284l-10-1-9-3 M403 284l-8 1-8 1 M415 269l-5-8-6-7 M415 269l-5-8-5-8 M370 289l-15 0-15-2 M370 289l-9-11-9-10 M381 268l-11-8-10-10 M381 268l-5-12-5-12 M681 179l6-9 8-8 M681 179l9-7 9-5 M628 182l-3-10 M728 195l3-10 M723 202l1-10 1-10 M726 204l1-9 M726 204l-1-8-2-8 M748 269l-1-10 0-10 M748 269l1-13 4-11 M749 270l6-9 8-7 M749 270l6-10 6-8 M781 260l6-12 4-13 M761 249l1-15 M664 596l11-6 11-4 M664 596l11 3 12 1 M665 587l3-11 5-10 M665 587l8-11 7-11 M602 496l-2-11-1-11 M602 496l-9-6-10-5 M617 489l5-9 5-10 M617 489l-5-10-6-11 M642 477l7-10 8-9 M642 477l6-11 6-11 M632 475l8-11 9-12 M632 475l-1-12-3-13 M214 504l-11-4 M214 504l-7-12-8-11 M223 531l-12-3-12-2 M223 531l-11 2-11 2 M264 438l-3-10-4-9 M264 438l-3-11-5-11 M296 428l3-11 3-11 M296 428l0-12 3-13 M210 383l6-14 2-14 M210 383l-3-12-3-11 M188 396l-3-11-3-12 M430 359l7-7 5-8 M430 359l0-10 2-9 M425 359l7-4 8-3 M425 359l0-9 0-8 M407 327l6-13 7-11 M407 327l-10-11-10-10 M418 327l-2-11 0-12 M418 327l6-11 5-11 M303 268l0-13-1-13 M303 268l-8-9-9-8 M304 262l-12-10-14-7 M304 262l2-17 3-16 M338 263l-2-11-5-10 M338 263l-7-7-7-8 M351 263l1-8 1-8 M351 263l-3-9-1-10 M409 236l8-9 6-11 M409 236l1-14-1-14 M426 256l12 0 12 2 M426 256l10-10 8-11 M350 259l1-10 2-11 M350 259l-1-8-2-8 M353 253l-3-10-1-11 M353 253l-2-11-2-10 M398 246l4-9 5-10 M398 246l7-9 6-10 M393 244l2-10 1-11 M393 244l8-9 9-9 M542 507l-1-10-3-9 M542 507l7-10 9-7 M558 519l9-4 8-6 M558 519l12-1 11 0 M557 497l3-11 5-11 M557 497l3-12 1-13 M560 497l6-11 6-11 M560 497l6-13 4-14 M469 409l1-12 4-12 M469 409l-4-12-3-12 M461 419l-8-8-10-7 M461 419l-8-11-11-9 M484 403l-7-9-9-9 M484 403l-4-13-2-13 M465 420l-9-10-11-8 M465 420l-6-12-5-12 M590 426l12-3 13-2 M590 426l8-8 6-11 M577 409l8-12 10-11 M577 409l12-8 14-6 M545 404l2-11 3-10 M545 404l-2-11-2-12 M520 396l-5-13-4-13 M520 396l-4-15-3-15 M481 390l-2-13-3-13 M481 390l-9-9-10-9 M494 385l-3-13-1-13 M494 385l6-13 8-11 M620 364l-6-12-5-11 M620 364l-7-9-9-8 M659 368l6-11 4-11 M659 368l9-8 9-9 M532 391l-7-10-10-8 M532 391l-12 2-12 3 M561 363l-10-10-12-9 M561 363l-10-9-10-10 M626 314l10-2 9 0 M626 314l10 0 9 1 M626 314l8-1 9 1 M626 314l8 1 8 4 M588 299l4-8 3-9 M588 299l2-9 1-9 M604 296l1-10 2-11 M604 296l0-10 1-9 M491 252l-10-3-11-1 M491 252l-10 2-10 4 M497 250l-9-1-9-3 M497 250l-4-8-4-8 M266 600l-13-8-13-7 M266 600l-6-12-5-13 M271 589l-5-9-6-10 M271 589l-11-5-12-5 M271 612l-13 4-13 1 M271 612l-11 9-12 7 M267 601l-12 2-11 3 M267 601l-13 1-12 3 M201 551l-11-3 M201 551l-13 1 M202 573l-10-3-10-2 M202 573l-9 2-10 2 M225 487l-8-8-9-8 M225 487l-7-11-9-9 M250 478l5-11 4-12 M250 478l-1-11-2-10 M762 335l6-9 6-9 M762 335l4-10 5-11 M778 339l7-9 5-10 M778 339l3-10 1-10 M756 327l1-12 0-12 M756 327l-6-10-6-9 M754 329l1-11-1-10 M754 329l3-11 1-11 M781 289l2-9 2-10 M781 289l8-8 7-7 M769 276l5-12 6-11 M769 276l8-10 9-9 M719 250l9-9 11-7 M719 250l0-12 1-12 M724 252l0-10-1-10 M724 252l6-8 4-10 M732 194l-1-10-1-10 M293 633l-1-8-1-9 M293 633l-3-10 0-10 M287 642l-8-6-9-5 M287 642l-7-7-6-8 M331 553l1-13 2-12 M331 553l2-11 1-11 M315 559l-3-9-3-9 M315 559l-6-9-8-8 M294 657l-9 4 M294 657l-7-6-7-6 M289 664l-11-6-10-7 M289 664l-11-3-11-1 M208 556l-10-8 M208 556l-5-9-5-9 M217 553l-7-9-8-7 M217 553l-7-7-8-6 M219 532l-11-3-12-5 M219 532l-8-13-8-12 M259 527l5-10 5-10 M259 527l4-11 3-10 M796 593l10 5 9 6 M796 593l12-3 12-2 M796 561l11-6 11-5 M796 561l11-7 10-6 M773 468l-2-16-3-17 M773 468l7-15 9-14 M777 475l-3-14-2-14 M777 475l-6-13-8-11 M776 472l14-8 14-7 M776 472l7-12 6-12 M791 484l3-13 7-14 M791 484l4-13 7-12" stroke="#4A3C35" stroke-opacity="0.8" stroke-width="0.5" fill="none"/><path d="M450 700l6-11 6-11 4-12 M442 640l9-8 10-6 11-6 M442 640l-8-11-9-10-10-10 M436 580l9-15 7-17 7-17 M436 580l9-13 12-11 13-9 M431 520l-13-10-11-13-12-12 M431 520l4-17 3-17 2-17 M428 460l-14-12-13-12-12-14 M428 460l7-18 5-19 9-17 M610 630l-6-12-4-13-2-14 M610 630l10-7 12-4 11-6 M625 550l-7-13-6-13-6-13 M625 550l-3-13-2-14-4-13 M638 470l-7-11-5-12-3-13 M638 470l-8-10-5-12-6-12 M650 390l-5-13-3-13-2-14 M650 390l-14-13-16-10-15-10 M624 680l13-10 12-13 11-13 M650 605l-6-16-6-16-2-16 M650 605l-3-11-4-11-3-12 M452 700l-11-9-11-9-9-12 M452 700l-14-7-14-9-11-12 M420 655l-15-6-15-8-14-9 M420 655l2-17 3-17 1-18" stroke="#4E4038" stroke-opacity="0.95" stroke-width="2.25" fill="none"/><path d="M425 410l-10-9-9-9-9-9 M425 410l5-14 4-15 5-15 M425 410l-7-11-10-10-9-9 M425 410l8-18 6-18 8-17 M425 410l4-13 2-14 3-13 M658 310l4-12 4-12 2-12 M658 310l-4-15-7-14-7-14 M658 310l7-17 10-15 12-14 M658 310l-2-17 1-18 4-16 M658 310l8-13 5-14 7-13 M672 545l-8-13-6-15-6-14 M672 545l11-5 12-2 12-1" stroke="#4E4038" stroke-opacity="0.95" stroke-width="2.0" fill="none"/><path d="M688 475l11-10 11-10 12-7 M688 475l12-11 12-11 12-11 M712 330l7-14 8-14 5-15 M712 330l4-15 8-13 4-15 M712 330l3-15 6-14 5-14 M382 608l-3-11-6-11-8-9 M382 608l-13-1-13 2-13 0 M418 575l-12-11-10-13-13-11 M418 575l4-14 3-15 5-14" stroke="#4E4038" stroke-opacity="0.95" stroke-width="1.75" fill="none"/><path d="M620 565l11-12 11-13 10-12 M620 565l15-5 15-4 15-2 M620 565l8-17 10-16 9-17 M480 640l-6-12-5-12-3-14 M480 640l-1-17 0-16 1-17 M720 498l12 6 10 9 9 9 M720 498l11 10 13 8 13 8" stroke="#4E4038" stroke-opacity="0.95" stroke-width="1.5" fill="none"/><path d="M700 400l11-8 12-7 12-7 M700 400l10-7 9-9 9-8 M585 615l15-7 15-6 16-6 M335 548l-14-1-14 0-13 2 M335 548l-4-13-3-14-5-12 M240 462l-11-13-7-14-9-14 M240 462l-10-14-8-15-9-14 M240 462l-13-7-13-7-14-5 M402 490l-8-17-8-16-6-18 M402 490l9-11 8-12 9-11 M378 320l4-18 4-18 7-17 M378 320l-5-13-5-12-8-11 M378 320l4-15 3-15 2-16 M515 480l14-13 14-11 16-9 M515 480l6-16 5-16 5-16 M515 480l-2-19-6-18-9-18" stroke="#4E4038" stroke-opacity="0.95" stroke-width="1.25" fill="none"/><path d="M412 330l11-10 9-12 11-11 M412 330l7-12 9-10 11-9 M397 255l-13-7-10-10-12-10 M397 255l1-19 4-19 1-19 M382 195l14-12 M382 195l-2-18 M382 195l-11-10 M446 325l-6-11-7-10-8-9 M446 325l-13-10-13-10-13-9 M466 250l-2-14-4-15-2-14 M466 250l12-8 13-6 12-7 M651 245l8-13 4-14 6-14 M651 245l-7-11-6-12-8-10 M643 185l3-19 M685 245l10-8 8-9 8-10 M685 245l11-5 10-7 9-8 M708 190l14-6 12-7 M708 190l-8-16-5-16 M712 330l10-10 10-10 9-11 M712 330l15-12 13-14 12-14 M620 565l-1-14 0-15-3-14 M620 565l5-18 7-17 4-18 M290 500l-14 3-14 4-15 3 M290 500l-3-14-1-14-2-13 M240 462l-13 3-14 2-13 0 M240 462l-12 4-11 4-12 3 M392 410l5-11 6-11 6-10 M392 410l8-15 10-15 5-17 M378 320l-16-8-16-8-16-10 M378 320l-9-10-9-10-8-11 M497 560l13-7 11-8 12-9 M497 560l13-11 14-11 16-9 M515 480l-9-14-7-14-10-14 M515 480l-5-14-7-14-6-14 M778 468l17 5 15 8 M778 468l13 5 12 4 13 4 M608 435l8-13 10-13 7-14 M608 435l-14-11-13-13-14-12 M580 355l8-10 8-9 7-11 M580 355l4-11 6-11 3-11 M556 280l-13-5-12-6-13-4 M556 280l4-11 M556 280l-6-15-5-15-4-15 M556 280l-13-13-12-14-8-17 M345 562l-12 13-14 12-14 11 M345 562l-17 4-16 8-14 9 M270 545l-13 8-13 7-12 9 M270 545l-9-11-7-12-5-13 M205 525l-7-10-8-8-8-9 M205 525l-15 8-14 10 M205 525l-11-9-11-9 M205 525l-18-3 M205 525l-13-8 M752 405l3-14 5-14 3-14 M752 405l0-15 3-14 1-15 M810 335l9-13 M810 335l14-13 M810 335l8-11 M726 335l11-10 12-8 11-9 M726 335l-3-17-3-17-3-16 M750 262l14-10 12-11 M750 262l-4-13-6-13-6-12 M750 262l16-11 M750 262l5-15 4-15 4-16 M750 262l8-18 6-18 5-19 M350 628l-12 6-11 6-12 6 M350 628l-9-13-7-14-8-14 M350 628l-11 9-10 10-8 11 M262 605l-9-10-11-10-9-10 M262 605l-6-15-4-16-6-16 M262 605l-15 7-14 9-14 8 M190 592l-14 12 M190 592l-13-6 M190 592l-14-11 M190 592l-18-3 M190 592l-16-11 M728 556l13 7 13 6 14 6 M728 556l12-15 13-13 11-16 M728 556l13-14 12-15 12-14 M798 580l15-9 15-7 17-4 M798 580l14-9 14-7 16-5 M798 580l11 15 13 15" stroke="#4E4038" stroke-opacity="0.95" stroke-width="1.0" fill="none"/><path d="M644 184l3-18 M649 549l4-6 3-7 M649 549l7-5 6-6 M653 549l6-7 7-7 M653 549l1-9 2-8 M725 441l11-6 11-6 13-4 M760 425l9-10 12-7 M700 400l12-8 11-8 12-7 M735 377l8-7 9-6 9-6 M761 358l1-10 2-11 M735 377l1-10 1-10 2-10 M739 347l1-12-2-13 M739 347l-5-9-5-8 M729 287l-6-10-4-9-2-10 M717 258l0-12-1-12 M717 258l5-10 6-10 M726 286l-3-11-5-11-5-10 M713 254l-11-5-11-3 M726 286l7-10 7-8 9-8 M749 260l7-11 8-10 M749 260l8-8 9-6 M586 614l14-7 16-6 15-6 M631 595l12-1 11-3 11-4 M665 587l4-11 4-10 M665 587l8-11 7-12 M620 564l6-17 7-17 3-18 M636 512l0-13-2-12-1-12 M633 475l-2-13-2-12 M653 527l0-11-3-11 0-11 M665 554l10 2 9 1 10 0 M665 554l11 3 9 4 10 4 M647 515l10-9 12-6 12-5 M681 495l4-14 5-14 M409 639l0-11 0-11 M377 631l-4-13-5-12-4-12 M364 594l-4-13-5-12 M364 594l5-13 5-13 M336 548l-4-14-3-13-5-13 M324 508l2-10 3-11 1-11 M330 476l3-12 2-12 M330 476l4-12 2-13 M240 462l-13 2-13 2-14 0 M200 466l-8-5-7-6-8-6 M240 462l-10-13-8-15-8-14 M214 420l-6-10 M240 462l-9-15-9-14-9-15 M213 418l-9-6-8-7-7-9 M189 396l-3-12-3-12 M240 462l-13-7-12-7-14-6 M201 442l-8-7-7-9 M384 540l-6-8-5-9-6-9 M384 540l-12-4-12-6-9-7 M351 523l-15-2-15-4 M392 410l5-12 6-10 7-10 M410 378l5-6 5-7 6-7 M392 410l9-16 9-15 6-16 M416 363l0-12 1-12 2-12 M419 327l6-11 5-12 M378 320l5-18 3-18 7-17 M393 267l11-6 11-3 11-3 M426 255l13 0 11 3 M426 255l10-9 8-11 M378 320l-4-13-6-12-8-11 M378 320l5-15 3-16 1-15 M387 274l4-10 4-9 3-9 M398 246l5-10 4-9 M398 246l7-10 7-9 M387 274l2-11 1-10 3-10 M778 468l13 5 13 4 13 4 M817 481l8 4 7 4 8 4 M817 481l9 2 M270 544l-12 8-13 7-12 9 M233 568l-11-6-10-5-10-6 M202 551l-14 0 M233 568l-10 3-10 1-10 0 M203 572l-10-2-11-2 M270 544l-8-10-7-12-5-14 M250 508l-8-7-9-6-8-8 M225 487l-8-9-8-8 M206 524l-16 8-14 10 M206 524l-12-8-10-10 M206 524l-18-3 M206 524l-13-8 M726 334l11-9 12-8 12-9 M761 308l7-6 8-6 6-8 M782 288l2-9 1-9 M782 288l7-7 8-8 M761 308l3-11 4-10 1-11 M769 276l8-11 10-9 M750 262l14-10 12-12 M750 262l17-12 M750 262l5-16 4-15 4-15 M750 262l9-18 6-19 5-19" stroke="#D0D0D0" stroke-opacity="0.6" stroke-width="0.5" fill="none"/><path d="M650 604l-3-11-3-11-4-11 M640 571l2-8 3-7 4-7 M640 571l5-7 4-8 4-7 M688 474l13-10 12-12 12-11 M712 330l8-15 8-14 5-15 M712 330l5-15 7-14 5-14 M712 330l4-15 6-14 4-15 M620 564l12-12 10-12 11-13 M620 564l15-4 15-4 15-2 M620 564l8-17 10-16 9-16 M452 700l-11-9-11-10-8-11 M422 670l-4-11-4-9-5-11 M420 654l-15-6-14-8-14-9 M420 654l2-17 4-17 0-17 M382 608l-3-12-6-10-8-9 M418 574l-12-10-10-13-12-11" stroke="#D0D0D0" stroke-opacity="0.6" stroke-width="1.0" fill="none"/><path d="M536 1039l-13-52-14-60-13-59-12-55-13-55-12-59-9-60-7-60-6-59-4-60-5-50-6 0 1 50 2 60 4 61 5 60 7 60 10 61 11 55 10 55 11 61 12 60 11 52Z" fill="#463933"/><path d="M532 1039l-13-51-14-60-12-60-12-55-13-54-12-60-8-60-7-59-6-60-4-60-3-50-4 0 3 50 3 60 4 60 6 60 8 60 11 60 11 56 11 55 12 60 13 60 11 52Z" fill="#5C4E46"/><path d="M506 1045l-11-52-12-60-11-61-10-55-11-55-10-61-7-60-5-60-4-61-2-60-1-50" stroke="#2A201C" stroke-width="8.4" fill="none"/><path d="M427 412l-13-82-16-75-15-60-2 0 15 60 14 75 13 82Z" fill="#463933"/><path d="M427 412l20-87 20-75 24-60-2 0-24 60-20 75-22 87Z" fill="#463933"/><path d="M549 1045l13-67 13-70 12-66 12-70 10-70 9-71 14-80 12-80 11-80 6-81-6 0-10 79-13 80-14 80-16 80-13 69-12 70-14 70-14 64-15 70-17 67Z" fill="#463933"/><path d="M537 1043l15-67 13-70 13-65 13-71 10-70 11-70 15-80 12-80 12-80 8-80-4 0-9 80-12 79-14 80-16 80-12 70-12 70-14 69-14 65-15 70-16 66Z" fill="#5C4E46"/><path d="M549 1045l13-67 13-70 12-66 12-70 10-70 9-71 14-80 12-80 11-80 6-81" stroke="#2A201C" stroke-width="9.0" fill="none"/><path d="M660 312l-8-67-8-60-2 0 8 60 6 67Z" fill="#463933"/><path d="M660 313l26-68 23-55-2 0-23 55-28 66Z" fill="#463933"/><path d="M607 747l22-65 25-76 21-60 16-70 11-76 11-70-2 0-13 70-13 74-16 70-23 60-27 74-22 65Z" fill="#463933"/><path d="M603 745l22-65 26-75 22-60 16-70 12-75 11-70-1 0-13 70-12 75-17 69-22 60-26 75-23 65Z" fill="#5C4E46"/><path d="M607 747l22-65 25-76 21-60 16-70 11-76 11-70" stroke="#2A201C" stroke-width="3.1" fill="none"/><path d="M486 802l24-48 26-47 24-46 27-45 34-50-2-2-36 50-27 45-26 44-28 47-24 48Z" fill="#463933"/><path d="M483 801l24-48 27-48 25-45 26-45 35-50-1-1-35 50-28 45-25 45-28 46-24 48Z" fill="#5C4E46"/><path d="M486 802l24-48 26-47 24-46 27-45 34-50" stroke="#2A201C" stroke-width="2.8" fill="none"/><path d="M491 799l-12-49-23-52-33-45-39-47-47-59-46-48-50-38-2 2 50 38 44 48 47 61 37 47 31 45 21 52 12 47Z" fill="#463933"/><path d="M490 799l-13-48-22-53-33-45-38-46-48-60-45-48-51-38 0 1 50 38 45 48 46 60 38 48 32 45 22 51 12 48Z" fill="#5C4E46"/><path d="M481 801l-12-47-21-52-31-45-37-47-47-61-44-48-50-38" stroke="#2A201C" stroke-width="3.1" fill="none"/><path d="M449 654l-28-80-17-84-10-80-15-90-2 0 13 90 10 80 15 86 28 80Z" fill="#463933"/><path d="M447 655l-28-80-16-85-11-80-14-90-1 0 14 90 9 80 16 86 28 80Z" fill="#5C4E46"/><path d="M463 720l19-79 17-81 17-80-2 0-19 80-17 79-21 79Z" fill="#463933"/><path d="M661 523l60-23 58-31 54-36-2-2-54 36-58 29-60 21Z" fill="#463933"/><path d="M642 519l-33-85-28-79-24-75-2 0 24 75 28 81 31 85Z" fill="#463933"/><path d="M425 578l-80-18-75-16-65-20 0 2 65 20 75 18 80 18Z" fill="#463933"/><path d="M691 471l62-65 58-71-2 0-58 69-62 65Z" fill="#463933"/><path d="M702 421l25-86 24-73-2 0-24 73-27 84Z" fill="#463933"/><path d="M440 648l-90-22-88-22-72-13 0 2 72 13 88 24 90 22Z" fill="#463933"/><path d="M640 562l88-4 70 23 50 30 0-2-50-30-70-25-88 4Z" fill="#463933"/><g fill="#C8C8C8" fill-opacity="0.7"><ellipse cx="524" cy="1031" rx="8" ry="2.2" transform="rotate(-103 524 1031)"/><ellipse cx="517" cy="994" rx="5" ry="3.3" transform="rotate(-103 517 994)"/><ellipse cx="524" cy="1005" rx="5" ry="4.1" transform="rotate(-103 524 1005)"/><ellipse cx="514" cy="989" rx="9" ry="2.9" transform="rotate(-102 514 989)"/><ellipse cx="501" cy="934" rx="8" ry="2.8" transform="rotate(-102 501 934)"/><ellipse cx="516" cy="987" rx="8" ry="1.6" transform="rotate(-102 516 987)"/><ellipse cx="508" cy="971" rx="5" ry="2.8" transform="rotate(-102 508 971)"/><ellipse cx="489" cy="882" rx="4" ry="1.8" transform="rotate(-101 489 882)"/><ellipse cx="493" cy="877" rx="7" ry="2.7" transform="rotate(-101 493 877)"/><ellipse cx="498" cy="921" rx="4" ry="1.6" transform="rotate(-101 498 921)"/><ellipse cx="498" cy="895" rx="8" ry="3.3" transform="rotate(-101 498 895)"/><ellipse cx="490" cy="880" rx="3" ry="1.9" transform="rotate(-101 490 880)"/><ellipse cx="499" cy="916" rx="8" ry="2.3" transform="rotate(-101 499 916)"/><ellipse cx="483" cy="820" rx="7" ry="2.0" transform="rotate(-101 483 820)"/><ellipse cx="482" cy="824" rx="4" ry="1.8" transform="rotate(-101 482 824)"/><ellipse cx="489" cy="844" rx="5" ry="2.3" transform="rotate(-101 489 844)"/><ellipse cx="467" cy="765" rx="7" ry="2.2" transform="rotate(-102 467 765)"/><ellipse cx="471" cy="776" rx="9" ry="2.4" transform="rotate(-102 471 776)"/><ellipse cx="468" cy="778" rx="7" ry="2.3" transform="rotate(-102 468 778)"/><ellipse cx="455" cy="708" rx="5" ry="1.1" transform="rotate(-100 455 708)"/><ellipse cx="464" cy="740" rx="7" ry="1.3" transform="rotate(-100 464 740)"/><ellipse cx="459" cy="714" rx="6" ry="1.9" transform="rotate(-100 459 714)"/><ellipse cx="463" cy="758" rx="5" ry="2.1" transform="rotate(-100 463 758)"/><ellipse cx="451" cy="654" rx="8" ry="1.4" transform="rotate(-98 451 654)"/><ellipse cx="449" cy="672" rx="4" ry="1.6" transform="rotate(-98 449 672)"/><ellipse cx="451" cy="685" rx="6" ry="2.4" transform="rotate(-98 451 685)"/><ellipse cx="444" cy="635" rx="6" ry="0.8" transform="rotate(-96 444 635)"/><ellipse cx="440" cy="605" rx="3" ry="1.2" transform="rotate(-96 440 605)"/><ellipse cx="440" cy="594" rx="6" ry="1.6" transform="rotate(-96 440 594)"/><ellipse cx="438" cy="569" rx="5" ry="1.4" transform="rotate(-95 438 569)"/><ellipse cx="437" cy="546" rx="7" ry="1.6" transform="rotate(-95 437 546)"/><ellipse cx="437" cy="539" rx="8" ry="0.8" transform="rotate(-95 437 539)"/><ellipse cx="436" cy="534" rx="4" ry="1.6" transform="rotate(-95 436 534)"/><ellipse cx="438" cy="559" rx="4" ry="0.9" transform="rotate(-95 438 559)"/><ellipse cx="439" cy="550" rx="7" ry="0.6" transform="rotate(-95 439 550)"/><ellipse cx="434" cy="532" rx="6" ry="1.5" transform="rotate(-95 434 532)"/><ellipse cx="432" cy="471" rx="8" ry="1.2" transform="rotate(-93 432 471)"/><ellipse cx="432" cy="496" rx="4" ry="1.5" transform="rotate(-93 432 496)"/><ellipse cx="433" cy="512" rx="3" ry="0.9" transform="rotate(-93 433 512)"/><ellipse cx="432" cy="471" rx="6" ry="1.1" transform="rotate(-93 432 471)"/><ellipse cx="430" cy="468" rx="5" ry="0.9" transform="rotate(-93 430 468)"/><ellipse cx="430" cy="434" rx="4" ry="0.9" transform="rotate(-93 430 434)"/><ellipse cx="428" cy="432" rx="6" ry="0.6" transform="rotate(-93 428 432)"/><ellipse cx="426" cy="415" rx="5" ry="1.1" transform="rotate(-93 426 415)"/><ellipse cx="428" cy="431" rx="3" ry="0.9" transform="rotate(-93 428 431)"/><ellipse cx="428" cy="430" rx="4" ry="1.1" transform="rotate(-93 428 430)"/><ellipse cx="428" cy="435" rx="6" ry="0.6" transform="rotate(-93 428 435)"/><ellipse cx="427" cy="420" rx="7" ry="0.6" transform="rotate(-93 427 420)"/></g><g fill="#C8C8C8" fill-opacity="0.7"><ellipse cx="423" cy="391" rx="5" ry="0.6" transform="rotate(-99 423 391)"/><ellipse cx="425" cy="409" rx="4" ry="0.6" transform="rotate(-99 425 409)"/><ellipse cx="409" cy="312" rx="8" ry="0.6" transform="rotate(-101 409 312)"/><ellipse cx="410" cy="317" rx="7" ry="0.6" transform="rotate(-101 410 317)"/><ellipse cx="412" cy="330" rx="6" ry="0.6" transform="rotate(-101 412 330)"/></g><g fill="#C8C8C8" fill-opacity="0.7"><ellipse cx="441" cy="347" rx="5" ry="0.6" transform="rotate(-76 441 347)"/><ellipse cx="445" cy="332" rx="6" ry="0.6" transform="rotate(-76 445 332)"/><ellipse cx="426" cy="411" rx="7" ry="0.6" transform="rotate(-76 426 411)"/><ellipse cx="462" cy="265" rx="7" ry="0.6" transform="rotate(-75 462 265)"/><ellipse cx="456" cy="293" rx="5" ry="0.6" transform="rotate(-75 456 293)"/><ellipse cx="452" cy="305" rx="5" ry="0.6" transform="rotate(-75 452 305)"/></g><g fill="#C8C8C8" fill-opacity="0.7"><ellipse cx="530" cy="1002" rx="6" ry="2.6" transform="rotate(-77 530 1002)"/><ellipse cx="542" cy="988" rx="4" ry="2.9" transform="rotate(-77 542 988)"/><ellipse cx="523" cy="1026" rx="8" ry="2.5" transform="rotate(-77 523 1026)"/><ellipse cx="534" cy="991" rx="4" ry="3.2" transform="rotate(-77 534 991)"/><ellipse cx="531" cy="1034" rx="8" ry="2.5" transform="rotate(-77 531 1034)"/><ellipse cx="523" cy="1037" rx="5" ry="3.3" transform="rotate(-77 523 1037)"/><ellipse cx="535" cy="1018" rx="5" ry="4.4" transform="rotate(-77 535 1018)"/><ellipse cx="550" cy="931" rx="4" ry="1.5" transform="rotate(-79 550 931)"/><ellipse cx="540" cy="950" rx="7" ry="3.5" transform="rotate(-79 540 950)"/><ellipse cx="551" cy="927" rx="4" ry="1.8" transform="rotate(-79 551 927)"/><ellipse cx="542" cy="967" rx="8" ry="3.1" transform="rotate(-79 542 967)"/><ellipse cx="545" cy="928" rx="5" ry="4.0" transform="rotate(-79 545 928)"/><ellipse cx="539" cy="969" rx="9" ry="2.5" transform="rotate(-79 539 969)"/><ellipse cx="561" cy="889" rx="7" ry="2.1" transform="rotate(-79 561 889)"/><ellipse cx="555" cy="895" rx="9" ry="1.7" transform="rotate(-79 555 895)"/><ellipse cx="560" cy="877" rx="5" ry="2.4" transform="rotate(-79 560 877)"/><ellipse cx="567" cy="849" rx="8" ry="1.8" transform="rotate(-79 567 849)"/><ellipse cx="556" cy="883" rx="9" ry="1.6" transform="rotate(-79 556 883)"/><ellipse cx="555" cy="880" rx="9" ry="3.7" transform="rotate(-79 555 880)"/><ellipse cx="561" cy="855" rx="3" ry="3.3" transform="rotate(-79 561 855)"/><ellipse cx="575" cy="793" rx="6" ry="2.8" transform="rotate(-79 575 793)"/><ellipse cx="571" cy="836" rx="9" ry="2.3" transform="rotate(-79 571 836)"/><ellipse cx="575" cy="796" rx="7" ry="1.2" transform="rotate(-79 575 796)"/><ellipse cx="571" cy="837" rx="5" ry="2.1" transform="rotate(-79 571 837)"/><ellipse cx="570" cy="814" rx="7" ry="1.3" transform="rotate(-79 570 814)"/><ellipse cx="579" cy="781" rx="4" ry="2.1" transform="rotate(-79 579 781)"/><ellipse cx="569" cy="820" rx="5" ry="2.2" transform="rotate(-79 569 820)"/><ellipse cx="585" cy="769" rx="9" ry="2.6" transform="rotate(-81 585 769)"/><ellipse cx="590" cy="705" rx="7" ry="1.0" transform="rotate(-81 590 705)"/><ellipse cx="586" cy="751" rx="5" ry="3.0" transform="rotate(-81 586 751)"/><ellipse cx="587" cy="758" rx="6" ry="1.7" transform="rotate(-81 587 758)"/><ellipse cx="587" cy="729" rx="3" ry="1.9" transform="rotate(-81 587 729)"/><ellipse cx="595" cy="702" rx="4" ry="2.3" transform="rotate(-81 595 702)"/><ellipse cx="588" cy="755" rx="4" ry="2.4" transform="rotate(-81 588 755)"/><ellipse cx="596" cy="700" rx="4" ry="1.8" transform="rotate(-81 596 700)"/><ellipse cx="594" cy="686" rx="4" ry="1.8" transform="rotate(-81 594 686)"/><ellipse cx="605" cy="631" rx="6" ry="2.5" transform="rotate(-81 605 631)"/><ellipse cx="604" cy="638" rx="5" ry="2.5" transform="rotate(-81 604 638)"/><ellipse cx="599" cy="659" rx="4" ry="1.8" transform="rotate(-81 599 659)"/><ellipse cx="595" cy="686" rx="6" ry="2.1" transform="rotate(-81 595 686)"/><ellipse cx="603" cy="631" rx="6" ry="1.1" transform="rotate(-81 603 631)"/><ellipse cx="596" cy="672" rx="5" ry="1.0" transform="rotate(-81 596 672)"/><ellipse cx="606" cy="638" rx="8" ry="1.6" transform="rotate(-81 606 638)"/><ellipse cx="616" cy="582" rx="9" ry="2.0" transform="rotate(-79 616 582)"/><ellipse cx="608" cy="601" rx="9" ry="2.0" transform="rotate(-79 608 601)"/><ellipse cx="608" cy="611" rx="4" ry="1.7" transform="rotate(-79 608 611)"/><ellipse cx="613" cy="592" rx="8" ry="1.3" transform="rotate(-79 613 592)"/><ellipse cx="606" cy="628" rx="4" ry="2.5" transform="rotate(-79 606 628)"/><ellipse cx="617" cy="559" rx="5" ry="1.9" transform="rotate(-79 617 559)"/><ellipse cx="607" cy="614" rx="5" ry="1.3" transform="rotate(-79 607 614)"/><ellipse cx="606" cy="627" rx="4" ry="1.0" transform="rotate(-79 606 627)"/><ellipse cx="627" cy="520" rx="5" ry="1.0" transform="rotate(-81 627 520)"/><ellipse cx="629" cy="490" rx="9" ry="1.1" transform="rotate(-81 629 490)"/><ellipse cx="623" cy="524" rx="6" ry="0.8" transform="rotate(-81 623 524)"/><ellipse cx="631" cy="486" rx="4" ry="1.1" transform="rotate(-81 631 486)"/><ellipse cx="625" cy="532" rx="8" ry="1.5" transform="rotate(-81 625 532)"/><ellipse cx="635" cy="482" rx="5" ry="0.9" transform="rotate(-81 635 482)"/><ellipse cx="633" cy="491" rx="8" ry="1.4" transform="rotate(-81 633 491)"/><ellipse cx="624" cy="545" rx="9" ry="1.4" transform="rotate(-81 624 545)"/><ellipse cx="626" cy="526" rx="5" ry="1.1" transform="rotate(-81 626 526)"/><ellipse cx="625" cy="530" rx="4" ry="1.5" transform="rotate(-81 625 530)"/><ellipse cx="629" cy="498" rx="5" ry="1.1" transform="rotate(-81 629 498)"/><ellipse cx="627" cy="500" rx="8" ry="0.9" transform="rotate(-81 627 500)"/><ellipse cx="629" cy="509" rx="9" ry="1.8" transform="rotate(-81 629 509)"/><ellipse cx="623" cy="531" rx="6" ry="1.7" transform="rotate(-81 623 531)"/><ellipse cx="641" cy="425" rx="4" ry="1.6" transform="rotate(-81 641 425)"/><ellipse cx="647" cy="402" rx="4" ry="0.6" transform="rotate(-81 647 402)"/><ellipse cx="637" cy="464" rx="7" ry="1.7" transform="rotate(-81 637 464)"/><ellipse cx="641" cy="439" rx="4" ry="0.8" transform="rotate(-81 641 439)"/><ellipse cx="647" cy="396" rx="7" ry="1.1" transform="rotate(-81 647 396)"/><ellipse cx="636" cy="466" rx="4" ry="1.2" transform="rotate(-81 636 466)"/><ellipse cx="643" cy="417" rx="4" ry="1.4" transform="rotate(-81 643 417)"/><ellipse cx="639" cy="453" rx="6" ry="0.7" transform="rotate(-81 639 453)"/><ellipse cx="637" cy="456" rx="3" ry="1.6" transform="rotate(-81 637 456)"/><ellipse cx="636" cy="450" rx="8" ry="1.2" transform="rotate(-81 636 450)"/><ellipse cx="642" cy="421" rx="7" ry="1.5" transform="rotate(-81 642 421)"/><ellipse cx="643" cy="408" rx="6" ry="1.4" transform="rotate(-81 643 408)"/><ellipse cx="647" cy="379" rx="7" ry="0.6" transform="rotate(-84 647 379)"/><ellipse cx="656" cy="320" rx="7" ry="0.9" transform="rotate(-84 656 320)"/><ellipse cx="648" cy="388" rx="7" ry="1.3" transform="rotate(-84 648 388)"/><ellipse cx="649" cy="374" rx="5" ry="0.6" transform="rotate(-84 649 374)"/><ellipse cx="655" cy="327" rx="8" ry="1.1" transform="rotate(-84 655 327)"/><ellipse cx="654" cy="336" rx="5" ry="0.6" transform="rotate(-84 654 336)"/><ellipse cx="654" cy="325" rx="4" ry="0.6" transform="rotate(-84 654 325)"/><ellipse cx="655" cy="314" rx="4" ry="0.8" transform="rotate(-84 655 314)"/><ellipse cx="656" cy="322" rx="9" ry="0.9" transform="rotate(-84 656 322)"/><ellipse cx="649" cy="383" rx="6" ry="1.0" transform="rotate(-84 649 383)"/><ellipse cx="652" cy="360" rx="3" ry="0.9" transform="rotate(-84 652 360)"/></g><g fill="#C8C8C8" fill-opacity="0.7"><ellipse cx="656" cy="307" rx="7" ry="0.6" transform="rotate(-96 656 307)"/><ellipse cx="652" cy="267" rx="4" ry="0.6" transform="rotate(-96 652 267)"/><ellipse cx="655" cy="293" rx="8" ry="0.6" transform="rotate(-96 655 293)"/><ellipse cx="646" cy="210" rx="4" ry="0.6" transform="rotate(-98 646 210)"/><ellipse cx="647" cy="219" rx="4" ry="0.6" transform="rotate(-98 647 219)"/><ellipse cx="644" cy="195" rx="3" ry="0.6" transform="rotate(-98 644 195)"/><ellipse cx="649" cy="233" rx="7" ry="0.6" transform="rotate(-98 649 233)"/></g><g fill="#C8C8C8" fill-opacity="0.7"><ellipse cx="671" cy="277" rx="6" ry="0.6" transform="rotate(-68 671 277)"/><ellipse cx="664" cy="297" rx="7" ry="0.6" transform="rotate(-68 664 297)"/><ellipse cx="692" cy="227" rx="5" ry="0.6" transform="rotate(-67 692 227)"/></g><g fill="#C8C8C8" fill-opacity="0.7"><ellipse cx="613" cy="704" rx="8" ry="1.3" transform="rotate(-71 613 704)"/><ellipse cx="616" cy="690" rx="6" ry="1.0" transform="rotate(-71 616 690)"/><ellipse cx="618" cy="691" rx="8" ry="1.2" transform="rotate(-71 618 691)"/><ellipse cx="603" cy="734" rx="7" ry="0.9" transform="rotate(-71 603 734)"/><ellipse cx="605" cy="727" rx="6" ry="1.3" transform="rotate(-71 605 727)"/><ellipse cx="614" cy="706" rx="6" ry="0.7" transform="rotate(-71 614 706)"/><ellipse cx="602" cy="736" rx="6" ry="1.3" transform="rotate(-71 602 736)"/><ellipse cx="611" cy="710" rx="8" ry="0.8" transform="rotate(-71 611 710)"/><ellipse cx="603" cy="735" rx="5" ry="1.4" transform="rotate(-71 603 735)"/><ellipse cx="611" cy="707" rx="4" ry="1.0" transform="rotate(-71 611 707)"/><ellipse cx="631" cy="651" rx="4" ry="0.6" transform="rotate(-71 631 651)"/><ellipse cx="635" cy="641" rx="6" ry="1.2" transform="rotate(-71 635 641)"/><ellipse cx="638" cy="636" rx="8" ry="1.1" transform="rotate(-71 638 636)"/><ellipse cx="633" cy="649" rx="9" ry="1.3" transform="rotate(-71 633 649)"/><ellipse cx="623" cy="673" rx="5" ry="1.0" transform="rotate(-71 623 673)"/><ellipse cx="624" cy="671" rx="8" ry="0.9" transform="rotate(-71 624 671)"/><ellipse cx="624" cy="668" rx="7" ry="0.8" transform="rotate(-71 624 668)"/><ellipse cx="645" cy="613" rx="4" ry="1.1" transform="rotate(-71 645 613)"/><ellipse cx="635" cy="643" rx="7" ry="0.9" transform="rotate(-71 635 643)"/><ellipse cx="670" cy="544" rx="7" ry="0.8" transform="rotate(-70 670 544)"/><ellipse cx="648" cy="601" rx="5" ry="0.8" transform="rotate(-70 648 601)"/><ellipse cx="660" cy="569" rx="5" ry="0.7" transform="rotate(-70 660 569)"/><ellipse cx="662" cy="568" rx="8" ry="1.0" transform="rotate(-70 662 568)"/><ellipse cx="661" cy="569" rx="5" ry="0.6" transform="rotate(-70 661 569)"/><ellipse cx="651" cy="599" rx="3" ry="0.7" transform="rotate(-70 651 599)"/><ellipse cx="667" cy="554" rx="7" ry="1.0" transform="rotate(-70 667 554)"/><ellipse cx="660" cy="569" rx="3" ry="0.6" transform="rotate(-70 660 569)"/><ellipse cx="654" cy="589" rx="6" ry="1.0" transform="rotate(-70 654 589)"/><ellipse cx="667" cy="554" rx="7" ry="1.0" transform="rotate(-70 667 554)"/><ellipse cx="670" cy="548" rx="3" ry="0.8" transform="rotate(-70 670 548)"/><ellipse cx="678" cy="507" rx="8" ry="0.8" transform="rotate(-77 678 507)"/><ellipse cx="677" cy="514" rx="4" ry="0.6" transform="rotate(-77 677 514)"/><ellipse cx="676" cy="518" rx="5" ry="0.6" transform="rotate(-77 676 518)"/><ellipse cx="682" cy="493" rx="6" ry="0.6" transform="rotate(-77 682 493)"/><ellipse cx="685" cy="480" rx="7" ry="0.6" transform="rotate(-77 685 480)"/><ellipse cx="675" cy="524" rx="4" ry="0.6" transform="rotate(-77 675 524)"/><ellipse cx="670" cy="541" rx="7" ry="0.6" transform="rotate(-77 670 541)"/><ellipse cx="685" cy="486" rx="4" ry="0.6" transform="rotate(-77 685 486)"/><ellipse cx="679" cy="513" rx="6" ry="0.7" transform="rotate(-77 679 513)"/><ellipse cx="671" cy="540" rx="4" ry="0.6" transform="rotate(-77 671 540)"/><ellipse cx="684" cy="487" rx="4" ry="0.6" transform="rotate(-77 684 487)"/><ellipse cx="695" cy="426" rx="6" ry="0.7" transform="rotate(-81 695 426)"/><ellipse cx="696" cy="421" rx="5" ry="0.6" transform="rotate(-81 696 421)"/><ellipse cx="691" cy="449" rx="4" ry="0.6" transform="rotate(-81 691 449)"/><ellipse cx="697" cy="406" rx="7" ry="0.6" transform="rotate(-81 697 406)"/><ellipse cx="698" cy="409" rx="5" ry="0.6" transform="rotate(-81 698 409)"/><ellipse cx="694" cy="433" rx="5" ry="0.6" transform="rotate(-81 694 433)"/><ellipse cx="688" cy="470" rx="6" ry="0.6" transform="rotate(-81 688 470)"/><ellipse cx="694" cy="431" rx="8" ry="0.6" transform="rotate(-81 694 431)"/><ellipse cx="698" cy="406" rx="8" ry="0.6" transform="rotate(-81 698 406)"/><ellipse cx="694" cy="430" rx="3" ry="0.6" transform="rotate(-81 694 430)"/><ellipse cx="691" cy="443" rx="7" ry="0.6" transform="rotate(-81 691 443)"/><ellipse cx="707" cy="356" rx="4" ry="0.6" transform="rotate(-80 707 356)"/><ellipse cx="701" cy="381" rx="3" ry="0.6" transform="rotate(-80 701 381)"/><ellipse cx="700" cy="395" rx="8" ry="0.6" transform="rotate(-80 700 395)"/><ellipse cx="703" cy="382" rx="5" ry="0.6" transform="rotate(-80 703 382)"/><ellipse cx="706" cy="357" rx="6" ry="0.6" transform="rotate(-80 706 357)"/><ellipse cx="705" cy="368" rx="5" ry="0.6" transform="rotate(-80 705 368)"/><ellipse cx="711" cy="331" rx="5" ry="0.6" transform="rotate(-80 711 331)"/></g><g fill="#C8C8C8" fill-opacity="0.7"><ellipse cx="496" cy="765" rx="3" ry="1.2" transform="rotate(-63 496 765)"/><ellipse cx="482" cy="793" rx="5" ry="1.1" transform="rotate(-63 482 793)"/><ellipse cx="481" cy="797" rx="5" ry="1.3" transform="rotate(-63 481 797)"/><ellipse cx="482" cy="792" rx="7" ry="1.4" transform="rotate(-63 482 792)"/><ellipse cx="485" cy="790" rx="7" ry="1.0" transform="rotate(-63 485 790)"/><ellipse cx="493" cy="772" rx="7" ry="0.6" transform="rotate(-63 493 772)"/><ellipse cx="502" cy="755" rx="5" ry="0.6" transform="rotate(-63 502 755)"/><ellipse cx="490" cy="778" rx="6" ry="0.6" transform="rotate(-63 490 778)"/><ellipse cx="501" cy="759" rx="4" ry="1.2" transform="rotate(-63 501 759)"/><ellipse cx="489" cy="780" rx="9" ry="1.3" transform="rotate(-63 489 780)"/><ellipse cx="492" cy="775" rx="5" ry="1.1" transform="rotate(-63 492 775)"/><ellipse cx="497" cy="768" rx="5" ry="0.7" transform="rotate(-63 497 768)"/><ellipse cx="510" cy="741" rx="6" ry="0.6" transform="rotate(-60 510 741)"/><ellipse cx="510" cy="743" rx="9" ry="1.2" transform="rotate(-60 510 743)"/><ellipse cx="511" cy="740" rx="6" ry="1.1" transform="rotate(-60 511 740)"/><ellipse cx="507" cy="743" rx="8" ry="1.1" transform="rotate(-60 507 743)"/><ellipse cx="517" cy="728" rx="8" ry="1.1" transform="rotate(-60 517 728)"/><ellipse cx="511" cy="740" rx="7" ry="0.6" transform="rotate(-60 511 740)"/><ellipse cx="528" cy="710" rx="4" ry="0.9" transform="rotate(-60 528 710)"/><ellipse cx="510" cy="742" rx="4" ry="1.0" transform="rotate(-60 510 742)"/><ellipse cx="515" cy="730" rx="8" ry="0.6" transform="rotate(-60 515 730)"/><ellipse cx="517" cy="730" rx="4" ry="0.6" transform="rotate(-60 517 730)"/><ellipse cx="517" cy="730" rx="7" ry="1.1" transform="rotate(-60 517 730)"/><ellipse cx="515" cy="733" rx="6" ry="0.6" transform="rotate(-60 515 733)"/><ellipse cx="523" cy="720" rx="7" ry="0.8" transform="rotate(-60 523 720)"/><ellipse cx="539" cy="688" rx="3" ry="0.6" transform="rotate(-61 539 688)"/><ellipse cx="538" cy="694" rx="6" ry="0.9" transform="rotate(-61 538 694)"/><ellipse cx="541" cy="685" rx="8" ry="0.6" transform="rotate(-61 541 685)"/><ellipse cx="548" cy="675" rx="3" ry="0.8" transform="rotate(-61 548 675)"/><ellipse cx="543" cy="684" rx="7" ry="0.7" transform="rotate(-61 543 684)"/><ellipse cx="555" cy="661" rx="3" ry="0.8" transform="rotate(-61 555 661)"/><ellipse cx="542" cy="687" rx="8" ry="0.6" transform="rotate(-61 542 687)"/><ellipse cx="543" cy="685" rx="6" ry="0.6" transform="rotate(-61 543 685)"/><ellipse cx="554" cy="664" rx="5" ry="0.6" transform="rotate(-61 554 664)"/><ellipse cx="548" cy="676" rx="6" ry="0.8" transform="rotate(-61 548 676)"/><ellipse cx="545" cy="680" rx="6" ry="0.8" transform="rotate(-61 545 680)"/><ellipse cx="582" cy="618" rx="5" ry="0.6" transform="rotate(-59 582 618)"/><ellipse cx="560" cy="654" rx="5" ry="0.6" transform="rotate(-59 560 654)"/><ellipse cx="581" cy="619" rx="5" ry="0.6" transform="rotate(-59 581 619)"/><ellipse cx="569" cy="639" rx="8" ry="0.6" transform="rotate(-59 569 639)"/><ellipse cx="580" cy="620" rx="9" ry="0.6" transform="rotate(-59 580 620)"/><ellipse cx="562" cy="652" rx="6" ry="0.6" transform="rotate(-59 562 652)"/><ellipse cx="583" cy="616" rx="6" ry="0.6" transform="rotate(-59 583 616)"/><ellipse cx="565" cy="645" rx="4" ry="0.6" transform="rotate(-59 565 645)"/><ellipse cx="575" cy="628" rx="7" ry="0.6" transform="rotate(-59 575 628)"/><ellipse cx="583" cy="617" rx="8" ry="0.6" transform="rotate(-59 583 617)"/><ellipse cx="572" cy="636" rx="5" ry="0.6" transform="rotate(-59 572 636)"/><ellipse cx="560" cy="656" rx="4" ry="0.7" transform="rotate(-59 560 656)"/><ellipse cx="560" cy="656" rx="3" ry="0.6" transform="rotate(-59 560 656)"/><ellipse cx="619" cy="565" rx="4" ry="0.6" transform="rotate(-55 619 565)"/><ellipse cx="616" cy="570" rx="4" ry="0.6" transform="rotate(-55 616 570)"/><ellipse cx="606" cy="582" rx="8" ry="0.6" transform="rotate(-55 606 582)"/><ellipse cx="585" cy="613" rx="4" ry="0.6" transform="rotate(-55 585 613)"/><ellipse cx="615" cy="570" rx="5" ry="0.6" transform="rotate(-55 615 570)"/><ellipse cx="591" cy="605" rx="9" ry="0.6" transform="rotate(-55 591 605)"/><ellipse cx="590" cy="605" rx="7" ry="0.6" transform="rotate(-55 590 605)"/><ellipse cx="604" cy="585" rx="3" ry="0.6" transform="rotate(-55 604 585)"/><ellipse cx="605" cy="585" rx="4" ry="0.6" transform="rotate(-55 605 585)"/><ellipse cx="588" cy="610" rx="8" ry="0.6" transform="rotate(-55 588 610)"/><ellipse cx="596" cy="598" rx="5" ry="0.6" transform="rotate(-55 596 598)"/><ellipse cx="608" cy="581" rx="4" ry="0.6" transform="rotate(-55 608 581)"/><ellipse cx="606" cy="584" rx="6" ry="0.6" transform="rotate(-55 606 584)"/><ellipse cx="589" cy="608" rx="6" ry="0.6" transform="rotate(-55 589 608)"/></g><g fill="#C8C8C8" fill-opacity="0.7"><ellipse cx="487" cy="787" rx="8" ry="1.6" transform="rotate(-104 487 787)"/><ellipse cx="482" cy="765" rx="4" ry="0.7" transform="rotate(-104 482 765)"/><ellipse cx="477" cy="754" rx="6" ry="1.1" transform="rotate(-104 477 754)"/><ellipse cx="482" cy="778" rx="4" ry="1.0" transform="rotate(-104 482 778)"/><ellipse cx="489" cy="796" rx="9" ry="1.0" transform="rotate(-104 489 796)"/><ellipse cx="482" cy="773" rx="6" ry="1.5" transform="rotate(-104 482 773)"/><ellipse cx="481" cy="772" rx="7" ry="1.3" transform="rotate(-104 481 772)"/><ellipse cx="485" cy="787" rx="3" ry="1.2" transform="rotate(-104 485 787)"/><ellipse cx="486" cy="793" rx="6" ry="1.5" transform="rotate(-104 486 793)"/><ellipse cx="484" cy="783" rx="9" ry="1.5" transform="rotate(-104 484 783)"/><ellipse cx="487" cy="793" rx="8" ry="1.0" transform="rotate(-104 487 793)"/><ellipse cx="476" cy="751" rx="3" ry="0.8" transform="rotate(-113 476 751)"/><ellipse cx="472" cy="742" rx="5" ry="1.3" transform="rotate(-113 472 742)"/><ellipse cx="471" cy="742" rx="5" ry="1.2" transform="rotate(-113 471 742)"/><ellipse cx="456" cy="703" rx="4" ry="0.9" transform="rotate(-113 456 703)"/><ellipse cx="454" cy="701" rx="8" ry="0.9" transform="rotate(-113 454 701)"/><ellipse cx="455" cy="701" rx="9" ry="0.6" transform="rotate(-113 455 701)"/><ellipse cx="460" cy="712" rx="4" ry="0.9" transform="rotate(-113 460 712)"/><ellipse cx="471" cy="735" rx="9" ry="1.1" transform="rotate(-113 471 735)"/><ellipse cx="472" cy="739" rx="6" ry="0.9" transform="rotate(-113 472 739)"/><ellipse cx="455" cy="703" rx="5" ry="0.6" transform="rotate(-113 455 703)"/><ellipse cx="474" cy="742" rx="9" ry="0.9" transform="rotate(-113 474 742)"/><ellipse cx="465" cy="722" rx="8" ry="0.6" transform="rotate(-113 465 722)"/><ellipse cx="473" cy="747" rx="4" ry="1.1" transform="rotate(-113 473 747)"/><ellipse cx="423" cy="657" rx="7" ry="0.6" transform="rotate(-125 423 657)"/><ellipse cx="444" cy="683" rx="7" ry="0.9" transform="rotate(-125 444 683)"/><ellipse cx="449" cy="690" rx="6" ry="1.0" transform="rotate(-125 449 690)"/><ellipse cx="433" cy="669" rx="8" ry="0.9" transform="rotate(-125 433 669)"/><ellipse cx="444" cy="685" rx="9" ry="0.8" transform="rotate(-125 444 685)"/><ellipse cx="423" cy="657" rx="7" ry="0.9" transform="rotate(-125 423 657)"/><ellipse cx="447" cy="687" rx="8" ry="1.1" transform="rotate(-125 447 687)"/><ellipse cx="448" cy="689" rx="6" ry="1.2" transform="rotate(-125 448 689)"/><ellipse cx="450" cy="694" rx="8" ry="0.9" transform="rotate(-125 450 694)"/><ellipse cx="438" cy="677" rx="9" ry="0.7" transform="rotate(-125 438 677)"/><ellipse cx="434" cy="671" rx="8" ry="0.6" transform="rotate(-125 434 671)"/><ellipse cx="442" cy="680" rx="4" ry="0.8" transform="rotate(-125 442 680)"/><ellipse cx="400" cy="629" rx="7" ry="0.7" transform="rotate(-129 400 629)"/><ellipse cx="420" cy="650" rx="7" ry="0.7" transform="rotate(-129 420 650)"/><ellipse cx="409" cy="639" rx="6" ry="0.8" transform="rotate(-129 409 639)"/><ellipse cx="422" cy="653" rx="8" ry="0.6" transform="rotate(-129 422 653)"/><ellipse cx="407" cy="636" rx="7" ry="0.7" transform="rotate(-129 407 636)"/><ellipse cx="384" cy="607" rx="4" ry="0.7" transform="rotate(-129 384 607)"/><ellipse cx="406" cy="636" rx="3" ry="0.8" transform="rotate(-129 406 636)"/><ellipse cx="415" cy="645" rx="5" ry="0.8" transform="rotate(-129 415 645)"/><ellipse cx="407" cy="635" rx="4" ry="0.6" transform="rotate(-129 407 635)"/><ellipse cx="391" cy="615" rx="7" ry="0.6" transform="rotate(-129 391 615)"/><ellipse cx="408" cy="637" rx="4" ry="0.7" transform="rotate(-129 408 637)"/><ellipse cx="408" cy="636" rx="8" ry="0.6" transform="rotate(-129 408 636)"/><ellipse cx="383" cy="608" rx="7" ry="0.6" transform="rotate(-129 383 608)"/><ellipse cx="384" cy="607" rx="8" ry="0.7" transform="rotate(-129 384 607)"/><ellipse cx="398" cy="623" rx="8" ry="0.6" transform="rotate(-129 398 623)"/><ellipse cx="372" cy="594" rx="3" ry="0.6" transform="rotate(-128 372 594)"/><ellipse cx="336" cy="548" rx="3" ry="0.6" transform="rotate(-128 336 548)"/><ellipse cx="357" cy="574" rx="3" ry="0.6" transform="rotate(-128 357 574)"/><ellipse cx="339" cy="552" rx="5" ry="0.6" transform="rotate(-128 339 552)"/><ellipse cx="375" cy="597" rx="4" ry="0.6" transform="rotate(-128 375 597)"/><ellipse cx="353" cy="569" rx="9" ry="0.7" transform="rotate(-128 353 569)"/><ellipse cx="369" cy="588" rx="4" ry="0.7" transform="rotate(-128 369 588)"/><ellipse cx="361" cy="578" rx="7" ry="0.6" transform="rotate(-128 361 578)"/><ellipse cx="369" cy="590" rx="9" ry="0.6" transform="rotate(-128 369 590)"/><ellipse cx="365" cy="583" rx="7" ry="0.6" transform="rotate(-128 365 583)"/><ellipse cx="378" cy="599" rx="4" ry="0.7" transform="rotate(-128 378 599)"/><ellipse cx="363" cy="581" rx="8" ry="0.6" transform="rotate(-128 363 581)"/><ellipse cx="354" cy="571" rx="6" ry="0.6" transform="rotate(-128 354 571)"/><ellipse cx="369" cy="591" rx="7" ry="0.6" transform="rotate(-128 369 591)"/><ellipse cx="301" cy="511" rx="6" ry="0.6" transform="rotate(-133 301 511)"/><ellipse cx="309" cy="520" rx="8" ry="0.6" transform="rotate(-133 309 520)"/><ellipse cx="304" cy="513" rx="6" ry="0.6" transform="rotate(-133 304 513)"/><ellipse cx="295" cy="504" rx="6" ry="0.6" transform="rotate(-133 295 504)"/><ellipse cx="301" cy="511" rx="5" ry="0.6" transform="rotate(-133 301 511)"/><ellipse cx="314" cy="525" rx="4" ry="0.6" transform="rotate(-133 314 525)"/><ellipse cx="291" cy="500" rx="6" ry="0.6" transform="rotate(-133 291 500)"/><ellipse cx="292" cy="501" rx="6" ry="0.6" transform="rotate(-133 292 501)"/><ellipse cx="329" cy="538" rx="6" ry="0.6" transform="rotate(-133 329 538)"/><ellipse cx="297" cy="506" rx="4" ry="0.6" transform="rotate(-133 297 506)"/><ellipse cx="298" cy="507" rx="8" ry="0.6" transform="rotate(-133 298 507)"/><ellipse cx="303" cy="513" rx="8" ry="0.6" transform="rotate(-133 303 513)"/><ellipse cx="298" cy="507" rx="8" ry="0.6" transform="rotate(-133 298 507)"/><ellipse cx="318" cy="528" rx="6" ry="0.6" transform="rotate(-133 318 528)"/><ellipse cx="250" cy="469" rx="6" ry="0.6" transform="rotate(-143 250 469)"/><ellipse cx="263" cy="479" rx="8" ry="0.6" transform="rotate(-143 263 479)"/><ellipse cx="269" cy="483" rx="7" ry="0.6" transform="rotate(-143 269 483)"/><ellipse cx="243" cy="463" rx="8" ry="0.6" transform="rotate(-143 243 463)"/><ellipse cx="254" cy="472" rx="3" ry="0.6" transform="rotate(-143 254 472)"/><ellipse cx="290" cy="498" rx="6" ry="0.6" transform="rotate(-143 290 498)"/><ellipse cx="246" cy="466" rx="9" ry="0.6" transform="rotate(-143 246 466)"/><ellipse cx="282" cy="493" rx="8" ry="0.6" transform="rotate(-143 282 493)"/><ellipse cx="265" cy="480" rx="6" ry="0.6" transform="rotate(-143 265 480)"/><ellipse cx="264" cy="479" rx="9" ry="0.6" transform="rotate(-143 264 479)"/><ellipse cx="241" cy="462" rx="3" ry="0.6" transform="rotate(-143 241 462)"/><ellipse cx="256" cy="473" rx="3" ry="0.6" transform="rotate(-143 256 473)"/></g><g fill="#C8C8C8" fill-opacity="0.7"><ellipse cx="436" cy="636" rx="8" ry="0.9" transform="rotate(-109 436 636)"/><ellipse cx="421" cy="588" rx="6" ry="0.7" transform="rotate(-109 421 588)"/><ellipse cx="437" cy="636" rx="8" ry="0.6" transform="rotate(-109 437 636)"/><ellipse cx="417" cy="576" rx="8" ry="0.6" transform="rotate(-109 417 576)"/><ellipse cx="438" cy="642" rx="8" ry="0.6" transform="rotate(-109 438 642)"/><ellipse cx="443" cy="652" rx="5" ry="0.6" transform="rotate(-109 443 652)"/><ellipse cx="436" cy="634" rx="4" ry="0.6" transform="rotate(-109 436 634)"/><ellipse cx="422" cy="593" rx="5" ry="0.8" transform="rotate(-109 422 593)"/><ellipse cx="432" cy="619" rx="6" ry="0.6" transform="rotate(-109 432 619)"/><ellipse cx="424" cy="600" rx="3" ry="0.9" transform="rotate(-109 424 600)"/><ellipse cx="439" cy="641" rx="9" ry="0.6" transform="rotate(-109 439 641)"/><ellipse cx="425" cy="603" rx="6" ry="0.8" transform="rotate(-109 425 603)"/><ellipse cx="428" cy="610" rx="4" ry="0.8" transform="rotate(-109 428 610)"/><ellipse cx="423" cy="593" rx="4" ry="0.6" transform="rotate(-109 423 593)"/><ellipse cx="402" cy="493" rx="7" ry="0.6" transform="rotate(-101 402 493)"/><ellipse cx="400" cy="492" rx="7" ry="0.6" transform="rotate(-101 400 492)"/><ellipse cx="412" cy="553" rx="8" ry="0.7" transform="rotate(-101 412 553)"/><ellipse cx="405" cy="514" rx="4" ry="0.6" transform="rotate(-101 405 514)"/><ellipse cx="405" cy="512" rx="9" ry="0.6" transform="rotate(-101 405 512)"/><ellipse cx="406" cy="523" rx="4" ry="0.7" transform="rotate(-101 406 523)"/><ellipse cx="409" cy="531" rx="5" ry="0.6" transform="rotate(-101 409 531)"/><ellipse cx="409" cy="535" rx="9" ry="0.6" transform="rotate(-101 409 535)"/><ellipse cx="414" cy="560" rx="4" ry="0.6" transform="rotate(-101 414 560)"/><ellipse cx="405" cy="516" rx="5" ry="0.6" transform="rotate(-101 405 516)"/><ellipse cx="414" cy="566" rx="5" ry="0.6" transform="rotate(-101 414 566)"/><ellipse cx="404" cy="502" rx="7" ry="0.6" transform="rotate(-101 404 502)"/><ellipse cx="415" cy="564" rx="9" ry="0.6" transform="rotate(-101 415 564)"/><ellipse cx="407" cy="520" rx="9" ry="0.6" transform="rotate(-101 407 520)"/><ellipse cx="402" cy="494" rx="5" ry="0.6" transform="rotate(-101 402 494)"/><ellipse cx="392" cy="417" rx="5" ry="0.6" transform="rotate(-97 392 417)"/><ellipse cx="392" cy="424" rx="8" ry="0.6" transform="rotate(-97 392 424)"/><ellipse cx="391" cy="413" rx="5" ry="0.6" transform="rotate(-97 391 413)"/><ellipse cx="393" cy="421" rx="4" ry="0.6" transform="rotate(-97 393 421)"/><ellipse cx="396" cy="450" rx="4" ry="0.6" transform="rotate(-97 396 450)"/><ellipse cx="395" cy="443" rx="4" ry="0.6" transform="rotate(-97 395 443)"/><ellipse cx="395" cy="443" rx="6" ry="0.6" transform="rotate(-97 395 443)"/><ellipse cx="394" cy="433" rx="8" ry="0.6" transform="rotate(-97 394 433)"/><ellipse cx="395" cy="439" rx="7" ry="0.6" transform="rotate(-97 395 439)"/><ellipse cx="396" cy="449" rx="5" ry="0.6" transform="rotate(-97 396 449)"/><ellipse cx="393" cy="431" rx="8" ry="0.6" transform="rotate(-97 393 431)"/><ellipse cx="393" cy="421" rx="7" ry="0.6" transform="rotate(-97 393 421)"/><ellipse cx="397" cy="461" rx="4" ry="0.6" transform="rotate(-97 397 461)"/><ellipse cx="396" cy="442" rx="9" ry="0.6" transform="rotate(-97 396 442)"/><ellipse cx="382" cy="346" rx="3" ry="0.6" transform="rotate(-99 382 346)"/><ellipse cx="390" cy="407" rx="8" ry="0.6" transform="rotate(-99 390 407)"/><ellipse cx="385" cy="370" rx="8" ry="0.6" transform="rotate(-99 385 370)"/><ellipse cx="384" cy="368" rx="4" ry="0.6" transform="rotate(-99 384 368)"/><ellipse cx="384" cy="363" rx="4" ry="0.6" transform="rotate(-99 384 363)"/><ellipse cx="387" cy="379" rx="4" ry="0.6" transform="rotate(-99 387 379)"/><ellipse cx="382" cy="347" rx="3" ry="0.6" transform="rotate(-99 382 347)"/><ellipse cx="389" cy="392" rx="5" ry="0.6" transform="rotate(-99 389 392)"/><ellipse cx="380" cy="337" rx="8" ry="0.6" transform="rotate(-99 380 337)"/><ellipse cx="385" cy="375" rx="3" ry="0.6" transform="rotate(-99 385 375)"/><ellipse cx="389" cy="398" rx="6" ry="0.6" transform="rotate(-99 389 398)"/><ellipse cx="379" cy="330" rx="5" ry="0.6" transform="rotate(-99 379 330)"/><ellipse cx="380" cy="334" rx="5" ry="0.6" transform="rotate(-99 380 334)"/><ellipse cx="389" cy="398" rx="5" ry="0.6" transform="rotate(-99 389 398)"/><ellipse cx="390" cy="402" rx="6" ry="0.6" transform="rotate(-99 390 402)"/><ellipse cx="381" cy="342" rx="7" ry="0.6" transform="rotate(-99 381 342)"/><ellipse cx="390" cy="399" rx="6" ry="0.6" transform="rotate(-99 390 399)"/><ellipse cx="384" cy="359" rx="8" ry="0.6" transform="rotate(-99 384 359)"/></g><g fill="#C8C8C8" fill-opacity="0.7"><ellipse cx="467" cy="694" rx="3" ry="0.6" transform="rotate(-76 467 694)"/><ellipse cx="471" cy="684" rx="4" ry="0.6" transform="rotate(-76 471 684)"/><ellipse cx="493" cy="583" rx="9" ry="0.6" transform="rotate(-78 493 583)"/><ellipse cx="505" cy="528" rx="7" ry="0.6" transform="rotate(-77 505 528)"/><ellipse cx="504" cy="531" rx="7" ry="0.6" transform="rotate(-77 504 531)"/></g><g fill="#C8C8C8" fill-opacity="0.7"><ellipse cx="719" cy="499" rx="7" ry="0.6" transform="rotate(-20 719 499)"/><ellipse cx="716" cy="501" rx="4" ry="0.6" transform="rotate(-20 716 501)"/><ellipse cx="698" cy="507" rx="6" ry="0.6" transform="rotate(-20 698 507)"/><ellipse cx="679" cy="515" rx="8" ry="0.6" transform="rotate(-20 679 515)"/><ellipse cx="674" cy="516" rx="6" ry="0.7" transform="rotate(-20 674 516)"/><ellipse cx="665" cy="520" rx="6" ry="0.6" transform="rotate(-20 665 520)"/><ellipse cx="687" cy="512" rx="5" ry="0.6" transform="rotate(-20 687 512)"/><ellipse cx="689" cy="512" rx="6" ry="0.6" transform="rotate(-20 689 512)"/><ellipse cx="743" cy="488" rx="5" ry="0.6" transform="rotate(-27 743 488)"/><ellipse cx="760" cy="478" rx="3" ry="0.6" transform="rotate(-27 760 478)"/><ellipse cx="760" cy="478" rx="8" ry="0.6" transform="rotate(-27 760 478)"/><ellipse cx="737" cy="491" rx="9" ry="0.6" transform="rotate(-27 737 491)"/><ellipse cx="761" cy="478" rx="5" ry="0.6" transform="rotate(-27 761 478)"/><ellipse cx="744" cy="487" rx="8" ry="0.6" transform="rotate(-27 744 487)"/><ellipse cx="721" cy="499" rx="4" ry="0.6" transform="rotate(-27 721 499)"/><ellipse cx="772" cy="472" rx="9" ry="0.6" transform="rotate(-27 772 472)"/><ellipse cx="807" cy="449" rx="8" ry="0.6" transform="rotate(-34 807 449)"/><ellipse cx="814" cy="445" rx="5" ry="0.6" transform="rotate(-34 814 445)"/><ellipse cx="823" cy="439" rx="7" ry="0.6" transform="rotate(-34 823 439)"/><ellipse cx="821" cy="440" rx="5" ry="0.6" transform="rotate(-34 821 440)"/><ellipse cx="787" cy="463" rx="9" ry="0.6" transform="rotate(-34 787 463)"/><ellipse cx="818" cy="442" rx="7" ry="0.6" transform="rotate(-34 818 442)"/><ellipse cx="805" cy="452" rx="3" ry="0.6" transform="rotate(-34 805 452)"/></g><g fill="#C8C8C8" fill-opacity="0.7"><ellipse cx="626" cy="485" rx="4" ry="0.6" transform="rotate(-111 626 485)"/><ellipse cx="595" cy="400" rx="9" ry="0.6" transform="rotate(-109 595 400)"/><ellipse cx="607" cy="433" rx="7" ry="0.6" transform="rotate(-109 607 433)"/><ellipse cx="592" cy="392" rx="7" ry="0.6" transform="rotate(-109 592 392)"/><ellipse cx="567" cy="316" rx="8" ry="0.6" transform="rotate(-108 567 316)"/><ellipse cx="566" cy="314" rx="8" ry="0.6" transform="rotate(-108 566 314)"/><ellipse cx="572" cy="331" rx="9" ry="0.6" transform="rotate(-108 572 331)"/></g><g fill="#C8C8C8" fill-opacity="0.7"><ellipse cx="385" cy="571" rx="3" ry="0.6" transform="rotate(-167 385 571)"/><ellipse cx="376" cy="568" rx="9" ry="0.6" transform="rotate(-167 376 568)"/><ellipse cx="410" cy="575" rx="6" ry="0.6" transform="rotate(-167 410 575)"/><ellipse cx="385" cy="570" rx="6" ry="0.6" transform="rotate(-167 385 570)"/><ellipse cx="402" cy="574" rx="6" ry="0.6" transform="rotate(-167 402 574)"/><ellipse cx="387" cy="571" rx="8" ry="0.6" transform="rotate(-167 387 571)"/><ellipse cx="396" cy="573" rx="6" ry="0.6" transform="rotate(-167 396 573)"/><ellipse cx="410" cy="575" rx="9" ry="0.6" transform="rotate(-167 410 575)"/><ellipse cx="422" cy="579" rx="7" ry="0.6" transform="rotate(-167 422 579)"/><ellipse cx="390" cy="571" rx="5" ry="0.6" transform="rotate(-167 390 571)"/><ellipse cx="365" cy="565" rx="8" ry="0.6" transform="rotate(-167 365 565)"/><ellipse cx="396" cy="573" rx="3" ry="0.6" transform="rotate(-167 396 573)"/><ellipse cx="310" cy="553" rx="4" ry="0.6" transform="rotate(-167 310 553)"/><ellipse cx="293" cy="549" rx="7" ry="0.6" transform="rotate(-167 293 549)"/><ellipse cx="298" cy="550" rx="6" ry="0.6" transform="rotate(-167 298 550)"/><ellipse cx="305" cy="552" rx="4" ry="0.6" transform="rotate(-167 305 552)"/><ellipse cx="281" cy="547" rx="4" ry="0.6" transform="rotate(-167 281 547)"/><ellipse cx="283" cy="547" rx="5" ry="0.6" transform="rotate(-167 283 547)"/><ellipse cx="305" cy="553" rx="5" ry="0.6" transform="rotate(-167 305 553)"/><ellipse cx="313" cy="554" rx="8" ry="0.6" transform="rotate(-167 313 554)"/><ellipse cx="327" cy="557" rx="6" ry="0.6" transform="rotate(-167 327 557)"/><ellipse cx="334" cy="558" rx="7" ry="0.6" transform="rotate(-167 334 558)"/><ellipse cx="329" cy="557" rx="4" ry="0.6" transform="rotate(-167 329 557)"/><ellipse cx="330" cy="558" rx="6" ry="0.6" transform="rotate(-167 330 558)"/><ellipse cx="327" cy="557" rx="8" ry="0.6" transform="rotate(-167 327 557)"/><ellipse cx="323" cy="556" rx="8" ry="0.6" transform="rotate(-167 323 556)"/><ellipse cx="327" cy="557" rx="7" ry="0.6" transform="rotate(-167 327 557)"/><ellipse cx="323" cy="556" rx="5" ry="0.6" transform="rotate(-167 323 556)"/><ellipse cx="225" cy="531" rx="8" ry="0.6" transform="rotate(-163 225 531)"/><ellipse cx="226" cy="531" rx="6" ry="0.6" transform="rotate(-163 226 531)"/><ellipse cx="260" cy="541" rx="7" ry="0.6" transform="rotate(-163 260 541)"/><ellipse cx="252" cy="539" rx="7" ry="0.6" transform="rotate(-163 252 539)"/><ellipse cx="239" cy="535" rx="9" ry="0.6" transform="rotate(-163 239 535)"/><ellipse cx="256" cy="540" rx="6" ry="0.6" transform="rotate(-163 256 540)"/><ellipse cx="211" cy="526" rx="6" ry="0.6" transform="rotate(-163 211 526)"/><ellipse cx="254" cy="539" rx="5" ry="0.6" transform="rotate(-163 254 539)"/><ellipse cx="223" cy="530" rx="8" ry="0.6" transform="rotate(-163 223 530)"/><ellipse cx="208" cy="525" rx="9" ry="0.6" transform="rotate(-163 208 525)"/><ellipse cx="208" cy="526" rx="6" ry="0.6" transform="rotate(-163 208 526)"/><ellipse cx="243" cy="536" rx="9" ry="0.6" transform="rotate(-163 243 536)"/></g><g fill="#C8C8C8" fill-opacity="0.7"><ellipse cx="721" cy="440" rx="7" ry="0.6" transform="rotate(-46 721 440)"/><ellipse cx="709" cy="451" rx="6" ry="0.6" transform="rotate(-46 709 451)"/><ellipse cx="746" cy="412" rx="8" ry="0.6" transform="rotate(-46 746 412)"/><ellipse cx="718" cy="441" rx="3" ry="0.6" transform="rotate(-46 718 441)"/><ellipse cx="745" cy="414" rx="6" ry="0.6" transform="rotate(-46 745 414)"/><ellipse cx="750" cy="408" rx="5" ry="0.6" transform="rotate(-46 750 408)"/><ellipse cx="708" cy="452" rx="5" ry="0.6" transform="rotate(-46 708 452)"/><ellipse cx="703" cy="458" rx="6" ry="0.6" transform="rotate(-46 703 458)"/><ellipse cx="796" cy="353" rx="4" ry="0.6" transform="rotate(-50 796 353)"/><ellipse cx="795" cy="354" rx="7" ry="0.6" transform="rotate(-50 795 354)"/><ellipse cx="775" cy="378" rx="4" ry="0.6" transform="rotate(-50 775 378)"/><ellipse cx="778" cy="375" rx="6" ry="0.6" transform="rotate(-50 778 375)"/><ellipse cx="792" cy="358" rx="7" ry="0.6" transform="rotate(-50 792 358)"/><ellipse cx="773" cy="381" rx="8" ry="0.6" transform="rotate(-50 773 381)"/><ellipse cx="787" cy="364" rx="8" ry="0.6" transform="rotate(-50 787 364)"/><ellipse cx="808" cy="338" rx="3" ry="0.6" transform="rotate(-50 808 338)"/><ellipse cx="767" cy="388" rx="7" ry="0.6" transform="rotate(-50 767 388)"/><ellipse cx="771" cy="383" rx="7" ry="0.6" transform="rotate(-50 771 383)"/><ellipse cx="799" cy="348" rx="3" ry="0.6" transform="rotate(-50 799 348)"/><ellipse cx="792" cy="358" rx="4" ry="0.6" transform="rotate(-50 792 358)"/><ellipse cx="802" cy="346" rx="5" ry="0.6" transform="rotate(-50 802 346)"/><ellipse cx="771" cy="383" rx="6" ry="0.6" transform="rotate(-50 771 383)"/></g><g fill="#C8C8C8" fill-opacity="0.7"><ellipse cx="709" cy="387" rx="9" ry="0.6" transform="rotate(-73 709 387)"/><ellipse cx="721" cy="349" rx="7" ry="0.6" transform="rotate(-73 721 349)"/><ellipse cx="709" cy="389" rx="4" ry="0.6" transform="rotate(-73 709 389)"/><ellipse cx="722" cy="343" rx="4" ry="0.6" transform="rotate(-73 722 343)"/><ellipse cx="725" cy="338" rx="9" ry="0.6" transform="rotate(-73 725 338)"/><ellipse cx="716" cy="367" rx="7" ry="0.6" transform="rotate(-73 716 367)"/><ellipse cx="705" cy="398" rx="7" ry="0.6" transform="rotate(-73 705 398)"/><ellipse cx="717" cy="359" rx="6" ry="0.6" transform="rotate(-73 717 359)"/><ellipse cx="725" cy="339" rx="4" ry="0.6" transform="rotate(-73 725 339)"/><ellipse cx="702" cy="408" rx="6" ry="0.6" transform="rotate(-73 702 408)"/><ellipse cx="701" cy="414" rx="8" ry="0.6" transform="rotate(-73 701 414)"/><ellipse cx="704" cy="404" rx="4" ry="0.6" transform="rotate(-73 704 404)"/><ellipse cx="725" cy="337" rx="4" ry="0.6" transform="rotate(-73 725 337)"/><ellipse cx="734" cy="308" rx="3" ry="0.6" transform="rotate(-72 734 308)"/><ellipse cx="729" cy="323" rx="5" ry="0.6" transform="rotate(-72 729 323)"/><ellipse cx="729" cy="325" rx="4" ry="0.6" transform="rotate(-72 729 325)"/><ellipse cx="731" cy="318" rx="8" ry="0.6" transform="rotate(-72 731 318)"/><ellipse cx="741" cy="287" rx="6" ry="0.6" transform="rotate(-72 741 287)"/><ellipse cx="739" cy="293" rx="5" ry="0.6" transform="rotate(-72 739 293)"/><ellipse cx="747" cy="271" rx="5" ry="0.6" transform="rotate(-72 747 271)"/><ellipse cx="726" cy="334" rx="6" ry="0.6" transform="rotate(-72 726 334)"/><ellipse cx="729" cy="326" rx="5" ry="0.6" transform="rotate(-72 729 326)"/></g><g fill="#C8C8C8" fill-opacity="0.7"><ellipse cx="415" cy="643" rx="4" ry="0.6" transform="rotate(-166 415 643)"/><ellipse cx="356" cy="628" rx="7" ry="0.6" transform="rotate(-166 356 628)"/><ellipse cx="416" cy="643" rx="4" ry="0.6" transform="rotate(-166 416 643)"/><ellipse cx="390" cy="637" rx="8" ry="0.6" transform="rotate(-166 390 637)"/><ellipse cx="378" cy="634" rx="3" ry="0.6" transform="rotate(-166 378 634)"/><ellipse cx="366" cy="631" rx="4" ry="0.6" transform="rotate(-166 366 631)"/><ellipse cx="390" cy="637" rx="6" ry="0.6" transform="rotate(-166 390 637)"/><ellipse cx="381" cy="634" rx="8" ry="0.6" transform="rotate(-166 381 634)"/><ellipse cx="368" cy="632" rx="4" ry="0.6" transform="rotate(-166 368 632)"/><ellipse cx="405" cy="641" rx="4" ry="0.6" transform="rotate(-166 405 641)"/><ellipse cx="292" cy="612" rx="7" ry="0.6" transform="rotate(-165 292 612)"/><ellipse cx="276" cy="608" rx="9" ry="0.6" transform="rotate(-165 276 608)"/><ellipse cx="325" cy="620" rx="6" ry="0.6" transform="rotate(-165 325 620)"/><ellipse cx="332" cy="622" rx="4" ry="0.6" transform="rotate(-165 332 622)"/><ellipse cx="293" cy="613" rx="8" ry="0.6" transform="rotate(-165 293 613)"/><ellipse cx="341" cy="624" rx="7" ry="0.6" transform="rotate(-165 341 624)"/><ellipse cx="264" cy="605" rx="4" ry="0.6" transform="rotate(-165 264 605)"/><ellipse cx="284" cy="610" rx="8" ry="0.6" transform="rotate(-165 284 610)"/><ellipse cx="303" cy="615" rx="3" ry="0.6" transform="rotate(-165 303 615)"/><ellipse cx="276" cy="608" rx="4" ry="0.6" transform="rotate(-165 276 608)"/><ellipse cx="193" cy="592" rx="4" ry="0.6" transform="rotate(-170 193 592)"/><ellipse cx="223" cy="597" rx="3" ry="0.6" transform="rotate(-170 223 597)"/><ellipse cx="225" cy="597" rx="6" ry="0.6" transform="rotate(-170 225 597)"/><ellipse cx="260" cy="604" rx="7" ry="0.6" transform="rotate(-170 260 604)"/><ellipse cx="259" cy="604" rx="8" ry="0.6" transform="rotate(-170 259 604)"/><ellipse cx="201" cy="593" rx="9" ry="0.6" transform="rotate(-170 201 593)"/><ellipse cx="198" cy="593" rx="6" ry="0.6" transform="rotate(-170 198 593)"/><ellipse cx="244" cy="601" rx="9" ry="0.6" transform="rotate(-170 244 601)"/><ellipse cx="256" cy="603" rx="5" ry="0.6" transform="rotate(-170 256 603)"/><ellipse cx="239" cy="601" rx="6" ry="0.6" transform="rotate(-170 239 601)"/></g><g fill="#C8C8C8" fill-opacity="0.7"><ellipse cx="727" cy="557" rx="8" ry="0.6" transform="rotate(-3 727 557)"/><ellipse cx="690" cy="559" rx="4" ry="0.6" transform="rotate(-3 690 559)"/><ellipse cx="673" cy="559" rx="7" ry="0.6" transform="rotate(-3 673 559)"/><ellipse cx="659" cy="560" rx="4" ry="0.6" transform="rotate(-3 659 560)"/><ellipse cx="643" cy="561" rx="9" ry="0.6" transform="rotate(-3 643 561)"/><ellipse cx="720" cy="557" rx="7" ry="0.6" transform="rotate(-3 720 557)"/><ellipse cx="709" cy="558" rx="9" ry="0.6" transform="rotate(-3 709 558)"/><ellipse cx="678" cy="559" rx="3" ry="0.6" transform="rotate(-3 678 559)"/><ellipse cx="669" cy="559" rx="8" ry="0.6" transform="rotate(-3 669 559)"/><ellipse cx="704" cy="558" rx="3" ry="0.6" transform="rotate(-3 704 558)"/><ellipse cx="668" cy="560" rx="3" ry="0.6" transform="rotate(-3 668 560)"/><ellipse cx="683" cy="559" rx="7" ry="0.6" transform="rotate(-3 683 559)"/><ellipse cx="750" cy="564" rx="5" ry="0.6" transform="rotate(19 750 564)"/><ellipse cx="741" cy="562" rx="3" ry="0.6" transform="rotate(19 741 562)"/><ellipse cx="785" cy="576" rx="5" ry="0.6" transform="rotate(19 785 576)"/><ellipse cx="771" cy="572" rx="6" ry="0.6" transform="rotate(19 771 572)"/><ellipse cx="755" cy="567" rx="7" ry="0.6" transform="rotate(19 755 567)"/><ellipse cx="761" cy="568" rx="6" ry="0.6" transform="rotate(19 761 568)"/><ellipse cx="835" cy="603" rx="7" ry="0.6" transform="rotate(31 835 603)"/><ellipse cx="845" cy="608" rx="8" ry="0.6" transform="rotate(31 845 608)"/><ellipse cx="831" cy="600" rx="8" ry="0.6" transform="rotate(31 831 600)"/><ellipse cx="809" cy="588" rx="8" ry="0.6" transform="rotate(31 809 588)"/><ellipse cx="843" cy="608" rx="6" ry="0.6" transform="rotate(31 843 608)"/><ellipse cx="815" cy="591" rx="7" ry="0.6" transform="rotate(31 815 591)"/><ellipse cx="843" cy="607" rx="8" ry="0.6" transform="rotate(31 843 607)"/><ellipse cx="808" cy="587" rx="7" ry="0.6" transform="rotate(31 808 587)"/></g><g fill="#D0D0D0" fill-opacity="0.75"><ellipse cx="538" cy="1013" rx="3" ry="1.1"/><ellipse cx="507" cy="995" rx="3" ry="1.5"/><ellipse cx="515" cy="1007" rx="3" ry="1.5"/><ellipse cx="532" cy="1003" rx="2" ry="1.4"/><ellipse cx="505" cy="1025" rx="2" ry="1.1"/><ellipse cx="519" cy="1017" rx="2" ry="2.1"/><ellipse cx="507" cy="1023" rx="5" ry="1.1"/><ellipse cx="535" cy="1041" rx="3" ry="1.9"/><ellipse cx="525" cy="1012" rx="3" ry="2.0"/><ellipse cx="534" cy="1022" rx="3" ry="2.1"/><ellipse cx="512" cy="1038" rx="2" ry="1.4"/><ellipse cx="517" cy="1003" rx="3" ry="1.3"/><ellipse cx="521" cy="996" rx="4" ry="2.1"/><ellipse cx="542" cy="1039" rx="3" ry="2.0"/><ellipse cx="522" cy="1036" rx="3" ry="1.4"/><ellipse cx="508" cy="1015" rx="3" ry="1.8"/><ellipse cx="535" cy="1000" rx="3" ry="1.8"/><ellipse cx="546" cy="1035" rx="3" ry="2.1"/><ellipse cx="503" cy="998" rx="5" ry="1.9"/><ellipse cx="513" cy="1025" rx="4" ry="1.3"/><ellipse cx="528" cy="1020" rx="5" ry="1.2"/><ellipse cx="521" cy="1038" rx="5" ry="1.8"/><ellipse cx="516" cy="1024" rx="5" ry="1.6"/><ellipse cx="506" cy="1038" rx="2" ry="1.4"/><ellipse cx="526" cy="1014" rx="5" ry="1.1"/><ellipse cx="515" cy="1008" rx="3" ry="1.6"/><ellipse cx="513" cy="994" rx="4" ry="1.8"/><ellipse cx="515" cy="1032" rx="4" ry="1.2"/><ellipse cx="548" cy="1035" rx="4" ry="1.8"/><ellipse cx="536" cy="1000" rx="4" ry="1.7"/><ellipse cx="545" cy="1006" rx="4" ry="1.9"/><ellipse cx="538" cy="994" rx="3" ry="1.0"/><ellipse cx="534" cy="1010" rx="5" ry="1.4"/><ellipse cx="540" cy="1024" rx="5" ry="1.4"/><ellipse cx="508" cy="999" rx="2" ry="2.1"/><ellipse cx="517" cy="1024" rx="5" ry="1.0"/><ellipse cx="515" cy="1025" rx="3" ry="2.0"/><ellipse cx="532" cy="1027" rx="3" ry="1.6"/><ellipse cx="518" cy="1002" rx="5" ry="1.3"/><ellipse cx="547" cy="1023" rx="5" ry="1.5"/><ellipse cx="547" cy="1011" rx="4" ry="1.3"/><ellipse cx="503" cy="1035" rx="2" ry="1.5"/><ellipse cx="536" cy="995" rx="3" ry="1.4"/><ellipse cx="535" cy="996" rx="4" ry="1.2"/><ellipse cx="522" cy="1010" rx="3" ry="1.8"/></g></svg>
<svg width="0" height="0" style="position:absolute"><defs>
<radialGradient id="gs" cx="0.36" cy="0.36" r="0.72"><stop offset="0" stop-color="#9A9A9A"/><stop offset="0.3" stop-color="#808080"/><stop offset="0.62" stop-color="#505050"/><stop offset="0.85" stop-color="#262626"/><stop offset="1" stop-color="#1C1C1C"/></radialGradient>
<radialGradient id="gsnow" cx="0.45" cy="0.2" r="0.5"><stop offset="0" stop-color="#FFFFFF"/><stop offset="0.6" stop-color="#E0E0E0"/><stop offset="1" stop-color="#909090"/></radialGradient>
<pattern id="chk" width="28" height="14" patternUnits="userSpaceOnUse"><rect width="28" height="14" fill="#000"/><rect width="7" height="7" fill="#18A018"/><rect x="7" width="7" height="7" fill="#1818B0"/><rect x="14" width="7" height="7" fill="#D8D8D8"/><rect x="21" width="7" height="7" fill="#C01818"/><rect y="7" width="7" height="7" fill="#C01818"/><rect x="7" y="7" width="7" height="7" fill="#18A018"/><rect x="14" y="7" width="7" height="7" fill="#1818B0"/></pattern>
<linearGradient id="gyel" x1="0" y1="0" x2="0.3" y2="1"><stop offset="0" stop-color="#A8B820"/><stop offset="0.6" stop-color="#6A6010"/><stop offset="1" stop-color="#3A2A08"/></linearGradient><radialGradient id="ggreen" cx="0.4" cy="0.35" r="0.65"><stop offset="0" stop-color="#B0B060"/><stop offset="0.5" stop-color="#6A6A30"/><stop offset="1" stop-color="#2A2A10"/></radialGradient>
<radialGradient id="grock" cx="0.4" cy="0.35" r="0.65"><stop offset="0" stop-color="#A09890"/><stop offset="0.5" stop-color="#6A5E58"/><stop offset="1" stop-color="#2A2420"/></radialGradient>
</defs></svg>
<div style="left:1005px;top:78px;width:367px;height:988px;background:#C8C8C8;box-shadow:inset 1px 1px 0 #D4D0C8, inset 2px 2px 0 #fff, inset -1px -1px 0 #404040, inset -2px -2px 0 #808080;"></div>
<div style="left:1009px;top:81px;width:359px;height:18px;background:linear-gradient(90deg,#0A246A 0%,#2A5AA0 40%,#A6CAF0 100%);"></div>
<svg style="position:absolute;left:1010px;top:82px;" width="16" height="16" viewBox="0 0 16 16"><rect width="16" height="16" fill="#0A246A"/><path d="M12.5 3.2 C9 1.5 3.5 2.5 3 7.5 C2.8 11.5 6.5 13.5 9.5 12.8 C12.5 12 13 9 11 8 C9.5 7.3 7.5 8.5 8.5 10" stroke="#CFEFFF" stroke-width="1.8" fill="none"/></svg>
<div style="left:1028px;top:84.94px;font-size:12px;line-height:13.8px;color:#fff;font-weight:bold;transform:scaleX(1.0170);transform-origin:0 0;white-space:pre;">Material Editor - Initial01</div>
<div style="left:1316px;top:83px;width:15px;height:14px;background:#D4D0C8;box-shadow:inset 1px 1px 0 #fff, inset -1px -1px 0 #404040, inset -2px -2px 0 #808080;box-shadow:inset 1px 1px 0 #fff, inset -1px -1px 0 #404040, inset -2px -2px 0 #808080;"></div>
<div style="left:1332px;top:83px;width:15px;height:14px;background:#D4D0C8;box-shadow:inset 1px 1px 0 #fff, inset -1px -1px 0 #404040, inset -2px -2px 0 #808080;box-shadow:inset 1px 1px 0 #fff, inset -1px -1px 0 #404040, inset -2px -2px 0 #808080;"></div>
<div style="left:1350px;top:83px;width:15px;height:14px;background:#D4D0C8;box-shadow:inset 1px 1px 0 #fff, inset -1px -1px 0 #404040, inset -2px -2px 0 #808080;box-shadow:inset 1px 1px 0 #fff, inset -1px -1px 0 #404040, inset -2px -2px 0 #808080;"></div>
<svg style="position:absolute;left:1316px;top:83px;" width="15" height="14" viewBox="0 0 15 14"><rect x="4" y="8" width="6" height="2" fill="#000"/></svg>
<svg style="position:absolute;left:1332px;top:83px;" width="15" height="14" viewBox="0 0 15 14"><rect x="3.5" y="2.5" width="8" height="7" fill="none" stroke="#000"/><rect x="3" y="2" width="9" height="2" fill="#000"/></svg>
<svg style="position:absolute;left:1350px;top:83px;" width="15" height="14" viewBox="0 0 15 14"><path d="M4 3 L11 10 M11 3 L4 10" stroke="#000" stroke-width="1.6"/></svg>
<div style="left:1009px;top:99px;width:359px;height:20px;background:#D4D0C8;"></div>
<div style="left:1014px;top:103.94px;font-size:12px;line-height:13.8px;color:#000;transform:scaleX(0.9136);transform-origin:0 0;white-space:pre;">Material</div>
<div style="left:1064px;top:103.94px;font-size:12px;line-height:13.8px;color:#000;transform:scaleX(0.9171);transform-origin:0 0;white-space:pre;">Navigation</div>
<div style="left:1127px;top:103.94px;font-size:12px;line-height:13.8px;color:#000;transform:scaleX(0.9191);transform-origin:0 0;white-space:pre;">Options</div>
<div style="left:1176px;top:103.94px;font-size:12px;line-height:13.8px;color:#000;transform:scaleX(0.9047);transform-origin:0 0;white-space:pre;">Utilities</div>
<div style="left:1014px;top:122px;width:308px;height:202px;background:#000;"></div>
<svg style="position:absolute;left:1017px;top:125px;" width="47" height="47" viewBox="0 0 47 47"><rect x="0" y="0" width="47" height="47" fill="#3A3A3A"/><circle cx="23.5" cy="23.5" r="21" fill="#0A0A0A"/><path d="M2.6 21.5 A21 21 0 0 1 44.4 18.5 L38.2 19.5 L30.9 17.5 L23.5 20.5 L15.1 18.5 L8.8 22.5Z" fill="url(#gsnow)"/><g fill="#707070" fill-opacity="0.6"><ellipse cx="17.5" cy="11.5" rx="3" ry="1.5"/><ellipse cx="28.5" cy="15.5" rx="4" ry="1.5"/><ellipse cx="13.5" cy="18.5" rx="3" ry="1"/><ellipse cx="32.5" cy="9.5" rx="2" ry="1"/></g><rect x="0.5" y="0.5" width="46" height="46" fill="none" stroke="#BEBEBE" stroke-width="1"/></svg>
<svg style="position:absolute;left:1068px;top:125px;" width="47" height="47" viewBox="0 0 47 47"><rect x="0" y="0" width="47" height="47" fill="url(#chk)"/><circle cx="23.5" cy="23.5" r="21" fill="url(#grock)"/><path d="M24.5 2.5 A21 21 0 0 1 24.5 44.5Z" fill="url(#gyel)" fill-opacity="0.9"/><path d="M5.650000000000002 13.0 A21 21 0 0 1 24.5 2.5 L24.5 17.2 L15.1 19.3 L4.599999999999998 18.25Z" fill="#E8F0E0" fill-opacity="0.85"/><rect x="0.5" y="0.5" width="46" height="46" fill="none" stroke="#BEBEBE" stroke-width="1"/></svg>
<svg style="position:absolute;left:1119px;top:125px;" width="47" height="47" viewBox="0 0 47 47"><rect x="0" y="0" width="47" height="47" fill="#fff"/><polygon points="0,7 7,0 40,0 47,7 47,40 40,47 7,47 0,40" fill="url(#chk)"/><rect width="47" height="47" fill="#fff" fill-opacity="0"/><circle cx="23.5" cy="23.5" r="21" fill="url(#grock)"/><path d="M2.5 22.5 A21 21 0 0 1 44.5 22.5 L36.1 18.5 L27.7 22.5 L17.2 19.5 L8.8 23.5Z" fill="#E8E8E8" fill-opacity="0.85"/><g fill="#808080" fill-opacity="0.5"><ellipse cx="17.5" cy="11.5" rx="3" ry="1.5"/><ellipse cx="28.5" cy="15.5" rx="4" ry="1.5"/><ellipse cx="13.5" cy="18.5" rx="3" ry="1"/><ellipse cx="32.5" cy="9.5" rx="2" ry="1"/></g><rect x="1.0" y="1.0" width="45" height="45" fill="none" stroke="#fff" stroke-width="2"/></svg>
<svg style="position:absolute;left:1170px;top:125px;" width="47" height="47" viewBox="0 0 47 47"><rect x="0" y="0" width="47" height="47" fill="#3A3A3A"/><circle cx="22.5" cy="22.5" r="21" fill="url(#gs)"/><path d="M42.03 20.4 A19.5 19.5 0 0 1 19.35 42.03" stroke="#6E6E6E" stroke-width="2.2" fill="none"/><rect x="0.5" y="0.5" width="46" height="46" fill="none" stroke="#BEBEBE" stroke-width="1"/></svg>
<svg style="position:absolute;left:1221px;top:125px;" width="47" height="47" viewBox="0 0 47 47"><rect x="0" y="0" width="47" height="47" fill="#3A3A3A"/><circle cx="22.5" cy="22.5" r="21" fill="url(#gs)"/><path d="M42.03 20.4 A19.5 19.5 0 0 1 19.35 42.03" stroke="#6E6E6E" stroke-width="2.2" fill="none"/><rect x="0.5" y="0.5" width="46" height="46" fill="none" stroke="#BEBEBE" stroke-width="1"/></svg>
<svg style="position:absolute;left:1272px;top:125px;" width="47" height="47" viewBox="0 0 47 47"><rect x="0" y="0" width="47" height="47" fill="#3A3A3A"/><circle cx="23.5" cy="23.5" r="21" fill="#0A0A0A"/><path d="M2.6 21.5 A21 21 0 0 1 44.4 18.5 L38.2 19.5 L30.9 17.5 L23.5 20.5 L15.1 18.5 L8.8 22.5Z" fill="url(#gsnow)"/><g fill="#707070" fill-opacity="0.6"><ellipse cx="17.5" cy="11.5" rx="3" ry="1.5"/><ellipse cx="28.5" cy="15.5" rx="4" ry="1.5"/><ellipse cx="13.5" cy="18.5" rx="3" ry="1"/><ellipse cx="32.5" cy="9.5" rx="2" ry="1"/></g><rect x="0.5" y="0.5" width="46" height="46" fill="none" stroke="#BEBEBE" stroke-width="1"/></svg>
<svg style="position:absolute;left:1017px;top:175px;" width="47" height="47" viewBox="0 0 47 47"><rect x="0" y="0" width="47" height="47" fill="#3A3A3A"/><circle cx="22.5" cy="22.5" r="21" fill="url(#gs)"/><path d="M42.03 20.4 A19.5 19.5 0 0 1 19.35 42.03" stroke="#6E6E6E" stroke-width="2.2" fill="none"/><rect x="0.5" y="0.5" width="46" height="46" fill="none" stroke="#BEBEBE" stroke-width="1"/></svg>
<svg style="position:absolute;left:1068px;top:175px;" width="47" height="47" viewBox="0 0 47 47"><rect x="0" y="0" width="47" height="47" fill="#3A3A3A"/><circle cx="22.5" cy="22.5" r="21" fill="url(#gs)"/><path d="M42.03 20.4 A19.5 19.5 0 0 1 19.35 42.03" stroke="#6E6E6E" stroke-width="2.2" fill="none"/><rect x="0.5" y="0.5" width="46" height="46" fill="none" stroke="#BEBEBE" stroke-width="1"/></svg>
<svg style="position:absolute;left:1119px;top:175px;" width="47" height="47" viewBox="0 0 47 47"><rect x="0" y="0" width="47" height="47" fill="#3A3A3A"/><circle cx="22.5" cy="22.5" r="21" fill="url(#gs)"/><path d="M42.03 20.4 A19.5 19.5 0 0 1 19.35 42.03" stroke="#6E6E6E" stroke-width="2.2" fill="none"/><rect x="0.5" y="0.5" width="46" height="46" fill="none" stroke="#BEBEBE" stroke-width="1"/></svg>
<svg style="position:absolute;left:1170px;top:175px;" width="47" height="47" viewBox="0 0 47 47"><rect x="0" y="0" width="47" height="47" fill="#3A3A3A"/><circle cx="22.5" cy="22.5" r="21" fill="url(#gs)"/><path d="M42.03 20.4 A19.5 19.5 0 0 1 19.35 42.03" stroke="#6E6E6E" stroke-width="2.2" fill="none"/><rect x="0.5" y="0.5" width="46" height="46" fill="none" stroke="#BEBEBE" stroke-width="1"/></svg>
<svg style="position:absolute;left:1221px;top:175px;" width="47" height="47" viewBox="0 0 47 47"><rect x="0" y="0" width="47" height="47" fill="#3A3A3A"/><circle cx="22.5" cy="22.5" r="21" fill="url(#gs)"/><path d="M42.03 20.4 A19.5 19.5 0 0 1 19.35 42.03" stroke="#6E6E6E" stroke-width="2.2" fill="none"/><rect x="0.5" y="0.5" width="46" height="46" fill="none" stroke="#BEBEBE" stroke-width="1"/></svg>
<svg style="position:absolute;left:1272px;top:175px;" width="47" height="47" viewBox="0 0 47 47"><rect x="0" y="0" width="47" height="47" fill="#3A3A3A"/><circle cx="22.5" cy="22.5" r="21" fill="url(#gs)"/><path d="M42.03 20.4 A19.5 19.5 0 0 1 19.35 42.03" stroke="#6E6E6E" stroke-width="2.2" fill="none"/><rect x="0.5" y="0.5" width="46" height="46" fill="none" stroke="#BEBEBE" stroke-width="1"/></svg>
<svg style="position:absolute;left:1017px;top:225px;" width="47" height="47" viewBox="0 0 47 47"><rect x="0" y="0" width="47" height="47" fill="#3A3A3A"/><circle cx="22.5" cy="22.5" r="21" fill="url(#gs)"/><path d="M42.03 20.4 A19.5 19.5 0 0 1 19.35 42.03" stroke="#6E6E6E" stroke-width="2.2" fill="none"/><rect x="0.5" y="0.5" width="46" height="46" fill="none" stroke="#BEBEBE" stroke-width="1"/></svg>
<svg style="position:absolute;left:1068px;top:225px;" width="47" height="47" viewBox="0 0 47 47"><rect x="0" y="0" width="47" height="47" fill="#3A3A3A"/><circle cx="22.5" cy="22.5" r="21" fill="url(#gs)"/><path d="M42.03 20.4 A19.5 19.5 0 0 1 19.35 42.03" stroke="#6E6E6E" stroke-width="2.2" fill="none"/><rect x="0.5" y="0.5" width="46" height="46" fill="none" stroke="#BEBEBE" stroke-width="1"/></svg>
<svg style="position:absolute;left:1119px;top:225px;" width="47" height="47" viewBox="0 0 47 47"><rect x="0" y="0" width="47" height="47" fill="#3A3A3A"/><circle cx="22.5" cy="22.5" r="21" fill="url(#gs)"/><path d="M42.03 20.4 A19.5 19.5 0 0 1 19.35 42.03" stroke="#6E6E6E" stroke-width="2.2" fill="none"/><rect x="0.5" y="0.5" width="46" height="46" fill="none" stroke="#BEBEBE" stroke-width="1"/></svg>
<svg style="position:absolute;left:1170px;top:225px;" width="47" height="47" viewBox="0 0 47 47"><rect x="0" y="0" width="47" height="47" fill="#3A3A3A"/><circle cx="22.5" cy="22.5" r="21" fill="url(#gs)"/><path d="M42.03 20.4 A19.5 19.5 0 0 1 19.35 42.03" stroke="#6E6E6E" stroke-width="2.2" fill="none"/><rect x="0.5" y="0.5" width="46" height="46" fill="none" stroke="#BEBEBE" stroke-width="1"/></svg>
<svg style="position:absolute;left:1221px;top:225px;" width="47" height="47" viewBox="0 0 47 47"><rect x="0" y="0" width="47" height="47" fill="#3A3A3A"/><circle cx="22.5" cy="22.5" r="21" fill="url(#gs)"/><path d="M42.03 20.4 A19.5 19.5 0 0 1 19.35 42.03" stroke="#6E6E6E" stroke-width="2.2" fill="none"/><rect x="0.5" y="0.5" width="46" height="46" fill="none" stroke="#BEBEBE" stroke-width="1"/></svg>
<svg style="position:absolute;left:1272px;top:225px;" width="47" height="47" viewBox="0 0 47 47"><rect x="0" y="0" width="47" height="47" fill="#3A3A3A"/><circle cx="22.5" cy="22.5" r="21" fill="url(#gs)"/><path d="M42.03 20.4 A19.5 19.5 0 0 1 19.35 42.03" stroke="#6E6E6E" stroke-width="2.2" fill="none"/><rect x="0.5" y="0.5" width="46" height="46" fill="none" stroke="#BEBEBE" stroke-width="1"/></svg>
<svg style="position:absolute;left:1017px;top:275px;" width="47" height="47" viewBox="0 0 47 47"><rect x="0" y="0" width="47" height="47" fill="#3A3A3A"/><circle cx="22.5" cy="22.5" r="21" fill="url(#gs)"/><path d="M42.03 20.4 A19.5 19.5 0 0 1 19.35 42.03" stroke="#6E6E6E" stroke-width="2.2" fill="none"/><rect x="0.5" y="0.5" width="46" height="46" fill="none" stroke="#BEBEBE" stroke-width="1"/></svg>
<svg style="position:absolute;left:1068px;top:275px;" width="47" height="47" viewBox="0 0 47 47"><rect x="0" y="0" width="47" height="47" fill="#3A3A3A"/><circle cx="22.5" cy="22.5" r="21" fill="url(#gs)"/><path d="M42.03 20.4 A19.5 19.5 0 0 1 19.35 42.03" stroke="#6E6E6E" stroke-width="2.2" fill="none"/><rect x="0.5" y="0.5" width="46" height="46" fill="none" stroke="#BEBEBE" stroke-width="1"/></svg>
<svg style="position:absolute;left:1119px;top:275px;" width="47" height="47" viewBox="0 0 47 47"><rect x="0" y="0" width="47" height="47" fill="#3A3A3A"/><circle cx="22.5" cy="22.5" r="21" fill="url(#gs)"/><path d="M42.03 20.4 A19.5 19.5 0 0 1 19.35 42.03" stroke="#6E6E6E" stroke-width="2.2" fill="none"/><rect x="0.5" y="0.5" width="46" height="46" fill="none" stroke="#BEBEBE" stroke-width="1"/></svg>
<svg style="position:absolute;left:1170px;top:275px;" width="47" height="47" viewBox="0 0 47 47"><rect x="0" y="0" width="47" height="47" fill="#3A3A3A"/><circle cx="22.5" cy="22.5" r="21" fill="url(#gs)"/><path d="M42.03 20.4 A19.5 19.5 0 0 1 19.35 42.03" stroke="#6E6E6E" stroke-width="2.2" fill="none"/><rect x="0.5" y="0.5" width="46" height="46" fill="none" stroke="#BEBEBE" stroke-width="1"/></svg>
<svg style="position:absolute;left:1221px;top:275px;" width="47" height="47" viewBox="0 0 47 47"><rect x="0" y="0" width="47" height="47" fill="#3A3A3A"/><circle cx="22.5" cy="22.5" r="21" fill="url(#gs)"/><path d="M42.03 20.4 A19.5 19.5 0 0 1 19.35 42.03" stroke="#6E6E6E" stroke-width="2.2" fill="none"/><rect x="0.5" y="0.5" width="46" height="46" fill="none" stroke="#BEBEBE" stroke-width="1"/></svg>
<svg style="position:absolute;left:1272px;top:275px;" width="47" height="47" viewBox="0 0 47 47"><rect x="0" y="0" width="47" height="47" fill="#3A3A3A"/><circle cx="22.5" cy="22.5" r="21" fill="url(#gs)"/><path d="M42.03 20.4 A19.5 19.5 0 0 1 19.35 42.03" stroke="#6E6E6E" stroke-width="2.2" fill="none"/><rect x="0.5" y="0.5" width="46" height="46" fill="none" stroke="#BEBEBE" stroke-width="1"/></svg>
<div style="left:1323px;top:122px;width:17px;height:201px;background:#D0D0D0;"></div>
<div style="left:1323px;top:122px;width:17px;height:15px;background:#C8C8C8;box-shadow:inset 1px 1px 0 #fff, inset -1px -1px 0 #404040, inset -2px -2px 0 #808080;box-shadow:inset 1px 1px 0 #fff, inset -1px -1px 0 #404040;"></div>
<svg style="position:absolute;left:1323px;top:122px;" width="17" height="15" viewBox="0 0 17 15"><path d="M4.5 10 L8.5 6 L12.5 10Z" fill="#808080"/></svg>
<div style="left:1323px;top:308px;width:17px;height:15px;background:#C8C8C8;box-shadow:inset 1px 1px 0 #fff, inset -1px -1px 0 #404040, inset -2px -2px 0 #808080;box-shadow:inset 1px 1px 0 #fff, inset -1px -1px 0 #404040;"></div>
<svg style="position:absolute;left:1323px;top:308px;" width="17" height="15" viewBox="0 0 17 15"><path d="M4.5 5 L8.5 9 L12.5 5Z" fill="#808080"/></svg>
<div style="left:1014px;top:325px;width:308px;height:16px;background:#D0D0D0;box-shadow:inset 0 -1px 0 #808080;"></div>
<div style="left:1014px;top:325px;width:15px;height:16px;background:#C8C8C8;box-shadow:inset 1px 1px 0 #fff, inset -1px -1px 0 #404040, inset -2px -2px 0 #808080;box-shadow:inset 1px 1px 0 #fff, inset -1px -1px 0 #404040;"></div>
<svg style="position:absolute;left:1014px;top:325px;" width="15" height="16" viewBox="0 0 15 16"><path d="M10 4.0 L6 8.0 L10 12.0Z" fill="#808080"/></svg>
<div style="left:1307px;top:325px;width:15px;height:16px;background:#C8C8C8;box-shadow:inset 1px 1px 0 #fff, inset -1px -1px 0 #404040, inset -2px -2px 0 #808080;box-shadow:inset 1px 1px 0 #fff, inset -1px -1px 0 #404040;"></div>
<svg style="position:absolute;left:1307px;top:325px;" width="15" height="16" viewBox="0 0 15 16"><path d="M5 4.0 L9 8.0 L5 12.0Z" fill="#808080"/></svg>
<svg style="position:absolute;left:1344px;top:125px;" width="20" height="19" viewBox="0 0 20 19"><circle cx="9" cy="8" r="7" fill="#707070"/><circle cx="7" cy="6" r="3" fill="#D8D8D8"/><path d="M15 15 L17 13 L17 15Z" fill="#000"/></svg>
<div style="left:1342px;top:147px;width:23px;height:22px;background:#F0C850;box-shadow:inset 1px 1px 0 #fff, inset -1px -1px 0 #808080;"></div>
<svg style="position:absolute;left:1344px;top:149px;" width="20" height="19" viewBox="0 0 20 19"><circle cx="11" cy="10" r="7" fill="#707070" stroke="#333" stroke-dasharray="2 1"/><circle cx="9" cy="8" r="2.5" fill="#D0D0D0"/></svg>
<div style="left:1342px;top:170px;width:23px;height:22px;background:#F0C850;box-shadow:inset 1px 1px 0 #fff, inset -1px -1px 0 #808080;"></div>
<svg style="position:absolute;left:1344px;top:172px;" width="20" height="19" viewBox="0 0 20 19"><path d="M3 3h4v4h-4z M11 3h4v4h-4z M7 7h4v4h-4z M15 7h4v4h-4z M3 11h4v4h-4z M11 11h4v4h-4z M7 15h4v4h-4z M15 15h4v4h-4z" fill="#000"/><rect x="3" y="3" width="16" height="16" fill="none" stroke="#000" stroke-width="0"/></svg>
<svg style="position:absolute;left:1344px;top:197px;" width="20" height="19" viewBox="0 0 20 19"><rect x="2" y="2" width="14" height="12" fill="#707070" stroke="#202020"/><path d="M16 16 L18 14 L18 16Z" fill="#000"/></svg>
<svg style="position:absolute;left:1344px;top:221px;" width="20" height="19" viewBox="0 0 20 19"><rect x="3" y="3" width="3" height="12" fill="#D0F0C0"/><rect x="6" y="3" width="3" height="12" fill="#90E0A0"/><rect x="9" y="3" width="3" height="12" fill="#C040A0"/><rect x="12" y="3" width="3" height="12" fill="#602060"/><rect x="3" y="13" width="12" height="2" fill="#111"/></svg>
<svg style="position:absolute;left:1344px;top:245px;" width="20" height="19" viewBox="0 0 20 19"><path d="M2 5 L12 2 L17 14 L7 17Z" fill="#fff" stroke="#111" stroke-width="1.5"/><path d="M4 8 L14 5 M6 12 L15 10" stroke="#111"/></svg>
<svg style="position:absolute;left:1344px;top:270px;" width="20" height="19" viewBox="0 0 20 19"><rect x="2" y="2" width="12" height="10" fill="#fff" stroke="#3030A0"/><rect x="2" y="2" width="12" height="3" fill="#3030A0"/><circle cx="13" cy="13" r="5" fill="#606060"/></svg>
<svg style="position:absolute;left:1344px;top:294px;" width="20" height="19" viewBox="0 0 20 19"><circle cx="5" cy="5" r="3" fill="#206040"/><circle cx="11" cy="5" r="3" fill="#3050C0"/><circle cx="5" cy="11" r="3" fill="#C03030"/><path d="M9 8 L9 18 L12 15 L15 19 L17 18 L14 14 L18 14Z" fill="#000"/></svg>
<svg style="position:absolute;left:1344px;top:318px;" width="20" height="19" viewBox="0 0 20 19"><path d="M3 2 V16 M3 8 H7 M3 14 H7" stroke="#111" stroke-dasharray="1 1"/><circle cx="12" cy="6" r="4" fill="#2A50C0"/><circle cx="12" cy="14" r="4" fill="#2A50C0"/></svg>
<div style="left:1016px;top:351px;width:1px;height:18px;background:#808080;box-shadow:1px 0 0 #fff;"></div>
<div style="left:1067px;top:351px;width:1px;height:18px;background:#808080;box-shadow:1px 0 0 #fff;"></div>
<div style="left:1098px;top:351px;width:1px;height:18px;background:#808080;box-shadow:1px 0 0 #fff;"></div>
<div style="left:1129px;top:351px;width:1px;height:18px;background:#808080;box-shadow:1px 0 0 #fff;"></div>
<div style="left:1160px;top:351px;width:1px;height:18px;background:#808080;box-shadow:1px 0 0 #fff;"></div>
<div style="left:1192px;top:351px;width:1px;height:18px;background:#808080;box-shadow:1px 0 0 #fff;"></div>
<div style="left:1222px;top:351px;width:1px;height:18px;background:#808080;box-shadow:1px 0 0 #fff;"></div>
<div style="left:1254px;top:351px;width:1px;height:18px;background:#808080;box-shadow:1px 0 0 #fff;"></div>
<div style="left:1285px;top:351px;width:1px;height:18px;background:#808080;box-shadow:1px 0 0 #fff;"></div>
<div style="left:1289px;top:349px;width:22px;height:22px;background:#F0C850;box-shadow:inset 1px 1px 0 #fff, inset -1px -1px 0 #808080;"></div>
<svg style="position:absolute;left:1019px;top:352px;" width="18" height="18" viewBox="0 0 18 18"><path d="M2 2 L7 7 M7 3 V7 H3" stroke="#111" stroke-width="1.8" fill="none"/><circle cx="11" cy="12" r="5.5" fill="#2040C0"/><circle cx="10" cy="11" r="1.5" fill="#fff"/></svg>
<svg style="position:absolute;left:1042px;top:352px;" width="18" height="18" viewBox="0 0 18 18"><circle cx="5" cy="5" r="4" fill="#888"/><path d="M8 6 C12 4 14 9 9 11 L13 11 M2 16 L14 16 L17 11 L6 11Z" stroke="#888" stroke-width="1.3" fill="none"/></svg>
<svg style="position:absolute;left:1073px;top:352px;" width="18" height="18" viewBox="0 0 18 18"><circle cx="5" cy="4" r="3.5" fill="#2040C0"/><path d="M3 8 C2 12 5 13 8 13" stroke="#111" stroke-width="1.5" fill="none"/><rect x="9" y="8" width="7" height="7" fill="#fff" stroke="#303070" stroke-width="1.3"/></svg>
<svg style="position:absolute;left:1104px;top:352px;" width="18" height="18" viewBox="0 0 18 18"><path d="M2 2 L14 15 M14 2 L2 15" stroke="#111" stroke-width="2"/></svg>
<svg style="position:absolute;left:1135px;top:352px;" width="18" height="18" viewBox="0 0 18 18"><circle cx="11" cy="5" r="4.5" fill="#2040C0"/><circle cx="5" cy="11" r="4.5" fill="#2040C0"/><circle cx="10" cy="4" r="1.2" fill="#fff"/><circle cx="4" cy="10" r="1.2" fill="#fff"/></svg>
<svg style="position:absolute;left:1166px;top:352px;" width="18" height="18" viewBox="0 0 18 18"><path d="M7 2 L3 10 M7 2 L11 10 M3 10 V14 M11 10 V14" stroke="#999" stroke-width="1.3" fill="none"/><circle cx="3" cy="14" r="2" fill="none" stroke="#999"/><circle cx="11" cy="14" r="2" fill="none" stroke="#999"/></svg>
<svg style="position:absolute;left:1197px;top:352px;" width="18" height="18" viewBox="0 0 18 18"><circle cx="4" cy="4" r="3.5" fill="#2040C0"/><path d="M8 3 C11 2 12 5 12 7" stroke="#111" stroke-width="1.3" fill="none"/><rect x="8" y="8" width="9" height="9" fill="#111"/><rect x="10" y="8" width="5" height="4" fill="#E0E040"/></svg>
<svg style="position:absolute;left:1229px;top:352px;" width="18" height="18" viewBox="0 0 18 18"><rect x="1" y="1" width="15" height="15" fill="#D8D8E0" stroke="#999"/><ellipse cx="8.5" cy="8.5" rx="4" ry="5" fill="none" stroke="#2030A0" stroke-width="2.5"/></svg>
<svg style="position:absolute;left:1259px;top:352px;" width="18" height="18" viewBox="0 0 18 18"><path d="M2 5 L9 2 L16 5 L16 13 L9 16 L2 13Z" fill="#2030A0"/><path d="M4 6 L8 8 L4 10Z M10 9 L14 7 L14 11Z" fill="#fff"/></svg>
<svg style="position:absolute;left:1291px;top:352px;" width="18" height="18" viewBox="0 0 18 18"><path d="M5 3 V18 M12 3 V18" stroke="#111" stroke-width="1.8"/><path d="M9 3 L5 1 L1 6" stroke="#111" fill="none"/><path d="M12 2 L9 6 M12 2 L15 6" stroke="#111" stroke-width="1.5"/></svg>
<svg style="position:absolute;left:1315px;top:352px;" width="18" height="18" viewBox="0 0 18 18"><circle cx="10" cy="11" r="5" fill="none" stroke="#888" stroke-width="1.5"/><path d="M2 8 L7 3 L7 6 H12 V10 H7 V13Z" fill="#111"/></svg>
<svg style="position:absolute;left:1338px;top:352px;" width="18" height="18" viewBox="0 0 18 18"><circle cx="8" cy="5" r="4" fill="none" stroke="#888" stroke-width="1.5"/><circle cx="8" cy="14" r="4" fill="none" stroke="#888" stroke-width="1.5"/><path d="M4 10 H11 V7 L16 12 L11 17 V14 H4Z" fill="#111"/></svg>
<div style="left:1014px;top:384.94px;font-size:12px;line-height:13.8px;color:#000;transform:scaleX(0.8555);transform-origin:0 0;white-space:pre;">Diffuse Color:</div>
<svg style="position:absolute;left:1090px;top:379px;" width="16" height="16" viewBox="0 0 16 16"><path d="M2 2 L5 1 L8 4 L7 7Z" fill="#111"/><path d="M6 5 L14 13 L13 14 L5 6" fill="#fff" stroke="#111"/></svg>
<div style="left:1113px;top:377px;width:150px;height:21px;background:#E4E4E4;box-shadow:inset 1px 1px 0 #808080, inset 2px 2px 0 #404040, inset -1px -1px 0 #fff;"></div>
<div style="left:1246px;top:379px;width:15px;height:17px;background:#C8C8C8;box-shadow:inset 1px 1px 0 #fff, inset -1px -1px 0 #404040, inset -2px -2px 0 #808080;box-shadow:inset 1px 1px 0 #fff, inset -1px -1px 0 #404040;"></div>
<svg style="position:absolute;left:1246px;top:379px;" width="15" height="17" viewBox="0 0 15 17"><path d="M4 6.5 L11 6.5 L7.5 10.5Z" fill="#000"/></svg>
<div style="left:1117px;top:382.94px;font-size:12px;line-height:13.8px;color:#000;white-space:pre;">Map #55</div>
<div style="left:1268px;top:377px;width:89px;height:21px;background:#C8C8C8;box-shadow:inset 1px 1px 0 #fff, inset -1px -1px 0 #404040, inset -2px -2px 0 #808080;box-shadow:inset 1px 1px 0 #E8E8E8, inset -1px -1px 0 #707070;"></div>
<div style="left:1304.5px;top:381.94px;font-size:12px;line-height:13.8px;color:#000;transform:scaleX(0.8569);transform-origin:0 0;white-space:pre;">Mix</div>
<div style="left:1018px;top:402px;width:335px;height:664px;box-shadow:inset 1px 1px 0 #808080, inset 2px 2px 0 #fff;"></div>
<div style="left:1021px;top:417px;width:329px;height:249px;border:1px solid #808080;box-shadow:1px 1px 0 #fff, inset 1px 1px 0 #fff;"></div>
<div style="left:1025px;top:408px;width:322px;height:16px;background:#B0B0B0;border:1px solid #000;box-shadow:inset 1px 1px 0 #D0D0D0;"></div>
<div style="left:1031px;top:409.94px;font-size:12px;line-height:13.8px;color:#000;white-space:pre;">-</div>
<div style="left:1150px;top:410.94px;font-size:12px;line-height:13.8px;color:#000;transform:scaleX(0.8570);transform-origin:0 0;white-space:pre;">Mix Parameters</div>
<div style="left:1244.5px;top:436.94px;font-size:12px;line-height:13.8px;color:#000;transform:scaleX(0.9201);transform-origin:0 0;white-space:pre;">Maps</div>
<div style="left:1030px;top:463px;width:41px;height:20px;background:#C8C8C8;box-shadow:inset 1px 1px 0 #fff, inset -1px -1px 0 #404040, inset -2px -2px 0 #808080;box-shadow:inset 1px 1px 0 #E8E8E8, inset -1px -1px 0 #707070;"></div>
<div style="left:1037.0px;top:467.94px;font-size:12px;line-height:13.8px;color:#000;transform:scaleX(0.8995);transform-origin:0 0;white-space:pre;">Swap</div>
<div style="left:1076px;top:458.94px;font-size:12px;line-height:13.8px;color:#000;transform:scaleX(0.8818);transform-origin:0 0;white-space:pre;">Color #1</div>
<div style="left:1076px;top:484.94px;font-size:12px;line-height:13.8px;color:#000;transform:scaleX(0.8818);transform-origin:0 0;white-space:pre;">Color #2</div>
<div style="left:1122px;top:449px;width:60px;height:24px;background:#000;box-shadow:inset 0 0 0 1px #404040;"></div>
<div style="left:1122px;top:477px;width:60px;height:24px;background:#fff;box-shadow:inset 1px 1px 0 #000, inset -1px -1px 0 #808080;"></div>
<div style="left:1184px;top:450px;width:144px;height:20px;background:#C8C8C8;box-shadow:inset 1px 1px 0 #fff, inset -1px -1px 0 #404040, inset -2px -2px 0 #808080;box-shadow:inset 1px 1px 0 #E8E8E8, inset -1px -1px 0 #707070;"></div>
<div style="left:1186px;top:454.94px;font-size:12px;line-height:13.8px;color:#000;transform:scaleX(0.8419);transform-origin:0 0;white-space:pre;">ap #29 (Bark-AppleOld-04.jpg)</div>
<div style="left:1184px;top:479px;width:144px;height:20px;background:#C8C8C8;box-shadow:inset 1px 1px 0 #fff, inset -1px -1px 0 #404040, inset -2px -2px 0 #808080;box-shadow:inset 1px 1px 0 #E8E8E8, inset -1px -1px 0 #707070;"></div>
<div style="left:1212.5px;top:483.94px;font-size:12px;line-height:13.8px;color:#000;transform:scaleX(0.8816);transform-origin:0 0;white-space:pre;">Map #49  ( Noise )</div>
<div style="left:1184px;top:506px;width:144px;height:19px;background:#C8C8C8;box-shadow:inset 1px 1px 0 #fff, inset -1px -1px 0 #404040, inset -2px -2px 0 #808080;box-shadow:inset 1px 1px 0 #E8E8E8, inset -1px -1px 0 #707070;"></div>
<div style="left:1190.0px;top:509.94px;font-size:12px;line-height:13.8px;color:#000;transform:scaleX(0.8838);transform-origin:0 0;white-space:pre;">Map #48  ( Gradient Ramp )</div>
<div style="left:1331px;top:453px;width:13px;height:13px;background:#E8E8E8;box-shadow:inset 1px 1px 0 #808080, inset 2px 2px 0 #404040, inset -1px -1px 0 #fff;"></div>
<svg style="position:absolute;left:1331px;top:453px;" width="13" height="13" viewBox="0 0 13 13"><path d="M3 6 L5.5 9 L10 3.5" stroke="#000" stroke-width="2" fill="none"/></svg>
<div style="left:1331px;top:482px;width:13px;height:13px;background:#E8E8E8;box-shadow:inset 1px 1px 0 #808080, inset 2px 2px 0 #404040, inset -1px -1px 0 #fff;"></div>
<svg style="position:absolute;left:1331px;top:482px;" width="13" height="13" viewBox="0 0 13 13"><path d="M3 6 L5.5 9 L10 3.5" stroke="#000" stroke-width="2" fill="none"/></svg>
<div style="left:1331px;top:509px;width:13px;height:13px;background:#E8E8E8;box-shadow:inset 1px 1px 0 #808080, inset 2px 2px 0 #404040, inset -1px -1px 0 #fff;"></div>
<svg style="position:absolute;left:1331px;top:509px;" width="13" height="13" viewBox="0 0 13 13"><path d="M3 6 L5.5 9 L10 3.5" stroke="#000" stroke-width="2" fill="none"/></svg>
<div style="left:1055px;top:511.94px;font-size:12px;line-height:13.8px;color:#000;transform:scaleX(0.8786);transform-origin:0 0;white-space:pre;">Mix Amount:</div>
<div style="left:1119px;top:509px;width:43px;height:16px;background:#D8D8D8;box-shadow:inset 1px 1px 0 #404040, inset -1px -1px 0 #fff;"></div>
<div style="left:1122px;top:511.94px;font-size:12px;line-height:13.8px;color:#909090;white-space:pre;">0.0</div>
<div style="left:1165px;top:509px;width:10px;height:16px;background:#C8C8C8;"></div>
<svg style="position:absolute;left:1165px;top:509px;" width="10" height="16" viewBox="0 0 10 16"><path d="M2.0 6.5 L5.0 3.0 L8.0 6.5Z M2.0 9.5 L5.0 13.0 L8.0 9.5Z" fill="#000"/></svg>
<div style="left:1035px;top:543px;width:302px;height:112px;border:1px solid #808080;box-shadow:1px 1px 0 #fff, inset 1px 1px 0 #fff;"></div>
<div style="left:1041px;top:535px;width:64px;height:14px;background:#C8C8C8;"></div>
<div style="left:1044px;top:536.94px;font-size:12px;line-height:13.8px;color:#000;transform:scaleX(0.8907);transform-origin:0 0;white-space:pre;">Mixing curve</div>
<div style="left:1083px;top:557px;width:90px;height:89px;background:#fff;box-shadow:inset 2px 2px 0 #000, inset -1px -1px 0 #808080;"></div>
<svg style="position:absolute;left:1083px;top:557px;" width="90" height="89" viewBox="0 0 90 89"><path d="M31 86 C38 72 42 60 45 42 C48 24 52 12 59 3" stroke="#000" stroke-width="1.2" fill="none"/></svg>
<div style="left:1196px;top:560px;width:13px;height:13px;background:#E8E8E8;box-shadow:inset 1px 1px 0 #808080, inset 2px 2px 0 #404040, inset -1px -1px 0 #fff;"></div>
<div style="left:1214px;top:561.94px;font-size:12px;line-height:13.8px;color:#000;transform:scaleX(0.8997);transform-origin:0 0;white-space:pre;">Use Curve</div>
<div style="left:1227px;top:586.94px;font-size:12px;line-height:13.8px;color:#000;transform:scaleX(0.8714);transform-origin:0 0;white-space:pre;">Transition zone:</div>
<div style="left:1194px;top:604.94px;font-size:12px;line-height:13.8px;color:#000;transform:scaleX(0.8885);transform-origin:0 0;white-space:pre;">Upper:</div>
<div style="left:1194px;top:627.94px;font-size:12px;line-height:13.8px;color:#000;transform:scaleX(0.8885);transform-origin:0 0;white-space:pre;">Lower:</div>
<div style="left:1236px;top:603px;width:43px;height:16px;background:#E0E0E0;box-shadow:inset 1px 1px 0 #000, inset -1px -1px 0 #fff;"></div>
<div style="left:1240px;top:605.94px;font-size:12px;line-height:13.8px;color:#000;white-space:pre;">0.7</div>
<div style="left:1281px;top:603px;width:11px;height:16px;background:#C8C8C8;"></div>
<svg style="position:absolute;left:1281px;top:603px;" width="11" height="16" viewBox="0 0 11 16"><path d="M2.5 6.5 L5.5 3.0 L8.5 6.5Z M2.5 9.5 L5.5 13.0 L8.5 9.5Z" fill="#000"/></svg>
<div style="left:1236px;top:627px;width:43px;height:16px;background:#E0E0E0;box-shadow:inset 1px 1px 0 #000, inset -1px -1px 0 #fff;"></div>
<div style="left:1240px;top:629.94px;font-size:12px;line-height:13.8px;color:#000;white-space:pre;">0.3</div>
<div style="left:1281px;top:627px;width:11px;height:16px;background:#C8C8C8;"></div>
<svg style="position:absolute;left:1281px;top:627px;" width="11" height="16" viewBox="0 0 11 16"><path d="M2.5 6.5 L5.5 3.0 L8.5 6.5Z M2.5 9.5 L5.5 13.0 L8.5 9.5Z" fill="#000"/></svg>
<div style="left:1025px;top:673px;width:322px;height:16px;background:#B0B0B0;border:1px solid #000;box-shadow:inset 1px 1px 0 #D0D0D0;"></div>
<div style="left:1031px;top:674.94px;font-size:12px;line-height:13.8px;color:#000;white-space:pre;">+</div>
<div style="left:1170px;top:675.94px;font-size:12px;line-height:13.8px;color:#000;transform:scaleX(0.8889);transform-origin:0 0;white-space:pre;">Output</div>
<div style="left:1019px;top:1058px;width:337px;height:1px;background:#fff;"></div>
<div style="left:1356px;top:404px;width:1px;height:655px;background:#fff;"></div>
<div style="left:1376px;top:77px;width:364px;height:451px;background:#C8C8C8;box-shadow:inset 1px 1px 0 #D4D0C8, inset 2px 2px 0 #fff, inset -1px 0 0 #404040, inset -2px 0 0 #808080;"></div>
<div style="left:1380px;top:80px;width:356px;height:17px;background:linear-gradient(90deg,#0A246A 0%,#2A5AA0 40%,#A6CAF0 100%);"></div>
<svg style="position:absolute;left:1381px;top:80px;" width="16" height="16" viewBox="0 0 16 16"><rect width="16" height="16" fill="#0A246A"/><path d="M12.5 3.2 C9 1.5 3.5 2.5 3 7.5 C2.8 11.5 6.5 13.5 9.5 12.8 C12.5 12 13 9 11 8 C9.5 7.3 7.5 8.5 8.5 10" stroke="#CFEFFF" stroke-width="1.8" fill="none"/></svg>
<div style="left:1398px;top:82.94px;font-size:12px;line-height:13.8px;color:#fff;font-weight:bold;transform:scaleX(1.0170);transform-origin:0 0;white-space:pre;">Material Editor - Initial01</div>
<div style="left:1686px;top:81px;width:15px;height:13px;background:#D4D0C8;box-shadow:inset 1px 1px 0 #fff, inset -1px -1px 0 #404040, inset -2px -2px 0 #808080;box-shadow:inset 1px 1px 0 #fff, inset -1px -1px 0 #404040, inset -2px -2px 0 #808080;"></div>
<div style="left:1702px;top:81px;width:15px;height:13px;background:#D4D0C8;box-shadow:inset 1px 1px 0 #fff, inset -1px -1px 0 #404040, inset -2px -2px 0 #808080;box-shadow:inset 1px 1px 0 #fff, inset -1px -1px 0 #404040, inset -2px -2px 0 #808080;"></div>
<div style="left:1720px;top:81px;width:15px;height:13px;background:#D4D0C8;box-shadow:inset 1px 1px 0 #fff, inset -1px -1px 0 #404040, inset -2px -2px 0 #808080;box-shadow:inset 1px 1px 0 #fff, inset -1px -1px 0 #404040, inset -2px -2px 0 #808080;"></div>
<svg style="position:absolute;left:1686px;top:81px;" width="15" height="13" viewBox="0 0 15 13"><rect x="4" y="8" width="6" height="2" fill="#000"/></svg>
<svg style="position:absolute;left:1702px;top:81px;" width="15" height="13" viewBox="0 0 15 13"><rect x="3.5" y="2.5" width="8" height="7" fill="none" stroke="#000"/><rect x="3" y="2" width="9" height="2" fill="#000"/></svg>
<svg style="position:absolute;left:1720px;top:81px;" width="15" height="13" viewBox="0 0 15 13"><path d="M4 3 L11 10 M11 3 L4 10" stroke="#000" stroke-width="1.6"/></svg>
<div style="left:1380px;top:97px;width:356px;height:20px;background:#D4D0C8;"></div>
<div style="left:1385px;top:101.94px;font-size:12px;line-height:13.8px;color:#000;transform:scaleX(0.8902);transform-origin:0 0;white-space:pre;">Material</div>
<div style="left:1434px;top:101.94px;font-size:12px;line-height:13.8px;color:#000;transform:scaleX(0.8994);transform-origin:0 0;white-space:pre;">Navigation</div>
<div style="left:1497px;top:101.94px;font-size:12px;line-height:13.8px;color:#000;transform:scaleX(0.9191);transform-origin:0 0;white-space:pre;">Options</div>
<div style="left:1546px;top:101.94px;font-size:12px;line-height:13.8px;color:#000;transform:scaleX(0.9047);transform-origin:0 0;white-space:pre;">Utilities</div>
<div style="left:1384px;top:120px;width:308px;height:202px;background:#000;"></div>
<svg style="position:absolute;left:1387px;top:123px;" width="47" height="47" viewBox="0 0 47 47"><rect x="0" y="0" width="47" height="47" fill="#3A3A3A"/><circle cx="23.5" cy="23.5" r="21" fill="#0A0A0A"/><path d="M2.6 21.5 A21 21 0 0 1 44.4 18.5 L38.2 19.5 L30.9 17.5 L23.5 20.5 L15.1 18.5 L8.8 22.5Z" fill="url(#gsnow)"/><g fill="#707070" fill-opacity="0.6"><ellipse cx="17.5" cy="11.5" rx="3" ry="1.5"/><ellipse cx="28.5" cy="15.5" rx="4" ry="1.5"/><ellipse cx="13.5" cy="18.5" rx="3" ry="1"/><ellipse cx="32.5" cy="9.5" rx="2" ry="1"/></g><rect x="0.5" y="0.5" width="46" height="46" fill="none" stroke="#BEBEBE" stroke-width="1"/></svg>
<svg style="position:absolute;left:1438px;top:123px;" width="47" height="47" viewBox="0 0 47 47"><rect x="0" y="0" width="47" height="47" fill="url(#chk)"/><circle cx="23.5" cy="23.5" r="21" fill="url(#grock)"/><path d="M24.5 2.5 A21 21 0 0 1 24.5 44.5Z" fill="url(#gyel)" fill-opacity="0.9"/><path d="M5.650000000000002 13.0 A21 21 0 0 1 24.5 2.5 L24.5 17.2 L15.1 19.3 L4.599999999999998 18.25Z" fill="#E8F0E0" fill-opacity="0.85"/><rect x="0.5" y="0.5" width="46" height="46" fill="none" stroke="#BEBEBE" stroke-width="1"/></svg>
<svg style="position:absolute;left:1489px;top:123px;" width="47" height="47" viewBox="0 0 47 47"><rect x="0" y="0" width="47" height="47" fill="#fff"/><polygon points="0,7 7,0 40,0 47,7 47,40 40,47 7,47 0,40" fill="url(#chk)"/><rect width="47" height="47" fill="#fff" fill-opacity="0"/><circle cx="23.5" cy="23.5" r="21" fill="url(#grock)"/><path d="M2.5 22.5 A21 21 0 0 1 44.5 22.5 L36.1 18.5 L27.7 22.5 L17.2 19.5 L8.8 23.5Z" fill="#E8E8E8" fill-opacity="0.85"/><g fill="#808080" fill-opacity="0.5"><ellipse cx="17.5" cy="11.5" rx="3" ry="1.5"/><ellipse cx="28.5" cy="15.5" rx="4" ry="1.5"/><ellipse cx="13.5" cy="18.5" rx="3" ry="1"/><ellipse cx="32.5" cy="9.5" rx="2" ry="1"/></g><rect x="1.0" y="1.0" width="45" height="45" fill="none" stroke="#fff" stroke-width="2"/></svg>
<svg style="position:absolute;left:1540px;top:123px;" width="47" height="47" viewBox="0 0 47 47"><rect x="0" y="0" width="47" height="47" fill="#3A3A3A"/><circle cx="22.5" cy="22.5" r="21" fill="url(#gs)"/><path d="M42.03 20.4 A19.5 19.5 0 0 1 19.35 42.03" stroke="#6E6E6E" stroke-width="2.2" fill="none"/><rect x="0.5" y="0.5" width="46" height="46" fill="none" stroke="#BEBEBE" stroke-width="1"/></svg>
<svg style="position:absolute;left:1591px;top:123px;" width="47" height="47" viewBox="0 0 47 47"><rect x="0" y="0" width="47" height="47" fill="#3A3A3A"/><circle cx="22.5" cy="22.5" r="21" fill="url(#gs)"/><path d="M42.03 20.4 A19.5 19.5 0 0 1 19.35 42.03" stroke="#6E6E6E" stroke-width="2.2" fill="none"/><rect x="0.5" y="0.5" width="46" height="46" fill="none" stroke="#BEBEBE" stroke-width="1"/></svg>
<svg style="position:absolute;left:1642px;top:123px;" width="47" height="47" viewBox="0 0 47 47"><rect x="0" y="0" width="47" height="47" fill="#3A3A3A"/><circle cx="23.5" cy="23.5" r="21" fill="#0A0A0A"/><path d="M2.6 21.5 A21 21 0 0 1 44.4 18.5 L38.2 19.5 L30.9 17.5 L23.5 20.5 L15.1 18.5 L8.8 22.5Z" fill="url(#gsnow)"/><g fill="#707070" fill-opacity="0.6"><ellipse cx="17.5" cy="11.5" rx="3" ry="1.5"/><ellipse cx="28.5" cy="15.5" rx="4" ry="1.5"/><ellipse cx="13.5" cy="18.5" rx="3" ry="1"/><ellipse cx="32.5" cy="9.5" rx="2" ry="1"/></g><rect x="0.5" y="0.5" width="46" height="46" fill="none" stroke="#BEBEBE" stroke-width="1"/></svg>
<svg style="position:absolute;left:1387px;top:173px;" width="47" height="47" viewBox="0 0 47 47"><rect x="0" y="0" width="47" height="47" fill="#3A3A3A"/><circle cx="22.5" cy="22.5" r="21" fill="url(#gs)"/><path d="M42.03 20.4 A19.5 19.5 0 0 1 19.35 42.03" stroke="#6E6E6E" stroke-width="2.2" fill="none"/><rect x="0.5" y="0.5" width="46" height="46" fill="none" stroke="#BEBEBE" stroke-width="1"/></svg>
<svg style="position:absolute;left:1438px;top:173px;" width="47" height="47" viewBox="0 0 47 47"><rect x="0" y="0" width="47" height="47" fill="#3A3A3A"/><circle cx="22.5" cy="22.5" r="21" fill="url(#gs)"/><path d="M42.03 20.4 A19.5 19.5 0 0 1 19.35 42.03" stroke="#6E6E6E" stroke-width="2.2" fill="none"/><rect x="0.5" y="0.5" width="46" height="46" fill="none" stroke="#BEBEBE" stroke-width="1"/></svg>
<svg style="position:absolute;left:1489px;top:173px;" width="47" height="47" viewBox="0 0 47 47"><rect x="0" y="0" width="47" height="47" fill="#3A3A3A"/><circle cx="22.5" cy="22.5" r="21" fill="url(#gs)"/><path d="M42.03 20.4 A19.5 19.5 0 0 1 19.35 42.03" stroke="#6E6E6E" stroke-width="2.2" fill="none"/><rect x="0.5" y="0.5" width="46" height="46" fill="none" stroke="#BEBEBE" stroke-width="1"/></svg>
<svg style="position:absolute;left:1540px;top:173px;" width="47" height="47" viewBox="0 0 47 47"><rect x="0" y="0" width="47" height="47" fill="#3A3A3A"/><circle cx="22.5" cy="22.5" r="21" fill="url(#gs)"/><path d="M42.03 20.4 A19.5 19.5 0 0 1 19.35 42.03" stroke="#6E6E6E" stroke-width="2.2" fill="none"/><rect x="0.5" y="0.5" width="46" height="46" fill="none" stroke="#BEBEBE" stroke-width="1"/></svg>
<svg style="position:absolute;left:1591px;top:173px;" width="47" height="47" viewBox="0 0 47 47"><rect x="0" y="0" width="47" height="47" fill="#3A3A3A"/><circle cx="22.5" cy="22.5" r="21" fill="url(#gs)"/><path d="M42.03 20.4 A19.5 19.5 0 0 1 19.35 42.03" stroke="#6E6E6E" stroke-width="2.2" fill="none"/><rect x="0.5" y="0.5" width="46" height="46" fill="none" stroke="#BEBEBE" stroke-width="1"/></svg>
<svg style="position:absolute;left:1642px;top:173px;" width="47" height="47" viewBox="0 0 47 47"><rect x="0" y="0" width="47" height="47" fill="#3A3A3A"/><circle cx="22.5" cy="22.5" r="21" fill="url(#gs)"/><path d="M42.03 20.4 A19.5 19.5 0 0 1 19.35 42.03" stroke="#6E6E6E" stroke-width="2.2" fill="none"/><rect x="0.5" y="0.5" width="46" height="46" fill="none" stroke="#BEBEBE" stroke-width="1"/></svg>
<svg style="position:absolute;left:1387px;top:223px;" width="47" height="47" viewBox="0 0 47 47"><rect x="0" y="0" width="47" height="47" fill="#3A3A3A"/><circle cx="22.5" cy="22.5" r="21" fill="url(#gs)"/><path d="M42.03 20.4 A19.5 19.5 0 0 1 19.35 42.03" stroke="#6E6E6E" stroke-width="2.2" fill="none"/><rect x="0.5" y="0.5" width="46" height="46" fill="none" stroke="#BEBEBE" stroke-width="1"/></svg>
<svg style="position:absolute;left:1438px;top:223px;" width="47" height="47" viewBox="0 0 47 47"><rect x="0" y="0" width="47" height="47" fill="#3A3A3A"/><circle cx="22.5" cy="22.5" r="21" fill="url(#gs)"/><path d="M42.03 20.4 A19.5 19.5 0 0 1 19.35 42.03" stroke="#6E6E6E" stroke-width="2.2" fill="none"/><rect x="0.5" y="0.5" width="46" height="46" fill="none" stroke="#BEBEBE" stroke-width="1"/></svg>
<svg style="position:absolute;left:1489px;top:223px;" width="47" height="47" viewBox="0 0 47 47"><rect x="0" y="0" width="47" height="47" fill="#3A3A3A"/><circle cx="22.5" cy="22.5" r="21" fill="url(#gs)"/><path d="M42.03 20.4 A19.5 19.5 0 0 1 19.35 42.03" stroke="#6E6E6E" stroke-width="2.2" fill="none"/><rect x="0.5" y="0.5" width="46" height="46" fill="none" stroke="#BEBEBE" stroke-width="1"/></svg>
<svg style="position:absolute;left:1540px;top:223px;" width="47" height="47" viewBox="0 0 47 47"><rect x="0" y="0" width="47" height="47" fill="#3A3A3A"/><circle cx="22.5" cy="22.5" r="21" fill="url(#gs)"/><path d="M42.03 20.4 A19.5 19.5 0 0 1 19.35 42.03" stroke="#6E6E6E" stroke-width="2.2" fill="none"/><rect x="0.5" y="0.5" width="46" height="46" fill="none" stroke="#BEBEBE" stroke-width="1"/></svg>
<svg style="position:absolute;left:1591px;top:223px;" width="47" height="47" viewBox="0 0 47 47"><rect x="0" y="0" width="47" height="47" fill="#3A3A3A"/><circle cx="22.5" cy="22.5" r="21" fill="url(#gs)"/><path d="M42.03 20.4 A19.5 19.5 0 0 1 19.35 42.03" stroke="#6E6E6E" stroke-width="2.2" fill="none"/><rect x="0.5" y="0.5" width="46" height="46" fill="none" stroke="#BEBEBE" stroke-width="1"/></svg>
<svg style="position:absolute;left:1642px;top:223px;" width="47" height="47" viewBox="0 0 47 47"><rect x="0" y="0" width="47" height="47" fill="#3A3A3A"/><circle cx="22.5" cy="22.5" r="21" fill="url(#gs)"/><path d="M42.03 20.4 A19.5 19.5 0 0 1 19.35 42.03" stroke="#6E6E6E" stroke-width="2.2" fill="none"/><rect x="0.5" y="0.5" width="46" height="46" fill="none" stroke="#BEBEBE" stroke-width="1"/></svg>
<svg style="position:absolute;left:1387px;top:273px;" width="47" height="47" viewBox="0 0 47 47"><rect x="0" y="0" width="47" height="47" fill="#3A3A3A"/><circle cx="22.5" cy="22.5" r="21" fill="url(#gs)"/><path d="M42.03 20.4 A19.5 19.5 0 0 1 19.35 42.03" stroke="#6E6E6E" stroke-width="2.2" fill="none"/><rect x="0.5" y="0.5" width="46" height="46" fill="none" stroke="#BEBEBE" stroke-width="1"/></svg>
<svg style="position:absolute;left:1438px;top:273px;" width="47" height="47" viewBox="0 0 47 47"><rect x="0" y="0" width="47" height="47" fill="#3A3A3A"/><circle cx="22.5" cy="22.5" r="21" fill="url(#gs)"/><path d="M42.03 20.4 A19.5 19.5 0 0 1 19.35 42.03" stroke="#6E6E6E" stroke-width="2.2" fill="none"/><rect x="0.5" y="0.5" width="46" height="46" fill="none" stroke="#BEBEBE" stroke-width="1"/></svg>
<svg style="position:absolute;left:1489px;top:273px;" width="47" height="47" viewBox="0 0 47 47"><rect x="0" y="0" width="47" height="47" fill="#3A3A3A"/><circle cx="22.5" cy="22.5" r="21" fill="url(#gs)"/><path d="M42.03 20.4 A19.5 19.5 0 0 1 19.35 42.03" stroke="#6E6E6E" stroke-width="2.2" fill="none"/><rect x="0.5" y="0.5" width="46" height="46" fill="none" stroke="#BEBEBE" stroke-width="1"/></svg>
<svg style="position:absolute;left:1540px;top:273px;" width="47" height="47" viewBox="0 0 47 47"><rect x="0" y="0" width="47" height="47" fill="#3A3A3A"/><circle cx="22.5" cy="22.5" r="21" fill="url(#gs)"/><path d="M42.03 20.4 A19.5 19.5 0 0 1 19.35 42.03" stroke="#6E6E6E" stroke-width="2.2" fill="none"/><rect x="0.5" y="0.5" width="46" height="46" fill="none" stroke="#BEBEBE" stroke-width="1"/></svg>
<svg style="position:absolute;left:1591px;top:273px;" width="47" height="47" viewBox="0 0 47 47"><rect x="0" y="0" width="47" height="47" fill="#3A3A3A"/><circle cx="22.5" cy="22.5" r="21" fill="url(#gs)"/><path d="M42.03 20.4 A19.5 19.5 0 0 1 19.35 42.03" stroke="#6E6E6E" stroke-width="2.2" fill="none"/><rect x="0.5" y="0.5" width="46" height="46" fill="none" stroke="#BEBEBE" stroke-width="1"/></svg>
<svg style="position:absolute;left:1642px;top:273px;" width="47" height="47" viewBox="0 0 47 47"><rect x="0" y="0" width="47" height="47" fill="#3A3A3A"/><circle cx="22.5" cy="22.5" r="21" fill="url(#gs)"/><path d="M42.03 20.4 A19.5 19.5 0 0 1 19.35 42.03" stroke="#6E6E6E" stroke-width="2.2" fill="none"/><rect x="0.5" y="0.5" width="46" height="46" fill="none" stroke="#BEBEBE" stroke-width="1"/></svg>
<div style="left:1694px;top:120px;width:16px;height:201px;background:#D0D0D0;"></div>
<div style="left:1694px;top:120px;width:16px;height:15px;background:#C8C8C8;box-shadow:inset 1px 1px 0 #fff, inset -1px -1px 0 #404040, inset -2px -2px 0 #808080;box-shadow:inset 1px 1px 0 #fff, inset -1px -1px 0 #404040;"></div>
<svg style="position:absolute;left:1694px;top:120px;" width="16" height="15" viewBox="0 0 16 15"><path d="M4.0 10 L8.0 6 L12.0 10Z" fill="#808080"/></svg>
<div style="left:1694px;top:306px;width:16px;height:15px;background:#C8C8C8;box-shadow:inset 1px 1px 0 #fff, inset -1px -1px 0 #404040, inset -2px -2px 0 #808080;box-shadow:inset 1px 1px 0 #fff, inset -1px -1px 0 #404040;"></div>
<svg style="position:absolute;left:1694px;top:306px;" width="16" height="15" viewBox="0 0 16 15"><path d="M4.0 5 L8.0 9 L12.0 5Z" fill="#808080"/></svg>
<div style="left:1384px;top:324px;width:308px;height:16px;background:#D0D0D0;box-shadow:inset 0 -1px 0 #808080;"></div>
<div style="left:1384px;top:324px;width:15px;height:16px;background:#C8C8C8;box-shadow:inset 1px 1px 0 #fff, inset -1px -1px 0 #404040, inset -2px -2px 0 #808080;box-shadow:inset 1px 1px 0 #fff, inset -1px -1px 0 #404040;"></div>
<svg style="position:absolute;left:1384px;top:324px;" width="15" height="16" viewBox="0 0 15 16"><path d="M10 4.0 L6 8.0 L10 12.0Z" fill="#808080"/></svg>
<div style="left:1677px;top:324px;width:15px;height:16px;background:#C8C8C8;box-shadow:inset 1px 1px 0 #fff, inset -1px -1px 0 #404040, inset -2px -2px 0 #808080;box-shadow:inset 1px 1px 0 #fff, inset -1px -1px 0 #404040;"></div>
<svg style="position:absolute;left:1677px;top:324px;" width="15" height="16" viewBox="0 0 15 16"><path d="M5 4.0 L9 8.0 L5 12.0Z" fill="#808080"/></svg>
<svg style="position:absolute;left:1714px;top:124px;" width="20" height="19" viewBox="0 0 20 19"><circle cx="9" cy="8" r="7" fill="#707070"/><circle cx="7" cy="6" r="3" fill="#D8D8D8"/><path d="M15 15 L17 13 L17 15Z" fill="#000"/></svg>
<div style="left:1712px;top:145px;width:23px;height:22px;background:#F0C850;box-shadow:inset 1px 1px 0 #fff, inset -1px -1px 0 #808080;"></div>
<svg style="position:absolute;left:1714px;top:147px;" width="20" height="19" viewBox="0 0 20 19"><circle cx="11" cy="10" r="7" fill="#707070" stroke="#333" stroke-dasharray="2 1"/><circle cx="9" cy="8" r="2.5" fill="#D0D0D0"/></svg>
<div style="left:1712px;top:170px;width:23px;height:22px;background:#F0C850;box-shadow:inset 1px 1px 0 #fff, inset -1px -1px 0 #808080;"></div>
<svg style="position:absolute;left:1714px;top:172px;" width="20" height="19" viewBox="0 0 20 19"><path d="M3 3h4v4h-4z M11 3h4v4h-4z M7 7h4v4h-4z M15 7h4v4h-4z M3 11h4v4h-4z M11 11h4v4h-4z M7 15h4v4h-4z M15 15h4v4h-4z" fill="#000"/><rect x="3" y="3" width="16" height="16" fill="none" stroke="#000" stroke-width="0"/></svg>
<svg style="position:absolute;left:1714px;top:196px;" width="20" height="19" viewBox="0 0 20 19"><rect x="2" y="2" width="14" height="12" fill="#707070" stroke="#202020"/><path d="M16 16 L18 14 L18 16Z" fill="#000"/></svg>
<svg style="position:absolute;left:1714px;top:221px;" width="20" height="19" viewBox="0 0 20 19"><rect x="3" y="3" width="3" height="12" fill="#D0F0C0"/><rect x="6" y="3" width="3" height="12" fill="#90E0A0"/><rect x="9" y="3" width="3" height="12" fill="#C040A0"/><rect x="12" y="3" width="3" height="12" fill="#602060"/><rect x="3" y="13" width="12" height="2" fill="#111"/></svg>
<svg style="position:absolute;left:1714px;top:245px;" width="20" height="19" viewBox="0 0 20 19"><path d="M2 5 L12 2 L17 14 L7 17Z" fill="#fff" stroke="#111" stroke-width="1.5"/><path d="M4 8 L14 5 M6 12 L15 10" stroke="#111"/></svg>
<svg style="position:absolute;left:1714px;top:270px;" width="20" height="19" viewBox="0 0 20 19"><rect x="2" y="2" width="12" height="10" fill="#fff" stroke="#3030A0"/><rect x="2" y="2" width="12" height="3" fill="#3030A0"/><circle cx="13" cy="13" r="5" fill="#606060"/></svg>
<svg style="position:absolute;left:1714px;top:294px;" width="20" height="19" viewBox="0 0 20 19"><circle cx="5" cy="5" r="3" fill="#206040"/><circle cx="11" cy="5" r="3" fill="#3050C0"/><circle cx="5" cy="11" r="3" fill="#C03030"/><path d="M9 8 L9 18 L12 15 L15 19 L17 18 L14 14 L18 14Z" fill="#000"/></svg>
<svg style="position:absolute;left:1714px;top:318px;" width="20" height="19" viewBox="0 0 20 19"><path d="M3 2 V16 M3 8 H7 M3 14 H7" stroke="#111" stroke-dasharray="1 1"/><circle cx="12" cy="6" r="4" fill="#2A50C0"/><circle cx="12" cy="14" r="4" fill="#2A50C0"/></svg>
<div style="left:1386px;top:350px;width:1px;height:18px;background:#808080;box-shadow:1px 0 0 #fff;"></div>
<div style="left:1438px;top:350px;width:1px;height:18px;background:#808080;box-shadow:1px 0 0 #fff;"></div>
<div style="left:1469px;top:350px;width:1px;height:18px;background:#808080;box-shadow:1px 0 0 #fff;"></div>
<div style="left:1500px;top:350px;width:1px;height:18px;background:#808080;box-shadow:1px 0 0 #fff;"></div>
<div style="left:1531px;top:350px;width:1px;height:18px;background:#808080;box-shadow:1px 0 0 #fff;"></div>
<div style="left:1562px;top:350px;width:1px;height:18px;background:#808080;box-shadow:1px 0 0 #fff;"></div>
<div style="left:1593px;top:350px;width:1px;height:18px;background:#808080;box-shadow:1px 0 0 #fff;"></div>
<div style="left:1624px;top:350px;width:1px;height:18px;background:#808080;box-shadow:1px 0 0 #fff;"></div>
<div style="left:1655px;top:350px;width:1px;height:18px;background:#808080;box-shadow:1px 0 0 #fff;"></div>
<div style="left:1659px;top:348px;width:22px;height:22px;background:#F0C850;box-shadow:inset 1px 1px 0 #fff, inset -1px -1px 0 #808080;"></div>
<svg style="position:absolute;left:1389px;top:351px;" width="18" height="18" viewBox="0 0 18 18"><path d="M2 2 L7 7 M7 3 V7 H3" stroke="#111" stroke-width="1.8" fill="none"/><circle cx="11" cy="12" r="5.5" fill="#2040C0"/><circle cx="10" cy="11" r="1.5" fill="#fff"/></svg>
<svg style="position:absolute;left:1412px;top:351px;" width="18" height="18" viewBox="0 0 18 18"><circle cx="5" cy="5" r="4" fill="#888"/><path d="M8 6 C12 4 14 9 9 11 L13 11 M2 16 L14 16 L17 11 L6 11Z" stroke="#888" stroke-width="1.3" fill="none"/></svg>
<svg style="position:absolute;left:1443px;top:351px;" width="18" height="18" viewBox="0 0 18 18"><circle cx="5" cy="4" r="3.5" fill="#2040C0"/><path d="M3 8 C2 12 5 13 8 13" stroke="#111" stroke-width="1.5" fill="none"/><rect x="9" y="8" width="7" height="7" fill="#fff" stroke="#303070" stroke-width="1.3"/></svg>
<svg style="position:absolute;left:1474px;top:351px;" width="18" height="18" viewBox="0 0 18 18"><path d="M2 2 L14 15 M14 2 L2 15" stroke="#111" stroke-width="2"/></svg>
<svg style="position:absolute;left:1505px;top:351px;" width="18" height="18" viewBox="0 0 18 18"><circle cx="11" cy="5" r="4.5" fill="#2040C0"/><circle cx="5" cy="11" r="4.5" fill="#2040C0"/><circle cx="10" cy="4" r="1.2" fill="#fff"/><circle cx="4" cy="10" r="1.2" fill="#fff"/></svg>
<svg style="position:absolute;left:1536px;top:351px;" width="18" height="18" viewBox="0 0 18 18"><path d="M7 2 L3 10 M7 2 L11 10 M3 10 V14 M11 10 V14" stroke="#999" stroke-width="1.3" fill="none"/><circle cx="3" cy="14" r="2" fill="none" stroke="#999"/><circle cx="11" cy="14" r="2" fill="none" stroke="#999"/></svg>
<svg style="position:absolute;left:1567px;top:351px;" width="18" height="18" viewBox="0 0 18 18"><circle cx="4" cy="4" r="3.5" fill="#2040C0"/><path d="M8 3 C11 2 12 5 12 7" stroke="#111" stroke-width="1.3" fill="none"/><rect x="8" y="8" width="9" height="9" fill="#111"/><rect x="10" y="8" width="5" height="4" fill="#E0E040"/></svg>
<svg style="position:absolute;left:1598px;top:351px;" width="18" height="18" viewBox="0 0 18 18"><rect x="1" y="1" width="15" height="15" fill="#D8D8E0" stroke="#999"/><ellipse cx="8.5" cy="8.5" rx="4" ry="5" fill="none" stroke="#2030A0" stroke-width="2.5"/></svg>
<svg style="position:absolute;left:1628px;top:351px;" width="18" height="18" viewBox="0 0 18 18"><path d="M2 5 L9 2 L16 5 L16 13 L9 16 L2 13Z" fill="#2030A0"/><path d="M4 6 L8 8 L4 10Z M10 9 L14 7 L14 11Z" fill="#fff"/></svg>
<svg style="position:absolute;left:1660px;top:351px;" width="18" height="18" viewBox="0 0 18 18"><path d="M5 3 V18 M12 3 V18" stroke="#111" stroke-width="1.8"/><path d="M9 3 L5 1 L1 6" stroke="#111" fill="none"/><path d="M12 2 L9 6 M12 2 L15 6" stroke="#111" stroke-width="1.5"/></svg>
<svg style="position:absolute;left:1684px;top:351px;" width="18" height="18" viewBox="0 0 18 18"><circle cx="10" cy="11" r="5" fill="none" stroke="#888" stroke-width="1.5"/><path d="M2 8 L7 3 L7 6 H12 V10 H7 V13Z" fill="#111"/></svg>
<svg style="position:absolute;left:1707px;top:351px;" width="18" height="18" viewBox="0 0 18 18"><circle cx="8" cy="5" r="4" fill="none" stroke="#888" stroke-width="1.5"/><circle cx="8" cy="14" r="4" fill="none" stroke="#888" stroke-width="1.5"/><path d="M4 10 H11 V7 L16 12 L11 17 V14 H4Z" fill="#111"/></svg>
<div style="left:1384px;top:382.94px;font-size:12px;line-height:13.8px;color:#000;transform:scaleX(0.8653);transform-origin:0 0;white-space:pre;">Bump:</div>
<svg style="position:absolute;left:1460px;top:377px;" width="16" height="16" viewBox="0 0 16 16"><path d="M2 2 L5 1 L8 4 L7 7Z" fill="#111"/><path d="M6 5 L14 13 L13 14 L5 6" fill="#fff" stroke="#111"/></svg>
<div style="left:1483px;top:376px;width:150px;height:20px;background:#E4E4E4;box-shadow:inset 1px 1px 0 #808080, inset 2px 2px 0 #404040, inset -1px -1px 0 #fff;"></div>
<div style="left:1616px;top:378px;width:15px;height:16px;background:#C8C8C8;box-shadow:inset 1px 1px 0 #fff, inset -1px -1px 0 #404040, inset -2px -2px 0 #808080;box-shadow:inset 1px 1px 0 #fff, inset -1px -1px 0 #404040;"></div>
<svg style="position:absolute;left:1616px;top:378px;" width="15" height="16" viewBox="0 0 15 16"><path d="M4 6.0 L11 6.0 L7.5 10.0Z" fill="#000"/></svg>
<div style="left:1487px;top:381.44px;font-size:12px;line-height:13.8px;color:#000;white-space:pre;">Map #47</div>
<div style="left:1638px;top:376px;width:88px;height:20px;background:#C8C8C8;box-shadow:inset 1px 1px 0 #fff, inset -1px -1px 0 #404040, inset -2px -2px 0 #808080;box-shadow:inset 1px 1px 0 #E8E8E8, inset -1px -1px 0 #707070;"></div>
<div style="left:1657.5px;top:380.94px;font-size:12px;line-height:13.8px;color:#000;transform:scaleX(0.8543);transform-origin:0 0;white-space:pre;">Composite</div>
<div style="left:1389px;top:403px;width:333px;height:125px;border-top:1px solid #808080;border-left:1px solid #808080;box-shadow:inset 1px 1px 0 #fff;"></div>
<div style="left:1392px;top:415px;width:327px;height:113px;border-top:1px solid #808080;border-left:1px solid #808080;border-right:1px solid #808080;box-shadow:inset 1px 1px 0 #fff, 1px 0 0 #fff;"></div>
<div style="left:1395px;top:407px;width:322px;height:16px;background:#B0B0B0;border:1px solid #000;box-shadow:inset 1px 1px 0 #D0D0D0;"></div>
<div style="left:1401px;top:408.94px;font-size:12px;line-height:13.8px;color:#000;white-space:pre;">-</div>
<div style="left:1504px;top:409.94px;font-size:12px;line-height:13.8px;color:#000;transform:scaleX(0.8557);transform-origin:0 0;white-space:pre;">Composite Parameters</div>
<div style="left:1452px;top:433px;width:66px;height:20px;background:#C8C8C8;box-shadow:inset 1px 1px 0 #fff, inset -1px -1px 0 #404040, inset -2px -2px 0 #808080;box-shadow:inset 1px 1px 0 #E8E8E8, inset -1px -1px 0 #707070;"></div>
<div style="left:1457.5px;top:437.94px;font-size:12px;line-height:13.8px;color:#000;transform:scaleX(0.8592);transform-origin:0 0;white-space:pre;">Set Number</div>
<div style="left:1527px;top:438.94px;font-size:12px;line-height:13.8px;color:#000;transform:scaleX(0.8694);transform-origin:0 0;white-space:pre;">Number of Maps:</div>
<div style="left:1611px;top:437px;width:29px;height:15px;background:#D8D8D8;box-shadow:inset 1px 1px 0 #808080, inset -1px -1px 0 #fff;"></div>
<div style="left:1613px;top:438.94px;font-size:12px;line-height:13.8px;color:#000;white-space:pre;">2</div>
<div style="left:1408px;top:461px;width:295px;height:67px;border-top:1px solid #808080;border-left:1px solid #808080;border-right:1px solid #808080;box-shadow:inset 1px 1px 0 #fff;"></div>
<div style="left:1680px;top:463px;width:19px;height:65px;background:#D0D0D0;"></div>
<div style="left:1680px;top:463px;width:19px;height:16px;background:#C8C8C8;box-shadow:inset 1px 1px 0 #fff, inset -1px -1px 0 #404040, inset -2px -2px 0 #808080;box-shadow:inset 1px 1px 0 #fff, inset -1px -1px 0 #404040;"></div>
<svg style="position:absolute;left:1680px;top:463px;" width="19" height="16" viewBox="0 0 19 16"><path d="M5.5 10 L9.5 6 L13.5 10Z" fill="#808080"/></svg>
<div style="left:1440px;top:472.94px;font-size:12px;line-height:13.8px;color:#000;transform:scaleX(0.8999);transform-origin:0 0;white-space:pre;">Map 1:</div>
<div style="left:1439px;top:498.94px;font-size:12px;line-height:13.8px;color:#000;transform:scaleX(0.8999);transform-origin:0 0;white-space:pre;">Map 2:</div>
<div style="left:1476px;top:468px;width:159px;height:20px;background:#C8C8C8;box-shadow:inset 1px 1px 0 #fff, inset -1px -1px 0 #404040, inset -2px -2px 0 #808080;box-shadow:inset 1px 1px 0 #E8E8E8, inset -1px -1px 0 #707070;"></div>
<div style="left:1479.5px;top:472.94px;font-size:12px;line-height:13.8px;color:#000;transform:scaleX(0.8800);transform-origin:0 0;white-space:pre;">Map #29 (Bark-AppleOld-04.jpg)</div>
<div style="left:1476px;top:493px;width:159px;height:20px;background:#C8C8C8;box-shadow:inset 1px 1px 0 #fff, inset -1px -1px 0 #404040, inset -2px -2px 0 #808080;box-shadow:inset 1px 1px 0 #E8E8E8, inset -1px -1px 0 #707070;"></div>
<div style="left:1512.0px;top:497.94px;font-size:12px;line-height:13.8px;color:#000;transform:scaleX(0.9000);transform-origin:0 0;white-space:pre;">Map #30  ( Mask )</div>
<div style="left:1640px;top:472px;width:12px;height:12px;background:#E8E8E8;box-shadow:inset 1px 1px 0 #808080, inset 2px 2px 0 #404040, inset -1px -1px 0 #fff;"></div>
<svg style="position:absolute;left:1640px;top:472px;" width="12" height="12" viewBox="0 0 12 12"><path d="M3 6 L5.5 9 L10 3.5" stroke="#000" stroke-width="2" fill="none"/></svg>
<div style="left:1640px;top:497px;width:12px;height:12px;background:#E8E8E8;box-shadow:inset 1px 1px 0 #808080, inset 2px 2px 0 #404040, inset -1px -1px 0 #fff;"></div>
<svg style="position:absolute;left:1640px;top:497px;" width="12" height="12" viewBox="0 0 12 12"><path d="M3 6 L5.5 9 L10 3.5" stroke="#000" stroke-width="2" fill="none"/></svg>
<div style="left:1377px;top:649px;width:363px;height:219px;background:#C8C8C8;"></div>
<div style="left:1384px;top:649px;width:309px;height:13px;background:#D0D0D0;box-shadow:inset 0 -1px 0 #808080;"></div>
<div style="left:1384px;top:649px;width:15px;height:13px;background:#C8C8C8;box-shadow:inset 1px 1px 0 #fff, inset -1px -1px 0 #404040, inset -2px -2px 0 #808080;box-shadow:inset 1px 1px 0 #fff, inset -1px -1px 0 #404040;"></div>
<svg style="position:absolute;left:1384px;top:649px;" width="15" height="13" viewBox="0 0 15 13"><path d="M10 2.5 L6 6.5 L10 10.5Z" fill="#808080"/></svg>
<div style="left:1678px;top:649px;width:15px;height:13px;background:#C8C8C8;box-shadow:inset 1px 1px 0 #fff, inset -1px -1px 0 #404040, inset -2px -2px 0 #808080;box-shadow:inset 1px 1px 0 #fff, inset -1px -1px 0 #404040;"></div>
<svg style="position:absolute;left:1678px;top:649px;" width="15" height="13" viewBox="0 0 15 13"><path d="M5 2.5 L9 6.5 L5 10.5Z" fill="#808080"/></svg>
<svg style="position:absolute;left:1714px;top:650px;" width="16" height="10" viewBox="0 0 16 10"><path d="M2 1 V9 M2 5 H6" stroke="#111" stroke-dasharray="1 1"/><circle cx="11" cy="5" r="4" fill="#2A50C0"/></svg>
<div style="left:1386px;top:672px;width:1px;height:18px;background:#808080;box-shadow:1px 0 0 #fff;"></div>
<div style="left:1438px;top:672px;width:1px;height:18px;background:#808080;box-shadow:1px 0 0 #fff;"></div>
<div style="left:1469px;top:672px;width:1px;height:18px;background:#808080;box-shadow:1px 0 0 #fff;"></div>
<div style="left:1500px;top:672px;width:1px;height:18px;background:#808080;box-shadow:1px 0 0 #fff;"></div>
<div style="left:1531px;top:672px;width:1px;height:18px;background:#808080;box-shadow:1px 0 0 #fff;"></div>
<div style="left:1562px;top:672px;width:1px;height:18px;background:#808080;box-shadow:1px 0 0 #fff;"></div>
<div style="left:1593px;top:672px;width:1px;height:18px;background:#808080;box-shadow:1px 0 0 #fff;"></div>
<div style="left:1624px;top:672px;width:1px;height:18px;background:#808080;box-shadow:1px 0 0 #fff;"></div>
<div style="left:1655px;top:672px;width:1px;height:18px;background:#808080;box-shadow:1px 0 0 #fff;"></div>
<div style="left:1659px;top:670px;width:22px;height:22px;background:#F0C850;box-shadow:inset 1px 1px 0 #fff, inset -1px -1px 0 #808080;"></div>
<svg style="position:absolute;left:1389px;top:673px;" width="18" height="18" viewBox="0 0 18 18"><path d="M2 2 L7 7 M7 3 V7 H3" stroke="#111" stroke-width="1.8" fill="none"/><circle cx="11" cy="12" r="5.5" fill="#2040C0"/><circle cx="10" cy="11" r="1.5" fill="#fff"/></svg>
<svg style="position:absolute;left:1412px;top:673px;" width="18" height="18" viewBox="0 0 18 18"><circle cx="5" cy="5" r="4" fill="#888"/><path d="M8 6 C12 4 14 9 9 11 L13 11 M2 16 L14 16 L17 11 L6 11Z" stroke="#888" stroke-width="1.3" fill="none"/></svg>
<svg style="position:absolute;left:1443px;top:673px;" width="18" height="18" viewBox="0 0 18 18"><circle cx="5" cy="4" r="3.5" fill="#2040C0"/><path d="M3 8 C2 12 5 13 8 13" stroke="#111" stroke-width="1.5" fill="none"/><rect x="9" y="8" width="7" height="7" fill="#fff" stroke="#303070" stroke-width="1.3"/></svg>
<svg style="position:absolute;left:1474px;top:673px;" width="18" height="18" viewBox="0 0 18 18"><path d="M2 2 L14 15 M14 2 L2 15" stroke="#111" stroke-width="2"/></svg>
<svg style="position:absolute;left:1505px;top:673px;" width="18" height="18" viewBox="0 0 18 18"><circle cx="11" cy="5" r="4.5" fill="#2040C0"/><circle cx="5" cy="11" r="4.5" fill="#2040C0"/><circle cx="10" cy="4" r="1.2" fill="#fff"/><circle cx="4" cy="10" r="1.2" fill="#fff"/></svg>
<svg style="position:absolute;left:1536px;top:673px;" width="18" height="18" viewBox="0 0 18 18"><path d="M7 2 L3 10 M7 2 L11 10 M3 10 V14 M11 10 V14" stroke="#999" stroke-width="1.3" fill="none"/><circle cx="3" cy="14" r="2" fill="none" stroke="#999"/><circle cx="11" cy="14" r="2" fill="none" stroke="#999"/></svg>
<svg style="position:absolute;left:1567px;top:673px;" width="18" height="18" viewBox="0 0 18 18"><circle cx="4" cy="4" r="3.5" fill="#2040C0"/><path d="M8 3 C11 2 12 5 12 7" stroke="#111" stroke-width="1.3" fill="none"/><rect x="8" y="8" width="9" height="9" fill="#111"/><rect x="10" y="8" width="5" height="4" fill="#E0E040"/></svg>
<svg style="position:absolute;left:1598px;top:673px;" width="18" height="18" viewBox="0 0 18 18"><rect x="1" y="1" width="15" height="15" fill="#D8D8E0" stroke="#999"/><ellipse cx="8.5" cy="8.5" rx="4" ry="5" fill="none" stroke="#2030A0" stroke-width="2.5"/></svg>
<svg style="position:absolute;left:1628px;top:673px;" width="18" height="18" viewBox="0 0 18 18"><path d="M2 5 L9 2 L16 5 L16 13 L9 16 L2 13Z" fill="#A0A0A0"/><path d="M4 6 L8 8 L4 10Z M10 9 L14 7 L14 11Z" fill="#E0E0E0"/></svg>
<svg style="position:absolute;left:1660px;top:673px;" width="18" height="18" viewBox="0 0 18 18"><path d="M5 3 V18 M12 3 V18" stroke="#111" stroke-width="1.8"/><path d="M9 3 L5 1 L1 6" stroke="#111" fill="none"/><path d="M12 2 L9 6 M12 2 L15 6" stroke="#111" stroke-width="1.5"/></svg>
<svg style="position:absolute;left:1684px;top:673px;" width="18" height="18" viewBox="0 0 18 18"><circle cx="10" cy="11" r="5" fill="none" stroke="#888" stroke-width="1.5"/><path d="M2 8 L7 3 L7 6 H12 V10 H7 V13Z" fill="#111"/></svg>
<svg style="position:absolute;left:1707px;top:673px;" width="18" height="18" viewBox="0 0 18 18"><circle cx="8" cy="5" r="4" fill="none" stroke="#888" stroke-width="1.5"/><circle cx="8" cy="14" r="4" fill="none" stroke="#888" stroke-width="1.5"/><path d="M4 10 H11 V7 L16 12 L11 17 V14 H4Z" fill="#111"/></svg>
<div style="left:1384px;top:706.94px;font-size:12px;line-height:13.8px;color:#000;transform:scaleX(0.8999);transform-origin:0 0;white-space:pre;">Map 2:</div>
<svg style="position:absolute;left:1460px;top:700px;" width="16" height="16" viewBox="0 0 16 16"><path d="M2 2 L5 1 L8 4 L7 7Z" fill="#111"/><path d="M6 5 L14 13 L13 14 L5 6" fill="#fff" stroke="#111"/></svg>
<div style="left:1483px;top:698px;width:150px;height:21px;background:#E4E4E4;box-shadow:inset 1px 1px 0 #808080, inset 2px 2px 0 #404040, inset -1px -1px 0 #fff;"></div>
<div style="left:1616px;top:700px;width:15px;height:17px;background:#C8C8C8;box-shadow:inset 1px 1px 0 #fff, inset -1px -1px 0 #404040, inset -2px -2px 0 #808080;box-shadow:inset 1px 1px 0 #fff, inset -1px -1px 0 #404040;"></div>
<svg style="position:absolute;left:1616px;top:700px;" width="15" height="17" viewBox="0 0 15 17"><path d="M4 6.5 L11 6.5 L7.5 10.5Z" fill="#000"/></svg>
<div style="left:1487px;top:703.94px;font-size:12px;line-height:13.8px;color:#000;white-space:pre;">Map #30</div>
<div style="left:1638px;top:698px;width:88px;height:20px;background:#C8C8C8;box-shadow:inset 1px 1px 0 #fff, inset -1px -1px 0 #404040, inset -2px -2px 0 #808080;box-shadow:inset 1px 1px 0 #E8E8E8, inset -1px -1px 0 #707070;"></div>
<div style="left:1669.5px;top:702.94px;font-size:12px;line-height:13.8px;color:#000;transform:scaleX(0.8719);transform-origin:0 0;white-space:pre;">Mask</div>
<div style="left:1388px;top:724px;width:339px;height:144px;box-shadow:inset 1px 1px 0 #808080, inset 2px 2px 0 #fff;"></div>
<div style="left:1392px;top:737px;width:329px;height:116px;border:1px solid #808080;box-shadow:1px 1px 0 #fff, inset 1px 1px 0 #fff;"></div>
<div style="left:1395px;top:729px;width:322px;height:16px;background:#B0B0B0;border:1px solid #000;box-shadow:inset 1px 1px 0 #D0D0D0;"></div>
<div style="left:1401px;top:730.94px;font-size:12px;line-height:13.8px;color:#000;white-space:pre;">-</div>
<div style="left:1515px;top:731.94px;font-size:12px;line-height:13.8px;color:#000;transform:scaleX(0.8722);transform-origin:0 0;white-space:pre;">Mask Parameters</div>
<div style="left:1434px;top:779.94px;font-size:12px;line-height:13.8px;color:#000;transform:scaleX(0.9373);transform-origin:0 0;white-space:pre;">Map:</div>
<div style="left:1434px;top:798.94px;font-size:12px;line-height:13.8px;color:#000;transform:scaleX(0.8750);transform-origin:0 0;white-space:pre;">Mask:</div>
<div style="left:1477px;top:771px;width:161px;height:20px;background:#C8C8C8;box-shadow:inset 1px 1px 0 #fff, inset -1px -1px 0 #404040, inset -2px -2px 0 #808080;box-shadow:inset 1px 1px 0 #E8E8E8, inset -1px -1px 0 #707070;"></div>
<div style="left:1513.5px;top:775.94px;font-size:12px;line-height:13.8px;color:#000;transform:scaleX(0.8917);transform-origin:0 0;white-space:pre;">Map #51  ( Noise )</div>
<div style="left:1477px;top:795px;width:161px;height:20px;background:#C8C8C8;box-shadow:inset 1px 1px 0 #fff, inset -1px -1px 0 #404040, inset -2px -2px 0 #808080;box-shadow:inset 1px 1px 0 #E8E8E8, inset -1px -1px 0 #707070;"></div>
<div style="left:1491.5px;top:799.94px;font-size:12px;line-height:13.8px;color:#000;transform:scaleX(0.8838);transform-origin:0 0;white-space:pre;">Map #48  ( Gradient Ramp )</div>
<div style="left:1647px;top:774px;width:13px;height:13px;background:#E8E8E8;box-shadow:inset 1px 1px 0 #808080, inset 2px 2px 0 #404040, inset -1px -1px 0 #fff;"></div>
<svg style="position:absolute;left:1647px;top:774px;" width="13" height="13" viewBox="0 0 13 13"><path d="M3 6 L5.5 9 L10 3.5" stroke="#000" stroke-width="2" fill="none"/></svg>
<div style="left:1648px;top:800px;width:13px;height:13px;background:#E8E8E8;box-shadow:inset 1px 1px 0 #808080, inset 2px 2px 0 #404040, inset -1px -1px 0 #fff;"></div>
<svg style="position:absolute;left:1648px;top:800px;" width="13" height="13" viewBox="0 0 13 13"><path d="M3 6 L5.5 9 L10 3.5" stroke="#000" stroke-width="2" fill="none"/></svg>
<div style="left:1527px;top:827px;width:13px;height:13px;background:#E8E8E8;box-shadow:inset 1px 1px 0 #808080, inset 2px 2px 0 #404040, inset -1px -1px 0 #fff;"></div>
<div style="left:1545px;top:828.94px;font-size:12px;line-height:13.8px;color:#000;transform:scaleX(0.9032);transform-origin:0 0;white-space:pre;">Invert Mask</div>
<div style="left:1409px;top:948px;width:334px;height:36px;background:#C8C8C8;box-shadow:inset 1px 0 0 #808080, inset 3px 0 0 #fff, inset -3px 0 0 #fff;"></div>
<div style="left:1420px;top:953px;width:13px;height:13px;background:#E8E8E8;box-shadow:inset 1px 1px 0 #808080, inset 2px 2px 0 #404040, inset -1px -1px 0 #fff;"></div>
<svg style="position:absolute;left:1420px;top:953px;" width="13" height="13" viewBox="0 0 13 13"><path d="M3 6 L5.5 9 L10 3.5" stroke="#000" stroke-width="2" fill="none"/></svg>
<div style="left:1438px;top:955.94px;font-size:12px;line-height:13.8px;color:#000;transform:scaleX(0.8367);transform-origin:0 0;white-space:pre;">Self-Illumination .</div>
<div style="left:1523px;top:953px;width:30px;height:16px;background:#E0E0E0;box-shadow:inset 1px 1px 0 #000, inset -1px -1px 0 #fff;"></div>
<div style="left:1526px;top:955.94px;font-size:12px;line-height:13.8px;color:#000;white-space:pre;">20</div>
<div style="left:1554px;top:953px;width:11px;height:16px;background:#C8C8C8;"></div>
<svg style="position:absolute;left:1554px;top:953px;" width="11" height="16" viewBox="0 0 11 16"><path d="M2.5 6.5 L5.5 3.0 L8.5 6.5Z M2.5 9.5 L5.5 13.0 L8.5 9.5Z" fill="#000"/></svg>
<div style="left:1572px;top:953px;width:149px;height:17px;background:#C8C8C8;box-shadow:inset 1px 1px 0 #fff, inset -1px -1px 0 #404040, inset -2px -2px 0 #808080;box-shadow:inset 1px 1px 0 #E8E8E8, inset -1px -1px 0 #707070;"></div>
<div style="left:1580.5px;top:956.94px;font-size:12px;line-height:13.8px;color:#000;transform:scaleX(0.8838);transform-origin:0 0;white-space:pre;">Map #48  ( Gradient Ramp )</div>
<div style="left:1420px;top:972px;width:13px;height:13px;background:#E8E8E8;box-shadow:inset 1px 1px 0 #808080, inset 2px 2px 0 #404040, inset -1px -1px 0 #fff;"></div>
<div style="left:1438px;top:974.94px;font-size:12px;line-height:13.8px;color:#000;transform:scaleX(0.8624);transform-origin:0 0;white-space:pre;">Opacity . . . . . . . .</div>
<div style="left:1523px;top:972px;width:30px;height:16px;background:#E0E0E0;box-shadow:inset 1px 1px 0 #000, inset -1px -1px 0 #fff;"></div>
<div style="left:1526px;top:974.94px;font-size:12px;line-height:13.8px;color:#000;white-space:pre;">100</div>
<div style="left:1554px;top:972px;width:11px;height:16px;background:#C8C8C8;"></div>
<svg style="position:absolute;left:1554px;top:972px;" width="11" height="16" viewBox="0 0 11 16"><path d="M2.5 6.5 L5.5 3.0 L8.5 6.5Z M2.5 9.5 L5.5 13.0 L8.5 9.5Z" fill="#000"/></svg>
<div style="left:1572px;top:972px;width:149px;height:13px;background:#C8C8C8;box-shadow:inset 1px 1px 0 #fff, inset -1px -1px 0 #404040, inset -2px -2px 0 #808080;box-shadow:inset 1px 1px 0 #E8E8E8, inset -1px -1px 0 #707070;"></div>
<div style="left:1633.5px;top:975.94px;font-size:12px;line-height:13.8px;color:#000;transform:scaleX(0.9063);transform-origin:0 0;white-space:pre;">None</div>
<div style="left:1389px;top:869px;width:1px;height:157px;background:#fff;"></div>
<div style="left:1739px;top:187px;width:51px;height:70px;background:#C8C8C8;box-shadow:inset -1px -1px 0 #404040, inset -2px -2px 0 #808080, inset 0 1px 0 #fff;"></div>
<div style="left:1739px;top:190px;width:48px;height:17px;background:#A0A0A0;"></div>
<div style="left:1741px;top:193.94px;font-size:12px;line-height:13.8px;color:#D4D0C8;font-weight:bold;white-space:pre;">tion</div>
<div style="left:1769px;top:191px;width:16px;height:14px;background:#D4D0C8;box-shadow:inset 1px 1px 0 #fff, inset -1px -1px 0 #404040;"></div>
<svg style="position:absolute;left:1769px;top:191px;" width="16" height="14" viewBox="0 0 16 14"><path d="M4.5 3.5 L11.5 10.5 M11.5 3.5 L4.5 10.5" stroke="#000" stroke-width="1.6"/></svg>
<div style="left:1739px;top:217px;width:40px;height:32px;background:#F0C850;box-shadow:inset -1px -1px 0 #fff;"></div>
<div style="left:920.5px;top:956.51px;font-size:32px;line-height:36.8px;color:#fff;font-weight:bold;transform:scaleX(1.1415);transform-origin:0 0;white-space:pre;-webkit-text-stroke:1.3px #fff;">superka-01.livejournal.com</div>
<div style="left:920.5px;top:993.51px;font-size:32px;line-height:36.8px;color:#fff;font-weight:bold;transform:scaleX(1.1249);transform-origin:0 0;white-space:pre;-webkit-text-stroke:1.3px #fff;">superka-photo.com</div>
<svg style="position:absolute;left:1470px;top:490px;" width="45" height="165" viewBox="0 0 45 165"><path d="M4 3 H30" stroke="#F00000" stroke-width="3.5" fill="none"/><path d="M5.5 3 V25" stroke="#F00000" stroke-width="3.5"/><path d="M4 24.5 H40" stroke="#F00000" stroke-width="3.5"/><path d="M18 24 H27 L26.5 118 L41 93 L22 162 L4.5 93 L19 118Z" fill="#F00000"/></svg>
</body></html>
